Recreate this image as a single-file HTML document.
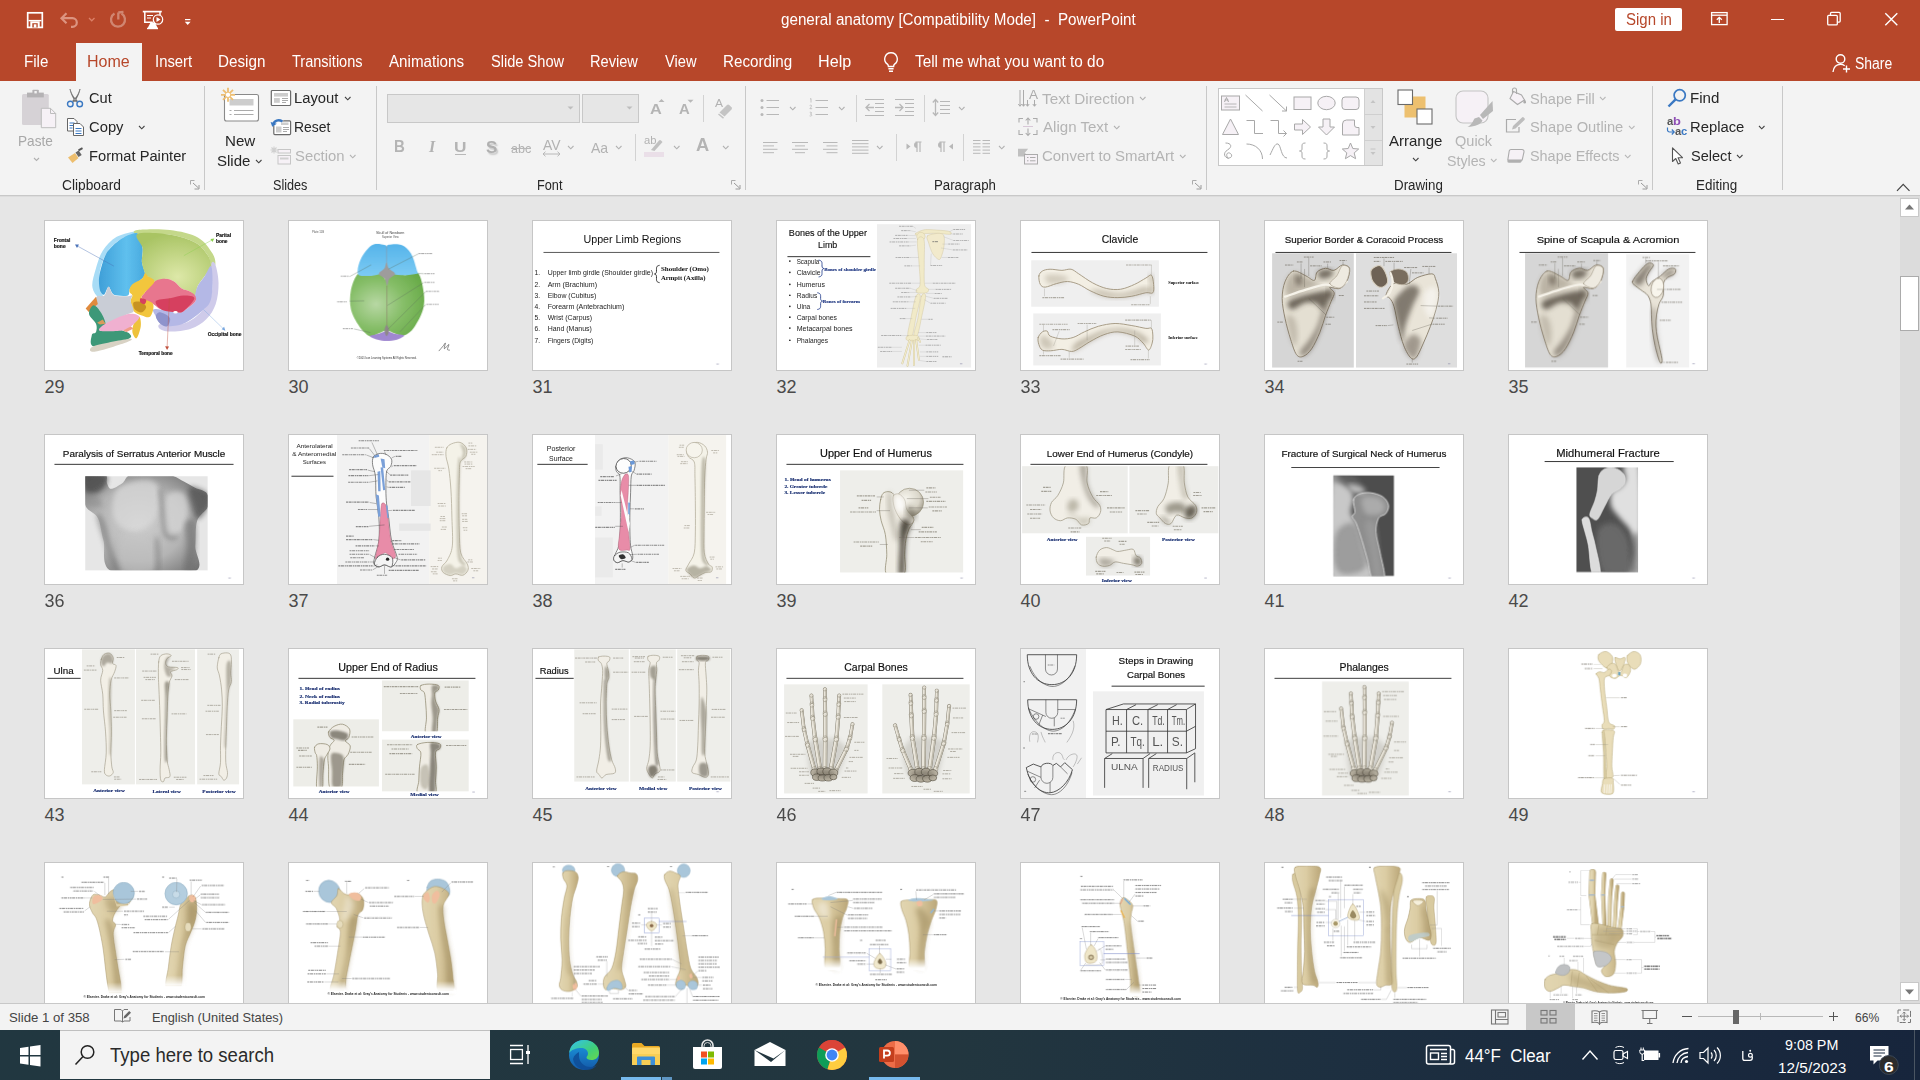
<!DOCTYPE html><html><head><meta charset="utf-8"><title>general anatomy - PowerPoint</title><style>html,body{margin:0;padding:0}
body{width:1920px;height:1080px;position:relative;overflow:hidden;background:#E6E6E6;font-family:"Liberation Sans",sans-serif}
.t{position:absolute;white-space:pre;line-height:1;transform-origin:0 0;display:block}
.a{position:absolute;display:block;overflow:visible}
.th{position:absolute;width:200px;height:151px;box-sizing:border-box;border:1px solid #C6C6C6;background:#fff;overflow:hidden}
.th svg{position:absolute;left:0;top:0;display:block}
.n{position:absolute;font-size:18px;line-height:1;color:#4a4a4a;white-space:nowrap}
</style></head><body>
<svg width="0" height="0" style="position:absolute"><defs><linearGradient id="gbg" x1="0" y1="0" x2="1" y2="0"><stop offset="0" stop-color="#E2D6B2"/><stop offset=".45" stop-color="#DCCDA4"/><stop offset="1" stop-color="#BCA87A"/></linearGradient><filter id="blur0" x="-5%" y="-5%" width="110%" height="110%"><feGaussianBlur stdDeviation="1.1"/></filter><filter id="blur1" x="-5%" y="-5%" width="110%" height="110%"><feGaussianBlur stdDeviation="3"/></filter><filter id="blur3" x="-25%" y="-10%" width="150%" height="120%"><feGaussianBlur stdDeviation="7"/></filter><filter id="blur2" x="-25%" y="-25%" width="150%" height="150%"><feGaussianBlur stdDeviation="18"/></filter></defs></svg>
<div class="th" style="left:44px;top:220px"><svg width="198" height="149" viewBox="0 0 198 149"><g transform="translate(-1 -1) scale(0.13986)" filter="url(#blur1)"><defs><linearGradient id="s29b" x1="0" y1="0" x2="1" y2="0"><stop offset="0" stop-color="#3F9FD8"/><stop offset=".6" stop-color="#5FC0EE"/><stop offset="1" stop-color="#48A9DE"/></linearGradient><radialGradient id="s29g" cx=".55" cy=".7" r=".7"><stop offset="0" stop-color="#DDE8A8"/><stop offset="1" stop-color="#A9C464"/></radialGradient></defs><path d="M665.0 78.0 C640.8 82.2 560.8 96.3 520.0 120.0 C479.2 143.7 445.0 181.7 420.0 220.0 C395.0 258.3 382.5 308.3 370.0 350.0 C357.5 391.7 343.3 437.5 345.0 470.0 C346.7 502.5 367.5 533.3 380.0 545.0 C392.5 556.7 417.5 564.2 420.0 540.0 C422.5 515.8 390.8 450.0 395.0 400.0 C399.2 350.0 420.0 283.3 445.0 240.0 C470.0 196.7 508.3 164.2 545.0 140.0 C581.7 115.8 645.0 105.3 665.0 95.0 C685.0 84.7 689.2 73.8 665.0 78.0Z" fill="#A8DCF6" /><path d="M670.0 72.0 C708.3 67.3 828.3 63.2 900.0 72.0 C971.7 80.8 1049.2 97.0 1100.0 125.0 C1150.8 153.0 1184.2 207.8 1205.0 240.0 C1225.8 272.2 1226.7 304.3 1225.0 318.0 C1223.3 331.7 1204.2 333.3 1195.0 322.0 C1185.8 310.7 1189.2 277.0 1170.0 250.0 C1150.8 223.0 1125.0 184.2 1080.0 160.0 C1035.0 135.8 968.3 115.0 900.0 105.0 C831.7 95.0 708.3 105.5 670.0 100.0 C631.7 94.5 631.7 76.7 670.0 72.0Z" fill="#C4D88A" /><path d="M1225.0 318.0 C1233.8 339.3 1247.5 403.0 1248.0 450.0 C1248.5 497.0 1242.7 556.7 1228.0 600.0 C1213.3 643.3 1189.7 680.3 1160.0 710.0 C1130.3 739.7 1093.3 763.3 1050.0 778.0 C1006.7 792.7 937.5 798.5 900.0 798.0 C862.5 797.5 835.0 784.7 825.0 775.0 C815.0 765.3 810.8 745.8 840.0 740.0 C869.2 734.2 951.7 755.0 1000.0 740.0 C1048.3 725.0 1096.7 686.7 1130.0 650.0 C1163.3 613.3 1189.2 574.7 1200.0 520.0 C1210.8 465.3 1190.8 355.7 1195.0 322.0 C1199.2 288.3 1216.2 296.7 1225.0 318.0Z" fill="#CFCBEA" /><path d="M665.0 95.0 C643.7 87.0 574.3 120.7 545.0 140.0 C515.7 159.3 465.0 205.3 445.0 240.0 C425.0 274.7 401.0 365.3 395.0 400.0 C389.0 434.7 395.3 482.0 400.0 500.0 C404.7 518.0 421.7 537.9 430.0 535.0 C438.3 532.1 452.7 478.0 462.0 478.0 C471.3 478.0 481.6 526.7 500.0 535.0 C518.4 543.3 584.3 546.7 600.0 540.0 C615.7 533.3 604.7 501.0 618.0 485.0 C631.3 469.0 686.1 434.0 700.0 420.0 C713.9 406.0 722.0 396.0 722.0 380.0 C722.0 364.0 702.3 324.0 700.0 300.0 C697.7 276.0 709.7 227.3 705.0 200.0 C700.3 172.7 686.3 103.0 665.0 95.0Z" fill="url(#s29b)" /><path d="M670.0 100.0 C702.5 84.2 831.7 95.0 900.0 105.0 C968.3 115.0 1035.0 135.8 1080.0 160.0 C1125.0 184.2 1150.8 223.0 1170.0 250.0 C1189.2 277.0 1191.7 306.2 1195.0 322.0 C1198.3 337.8 1197.5 332.0 1190.0 345.0 C1182.5 358.0 1165.0 379.2 1150.0 400.0 C1135.0 420.8 1111.7 446.7 1100.0 470.0 C1088.3 493.3 1090.0 533.3 1080.0 540.0 C1070.0 546.7 1055.8 518.3 1040.0 510.0 C1024.2 501.7 1003.3 501.7 985.0 490.0 C966.7 478.3 949.2 451.7 930.0 440.0 C910.8 428.3 893.3 420.0 870.0 420.0 C846.7 420.0 811.7 443.0 790.0 440.0 C768.3 437.0 751.3 412.0 740.0 402.0 C728.7 392.0 728.7 397.0 722.0 380.0 C715.3 363.0 702.8 330.0 700.0 300.0 C697.2 270.0 710.0 233.3 705.0 200.0 C700.0 166.7 637.5 115.8 670.0 100.0Z" fill="url(#s29g)" /><path d="M1195.0 330.0 C1204.2 338.3 1205.8 408.3 1205.0 450.0 C1204.2 491.7 1202.5 546.7 1190.0 580.0 C1177.5 613.3 1161.7 623.3 1130.0 650.0 C1098.3 676.7 1041.7 721.7 1000.0 740.0 C958.3 758.3 908.3 760.0 880.0 760.0 C851.7 760.0 843.3 751.7 830.0 740.0 C816.7 728.3 808.3 706.7 800.0 690.0 C791.7 673.3 773.3 648.3 780.0 640.0 C786.7 631.7 811.7 636.7 840.0 640.0 C868.3 643.3 923.3 658.3 950.0 660.0 C976.7 661.7 978.3 662.5 1000.0 650.0 C1021.7 637.5 1066.7 603.3 1080.0 585.0 C1093.3 566.7 1076.7 559.2 1080.0 540.0 C1083.3 520.8 1088.3 493.3 1100.0 470.0 C1111.7 446.7 1134.2 423.3 1150.0 400.0 C1165.8 376.7 1185.8 321.7 1195.0 330.0Z" fill="#B4B8E6" /><path d="M830.0 660.0 C846.7 661.7 891.7 683.3 900.0 700.0 C908.3 716.7 891.7 753.3 880.0 760.0 C868.3 766.7 843.3 751.7 830.0 740.0 C816.7 728.3 800.0 703.3 800.0 690.0 C800.0 676.7 813.3 658.3 830.0 660.0Z" fill="#8E93CC" /><path d="M870.0 420.0 C893.3 420.0 910.8 428.3 930.0 440.0 C949.2 451.7 966.7 478.3 985.0 490.0 C1003.3 501.7 1024.2 501.7 1040.0 510.0 C1055.8 518.3 1073.3 527.5 1080.0 540.0 C1086.7 552.5 1093.3 566.7 1080.0 585.0 C1066.7 603.3 1021.7 637.5 1000.0 650.0 C978.3 662.5 976.7 661.7 950.0 660.0 C923.3 658.3 868.3 650.0 840.0 640.0 C811.7 630.0 803.3 613.3 780.0 600.0 C756.7 586.7 710.0 573.3 700.0 560.0 C690.0 546.7 705.0 540.0 720.0 520.0 C735.0 500.0 765.0 456.7 790.0 440.0 C815.0 423.3 846.7 420.0 870.0 420.0Z" fill="#E8768E" /><path d="M800.0 580.0 C810.0 566.7 866.7 566.7 900.0 560.0 C933.3 553.3 970.8 540.0 1000.0 540.0 C1029.2 540.0 1075.0 541.7 1075.0 560.0 C1075.0 578.3 1020.8 633.3 1000.0 650.0 C979.2 666.7 976.7 661.7 950.0 660.0 C923.3 658.3 865.0 653.3 840.0 640.0 C815.0 626.7 790.0 593.3 800.0 580.0Z" fill="#D6405E" /><ellipse cx="940" cy="660" rx="16" ry="9" fill="#fff"/><path d="M722.0 380.0 C729.0 377.0 730.7 392.0 742.0 402.0 C753.3 412.0 793.7 420.3 790.0 440.0 C786.3 459.7 735.0 500.0 720.0 520.0 C705.0 540.0 690.0 546.7 700.0 560.0 C710.0 573.3 770.0 578.3 780.0 600.0 C790.0 621.7 773.3 676.3 760.0 690.0 C746.7 703.7 720.0 688.7 700.0 682.0 C680.0 675.3 653.3 667.0 640.0 650.0 C626.7 633.0 621.3 598.3 620.0 580.0 C618.7 561.7 633.7 551.7 632.0 540.0 C630.3 528.3 610.3 523.0 610.0 510.0 C609.7 497.0 615.0 477.0 630.0 462.0 C645.0 447.0 684.7 433.7 700.0 420.0 C715.3 406.3 715.0 383.0 722.0 380.0Z" fill="#F2C63C" /><path d="M640.0 590.0 C646.7 580.8 675.0 580.0 690.0 585.0 C705.0 590.0 728.3 607.5 730.0 620.0 C731.7 632.5 713.3 656.7 700.0 660.0 C686.7 663.3 660.0 651.7 650.0 640.0 C640.0 628.3 633.3 599.2 640.0 590.0Z" fill="#C79322" /><path d="M690.0 560.0 C696.7 556.7 725.0 563.3 730.0 570.0 C735.0 576.7 726.7 596.7 720.0 600.0 C713.3 603.3 695.0 596.7 690.0 590.0 C685.0 583.3 683.3 563.3 690.0 560.0Z" fill="#D6405E" /><path d="M645.0 735.0 C653.3 717.0 674.2 687.8 682.0 692.0 C689.8 696.2 695.3 734.5 692.0 760.0 C688.7 785.5 672.0 838.3 662.0 845.0 C652.0 851.7 634.8 818.3 632.0 800.0 C629.2 781.7 636.7 753.0 645.0 735.0Z" fill="#EEC23A" /><path d="M462.0 478.0 C473.3 477.7 477.0 526.8 500.0 538.0 C523.0 549.2 578.3 544.7 600.0 545.0 C621.7 545.3 626.7 534.2 630.0 540.0 C633.3 545.8 618.3 561.7 620.0 580.0 C621.7 598.3 643.3 634.7 640.0 650.0 C636.7 665.3 633.3 656.7 600.0 672.0 C566.7 687.3 473.3 745.7 440.0 742.0 C406.7 738.3 413.0 673.7 400.0 650.0 C387.0 626.3 365.3 617.5 362.0 600.0 C358.7 582.5 368.3 555.0 380.0 545.0 C391.7 535.0 418.3 551.2 432.0 540.0 C445.7 528.8 450.7 478.3 462.0 478.0Z" fill="#C9CDD6" /><path d="M372.0 548.0 L298.0 632.0 L320.0 658.0 L385.0 600.0Z" fill="#E08A3C" /><path d="M352.0 610.0 C339.0 613.7 318.7 650.0 322.0 672.0 C325.3 694.0 363.7 720.7 372.0 742.0 C380.3 763.3 377.0 786.7 372.0 800.0 C367.0 813.3 344.0 804.5 342.0 822.0 C340.0 839.5 317.0 900.0 360.0 905.0 C403.0 910.0 558.3 867.5 600.0 852.0 C641.7 836.5 616.7 822.3 610.0 812.0 C603.3 801.7 571.7 795.3 560.0 790.0 C548.3 784.7 566.7 779.7 540.0 780.0 C513.3 780.3 416.7 798.3 400.0 792.0 C383.3 785.7 440.0 765.7 440.0 742.0 C440.0 718.3 414.7 672.0 400.0 650.0 C385.3 628.0 365.0 606.3 352.0 610.0Z" fill="#3E9878" /><path d="M380.0 735.0 L420.0 712.0 L440.0 742.0 L400.0 748.0Z" fill="#D89A5C" /><path d="M400.0 792.0 C380.0 784.0 406.7 762.0 440.0 742.0 C473.3 722.0 559.7 680.3 600.0 672.0 C640.3 663.7 678.3 677.0 682.0 692.0 C685.7 707.0 642.3 745.7 622.0 762.0 C601.7 778.3 597.0 785.0 560.0 790.0 C523.0 795.0 420.0 800.0 400.0 792.0Z" fill="#F0B0D0" /><path d="M565.0 790.0 L620.0 762.0 L640.0 775.0 L590.0 800.0Z" fill="#F09C86" /><path d="M355.0 902.0 C394.7 886.7 559.8 855.0 600.0 850.0 C640.2 845.0 635.7 856.7 596.0 872.0 C556.3 887.3 402.2 937.0 362.0 942.0 C321.8 947.0 315.3 917.3 355.0 902.0Z" fill="#D8D2C4" /><path d="M500 330L228 180" stroke="#4A72B8" stroke-width="3" fill="none" /><path d="M222.0 176.0 L250.0 176.0 L236.0 200.0Z" fill="#4A72B8" /><path d="M1000 255L1210 138" stroke="#8CD050" stroke-width="3" fill="none" /><path d="M1218.0 133.0 L1190.0 136.0 L1204.0 158.0Z" fill="#8CD050" /><path d="M1140 640L1290 785" stroke="#7AA8E0" stroke-width="3" fill="none" /><path d="M1297.0 792.0 L1270.0 782.0 L1288.0 764.0Z" fill="#7AA8E0" /><path d="M897 560L880 915" stroke="#C0503C" stroke-width="3" fill="none" /><path d="M880.0 930.0 L866.0 902.0 L894.0 904.0Z" fill="#C0503C" /><text x="70" y="158" font-size="36" textLength="118" lengthAdjust="spacingAndGlyphs" fill="#111" font-family="Liberation Sans" font-weight="bold" stroke="#111" stroke-width="1.2">Frontal</text><text x="70" y="200" font-size="36" textLength="85" lengthAdjust="spacingAndGlyphs" fill="#111" font-family="Liberation Sans" font-weight="bold" stroke="#111" stroke-width="1.2">bone</text><text x="1230" y="120" font-size="36" textLength="108" lengthAdjust="spacingAndGlyphs" fill="#111" font-family="Liberation Sans" font-weight="bold" stroke="#111" stroke-width="1.2">Parital</text><text x="1230" y="163" font-size="36" textLength="82" lengthAdjust="spacingAndGlyphs" fill="#111" font-family="Liberation Sans" font-weight="bold" stroke="#111" stroke-width="1.2">bone</text><text x="1170" y="830" font-size="36" textLength="242" lengthAdjust="spacingAndGlyphs" fill="#111" font-family="Liberation Sans" font-weight="bold" stroke="#111" stroke-width="1.2">Occipital bone</text><text x="678" y="965" font-size="36" textLength="242" lengthAdjust="spacingAndGlyphs" fill="#111" font-family="Liberation Sans" font-weight="bold" stroke="#111" stroke-width="1.2">Temporal bone</text></g></svg></div>
<div class="n" style="left:44.5px;top:377.5px">29</div>
<div class="th" style="left:288px;top:220px"><svg width="198" height="149" viewBox="0 0 198 149"><g transform="translate(-1 -1) scale(0.13986)" filter="url(#blur1)"><defs><radialGradient id="s30g" cx=".35" cy=".5" r=".75"><stop offset="0" stop-color="#B8D8A4"/><stop offset=".5" stop-color="#86BE68"/><stop offset="1" stop-color="#64A844"/></radialGradient><linearGradient id="s30b" x1="0" y1="0" x2="0" y2="1"><stop offset="0" stop-color="#56B4EA"/><stop offset="1" stop-color="#7CCBF4"/></linearGradient></defs><path d="M500.0 385.0 C520.0 368.3 543.3 400.0 570.0 400.0 C596.7 400.0 637.5 380.0 660.0 385.0 C682.5 390.0 690.0 430.0 705.0 430.0 C720.0 430.0 727.5 390.8 750.0 385.0 C772.5 379.2 810.0 395.8 840.0 395.0 C870.0 394.2 908.3 359.2 930.0 380.0 C951.7 400.8 964.2 476.7 970.0 520.0 C975.8 563.3 976.7 598.3 965.0 640.0 C953.3 681.7 922.5 739.2 900.0 770.0 C877.5 800.8 853.3 818.3 830.0 825.0 C806.7 831.7 780.8 815.8 760.0 810.0 C739.2 804.2 723.3 790.0 705.0 790.0 C686.7 790.0 670.0 803.3 650.0 810.0 C630.0 816.7 608.3 838.3 585.0 830.0 C561.7 821.7 532.5 791.7 510.0 760.0 C487.5 728.3 460.0 683.3 450.0 640.0 C440.0 596.7 441.7 542.5 450.0 500.0 C458.3 457.5 480.0 401.7 500.0 385.0Z" fill="url(#s30g)" /><path d="M600.0 180.0 C628.3 163.0 672.5 176.3 690.0 178.0 C707.5 179.7 700.0 190.3 705.0 190.0 C710.0 189.7 702.5 178.0 720.0 176.0 C737.5 174.0 783.3 167.3 810.0 178.0 C836.7 188.7 860.8 208.0 880.0 240.0 C899.2 272.0 916.7 346.3 925.0 370.0 C933.3 393.7 944.2 377.8 930.0 382.0 C915.8 386.2 870.0 394.5 840.0 395.0 C810.0 395.5 772.5 393.3 750.0 385.0 C727.5 376.7 720.0 345.0 705.0 345.0 C690.0 345.0 682.5 375.8 660.0 385.0 C637.5 394.2 596.7 400.0 570.0 400.0 C543.3 400.0 508.3 405.0 500.0 385.0 C491.7 365.0 503.3 314.2 520.0 280.0 C536.7 245.8 571.7 197.0 600.0 180.0Z" fill="url(#s30b)" /><path d="M705.0 300.0 C710.0 300.0 710.0 330.8 720.0 345.0 C730.0 359.2 764.2 372.5 765.0 385.0 C765.8 397.5 734.5 405.8 725.0 420.0 C715.5 434.2 713.5 470.0 708.0 470.0 C702.5 470.0 701.7 434.2 692.0 420.0 C682.3 405.8 650.3 397.5 650.0 385.0 C649.7 372.5 680.8 359.2 690.0 345.0 C699.2 330.8 700.0 300.0 705.0 300.0Z" fill="#9E9C9C" /><path d="M705 185L705 300" stroke="#8a9aa8" stroke-width="4" fill="none" /><path d="M707 470L707 760" stroke="#8C8A6C" stroke-width="5" fill="none" /><path d="M585.0 830.0 C586.7 822.8 630.0 817.8 650.0 812.0 C670.0 806.2 686.7 795.0 705.0 795.0 C723.3 795.0 739.2 806.8 760.0 812.0 C780.8 817.2 826.7 818.8 830.0 826.0 C833.3 833.2 800.8 848.5 780.0 855.0 C759.2 861.5 728.3 865.0 705.0 865.0 C681.7 865.0 660.0 860.8 640.0 855.0 C620.0 849.2 583.3 837.2 585.0 830.0Z" fill="#A088D0" /><path d="M705.0 750.0 C710.3 750.0 722.0 776.7 722.0 790.0 C722.0 803.3 710.3 830.0 705.0 830.0 C699.7 830.0 690.0 803.3 690.0 790.0 C690.0 776.7 699.7 750.0 705.0 750.0Z" fill="#8E8888" /><path d="M440 405L595 320" stroke="#5a6a5a" stroke-width="2.5" fill="none" /><path d="M720 350L935 240" stroke="#5a6a5a" stroke-width="2.5" fill="none" /><path d="M930 382L970 384" stroke="#5a6a5a" stroke-width="2.5" fill="none" /><path d="M712 610L970 448" stroke="#5a6a5a" stroke-width="2.5" fill="none" /><path d="M715 780L985 512" stroke="#5a6a5a" stroke-width="2.5" fill="none" /><path d="M800 800L985 604" stroke="#5a6a5a" stroke-width="2.5" fill="none" /><path d="M440 580L545 578" stroke="#5a6a5a" stroke-width="2.5" fill="none" /><path d="M470 778L590 805" stroke="#5a6a5a" stroke-width="2.5" fill="none" /><path d="M378 402H438" stroke="#8a8a8a" stroke-width="7" stroke-dasharray="14 4 22 5 9 4" opacity=".75"/><path d="M935 240H1030" stroke="#8a8a8a" stroke-width="7" stroke-dasharray="14 4 22 5 9 4" opacity=".75"/><path d="M975 384H1048" stroke="#8a8a8a" stroke-width="7" stroke-dasharray="14 4 22 5 9 4" opacity=".75"/><path d="M975 446H1048" stroke="#8a8a8a" stroke-width="7" stroke-dasharray="14 4 22 5 9 4" opacity=".75"/><path d="M985 510H1080" stroke="#8a8a8a" stroke-width="7" stroke-dasharray="14 4 22 5 9 4" opacity=".75"/><path d="M990 603H1078" stroke="#8a8a8a" stroke-width="7" stroke-dasharray="14 4 22 5 9 4" opacity=".75"/><path d="M352 585H420" stroke="#8a8a8a" stroke-width="7" stroke-dasharray="14 4 22 5 9 4" opacity=".75"/><path d="M392 777H465" stroke="#8a8a8a" stroke-width="7" stroke-dasharray="14 4 22 5 9 4" opacity=".75"/><text x="630" y="102" font-size="30" textLength="202" lengthAdjust="spacingAndGlyphs" fill="#444" font-family="Liberation Sans" >Skull of Newborn</text><text x="672" y="130" font-size="20" textLength="120" lengthAdjust="spacingAndGlyphs" fill="#555" font-family="Liberation Sans" >Superior View</text><text x="172" y="96" font-size="20" textLength="86" lengthAdjust="spacingAndGlyphs" fill="#555" font-family="Liberation Sans" >Plate 11B</text><text x="492" y="996" font-size="21" textLength="428" lengthAdjust="spacingAndGlyphs" fill="#333" font-family="Liberation Sans" >©2001 Icon Learning Systems All Rights Reserved.</text><path d="M1080.0 935.0 C1085.0 929.2 1102.5 909.2 1110.0 900.0 C1117.5 890.8 1123.7 876.7 1125.0 880.0 C1126.3 883.3 1113.8 918.3 1118.0 920.0 C1122.2 921.7 1146.3 889.2 1150.0 890.0 C1153.7 890.8 1139.2 918.3 1140.0 925.0 C1140.8 931.7 1152.5 929.2 1155.0 930.0" fill="none" stroke="#333" stroke-width="4" stroke-linecap="round" stroke-linejoin="round" /></g></svg></div>
<div class="n" style="left:288.5px;top:377.5px">30</div>
<div class="th" style="left:532px;top:220px"><svg width="198" height="149" viewBox="0 0 198 149"><g transform="translate(-1 -1) scale(0.13986)" filter="url(#blur0)"><text x="368" y="165" font-size="74" textLength="698" lengthAdjust="spacingAndGlyphs" fill="#111" font-family="Liberation Sans" >Upper Limb Regions</text><path d="M82 232H1340" stroke="#111" stroke-width="5"/><text x="18" y="392" font-size="48" textLength="40" lengthAdjust="spacingAndGlyphs" fill="#222" font-family="Liberation Sans" >1.</text><text x="112" y="392" font-size="48" textLength="753" lengthAdjust="spacingAndGlyphs" fill="#222" font-family="Liberation Sans" >Upper limb girdle (Shoulder girdle)</text><text x="18" y="478" font-size="48" textLength="40" lengthAdjust="spacingAndGlyphs" fill="#222" font-family="Liberation Sans" >2.</text><text x="112" y="478" font-size="48" textLength="353" lengthAdjust="spacingAndGlyphs" fill="#222" font-family="Liberation Sans" >Arm (Brachium)</text><text x="18" y="556" font-size="48" textLength="40" lengthAdjust="spacingAndGlyphs" fill="#222" font-family="Liberation Sans" >3.</text><text x="112" y="556" font-size="48" textLength="348" lengthAdjust="spacingAndGlyphs" fill="#222" font-family="Liberation Sans" >Elbow (Cubitus)</text><text x="18" y="635" font-size="48" textLength="40" lengthAdjust="spacingAndGlyphs" fill="#222" font-family="Liberation Sans" >4.</text><text x="112" y="635" font-size="48" textLength="548" lengthAdjust="spacingAndGlyphs" fill="#222" font-family="Liberation Sans" >Forearm (Antebrachium)</text><text x="18" y="713" font-size="48" textLength="40" lengthAdjust="spacingAndGlyphs" fill="#222" font-family="Liberation Sans" >5.</text><text x="112" y="713" font-size="48" textLength="318" lengthAdjust="spacingAndGlyphs" fill="#222" font-family="Liberation Sans" >Wrist (Carpus)</text><text x="18" y="791" font-size="48" textLength="40" lengthAdjust="spacingAndGlyphs" fill="#222" font-family="Liberation Sans" >6.</text><text x="112" y="791" font-size="48" textLength="316" lengthAdjust="spacingAndGlyphs" fill="#222" font-family="Liberation Sans" >Hand (Manus)</text><text x="18" y="878" font-size="48" textLength="40" lengthAdjust="spacingAndGlyphs" fill="#222" font-family="Liberation Sans" >7.</text><text x="112" y="878" font-size="48" textLength="326" lengthAdjust="spacingAndGlyphs" fill="#222" font-family="Liberation Sans" >Fingers (Digits)</text><path d="M912 324c-22 4-22 14-22 30v14c0 12-6 16-14 18 8 2 14 6 14 18v14c0 16 0 26 22 30" fill="none" stroke="#111" stroke-width="6"/><text x="922" y="365" font-size="44" textLength="343" lengthAdjust="spacingAndGlyphs" fill="#111" font-family="Liberation Serif" font-weight="bold" >Shoulder (Omo)</text><text x="922" y="428" font-size="44" textLength="318" lengthAdjust="spacingAndGlyphs" fill="#111" font-family="Liberation Serif" font-weight="bold" >Armpit (Axilla)</text><path d="M1318 1030h18" stroke="#8a8aa8" stroke-width="6" opacity=".7"/></g></svg></div>
<div class="n" style="left:532.5px;top:377.5px">31</div>
<div class="th" style="left:776px;top:220px"><svg width="198" height="149" viewBox="0 0 198 149"><g transform="translate(-1 -1) scale(0.13986)" filter="url(#blur0)"><text x="92" y="112" font-size="66" textLength="558" lengthAdjust="spacingAndGlyphs" fill="#111" font-family="Liberation Sans" stroke="#111" stroke-width="1">Bones of the Upper</text><text x="300" y="198" font-size="66" textLength="138" lengthAdjust="spacingAndGlyphs" fill="#111" font-family="Liberation Sans" stroke="#111" stroke-width="1">Limb</text><path d="M82 262L675 262" stroke="#111" stroke-width="6" fill="none" /><circle cx="99" cy="294" r="6" fill="#222"/><text x="148" y="312" font-size="48" textLength="162" lengthAdjust="spacingAndGlyphs" fill="#222" font-family="Liberation Sans" >Scapula</text><circle cx="99" cy="374" r="6" fill="#222"/><text x="148" y="392" font-size="48" textLength="170" lengthAdjust="spacingAndGlyphs" fill="#222" font-family="Liberation Sans" >Clavicle</text><circle cx="99" cy="460" r="6" fill="#222"/><text x="148" y="478" font-size="48" textLength="202" lengthAdjust="spacingAndGlyphs" fill="#222" font-family="Liberation Sans" >Humerus</text><circle cx="99" cy="538" r="6" fill="#222"/><text x="148" y="556" font-size="48" textLength="147" lengthAdjust="spacingAndGlyphs" fill="#222" font-family="Liberation Sans" >Radius</text><circle cx="99" cy="617" r="6" fill="#222"/><text x="148" y="635" font-size="48" textLength="97" lengthAdjust="spacingAndGlyphs" fill="#222" font-family="Liberation Sans" >Ulna</text><circle cx="99" cy="695" r="6" fill="#222"/><text x="148" y="713" font-size="48" textLength="288" lengthAdjust="spacingAndGlyphs" fill="#222" font-family="Liberation Sans" >Carpal bones</text><circle cx="99" cy="773" r="6" fill="#222"/><text x="148" y="791" font-size="48" textLength="400" lengthAdjust="spacingAndGlyphs" fill="#222" font-family="Liberation Sans" >Metacarpal bones</text><circle cx="99" cy="860" r="6" fill="#222"/><text x="148" y="878" font-size="48" textLength="224" lengthAdjust="spacingAndGlyphs" fill="#222" font-family="Liberation Sans" >Phalanges</text><path d="M305 287c24 4 24 14 24 30v12c0 12 6 16 14 18-8 2-14 6-14 18v12c0 16 0 26-24 30" fill="none" stroke="#1F3A8A" stroke-width="6"/><path d="M295 520c24 4 24 14 24 30v12c0 12 6 16 14 18-8 2-14 6-14 18v12c0 16 0 26-24 30" fill="none" stroke="#1F3A8A" stroke-width="6"/><text x="345" y="365" font-size="33" textLength="370" lengthAdjust="spacingAndGlyphs" fill="#1F3A8A" font-family="Liberation Serif" font-weight="bold" stroke="#0B1F66" stroke-width="0.9">Bones of shoulder girdle</text><text x="335" y="592" font-size="33" textLength="265" lengthAdjust="spacingAndGlyphs" fill="#1F3A8A" font-family="Liberation Serif" font-weight="bold" stroke="#0B1F66" stroke-width="0.9">Bones of forearm</text></g><g transform="translate(-1 -1) scale(0.13986)" filter="url(#blur1)"><rect x="722" y="30" width="673" height="1025" fill="#EEEEEE" /><path d="M1000.0 95.0 C1009.2 88.7 1035.0 73.8 1060.0 70.0 C1085.0 66.2 1120.0 70.0 1150.0 72.0 C1180.0 74.0 1224.2 77.0 1240.0 82.0 C1255.8 87.0 1260.0 99.8 1245.0 102.0 C1230.0 104.2 1180.8 95.7 1150.0 95.0 C1119.2 94.3 1084.2 95.8 1060.0 98.0 C1035.8 100.2 1015.0 108.5 1005.0 108.0 C995.0 107.5 990.8 101.3 1000.0 95.0Z" fill="#F1EAC8" stroke="#CFC49A" stroke-width="3" stroke-linecap="round" stroke-linejoin="round" /><path d="M1085.0 112.0 C1101.3 101.2 1170.5 88.7 1190.0 100.0 C1209.5 111.3 1203.3 153.0 1202.0 180.0 C1200.7 207.0 1188.7 245.0 1182.0 262.0 C1175.3 279.0 1172.3 285.7 1162.0 282.0 C1151.7 278.3 1131.7 259.5 1120.0 240.0 C1108.3 220.5 1097.8 186.3 1092.0 165.0 C1086.2 143.7 1068.7 122.8 1085.0 112.0Z" fill="#F2EACC" stroke="#CFC49A" stroke-width="3" stroke-linecap="round" stroke-linejoin="round" /><circle cx="1036" cy="118" r="30" fill="#F1EAC8" stroke="#CFC49A" stroke-width="3"/><path d="M1012.0 140.0 C1018.0 113.3 1050.0 113.3 1058.0 140.0 C1066.0 166.7 1059.3 246.7 1060.0 300.0 C1060.7 353.3 1057.0 427.5 1062.0 460.0 C1067.0 492.5 1087.8 485.0 1090.0 495.0 C1092.2 505.0 1088.3 515.8 1075.0 520.0 C1061.7 524.2 1021.7 524.2 1010.0 520.0 C998.3 515.8 1001.7 505.0 1005.0 495.0 C1008.3 485.0 1027.2 492.5 1030.0 460.0 C1032.8 427.5 1025.0 353.3 1022.0 300.0 C1019.0 246.7 1006.0 166.7 1012.0 140.0Z" fill="#F1EAC8" stroke="#CFC49A" stroke-width="3" stroke-linecap="round" stroke-linejoin="round" /><path d="M1040.0 545.0 C1049.2 519.2 1070.0 519.2 1070.0 545.0 C1070.0 570.8 1049.7 653.8 1040.0 700.0 C1030.3 746.2 1021.2 801.7 1012.0 822.0 C1002.8 842.3 984.5 842.3 985.0 822.0 C985.5 801.7 1005.8 746.2 1015.0 700.0 C1024.2 653.8 1030.8 570.8 1040.0 545.0Z" fill="#F1EAC8" stroke="#CFC49A" stroke-width="3" stroke-linecap="round" stroke-linejoin="round" /><path d="M1000.0 545.0 C1011.2 519.7 1032.0 522.2 1032.0 548.0 C1032.0 573.8 1009.5 654.3 1000.0 700.0 C990.5 745.7 984.7 801.7 975.0 822.0 C965.3 842.3 943.7 842.3 942.0 822.0 C940.3 801.7 955.3 746.2 965.0 700.0 C974.7 653.8 988.8 570.3 1000.0 545.0Z" fill="#F1EAC8" stroke="#CFC49A" stroke-width="3" stroke-linecap="round" stroke-linejoin="round" /><path d="M940.0 828.0 C952.3 822.7 999.0 822.7 1012.0 828.0 C1025.0 833.3 1030.3 854.7 1018.0 860.0 C1005.7 865.3 951.0 865.3 938.0 860.0 C925.0 854.7 927.7 833.3 940.0 828.0Z" fill="#F1EAC8" stroke="#CFC49A" stroke-width="3" stroke-linecap="round" stroke-linejoin="round" /><path d="M955 860L903 1025" stroke="#CFC49A" stroke-width="13" fill="none" stroke-linecap="round"/><path d="M955 860L903 1025" stroke="#F1EAC8" stroke-width="9" fill="none" stroke-linecap="round"/><path d="M972 862L940 1042" stroke="#CFC49A" stroke-width="13" fill="none" stroke-linecap="round"/><path d="M972 862L940 1042" stroke="#F1EAC8" stroke-width="9" fill="none" stroke-linecap="round"/><path d="M988 862L986 1036" stroke="#CFC49A" stroke-width="13" fill="none" stroke-linecap="round"/><path d="M988 862L986 1036" stroke="#F1EAC8" stroke-width="9" fill="none" stroke-linecap="round"/><path d="M1002 858L1022 1000" stroke="#CFC49A" stroke-width="13" fill="none" stroke-linecap="round"/><path d="M1002 858L1022 1000" stroke="#F1EAC8" stroke-width="9" fill="none" stroke-linecap="round"/><path d="M1015 845L1030 870" stroke="#CFC49A" stroke-width="13" fill="none" stroke-linecap="round"/><path d="M1015 845L1030 870" stroke="#F1EAC8" stroke-width="9" fill="none" stroke-linecap="round"/><path d="M880 45H980" stroke="#8a8a8a" stroke-width="6" stroke-dasharray="14 4 22 5 9 4" opacity=".75"/><path d="M980 45L1000 60" stroke="#aaa" stroke-width="2" fill="none" /><path d="M895 76H960" stroke="#8a8a8a" stroke-width="6" stroke-dasharray="14 4 22 5 9 4" opacity=".75"/><path d="M960 76L1000 85" stroke="#aaa" stroke-width="2" fill="none" /><path d="M852 110H940" stroke="#8a8a8a" stroke-width="6" stroke-dasharray="14 4 22 5 9 4" opacity=".75"/><path d="M940 110L1000 112" stroke="#aaa" stroke-width="2" fill="none" /><path d="M840 132H935" stroke="#8a8a8a" stroke-width="6" stroke-dasharray="14 4 22 5 9 4" opacity=".75"/><path d="M935 132L1000 132" stroke="#aaa" stroke-width="2" fill="none" /><path d="M812 157H950" stroke="#8a8a8a" stroke-width="6" stroke-dasharray="14 4 22 5 9 4" opacity=".75"/><path d="M950 157L1005 157" stroke="#aaa" stroke-width="2" fill="none" /><path d="M880 185H960" stroke="#8a8a8a" stroke-width="6" stroke-dasharray="14 4 22 5 9 4" opacity=".75"/><path d="M960 185L1000 180" stroke="#aaa" stroke-width="2" fill="none" /><path d="M855 268H960" stroke="#8a8a8a" stroke-width="6" stroke-dasharray="14 4 22 5 9 4" opacity=".75"/><path d="M960 268L1020 268" stroke="#aaa" stroke-width="2" fill="none" /><path d="M918 328H970" stroke="#8a8a8a" stroke-width="6" stroke-dasharray="14 4 22 5 9 4" opacity=".75"/><path d="M970 328L1030 328" stroke="#aaa" stroke-width="2" fill="none" /><path d="M810 452H970" stroke="#8a8a8a" stroke-width="6" stroke-dasharray="14 4 22 5 9 4" opacity=".75"/><path d="M970 452L1030 452" stroke="#aaa" stroke-width="2" fill="none" /><path d="M852 488H960" stroke="#8a8a8a" stroke-width="6" stroke-dasharray="14 4 22 5 9 4" opacity=".75"/><path d="M960 488L1010 505" stroke="#aaa" stroke-width="2" fill="none" /><path d="M895 518H955" stroke="#8a8a8a" stroke-width="6" stroke-dasharray="14 4 22 5 9 4" opacity=".75"/><path d="M955 518L1010 518" stroke="#aaa" stroke-width="2" fill="none" /><path d="M868 550H960" stroke="#8a8a8a" stroke-width="6" stroke-dasharray="14 4 22 5 9 4" opacity=".75"/><path d="M960 550L1010 548" stroke="#aaa" stroke-width="2" fill="none" /><path d="M835 585H950" stroke="#8a8a8a" stroke-width="6" stroke-dasharray="14 4 22 5 9 4" opacity=".75"/><path d="M950 585L1000 585" stroke="#aaa" stroke-width="2" fill="none" /><path d="M820 632H935" stroke="#8a8a8a" stroke-width="6" stroke-dasharray="14 4 22 5 9 4" opacity=".75"/><path d="M935 632L995 632" stroke="#aaa" stroke-width="2" fill="none" /><path d="M885 705H925" stroke="#8a8a8a" stroke-width="6" stroke-dasharray="14 4 22 5 9 4" opacity=".75"/><path d="M925 705L975 705" stroke="#aaa" stroke-width="2" fill="none" /><path d="M752 826H895" stroke="#8a8a8a" stroke-width="6" stroke-dasharray="14 4 22 5 9 4" opacity=".75"/><path d="M895 826L950 826" stroke="#aaa" stroke-width="2" fill="none" /><path d="M728 910H828" stroke="#8a8a8a" stroke-width="6" stroke-dasharray="14 4 22 5 9 4" opacity=".75"/><path d="M828 910L900 910" stroke="#aaa" stroke-width="2" fill="none" /><path d="M745 940H828" stroke="#8a8a8a" stroke-width="6" stroke-dasharray="14 4 22 5 9 4" opacity=".75"/><path d="M828 940L900 940" stroke="#aaa" stroke-width="2" fill="none" /><path d="M1268 68H1352" stroke="#8a8a8a" stroke-width="6" stroke-dasharray="14 4 22 5 9 4" opacity=".75"/><path d="M1268 68L1240 85" stroke="#aaa" stroke-width="2" fill="none" /><path d="M1268 100H1335" stroke="#8a8a8a" stroke-width="6" stroke-dasharray="14 4 22 5 9 4" opacity=".75"/><path d="M1268 100L1245 100" stroke="#aaa" stroke-width="2" fill="none" /><path d="M1268 146H1378" stroke="#8a8a8a" stroke-width="6" stroke-dasharray="14 4 22 5 9 4" opacity=".75"/><path d="M1268 146L1200 120" stroke="#aaa" stroke-width="2" fill="none" /><path d="M1232 172H1312" stroke="#8a8a8a" stroke-width="6" stroke-dasharray="14 4 22 5 9 4" opacity=".75"/><path d="M1232 172L1190 172" stroke="#aaa" stroke-width="2" fill="none" /><path d="M1265 214H1370" stroke="#8a8a8a" stroke-width="6" stroke-dasharray="14 4 22 5 9 4" opacity=".75"/><path d="M1265 214L1180 200" stroke="#aaa" stroke-width="2" fill="none" /><path d="M1230 268H1308" stroke="#8a8a8a" stroke-width="6" stroke-dasharray="14 4 22 5 9 4" opacity=".75"/><path d="M1230 268L1185 268" stroke="#aaa" stroke-width="2" fill="none" /><path d="M1105 325H1188" stroke="#8a8a8a" stroke-width="6" stroke-dasharray="14 4 22 5 9 4" opacity=".75"/><path d="M1105 325L1110 240" stroke="#aaa" stroke-width="2" fill="none" /><path d="M1122 452H1285" stroke="#8a8a8a" stroke-width="6" stroke-dasharray="14 4 22 5 9 4" opacity=".75"/><path d="M1122 452L1065 452" stroke="#aaa" stroke-width="2" fill="none" /><path d="M1142 496H1252" stroke="#8a8a8a" stroke-width="6" stroke-dasharray="14 4 22 5 9 4" opacity=".75"/><path d="M1142 496L1090 496" stroke="#aaa" stroke-width="2" fill="none" /><path d="M1135 525H1185" stroke="#8a8a8a" stroke-width="6" stroke-dasharray="14 4 22 5 9 4" opacity=".75"/><path d="M1135 525L1075 525" stroke="#aaa" stroke-width="2" fill="none" /><path d="M1128 560H1228" stroke="#8a8a8a" stroke-width="6" stroke-dasharray="14 4 22 5 9 4" opacity=".75"/><path d="M1128 560L1070 545" stroke="#aaa" stroke-width="2" fill="none" /><path d="M1105 595H1212" stroke="#8a8a8a" stroke-width="6" stroke-dasharray="14 4 22 5 9 4" opacity=".75"/><path d="M1105 595L1060 570" stroke="#aaa" stroke-width="2" fill="none" /><path d="M1090 710H1120" stroke="#8a8a8a" stroke-width="6" stroke-dasharray="14 4 22 5 9 4" opacity=".75"/><path d="M1090 710L1040 710" stroke="#aaa" stroke-width="2" fill="none" /><path d="M1075 805H1150" stroke="#8a8a8a" stroke-width="6" stroke-dasharray="14 4 22 5 9 4" opacity=".75"/><path d="M1075 805L1015 805" stroke="#aaa" stroke-width="2" fill="none" /><path d="M1072 830H1210" stroke="#8a8a8a" stroke-width="6" stroke-dasharray="14 4 22 5 9 4" opacity=".75"/><path d="M1072 830L1015 830" stroke="#aaa" stroke-width="2" fill="none" /><path d="M1080 855H1158" stroke="#8a8a8a" stroke-width="6" stroke-dasharray="14 4 22 5 9 4" opacity=".75"/><path d="M1080 855L1020 850" stroke="#aaa" stroke-width="2" fill="none" /><path d="M1070 895H1178" stroke="#8a8a8a" stroke-width="6" stroke-dasharray="14 4 22 5 9 4" opacity=".75"/><path d="M1070 895L1020 895" stroke="#aaa" stroke-width="2" fill="none" /><path d="M1075 943H1160" stroke="#8a8a8a" stroke-width="6" stroke-dasharray="14 4 22 5 9 4" opacity=".75"/><path d="M1075 943L1030 943" stroke="#aaa" stroke-width="2" fill="none" /><path d="M1075 975H1160" stroke="#8a8a8a" stroke-width="6" stroke-dasharray="14 4 22 5 9 4" opacity=".75"/><path d="M1075 975L1030 975" stroke="#aaa" stroke-width="2" fill="none" /><path d="M1075 1012H1148" stroke="#8a8a8a" stroke-width="6" stroke-dasharray="14 4 22 5 9 4" opacity=".75"/><path d="M1075 1012L1030 1005" stroke="#aaa" stroke-width="2" fill="none" /><path d="M1118 155H1160" stroke="#666" stroke-width="7" stroke-dasharray="14 4 22 5 9 4" opacity=".75"/><path d="M1190 978H1255" stroke="#8a8a8a" stroke-width="7" stroke-dasharray="14 4 22 5 9 4" opacity=".75"/><path d="M1315 1028h18" stroke="#8a8aa8" stroke-width="6" opacity=".7"/></g></svg></div>
<div class="n" style="left:776.5px;top:377.5px">32</div>
<div class="th" style="left:1020px;top:220px"><svg width="198" height="149" viewBox="0 0 198 149"><g transform="translate(-1 -1) scale(0.13986)" filter="url(#blur0)"><text x="585" y="166" font-size="74" textLength="260" lengthAdjust="spacingAndGlyphs" fill="#111" font-family="Liberation Sans" stroke="#111" stroke-width="1.2">Clavicle</text><path d="M82 232L1340 232" stroke="#111" stroke-width="6" fill="none" /><text x="1060" y="458" font-size="30" textLength="222" lengthAdjust="spacingAndGlyphs" fill="#000" font-family="Liberation Serif" font-weight="bold" >Superior surface</text><text x="1060" y="850" font-size="30" textLength="212" lengthAdjust="spacingAndGlyphs" fill="#000" font-family="Liberation Serif" font-weight="bold" >Inferior surface</text><path d="M1318 1030h18" stroke="#8a8aa8" stroke-width="6" opacity=".7"/></g><g transform="translate(-1 -1) scale(0.13986)" filter="url(#blur1)"><rect x="80" y="288" width="913" height="332" fill="#EFEFEF" /><rect x="95" y="668" width="912" height="372" fill="#EFEFEF" /><path d="M135.0 400.0 C137.5 384.2 146.7 373.0 160.0 365.0 C173.3 357.0 191.7 352.8 215.0 352.0 C238.3 351.2 275.0 360.0 300.0 360.0 C325.0 360.0 345.0 347.8 365.0 352.0 C385.0 356.2 394.2 368.7 420.0 385.0 C445.8 401.3 486.7 432.5 520.0 450.0 C553.3 467.5 586.7 482.5 620.0 490.0 C653.3 497.5 686.7 500.0 720.0 495.0 C753.3 490.0 790.0 473.3 820.0 460.0 C850.0 446.7 880.0 425.8 900.0 415.0 C920.0 404.2 930.8 387.5 940.0 395.0 C949.2 402.5 953.3 439.2 955.0 460.0 C956.7 480.8 959.2 510.0 950.0 520.0 C940.8 530.0 925.0 515.8 900.0 520.0 C875.0 524.2 833.3 539.2 800.0 545.0 C766.7 550.8 733.3 555.0 700.0 555.0 C666.7 555.0 633.3 553.3 600.0 545.0 C566.7 536.7 530.0 519.2 500.0 505.0 C470.0 490.8 446.7 470.8 420.0 460.0 C393.3 449.2 366.7 440.8 340.0 440.0 C313.3 439.2 286.7 448.3 260.0 455.0 C233.3 461.7 199.2 479.2 180.0 480.0 C160.8 480.8 152.5 473.3 145.0 460.0 C137.5 446.7 132.5 415.8 135.0 400.0Z" fill="#F3EFE4" stroke="#A79C86" stroke-width="7" stroke-linecap="round" stroke-linejoin="round" /><path d="M950.0 520.0 C950.0 526.7 925.0 515.8 900.0 520.0 C875.0 524.2 833.3 539.2 800.0 545.0 C766.7 550.8 733.3 555.0 700.0 555.0 C666.7 555.0 633.3 553.3 600.0 545.0 C566.7 536.7 506.7 512.5 500.0 505.0 C493.3 497.5 526.7 496.7 560.0 500.0 C593.3 503.3 660.0 523.3 700.0 525.0 C740.0 526.7 766.7 517.5 800.0 510.0 C833.3 502.5 875.0 478.3 900.0 480.0 C925.0 481.7 950.0 513.3 950.0 520.0Z" fill="#8A7E68" opacity="0.45" filter="url(#blur2)"/><path d="M180.0 400.0 C190.0 390.0 233.3 388.3 260.0 390.0 C286.7 391.7 328.3 401.7 340.0 410.0 C351.7 418.3 343.3 432.5 330.0 440.0 C316.7 447.5 281.7 453.3 260.0 455.0 C238.3 456.7 213.3 459.2 200.0 450.0 C186.7 440.8 170.0 410.0 180.0 400.0Z" fill="#8A7E68" opacity="0.3" filter="url(#blur2)"/><path d="M920.0 400.0 C921.7 389.2 939.2 385.0 945.0 395.0 C950.8 405.0 954.2 439.2 955.0 460.0 C955.8 480.8 955.0 510.8 950.0 520.0 C945.0 529.2 927.5 525.0 925.0 515.0 C922.5 505.0 935.8 479.2 935.0 460.0 C934.2 440.8 918.3 410.8 920.0 400.0Z" fill="#8A7E68" opacity="0.5" filter="url(#blur2)"/><path d="M130.0 840.0 C134.2 825.0 149.2 807.5 160.0 800.0 C170.8 792.5 185.8 790.0 195.0 795.0 C204.2 800.0 197.5 820.8 215.0 830.0 C232.5 839.2 272.5 848.3 300.0 850.0 C327.5 851.7 353.3 848.3 380.0 840.0 C406.7 831.7 430.0 813.3 460.0 800.0 C490.0 786.7 523.3 770.0 560.0 760.0 C596.7 750.0 640.0 740.8 680.0 740.0 C720.0 739.2 763.3 749.2 800.0 755.0 C836.7 760.8 876.7 771.7 900.0 775.0 C923.3 778.3 931.7 765.8 940.0 775.0 C948.3 784.2 949.2 812.5 950.0 830.0 C950.8 847.5 950.0 863.3 945.0 880.0 C940.0 896.7 930.8 930.0 920.0 930.0 C909.2 930.0 896.7 896.7 880.0 880.0 C863.3 863.3 850.0 843.3 820.0 830.0 C790.0 816.7 736.7 801.7 700.0 800.0 C663.3 798.3 633.3 808.3 600.0 820.0 C566.7 831.7 530.0 853.3 500.0 870.0 C470.0 886.7 441.7 908.3 420.0 920.0 C398.3 931.7 390.0 939.2 370.0 940.0 C350.0 940.8 325.0 925.8 300.0 925.0 C275.0 924.2 243.3 934.2 220.0 935.0 C196.7 935.8 174.2 937.5 160.0 930.0 C145.8 922.5 140.0 905.0 135.0 890.0 C130.0 875.0 125.8 855.0 130.0 840.0Z" fill="#F3EFE4" stroke="#A79C86" stroke-width="7" stroke-linecap="round" stroke-linejoin="round" /><path d="M880.0 880.0 C863.3 875.0 850.0 843.3 820.0 830.0 C790.0 816.7 736.7 801.7 700.0 800.0 C663.3 798.3 633.3 808.3 600.0 820.0 C566.7 831.7 530.0 853.3 500.0 870.0 C470.0 886.7 441.7 908.3 420.0 920.0 C398.3 931.7 373.3 946.7 370.0 940.0 C366.7 933.3 378.3 898.3 400.0 880.0 C421.7 861.7 466.7 845.0 500.0 830.0 C533.3 815.0 563.3 799.2 600.0 790.0 C636.7 780.8 680.0 773.3 720.0 775.0 C760.0 776.7 806.7 785.8 840.0 800.0 C873.3 814.2 913.3 846.7 920.0 860.0 C926.7 873.3 896.7 885.0 880.0 880.0Z" fill="#8A7E68" opacity="0.5" filter="url(#blur2)"/><path d="M150.0 830.0 C158.3 820.0 185.0 828.3 200.0 840.0 C215.0 851.7 240.0 885.8 240.0 900.0 C240.0 914.2 215.0 925.0 200.0 925.0 C185.0 925.0 158.3 915.8 150.0 900.0 C141.7 884.2 141.7 840.0 150.0 830.0Z" fill="#8A7E68" opacity="0.35" filter="url(#blur2)"/><path d="M758 322H940" stroke="#9a968c" stroke-width="8" stroke-dasharray="14 4 22 5 9 4" opacity=".75"/><path d="M160 555H315" stroke="#9a968c" stroke-width="8" stroke-dasharray="14 4 22 5 9 4" opacity=".75"/><path d="M795 606H930" stroke="#9a968c" stroke-width="8" stroke-dasharray="14 4 22 5 9 4" opacity=".75"/><path d="M752 716H935" stroke="#9a968c" stroke-width="8" stroke-dasharray="14 4 22 5 9 4" opacity=".75"/><path d="M138 745H340" stroke="#9a968c" stroke-width="8" stroke-dasharray="14 4 22 5 9 4" opacity=".75"/><path d="M412 740H548" stroke="#9a968c" stroke-width="8" stroke-dasharray="14 4 22 5 9 4" opacity=".75"/><path d="M232 784H355" stroke="#9a968c" stroke-width="8" stroke-dasharray="14 4 22 5 9 4" opacity=".75"/><path d="M755 902H850" stroke="#9a968c" stroke-width="8" stroke-dasharray="14 4 22 5 9 4" opacity=".75"/><path d="M752 926H865" stroke="#9a968c" stroke-width="8" stroke-dasharray="14 4 22 5 9 4" opacity=".75"/><path d="M138 970H290" stroke="#9a968c" stroke-width="8" stroke-dasharray="14 4 22 5 9 4" opacity=".75"/><path d="M290 995H455" stroke="#9a968c" stroke-width="8" stroke-dasharray="14 4 22 5 9 4" opacity=".75"/><path d="M790 998H928" stroke="#9a968c" stroke-width="8" stroke-dasharray="14 4 22 5 9 4" opacity=".75"/><path d="M940 322L940 395" stroke="#8a867c" stroke-width="2" fill="none" /><path d="M175 490L175 545" stroke="#8a867c" stroke-width="2" fill="none" /><path d="M932 545L932 600" stroke="#8a867c" stroke-width="2" fill="none" /><path d="M940 716L940 775" stroke="#8a867c" stroke-width="2" fill="none" /><path d="M168 750L168 800" stroke="#8a867c" stroke-width="2" fill="none" /><path d="M480 748L480 860" stroke="#8a867c" stroke-width="2" fill="none" /><path d="M280 795L240 900" stroke="#8a867c" stroke-width="2" fill="none" /><path d="M820 790L820 895" stroke="#8a867c" stroke-width="2" fill="none" /><path d="M168 935L168 962" stroke="#8a867c" stroke-width="2" fill="none" /><path d="M352 940L352 985" stroke="#8a867c" stroke-width="2" fill="none" /><path d="M918 930L918 990" stroke="#8a867c" stroke-width="2" fill="none" /></g></svg></div>
<div class="n" style="left:1020.5px;top:377.5px">33</div>
<div class="th" style="left:1264px;top:220px"><svg width="198" height="149" viewBox="0 0 198 149"><g transform="translate(-1 -1) scale(0.13986)" filter="url(#blur0)"><text x="148" y="162" font-size="62" textLength="1134" lengthAdjust="spacingAndGlyphs" fill="#111" font-family="Liberation Sans" stroke="#111" stroke-width="1.2">Superior Border &amp; Coracoid Process</text><path d="M82 232L1340 232" stroke="#111" stroke-width="6" fill="none" /></g><g transform="translate(-1 -1) scale(0.13986)" filter="url(#blur1)"><rect x="58" y="238" width="584" height="817" fill="#D6D6D6" /><rect x="658" y="238" width="722" height="817" fill="#DEDEDE" /><path d="M210.0 365.0 C235.0 358.0 275.0 388.8 300.0 400.0 C325.0 411.2 346.7 436.7 360.0 432.0 C373.3 427.3 366.7 386.5 380.0 372.0 C393.3 357.5 420.0 347.0 440.0 345.0 C460.0 343.0 480.0 363.8 500.0 360.0 C520.0 356.2 541.3 324.3 560.0 322.0 C578.7 319.7 606.7 326.3 612.0 346.0 C617.3 365.7 604.0 416.0 592.0 440.0 C580.0 464.0 560.3 483.0 540.0 490.0 C519.7 497.0 476.3 476.7 470.0 482.0 C463.7 487.3 500.3 505.3 502.0 522.0 C503.7 538.7 490.3 555.3 480.0 582.0 C469.7 608.7 453.3 645.3 440.0 682.0 C426.7 718.7 416.7 762.0 400.0 802.0 C383.3 842.0 360.0 893.2 340.0 922.0 C320.0 950.8 298.0 968.3 280.0 975.0 C262.0 981.7 247.0 982.5 232.0 962.0 C217.0 941.5 203.7 895.3 190.0 852.0 C176.3 808.7 160.0 750.3 150.0 702.0 C140.0 653.7 130.0 605.3 130.0 562.0 C130.0 518.7 136.7 474.8 150.0 442.0 C163.3 409.2 185.0 372.0 210.0 365.0Z" fill="#E4DFD2" stroke="#8E8472" stroke-width="7" stroke-linecap="round" stroke-linejoin="round" /><path d="M160.0 440.0 C167.5 411.7 191.7 380.8 215.0 375.0 C238.3 369.2 275.8 394.2 300.0 405.0 C324.2 415.8 343.3 431.7 360.0 440.0 C376.7 448.3 410.0 445.0 400.0 455.0 C390.0 465.0 338.3 485.0 300.0 500.0 C261.7 515.0 193.3 555.0 170.0 545.0 C146.7 535.0 152.5 468.3 160.0 440.0Z" fill="#8A8070" opacity="0.45" filter="url(#blur2)"/><path d="M235.0 395.0 C241.2 390.0 256.5 390.0 262.0 400.0 C267.5 410.0 271.7 444.2 268.0 455.0 C264.3 465.8 247.2 469.2 240.0 465.0 C232.8 460.8 225.8 441.7 225.0 430.0 C224.2 418.3 228.8 400.0 235.0 395.0Z" fill="#4A4034" opacity="0.55" filter="url(#blur2)"/><path d="M175.0 585.0 C191.7 567.5 255.8 548.3 300.0 535.0 C344.2 521.7 410.8 507.5 440.0 505.0 C469.2 502.5 470.0 510.8 475.0 520.0 C480.0 529.2 479.2 540.0 470.0 560.0 C460.8 580.0 435.0 633.3 420.0 640.0 C405.0 646.7 400.0 608.3 380.0 600.0 C360.0 591.7 330.0 583.3 300.0 590.0 C270.0 596.7 220.8 640.8 200.0 640.0 C179.2 639.2 158.3 602.5 175.0 585.0Z" fill="#3E352A" opacity="0.7" filter="url(#blur2)"/><path d="M420.0 640.0 C435.0 606.7 466.7 553.0 470.0 560.0 C473.3 567.0 451.7 641.7 440.0 682.0 C428.3 722.3 416.7 762.0 400.0 802.0 C383.3 842.0 359.2 893.7 340.0 922.0 C320.8 950.3 299.2 968.2 285.0 972.0 C270.8 975.8 249.2 963.7 255.0 945.0 C260.8 926.3 299.2 890.8 320.0 860.0 C340.8 829.2 363.3 796.7 380.0 760.0 C396.7 723.3 405.0 673.3 420.0 640.0Z" fill="#5A5044" opacity="0.55" filter="url(#blur2)"/><path d="M160.0 690.0 C164.2 665.0 201.7 681.7 215.0 700.0 C228.3 718.3 238.3 766.7 240.0 800.0 C241.7 833.3 233.3 891.7 225.0 900.0 C216.7 908.3 200.8 885.0 190.0 850.0 C179.2 815.0 155.8 715.0 160.0 690.0Z" fill="#7A705E" opacity="0.3" filter="url(#blur2)"/><path d="M385.0 375.0 C390.8 364.0 421.7 353.7 440.0 352.0 C458.3 350.3 490.0 355.3 495.0 365.0 C500.0 374.7 485.0 401.2 470.0 410.0 C455.0 418.8 419.2 423.8 405.0 418.0 C390.8 412.2 379.2 386.0 385.0 375.0Z" fill="#3E352A" opacity="0.65" filter="url(#blur2)"/><path d="M455.0 485.0 C462.5 480.8 495.0 505.0 500.0 520.0 C505.0 535.0 492.5 570.8 485.0 575.0 C477.5 579.2 460.0 560.0 455.0 545.0 C450.0 530.0 447.5 489.2 455.0 485.0Z" fill="#4A4034" opacity="0.5" filter="url(#blur2)"/><path d="M150.0 548.0 C175.0 539.7 251.7 512.3 300.0 498.0 C348.3 483.7 400.0 465.3 440.0 462.0 C480.0 458.7 514.7 481.7 540.0 478.0 C565.3 474.3 583.3 446.3 592.0 440.0" fill="none" stroke="#F6F3EA" stroke-width="16" stroke-linecap="round" stroke-linejoin="round" /><path d="M470.0 455.0 C466.7 440.7 505.0 421.2 520.0 400.0 C535.0 378.8 545.0 336.7 560.0 328.0 C575.0 319.3 605.0 329.7 610.0 348.0 C615.0 366.3 601.7 415.0 590.0 438.0 C578.3 461.0 560.0 483.2 540.0 486.0 C520.0 488.8 473.3 469.3 470.0 455.0Z" fill="#EEEAE0" stroke="#9A907E" stroke-width="4" stroke-linecap="round" stroke-linejoin="round" /><path d="M1040.0 450.0 C1056.7 441.3 1073.3 420.8 1100.0 410.0 C1126.7 399.2 1179.0 383.3 1200.0 385.0 C1221.0 386.7 1217.7 397.5 1226.0 420.0 C1234.3 442.5 1249.3 483.3 1250.0 520.0 C1250.7 556.7 1240.0 600.0 1230.0 640.0 C1220.0 680.0 1205.0 720.0 1190.0 760.0 C1175.0 800.0 1156.7 843.3 1140.0 880.0 C1123.3 916.7 1105.0 962.3 1090.0 980.0 C1075.0 997.7 1065.0 999.3 1050.0 986.0 C1035.0 972.7 1015.0 937.7 1000.0 900.0 C985.0 862.3 971.7 806.7 960.0 760.0 C948.3 713.3 940.0 653.3 930.0 620.0 C920.0 586.7 909.7 573.3 900.0 560.0 C890.3 546.7 872.0 553.3 872.0 540.0 C872.0 526.7 888.7 495.0 900.0 480.0 C911.3 465.0 923.3 453.0 940.0 450.0 C956.7 447.0 983.3 462.0 1000.0 462.0 C1016.7 462.0 1023.3 458.7 1040.0 450.0Z" fill="#E9E4D8" stroke="#8E8472" stroke-width="7" stroke-linecap="round" stroke-linejoin="round" /><path d="M940.0 560.0 C958.3 535.0 1011.7 480.0 1040.0 470.0 C1068.3 460.0 1106.7 475.0 1110.0 500.0 C1113.3 525.0 1076.7 576.7 1060.0 620.0 C1043.3 663.3 1021.7 716.7 1010.0 760.0 C998.3 803.3 998.3 880.0 990.0 880.0 C981.7 880.0 970.0 803.3 960.0 760.0 C950.0 716.7 933.3 653.3 930.0 620.0 C926.7 586.7 921.7 585.0 940.0 560.0Z" fill="#3E352A" opacity="0.6" filter="url(#blur2)"/><path d="M1000.0 900.0 C1001.7 872.7 1040.0 826.7 1060.0 820.0 C1080.0 813.3 1115.0 833.7 1120.0 860.0 C1125.0 886.3 1101.7 957.3 1090.0 978.0 C1078.3 998.7 1065.0 997.0 1050.0 984.0 C1035.0 971.0 998.3 927.3 1000.0 900.0Z" fill="#5A5044" opacity="0.5" filter="url(#blur2)"/><path d="M1150.0 520.0 C1161.7 493.3 1205.0 473.3 1220.0 480.0 C1235.0 486.7 1243.3 523.3 1240.0 560.0 C1236.7 596.7 1215.0 686.7 1200.0 700.0 C1185.0 713.3 1158.3 670.0 1150.0 640.0 C1141.7 610.0 1138.3 546.7 1150.0 520.0Z" fill="#FFFFFF" opacity="0.5" filter="url(#blur2)"/><path d="M770.0 352.0 C781.0 341.0 813.3 321.3 830.0 326.0 C846.7 330.7 861.3 359.3 870.0 380.0 C878.7 400.7 888.3 433.0 882.0 450.0 C875.7 467.0 849.0 483.3 832.0 482.0 C815.0 480.7 791.3 457.0 780.0 442.0 C768.7 427.0 765.7 407.0 764.0 392.0 C762.3 377.0 759.0 363.0 770.0 352.0Z" fill="#6E6254" stroke="#D8D0C0" stroke-width="8" stroke-linecap="round" stroke-linejoin="round" /><path d="M900.0 372.0 C907.5 360.3 940.0 350.0 960.0 350.0 C980.0 350.0 1008.0 358.7 1020.0 372.0 C1032.0 385.3 1035.3 415.0 1032.0 430.0 C1028.7 445.0 1015.3 458.3 1000.0 462.0 C984.7 465.7 954.2 459.0 940.0 452.0 C925.8 445.0 921.7 433.3 915.0 420.0 C908.3 406.7 892.5 383.7 900.0 372.0Z" fill="#7A6E5E" stroke="#C8C0B0" stroke-width="6" stroke-linecap="round" stroke-linejoin="round" /><path d="M905.0 380.0 C907.5 390.0 920.8 416.7 920.0 440.0 C919.2 463.3 911.7 500.0 900.0 520.0 C888.3 540.0 858.3 553.3 850.0 560.0" fill="none" stroke="#F4F0E6" stroke-width="16" stroke-linecap="round" stroke-linejoin="round" /><path d="M285 265H355" stroke="#7a766c" stroke-width="7" stroke-dasharray="14 4 22 5 9 4" opacity=".75"/><path d="M150 322H210" stroke="#7a766c" stroke-width="7" stroke-dasharray="14 4 22 5 9 4" opacity=".75"/><path d="M235 300H275" stroke="#7a766c" stroke-width="7" stroke-dasharray="14 4 22 5 9 4" opacity=".75"/><path d="M330 328H412" stroke="#7a766c" stroke-width="7" stroke-dasharray="14 4 22 5 9 4" opacity=".75"/><path d="M425 300H480" stroke="#7a766c" stroke-width="7" stroke-dasharray="14 4 22 5 9 4" opacity=".75"/><path d="M540 290H590" stroke="#7a766c" stroke-width="7" stroke-dasharray="14 4 22 5 9 4" opacity=".75"/><path d="M535 540H570" stroke="#7a766c" stroke-width="7" stroke-dasharray="14 4 22 5 9 4" opacity=".75"/><path d="M445 695H505" stroke="#7a766c" stroke-width="7" stroke-dasharray="14 4 22 5 9 4" opacity=".75"/><path d="M440 745H478" stroke="#7a766c" stroke-width="7" stroke-dasharray="14 4 22 5 9 4" opacity=".75"/><path d="M95 730H135" stroke="#7a766c" stroke-width="7" stroke-dasharray="14 4 22 5 9 4" opacity=".75"/><path d="M240 1010H275" stroke="#7a766c" stroke-width="7" stroke-dasharray="14 4 22 5 9 4" opacity=".75"/><path d="M785 268H930" stroke="#7a766c" stroke-width="7" stroke-dasharray="14 4 22 5 9 4" opacity=".75"/><path d="M785 296H832" stroke="#7a766c" stroke-width="7" stroke-dasharray="14 4 22 5 9 4" opacity=".75"/><path d="M868 296H992" stroke="#7a766c" stroke-width="7" stroke-dasharray="14 4 22 5 9 4" opacity=".75"/><path d="M1002 340H1095" stroke="#7a766c" stroke-width="7" stroke-dasharray="14 4 22 5 9 4" opacity=".75"/><path d="M1132 332H1225" stroke="#7a766c" stroke-width="7" stroke-dasharray="14 4 22 5 9 4" opacity=".75"/><path d="M1058 378H1140" stroke="#7a766c" stroke-width="7" stroke-dasharray="14 4 22 5 9 4" opacity=".75"/><path d="M732 508H822" stroke="#7a766c" stroke-width="7" stroke-dasharray="14 4 22 5 9 4" opacity=".75"/><path d="M715 542H820" stroke="#7a766c" stroke-width="7" stroke-dasharray="14 4 22 5 9 4" opacity=".75"/><path d="M715 586H805" stroke="#7a766c" stroke-width="7" stroke-dasharray="14 4 22 5 9 4" opacity=".75"/><path d="M715 632H862" stroke="#7a766c" stroke-width="7" stroke-dasharray="14 4 22 5 9 4" opacity=".75"/><path d="M798 755H880" stroke="#7a766c" stroke-width="7" stroke-dasharray="14 4 22 5 9 4" opacity=".75"/><path d="M1245 616H1352" stroke="#7a766c" stroke-width="7" stroke-dasharray="14 4 22 5 9 4" opacity=".75"/><path d="M1232 702H1312" stroke="#7a766c" stroke-width="7" stroke-dasharray="14 4 22 5 9 4" opacity=".75"/><path d="M1205 745H1292" stroke="#7a766c" stroke-width="7" stroke-dasharray="14 4 22 5 9 4" opacity=".75"/><path d="M1018 1030H1102" stroke="#7a766c" stroke-width="7" stroke-dasharray="14 4 22 5 9 4" opacity=".75"/><path d="M320 270L320 400" stroke="#4a463c" stroke-width="2" fill="none" /><path d="M265 310L265 420" stroke="#4a463c" stroke-width="2" fill="none" /><path d="M290 350L290 480" stroke="#4a463c" stroke-width="2" fill="none" /><path d="M455 312L455 345" stroke="#4a463c" stroke-width="2" fill="none" /><path d="M565 298L565 322" stroke="#4a463c" stroke-width="2" fill="none" /><path d="M320 560L445 680" stroke="#4a463c" stroke-width="2" fill="none" /><path d="M858 275L858 330" stroke="#4a463c" stroke-width="2" fill="none" /><path d="M930 305L930 360" stroke="#4a463c" stroke-width="2" fill="none" /><path d="M1050 350L1040 440" stroke="#4a463c" stroke-width="2" fill="none" /><path d="M1180 340L1180 385" stroke="#4a463c" stroke-width="2" fill="none" /><path d="M1240 616L1120 612" stroke="#4a463c" stroke-width="2" fill="none" /><path d="M1225 702L1180 700" stroke="#4a463c" stroke-width="2" fill="none" /><path d="M1200 745L1060 790" stroke="#4a463c" stroke-width="2" fill="none" /><path d="M885 755L925 750" stroke="#4a463c" stroke-width="2" fill="none" /><path d="M1060 990L1060 1020" stroke="#4a463c" stroke-width="2" fill="none" /><path d="M1315 1028h18" stroke="#8a8aa8" stroke-width="6" opacity=".7"/></g></svg></div>
<div class="n" style="left:1264.5px;top:377.5px">34</div>
<div class="th" style="left:1508px;top:220px"><svg width="198" height="149" viewBox="0 0 198 149"><g transform="translate(-1 -1) scale(0.13986)" filter="url(#blur0)"><text x="205" y="162" font-size="66" textLength="1020" lengthAdjust="spacingAndGlyphs" fill="#111" font-family="Liberation Sans" stroke="#111" stroke-width="1.2">Spine of Scapula &amp; Acromion</text><path d="M82 232L1340 232" stroke="#111" stroke-width="6" fill="none" /></g><g transform="translate(-1 -1) scale(0.13986)" filter="url(#blur1)"><rect x="122" y="238" width="593" height="817" fill="#D6D6D6" /><rect x="845" y="245" width="450" height="810" fill="#F2F2F2" /><path d="M280.0 365.0 C305.0 358.0 345.0 388.8 370.0 400.0 C395.0 411.2 416.7 436.7 430.0 432.0 C443.3 427.3 436.7 386.5 450.0 372.0 C463.3 357.5 490.0 347.0 510.0 345.0 C530.0 343.0 550.0 363.8 570.0 360.0 C590.0 356.2 611.3 324.3 630.0 322.0 C648.7 319.7 676.7 326.3 682.0 346.0 C687.3 365.7 674.0 416.0 662.0 440.0 C650.0 464.0 630.3 483.0 610.0 490.0 C589.7 497.0 546.3 476.7 540.0 482.0 C533.7 487.3 570.3 505.3 572.0 522.0 C573.7 538.7 560.3 555.3 550.0 582.0 C539.7 608.7 523.3 645.3 510.0 682.0 C496.7 718.7 486.7 762.0 470.0 802.0 C453.3 842.0 430.0 893.2 410.0 922.0 C390.0 950.8 368.0 968.3 350.0 975.0 C332.0 981.7 317.0 982.5 302.0 962.0 C287.0 941.5 273.7 895.3 260.0 852.0 C246.3 808.7 230.0 750.3 220.0 702.0 C210.0 653.7 200.0 605.3 200.0 562.0 C200.0 518.7 206.7 474.8 220.0 442.0 C233.3 409.2 255.0 372.0 280.0 365.0Z" fill="#E4DFD2" stroke="#8E8472" stroke-width="7" stroke-linecap="round" stroke-linejoin="round" /><path d="M230.0 440.0 C237.5 411.7 261.7 380.8 285.0 375.0 C308.3 369.2 345.8 394.2 370.0 405.0 C394.2 415.8 413.3 431.7 430.0 440.0 C446.7 448.3 480.0 445.0 470.0 455.0 C460.0 465.0 408.3 485.0 370.0 500.0 C331.7 515.0 263.3 555.0 240.0 545.0 C216.7 535.0 222.5 468.3 230.0 440.0Z" fill="#8A8070" opacity="0.45" filter="url(#blur2)"/><path d="M305.0 395.0 C311.2 390.0 326.5 390.0 332.0 400.0 C337.5 410.0 341.7 444.2 338.0 455.0 C334.3 465.8 317.2 469.2 310.0 465.0 C302.8 460.8 295.8 441.7 295.0 430.0 C294.2 418.3 298.8 400.0 305.0 395.0Z" fill="#4A4034" opacity="0.55" filter="url(#blur2)"/><path d="M245.0 585.0 C261.7 567.5 325.8 548.3 370.0 535.0 C414.2 521.7 480.8 507.5 510.0 505.0 C539.2 502.5 540.0 510.8 545.0 520.0 C550.0 529.2 549.2 540.0 540.0 560.0 C530.8 580.0 505.0 633.3 490.0 640.0 C475.0 646.7 470.0 608.3 450.0 600.0 C430.0 591.7 400.0 583.3 370.0 590.0 C340.0 596.7 290.8 640.8 270.0 640.0 C249.2 639.2 228.3 602.5 245.0 585.0Z" fill="#3E352A" opacity="0.7" filter="url(#blur2)"/><path d="M490.0 640.0 C505.0 606.7 536.7 553.0 540.0 560.0 C543.3 567.0 521.7 641.7 510.0 682.0 C498.3 722.3 486.7 762.0 470.0 802.0 C453.3 842.0 429.2 893.7 410.0 922.0 C390.8 950.3 369.2 968.2 355.0 972.0 C340.8 975.8 319.2 963.7 325.0 945.0 C330.8 926.3 369.2 890.8 390.0 860.0 C410.8 829.2 433.3 796.7 450.0 760.0 C466.7 723.3 475.0 673.3 490.0 640.0Z" fill="#5A5044" opacity="0.55" filter="url(#blur2)"/><path d="M230.0 690.0 C234.2 665.0 271.7 681.7 285.0 700.0 C298.3 718.3 308.3 766.7 310.0 800.0 C311.7 833.3 303.3 891.7 295.0 900.0 C286.7 908.3 270.8 885.0 260.0 850.0 C249.2 815.0 225.8 715.0 230.0 690.0Z" fill="#7A705E" opacity="0.3" filter="url(#blur2)"/><path d="M455.0 375.0 C460.8 364.0 491.7 353.7 510.0 352.0 C528.3 350.3 560.0 355.3 565.0 365.0 C570.0 374.7 555.0 401.2 540.0 410.0 C525.0 418.8 489.2 423.8 475.0 418.0 C460.8 412.2 449.2 386.0 455.0 375.0Z" fill="#3E352A" opacity="0.65" filter="url(#blur2)"/><path d="M525.0 485.0 C532.5 480.8 565.0 505.0 570.0 520.0 C575.0 535.0 562.5 570.8 555.0 575.0 C547.5 579.2 530.0 560.0 525.0 545.0 C520.0 530.0 517.5 489.2 525.0 485.0Z" fill="#4A4034" opacity="0.5" filter="url(#blur2)"/><path d="M220.0 548.0 C245.0 539.7 321.7 512.3 370.0 498.0 C418.3 483.7 470.0 465.3 510.0 462.0 C550.0 458.7 584.7 481.7 610.0 478.0 C635.3 474.3 653.3 446.3 662.0 440.0" fill="none" stroke="#F6F3EA" stroke-width="16" stroke-linecap="round" stroke-linejoin="round" /><path d="M540.0 455.0 C536.7 440.7 575.0 421.2 590.0 400.0 C605.0 378.8 615.0 336.7 630.0 328.0 C645.0 319.3 675.0 329.7 680.0 348.0 C685.0 366.3 671.7 415.0 660.0 438.0 C648.3 461.0 630.0 483.2 610.0 486.0 C590.0 488.8 543.3 469.3 540.0 455.0Z" fill="#EEEAE0" stroke="#9A907E" stroke-width="4" stroke-linecap="round" stroke-linejoin="round" /><path d="M890.0 440.0 C895.0 423.3 921.7 391.7 940.0 370.0 C958.3 348.3 983.3 318.0 1000.0 310.0 C1016.7 302.0 1038.3 312.0 1040.0 322.0 C1041.7 332.0 1018.7 353.7 1010.0 370.0 C1001.3 386.3 988.8 403.3 988.0 420.0 C987.2 436.7 998.0 466.7 1005.0 470.0 C1012.0 473.3 1015.8 451.7 1030.0 440.0 C1044.2 428.3 1070.0 415.0 1090.0 400.0 C1110.0 385.0 1132.3 358.3 1150.0 350.0 C1167.7 341.7 1189.3 344.0 1196.0 350.0 C1202.7 356.0 1199.3 375.7 1190.0 386.0 C1180.7 396.3 1153.0 401.0 1140.0 412.0 C1127.0 423.0 1117.0 430.7 1112.0 452.0 C1107.0 473.3 1115.3 515.3 1110.0 540.0 C1104.7 564.7 1088.0 576.7 1080.0 600.0 C1072.0 623.3 1065.7 653.3 1062.0 680.0 C1058.3 706.7 1057.0 733.3 1058.0 760.0 C1059.0 786.7 1063.0 811.7 1068.0 840.0 C1073.0 868.3 1082.3 902.5 1088.0 930.0 C1093.7 957.5 1102.3 990.7 1102.0 1005.0 C1101.7 1019.3 1094.3 1033.5 1086.0 1016.0 C1077.7 998.5 1061.0 939.3 1052.0 900.0 C1043.0 860.7 1036.3 816.7 1032.0 780.0 C1027.7 743.3 1027.7 710.0 1026.0 680.0 C1024.3 650.0 1026.3 623.3 1022.0 600.0 C1017.7 576.7 1012.0 556.7 1000.0 540.0 C988.0 523.3 965.0 511.7 950.0 500.0 C935.0 488.3 920.0 480.0 910.0 470.0 C900.0 460.0 885.0 456.7 890.0 440.0Z" fill="#E9E4D8" stroke="#7E7462" stroke-width="6" stroke-linecap="round" stroke-linejoin="round" /><path d="M895.0 440.0 C895.8 423.7 927.5 392.8 945.0 372.0 C962.5 351.2 985.0 322.8 1000.0 315.0 C1015.0 307.2 1035.0 315.0 1035.0 325.0 C1035.0 335.0 1010.0 357.5 1000.0 375.0 C990.0 392.5 985.0 414.2 975.0 430.0 C965.0 445.8 953.3 468.3 940.0 470.0 C926.7 471.7 894.2 456.3 895.0 440.0Z" fill="#4A4034" opacity="0.6" filter="url(#blur2)"/><path d="M1095.0 405.0 C1098.3 395.5 1133.8 363.3 1150.0 355.0 C1166.2 346.7 1186.2 350.0 1192.0 355.0 C1197.8 360.0 1195.3 375.5 1185.0 385.0 C1174.7 394.5 1145.0 408.7 1130.0 412.0 C1115.0 415.3 1091.7 414.5 1095.0 405.0Z" fill="#5A5044" opacity="0.55" filter="url(#blur2)"/><path d="M1030.0 640.0 C1033.0 620.0 1045.0 613.3 1050.0 640.0 C1055.0 666.7 1053.3 740.0 1060.0 800.0 C1066.7 860.0 1087.5 965.0 1090.0 1000.0 C1092.5 1035.0 1082.5 1026.7 1075.0 1010.0 C1067.5 993.3 1052.2 941.7 1045.0 900.0 C1037.8 858.3 1034.5 803.3 1032.0 760.0 C1029.5 716.7 1027.0 660.0 1030.0 640.0Z" fill="#5A5044" opacity="0.5" filter="url(#blur2)"/><ellipse cx="1068" cy="485" rx="44" ry="70" fill="#F8F5EC" stroke="#9A907E" stroke-width="5" transform="rotate(12 1068 485)"/><path d="M355 265H425" stroke="#7a766c" stroke-width="7" stroke-dasharray="14 4 22 5 9 4" opacity=".75"/><path d="M220 322H280" stroke="#7a766c" stroke-width="7" stroke-dasharray="14 4 22 5 9 4" opacity=".75"/><path d="M305 300H345" stroke="#7a766c" stroke-width="7" stroke-dasharray="14 4 22 5 9 4" opacity=".75"/><path d="M400 328H482" stroke="#7a766c" stroke-width="7" stroke-dasharray="14 4 22 5 9 4" opacity=".75"/><path d="M495 300H550" stroke="#7a766c" stroke-width="7" stroke-dasharray="14 4 22 5 9 4" opacity=".75"/><path d="M610 290H660" stroke="#7a766c" stroke-width="7" stroke-dasharray="14 4 22 5 9 4" opacity=".75"/><path d="M605 540H640" stroke="#7a766c" stroke-width="7" stroke-dasharray="14 4 22 5 9 4" opacity=".75"/><path d="M515 695H575" stroke="#7a766c" stroke-width="7" stroke-dasharray="14 4 22 5 9 4" opacity=".75"/><path d="M510 745H548" stroke="#7a766c" stroke-width="7" stroke-dasharray="14 4 22 5 9 4" opacity=".75"/><path d="M165 730H205" stroke="#7a766c" stroke-width="7" stroke-dasharray="14 4 22 5 9 4" opacity=".75"/><path d="M310 1010H345" stroke="#7a766c" stroke-width="7" stroke-dasharray="14 4 22 5 9 4" opacity=".75"/><path d="M962 268H1015" stroke="#7a766c" stroke-width="7" stroke-dasharray="14 4 22 5 9 4" opacity=".75"/><path d="M985 292H1140" stroke="#7a766c" stroke-width="7" stroke-dasharray="14 4 22 5 9 4" opacity=".75"/><path d="M1108 328H1225" stroke="#7a766c" stroke-width="7" stroke-dasharray="14 4 22 5 9 4" opacity=".75"/><path d="M1135 496H1235" stroke="#7a766c" stroke-width="7" stroke-dasharray="14 4 22 5 9 4" opacity=".75"/><path d="M1098 588H1245" stroke="#7a766c" stroke-width="7" stroke-dasharray="14 4 22 5 9 4" opacity=".75"/><path d="M1085 717H1165" stroke="#7a766c" stroke-width="7" stroke-dasharray="14 4 22 5 9 4" opacity=".75"/><path d="M1130 1018H1215" stroke="#7a766c" stroke-width="7" stroke-dasharray="14 4 22 5 9 4" opacity=".75"/><path d="M390 270L390 400" stroke="#5a564c" stroke-width="2" fill="none" /><path d="M335 310L335 420" stroke="#5a564c" stroke-width="2" fill="none" /><path d="M360 350L360 480" stroke="#5a564c" stroke-width="2" fill="none" /><path d="M525 312L525 345" stroke="#5a564c" stroke-width="2" fill="none" /><path d="M635 298L635 322" stroke="#5a564c" stroke-width="2" fill="none" /><path d="M390 560L515 680" stroke="#5a564c" stroke-width="2" fill="none" /><path d="M1075 300L1075 420" stroke="#5a564c" stroke-width="2" fill="none" /><path d="M985 275L985 310" stroke="#5a564c" stroke-width="2" fill="none" /><path d="M1065 496L1130 496" stroke="#5a564c" stroke-width="2" fill="none" /><path d="M1090 1018L1125 1018" stroke="#5a564c" stroke-width="2" fill="none" /><path d="M1318 1028h18" stroke="#8a8aa8" stroke-width="6" opacity=".7"/></g></svg></div>
<div class="n" style="left:1508.5px;top:377.5px">35</div>
<div class="th" style="left:44px;top:434px"><svg width="198" height="149" viewBox="0 0 198 149"><g transform="translate(-1 -1) scale(0.13986)" filter="url(#blur0)"><text x="135" y="162" font-size="62" textLength="1161" lengthAdjust="spacingAndGlyphs" fill="#111" font-family="Liberation Sans" stroke="#111" stroke-width="1.2">Paralysis of Serratus Anterior Muscle</text><path d="M75 217L1355 217" stroke="#111" stroke-width="6" fill="none" /><path d="M1318 1030h18" stroke="#8a8aa8" stroke-width="6" opacity=".7"/></g><g transform="translate(-1 -1) scale(0.13986)" filter="url(#blur1)"><defs><radialGradient id="s36g" cx=".45" cy=".5" r=".65"><stop offset="0" stop-color="#CFCFCF"/><stop offset=".55" stop-color="#B4B4B4"/><stop offset="1" stop-color="#6E6E6E"/></radialGradient><clipPath id="s36c"><rect x="295" y="302" width="875" height="673"/></clipPath></defs><rect x="295" y="302" width="875" height="673" fill="#E6E6E6" /><g clip-path="url(#s36c)"><path d="M280.0 290.0 C305.0 271.7 406.7 280.0 435.0 290.0 C463.3 300.0 442.5 333.0 450.0 350.0 C457.5 367.0 461.7 391.7 480.0 392.0 C498.3 392.3 535.0 369.0 560.0 352.0 C585.0 335.0 576.7 300.3 630.0 290.0 C683.3 279.7 818.3 281.7 880.0 290.0 C941.7 298.3 966.7 324.2 1000.0 340.0 C1033.3 355.8 1052.5 370.8 1080.0 385.0 C1107.5 399.2 1149.7 402.5 1165.0 425.0 C1180.3 447.5 1183.7 487.5 1172.0 520.0 C1160.3 552.5 1110.0 573.3 1095.0 620.0 C1080.0 666.7 1087.0 738.3 1082.0 800.0 C1077.0 861.7 1162.0 958.3 1065.0 990.0 C968.0 1021.7 606.7 1028.3 500.0 990.0 C393.3 951.7 444.2 825.0 425.0 760.0 C405.8 695.0 405.8 640.0 385.0 600.0 C364.2 560.0 316.7 553.3 300.0 520.0 C283.3 486.7 288.3 438.3 285.0 400.0 C281.7 361.7 255.0 308.3 280.0 290.0Z" fill="url(#s36g)" /><path d="M285.0 290.0 C309.2 271.7 407.8 280.0 435.0 290.0 C462.2 300.0 453.8 330.0 448.0 350.0 C442.2 370.0 419.7 396.7 400.0 410.0 C380.3 423.3 348.3 431.7 330.0 430.0 C311.7 428.3 297.5 423.3 290.0 400.0 C282.5 376.7 260.8 308.3 285.0 290.0Z" fill="#444" opacity="0.75" filter="url(#blur2)"/><path d="M300.0 420.0 C313.3 413.3 360.0 423.3 380.0 440.0 C400.0 456.7 426.7 506.7 420.0 520.0 C413.3 533.3 360.0 526.7 340.0 520.0 C320.0 513.3 306.7 496.7 300.0 480.0 C293.3 463.3 286.7 426.7 300.0 420.0Z" fill="#8a8a8a" opacity="0.5" filter="url(#blur2)"/><path d="M520.0 400.0 C553.3 355.0 650.0 333.3 700.0 330.0 C750.0 326.7 803.3 335.0 820.0 380.0 C836.7 425.0 830.0 546.7 800.0 600.0 C770.0 653.3 690.0 700.0 640.0 700.0 C590.0 700.0 520.0 650.0 500.0 600.0 C480.0 550.0 486.7 445.0 520.0 400.0Z" fill="#DADADA" opacity="0.7" filter="url(#blur2)"/><path d="M828.0 400.0 C830.8 420.0 839.3 470.0 845.0 520.0 C850.7 570.0 852.0 662.5 862.0 700.0 C872.0 737.5 891.2 739.2 905.0 745.0 C918.8 750.8 938.3 736.7 945.0 735.0" fill="none" stroke="#5A5A5A" stroke-width="14" stroke-linecap="round" stroke-linejoin="round" opacity=".75" filter="url(#blur2)"/><path d="M880.0 440.0 C898.3 410.0 965.0 403.3 990.0 420.0 C1015.0 436.7 1030.8 495.0 1030.0 540.0 C1029.2 585.0 1005.8 663.3 985.0 690.0 C964.2 716.7 922.5 715.0 905.0 700.0 C887.5 685.0 884.2 643.3 880.0 600.0 C875.8 556.7 861.7 470.0 880.0 440.0Z" fill="#D6D6D6" opacity="0.75" filter="url(#blur2)"/><path d="M1040.0 380.0 C1057.5 364.2 1143.0 401.7 1165.0 425.0 C1187.0 448.3 1182.8 489.2 1172.0 520.0 C1161.2 550.8 1118.7 610.0 1100.0 610.0 C1081.3 610.0 1070.0 558.3 1060.0 520.0 C1050.0 481.7 1022.5 395.8 1040.0 380.0Z" fill="#4A4A4A" opacity="0.65" filter="url(#blur2)"/><path d="M1010.0 640.0 C1020.8 613.3 1074.7 584.2 1085.0 640.0 C1095.3 695.8 1085.3 919.2 1072.0 975.0 C1058.7 1030.8 1013.7 1004.2 1005.0 975.0 C996.3 945.8 1019.2 855.8 1020.0 800.0 C1020.8 744.2 999.2 666.7 1010.0 640.0Z" fill="#6A6A6A" opacity="0.55" filter="url(#blur2)"/><path d="M385.0 560.0 C395.0 563.3 424.2 600.0 440.0 640.0 C455.8 680.0 462.5 744.2 480.0 800.0 C497.5 855.8 542.5 945.8 545.0 975.0 C547.5 1004.2 515.0 1010.8 495.0 975.0 C475.0 939.2 444.2 819.2 425.0 760.0 C405.8 700.8 386.7 653.3 380.0 620.0 C373.3 586.7 375.0 556.7 385.0 560.0Z" fill="#707070" opacity="0.5" filter="url(#blur2)"/><path d="M795.0 760.0 C800.0 724.2 815.8 724.2 822.0 760.0 C828.2 795.8 837.0 939.2 832.0 975.0 C827.0 1010.8 798.2 1010.8 792.0 975.0 C785.8 939.2 790.0 795.8 795.0 760.0Z" fill="#7A7A7A" opacity="0.5" filter="url(#blur2)"/><path d="M560.0 720.0 C593.3 684.2 723.3 717.5 760.0 760.0 C796.7 802.5 813.3 939.2 780.0 975.0 C746.7 1010.8 596.7 1017.5 560.0 975.0 C523.3 932.5 526.7 755.8 560.0 720.0Z" fill="#C4C4C4" opacity="0.5" filter="url(#blur2)"/></g></g></svg></div>
<div class="n" style="left:44.5px;top:591.5px">36</div>
<div class="th" style="left:288px;top:434px"><svg width="198" height="149" viewBox="0 0 198 149"><g transform="translate(-1 -1) scale(0.13986)" filter="url(#blur0)"><text x="60" y="97" font-size="42" textLength="260" lengthAdjust="spacingAndGlyphs" fill="#222" font-family="Liberation Sans" >Anterolateral</text><text x="30" y="155" font-size="42" textLength="315" lengthAdjust="spacingAndGlyphs" fill="#222" font-family="Liberation Sans" >&amp; Anteromedial</text><text x="105" y="212" font-size="42" textLength="167" lengthAdjust="spacingAndGlyphs" fill="#222" font-family="Liberation Sans" >Surfaces</text><path d="M25 302L325 302" stroke="#111" stroke-width="6" fill="none" /></g><g transform="translate(-1 -1) scale(0.13986)" filter="url(#blur1)"><rect x="350" y="8" width="660" height="1064" fill="#F2F2F2" /><rect x="1010" y="8" width="420" height="1064" fill="#F5F3EE" /><rect x="880" y="260" width="140" height="255" fill="#E6E6E6" /><rect x="795" y="640" width="225" height="52" fill="#E6E6E6" /><path d="M610.0 165.0 C617.5 151.7 635.0 143.3 650.0 140.0 C665.0 136.7 685.0 138.3 700.0 145.0 C715.0 151.7 734.2 165.8 740.0 180.0 C745.8 194.2 740.8 215.0 735.0 230.0 C729.2 245.0 710.8 241.7 705.0 270.0 C699.2 298.3 700.0 361.7 700.0 400.0 C700.0 438.3 701.7 466.7 705.0 500.0 C708.3 533.3 714.2 556.7 720.0 600.0 C725.8 643.3 730.0 713.3 740.0 760.0 C750.0 806.7 775.0 853.3 780.0 880.0 C785.0 906.7 776.7 908.3 770.0 920.0 C763.3 931.7 753.3 947.5 740.0 950.0 C726.7 952.5 705.0 935.0 690.0 935.0 C675.0 935.0 662.5 950.8 650.0 950.0 C637.5 949.2 620.0 941.7 615.0 930.0 C610.0 918.3 614.2 908.3 620.0 880.0 C625.8 851.7 645.0 806.7 650.0 760.0 C655.0 713.3 653.3 651.7 650.0 600.0 C646.7 548.3 634.2 500.0 630.0 450.0 C625.8 400.0 629.2 338.3 625.0 300.0 C620.8 261.7 607.5 242.5 605.0 220.0 C602.5 197.5 602.5 178.3 610.0 165.0Z" fill="#FCFCFC" stroke="#555" stroke-width="5" stroke-linecap="round" stroke-linejoin="round" /><path d="M670.0 500.0 C676.7 485.0 692.5 493.3 700.0 510.0 C707.5 526.7 709.2 558.3 715.0 600.0 C720.8 641.7 725.8 715.0 735.0 760.0 C744.2 805.0 769.2 848.3 770.0 870.0 C770.8 891.7 751.7 893.3 740.0 890.0 C728.3 886.7 713.3 853.3 700.0 850.0 C686.7 846.7 672.5 863.3 660.0 870.0 C647.5 876.7 626.7 908.3 625.0 890.0 C623.3 871.7 644.2 808.3 650.0 760.0 C655.8 711.7 656.7 643.3 660.0 600.0 C663.3 556.7 663.3 515.0 670.0 500.0Z" fill="#E88CA8" stroke="#B06078" stroke-width="3" stroke-linecap="round" stroke-linejoin="round" /><path d="M640.0 270.0 L660.0 265.0 L662.0 410.0 L645.0 410.0Z" fill="#7AA0D8" /><path d="M662.0 240.0 L680.0 238.0 L695.0 400.0 L680.0 402.0Z" fill="#7AA0D8" /><path d="M628.0 430.0 L650.0 440.0 L662.0 590.0 L645.0 592.0Z" fill="#7AA0D8" /><path d="M662.0 175.0 L690.0 180.0 L695.0 245.0 L675.0 240.0Z" fill="#7AA0D8" /><path d="M612.0 155.0 L650.0 145.0 L652.0 162.0 L618.0 172.0Z" fill="#7AA0D8" /><path d="M700.0 510.0 L712.0 512.0 L720.0 600.0 L710.0 600.0Z" fill="#7AA0D8" /><path d="M640.0 880.0 C652.0 868.3 672.5 859.2 690.0 860.0 C707.5 860.8 736.7 870.0 745.0 885.0 C753.3 900.0 749.2 941.7 740.0 950.0 C730.8 958.3 705.0 935.0 690.0 935.0 C675.0 935.0 662.0 950.8 650.0 950.0 C638.0 949.2 619.7 941.7 618.0 930.0 C616.3 918.3 628.0 891.7 640.0 880.0Z" fill="#F4F4F4" stroke="#444" stroke-width="5" stroke-linecap="round" stroke-linejoin="round" /><circle cx="712" cy="895" r="12" fill="#222"/><path d="M505 48H650" stroke="#666" stroke-width="8" stroke-dasharray="14 4 22 5 9 4" opacity=".75"/><path d="M450 100H580" stroke="#666" stroke-width="8" stroke-dasharray="14 4 22 5 9 4" opacity=".75"/><path d="M388 148H555" stroke="#666" stroke-width="8" stroke-dasharray="14 4 22 5 9 4" opacity=".75"/><path d="M437 255H565" stroke="#666" stroke-width="8" stroke-dasharray="14 4 22 5 9 4" opacity=".75"/><path d="M432 298H575" stroke="#666" stroke-width="8" stroke-dasharray="14 4 22 5 9 4" opacity=".75"/><path d="M430 345H575" stroke="#666" stroke-width="8" stroke-dasharray="14 4 22 5 9 4" opacity=".75"/><path d="M415 487H580" stroke="#666" stroke-width="8" stroke-dasharray="14 4 22 5 9 4" opacity=".75"/><path d="M500 540H565" stroke="#666" stroke-width="8" stroke-dasharray="14 4 22 5 9 4" opacity=".75"/><path d="M485 662H575" stroke="#666" stroke-width="8" stroke-dasharray="14 4 22 5 9 4" opacity=".75"/><path d="M415 730H470" stroke="#666" stroke-width="8" stroke-dasharray="14 4 22 5 9 4" opacity=".75"/><path d="M415 755H605" stroke="#666" stroke-width="8" stroke-dasharray="14 4 22 5 9 4" opacity=".75"/><path d="M483 800H620" stroke="#666" stroke-width="8" stroke-dasharray="14 4 22 5 9 4" opacity=".75"/><path d="M440 835H580" stroke="#666" stroke-width="8" stroke-dasharray="14 4 22 5 9 4" opacity=".75"/><path d="M440 860H580" stroke="#666" stroke-width="8" stroke-dasharray="14 4 22 5 9 4" opacity=".75"/><path d="M445 885H545" stroke="#666" stroke-width="8" stroke-dasharray="14 4 22 5 9 4" opacity=".75"/><path d="M410 915H578" stroke="#666" stroke-width="8" stroke-dasharray="14 4 22 5 9 4" opacity=".75"/><path d="M360 943H605" stroke="#666" stroke-width="8" stroke-dasharray="14 4 22 5 9 4" opacity=".75"/><path d="M515 972H600" stroke="#666" stroke-width="8" stroke-dasharray="14 4 22 5 9 4" opacity=".75"/><path d="M635 1010H712" stroke="#666" stroke-width="8" stroke-dasharray="14 4 22 5 9 4" opacity=".75"/><path d="M685 118H925" stroke="#666" stroke-width="8" stroke-dasharray="14 4 22 5 9 4" opacity=".75"/><path d="M770 160H815" stroke="#666" stroke-width="8" stroke-dasharray="14 4 22 5 9 4" opacity=".75"/><path d="M757 226H920" stroke="#666" stroke-width="8" stroke-dasharray="14 4 22 5 9 4" opacity=".75"/><path d="M730 294H862" stroke="#666" stroke-width="8" stroke-dasharray="14 4 22 5 9 4" opacity=".75"/><path d="M722 342H875" stroke="#666" stroke-width="8" stroke-dasharray="14 4 22 5 9 4" opacity=".75"/><path d="M725 382H835" stroke="#666" stroke-width="8" stroke-dasharray="14 4 22 5 9 4" opacity=".75"/><path d="M750 546H910" stroke="#666" stroke-width="8" stroke-dasharray="14 4 22 5 9 4" opacity=".75"/><path d="M745 762H810" stroke="#666" stroke-width="8" stroke-dasharray="14 4 22 5 9 4" opacity=".75"/><path d="M745 786H940" stroke="#666" stroke-width="8" stroke-dasharray="14 4 22 5 9 4" opacity=".75"/><path d="M757 826H900" stroke="#666" stroke-width="8" stroke-dasharray="14 4 22 5 9 4" opacity=".75"/><path d="M790 860H925" stroke="#666" stroke-width="8" stroke-dasharray="14 4 22 5 9 4" opacity=".75"/><path d="M810 900H985" stroke="#666" stroke-width="8" stroke-dasharray="14 4 22 5 9 4" opacity=".75"/><path d="M770 943H990" stroke="#666" stroke-width="8" stroke-dasharray="14 4 22 5 9 4" opacity=".75"/><path d="M720 975H935" stroke="#666" stroke-width="8" stroke-dasharray="14 4 22 5 9 4" opacity=".75"/><path d="M600 60L640 150" stroke="#444" stroke-width="2.5" fill="none" /><path d="M582 105L625 160" stroke="#444" stroke-width="2.5" fill="none" /><path d="M560 150L612 170" stroke="#444" stroke-width="2.5" fill="none" /><path d="M570 258L620 270" stroke="#444" stroke-width="2.5" fill="none" /><path d="M580 298L645 290" stroke="#444" stroke-width="2.5" fill="none" /><path d="M580 345L640 335" stroke="#444" stroke-width="2.5" fill="none" /><path d="M585 490L632 498" stroke="#444" stroke-width="2.5" fill="none" /><path d="M570 540L640 540" stroke="#444" stroke-width="2.5" fill="none" /><path d="M580 660L690 650" stroke="#444" stroke-width="2.5" fill="none" /><path d="M610 755L650 760" stroke="#444" stroke-width="2.5" fill="none" /><path d="M625 800L650 800" stroke="#444" stroke-width="2.5" fill="none" /><path d="M585 862L625 885" stroke="#444" stroke-width="2.5" fill="none" /><path d="M582 915L620 915" stroke="#444" stroke-width="2.5" fill="none" /><path d="M610 945L640 935" stroke="#444" stroke-width="2.5" fill="none" /><path d="M605 972L650 945" stroke="#444" stroke-width="2.5" fill="none" /><path d="M690 1000L690 940" stroke="#444" stroke-width="2.5" fill="none" /><path d="M740 235L752 226" stroke="#444" stroke-width="2.5" fill="none" /><path d="M700 265L728 290" stroke="#444" stroke-width="2.5" fill="none" /><path d="M705 330L720 342" stroke="#444" stroke-width="2.5" fill="none" /><path d="M705 378L722 382" stroke="#444" stroke-width="2.5" fill="none" /><path d="M715 548L745 546" stroke="#444" stroke-width="2.5" fill="none" /><path d="M735 770L745 770" stroke="#444" stroke-width="2.5" fill="none" /><path d="M760 885L805 900" stroke="#444" stroke-width="2.5" fill="none" /><path d="M745 940L768 943" stroke="#444" stroke-width="2.5" fill="none" /><path d="M765 160L742 170" stroke="#444" stroke-width="2.5" fill="none" /><path d="M700 150L690 125" stroke="#444" stroke-width="2.5" fill="none" /><path d="M1135.0 100.0 C1141.7 85.0 1154.2 76.7 1170.0 70.0 C1185.8 63.3 1212.5 55.0 1230.0 60.0 C1247.5 65.0 1268.0 83.3 1275.0 100.0 C1282.0 116.7 1279.2 143.3 1272.0 160.0 C1264.8 176.7 1239.8 176.7 1232.0 200.0 C1224.2 223.3 1226.7 250.0 1225.0 300.0 C1223.3 350.0 1222.0 433.3 1222.0 500.0 C1222.0 566.7 1222.8 641.7 1225.0 700.0 C1227.2 758.3 1225.5 811.7 1235.0 850.0 C1244.5 888.3 1273.5 909.2 1282.0 930.0 C1290.5 950.8 1291.3 961.7 1286.0 975.0 C1280.7 988.3 1264.3 1005.8 1250.0 1010.0 C1235.7 1014.2 1215.0 999.7 1200.0 1000.0 C1185.0 1000.3 1175.0 1013.7 1160.0 1012.0 C1145.0 1010.3 1120.0 1000.3 1110.0 990.0 C1100.0 979.7 1095.0 965.0 1100.0 950.0 C1105.0 935.0 1127.5 925.0 1140.0 900.0 C1152.5 875.0 1169.7 850.0 1175.0 800.0 C1180.3 750.0 1173.7 666.7 1172.0 600.0 C1170.3 533.3 1168.7 458.3 1165.0 400.0 C1161.3 341.7 1155.8 290.0 1150.0 250.0 C1144.2 210.0 1132.5 185.0 1130.0 160.0 C1127.5 135.0 1128.3 115.0 1135.0 100.0Z" fill="#F4F2E8" stroke="#B8B2A0" stroke-width="6" stroke-linecap="round" stroke-linejoin="round" /><path d="M1215.0 200.0 C1219.5 150.0 1230.3 150.0 1232.0 200.0 C1233.7 250.0 1224.5 391.7 1225.0 500.0 C1225.5 608.3 1227.5 778.3 1235.0 850.0 C1242.5 921.7 1269.2 916.7 1270.0 930.0 C1270.8 943.3 1250.0 943.3 1240.0 930.0 C1230.0 916.7 1215.8 921.7 1210.0 850.0 C1204.2 778.3 1204.2 608.3 1205.0 500.0 C1205.8 391.7 1210.5 250.0 1215.0 200.0Z" fill="#9A947E" opacity="0.45" filter="url(#blur3)"/><path d="M1230.0 70.0 C1233.7 65.0 1265.3 85.0 1272.0 100.0 C1278.7 115.0 1276.2 144.2 1270.0 160.0 C1263.8 175.8 1238.3 200.0 1235.0 195.0 C1231.7 190.0 1250.8 150.8 1250.0 130.0 C1249.2 109.2 1226.3 75.0 1230.0 70.0Z" fill="#9A947E" opacity="0.45" filter="url(#blur3)"/><path d="M1110.0 950.0 C1118.0 940.3 1145.0 928.3 1160.0 930.0 C1175.0 931.7 1185.0 958.3 1200.0 960.0 C1215.0 961.7 1236.7 938.3 1250.0 940.0 C1263.3 941.7 1280.0 959.2 1280.0 970.0 C1280.0 980.8 1263.3 1000.8 1250.0 1005.0 C1236.7 1009.2 1215.0 994.5 1200.0 995.0 C1185.0 995.5 1174.7 1009.2 1160.0 1008.0 C1145.3 1006.8 1120.3 997.7 1112.0 988.0 C1103.7 978.3 1102.0 959.7 1110.0 950.0Z" fill="#9A947E" opacity="0.35" filter="url(#blur3)"/><path d="M1050 95H1112" stroke="#a09a8c" stroke-width="6" stroke-dasharray="14 4 22 5 9 4" opacity=".75"/><path d="M1060 130H1110" stroke="#a09a8c" stroke-width="6" stroke-dasharray="14 4 22 5 9 4" opacity=".75"/><path d="M1028 148H1112" stroke="#a09a8c" stroke-width="6" stroke-dasharray="14 4 22 5 9 4" opacity=".75"/><path d="M1290 65H1318" stroke="#a09a8c" stroke-width="6" stroke-dasharray="14 4 22 5 9 4" opacity=".75"/><path d="M1290 85H1350" stroke="#a09a8c" stroke-width="6" stroke-dasharray="14 4 22 5 9 4" opacity=".75"/><path d="M1285 110H1345" stroke="#a09a8c" stroke-width="6" stroke-dasharray="14 4 22 5 9 4" opacity=".75"/><path d="M1300 130H1355" stroke="#a09a8c" stroke-width="6" stroke-dasharray="14 4 22 5 9 4" opacity=".75"/><path d="M1310 145H1340" stroke="#a09a8c" stroke-width="6" stroke-dasharray="14 4 22 5 9 4" opacity=".75"/><path d="M1260 200H1320" stroke="#a09a8c" stroke-width="6" stroke-dasharray="14 4 22 5 9 4" opacity=".75"/><path d="M1262 215H1322" stroke="#a09a8c" stroke-width="6" stroke-dasharray="14 4 22 5 9 4" opacity=".75"/><path d="M1248 232H1335" stroke="#a09a8c" stroke-width="6" stroke-dasharray="14 4 22 5 9 4" opacity=".75"/><path d="M1270 248H1310" stroke="#a09a8c" stroke-width="6" stroke-dasharray="14 4 22 5 9 4" opacity=".75"/><path d="M1045 245H1125" stroke="#a09a8c" stroke-width="6" stroke-dasharray="14 4 22 5 9 4" opacity=".75"/><path d="M1075 262H1100" stroke="#a09a8c" stroke-width="6" stroke-dasharray="14 4 22 5 9 4" opacity=".75"/><path d="M1070 497H1130" stroke="#a09a8c" stroke-width="6" stroke-dasharray="14 4 22 5 9 4" opacity=".75"/><path d="M1075 515H1128" stroke="#a09a8c" stroke-width="6" stroke-dasharray="14 4 22 5 9 4" opacity=".75"/><path d="M1090 590H1122" stroke="#a09a8c" stroke-width="6" stroke-dasharray="14 4 22 5 9 4" opacity=".75"/><path d="M1085 605H1125" stroke="#a09a8c" stroke-width="6" stroke-dasharray="14 4 22 5 9 4" opacity=".75"/><path d="M1085 620H1128" stroke="#a09a8c" stroke-width="6" stroke-dasharray="14 4 22 5 9 4" opacity=".75"/><path d="M1242 570H1280" stroke="#a09a8c" stroke-width="6" stroke-dasharray="14 4 22 5 9 4" opacity=".75"/><path d="M1245 585H1280" stroke="#a09a8c" stroke-width="6" stroke-dasharray="14 4 22 5 9 4" opacity=".75"/><path d="M1245 610H1282" stroke="#a09a8c" stroke-width="6" stroke-dasharray="14 4 22 5 9 4" opacity=".75"/><path d="M1245 625H1285" stroke="#a09a8c" stroke-width="6" stroke-dasharray="14 4 22 5 9 4" opacity=".75"/><path d="M1100 665H1135" stroke="#a09a8c" stroke-width="6" stroke-dasharray="14 4 22 5 9 4" opacity=".75"/><path d="M1092 682H1130" stroke="#a09a8c" stroke-width="6" stroke-dasharray="14 4 22 5 9 4" opacity=".75"/><path d="M1250 670H1282" stroke="#a09a8c" stroke-width="6" stroke-dasharray="14 4 22 5 9 4" opacity=".75"/><path d="M1255 688H1282" stroke="#a09a8c" stroke-width="6" stroke-dasharray="14 4 22 5 9 4" opacity=".75"/><path d="M1072 888H1100" stroke="#a09a8c" stroke-width="6" stroke-dasharray="14 4 22 5 9 4" opacity=".75"/><path d="M1070 905H1100" stroke="#a09a8c" stroke-width="6" stroke-dasharray="14 4 22 5 9 4" opacity=".75"/><path d="M1288 900H1318" stroke="#a09a8c" stroke-width="6" stroke-dasharray="14 4 22 5 9 4" opacity=".75"/><path d="M1282 915H1325" stroke="#a09a8c" stroke-width="6" stroke-dasharray="14 4 22 5 9 4" opacity=".75"/><path d="M1020 948H1075" stroke="#a09a8c" stroke-width="6" stroke-dasharray="14 4 22 5 9 4" opacity=".75"/><path d="M1030 965H1072" stroke="#a09a8c" stroke-width="6" stroke-dasharray="14 4 22 5 9 4" opacity=".75"/><path d="M1022 985H1065" stroke="#a09a8c" stroke-width="6" stroke-dasharray="14 4 22 5 9 4" opacity=".75"/><path d="M1035 1000H1070" stroke="#a09a8c" stroke-width="6" stroke-dasharray="14 4 22 5 9 4" opacity=".75"/><path d="M1310 962H1375" stroke="#a09a8c" stroke-width="6" stroke-dasharray="14 4 22 5 9 4" opacity=".75"/><path d="M1325 978H1360" stroke="#a09a8c" stroke-width="6" stroke-dasharray="14 4 22 5 9 4" opacity=".75"/><path d="M1172 1035H1215" stroke="#a09a8c" stroke-width="6" stroke-dasharray="14 4 22 5 9 4" opacity=".75"/><path d="M1180 1050H1210" stroke="#a09a8c" stroke-width="6" stroke-dasharray="14 4 22 5 9 4" opacity=".75"/><path d="M1315 1028h18" stroke="#8a8aa8" stroke-width="6" opacity=".7"/></g></svg></div>
<div class="n" style="left:288.5px;top:591.5px">37</div>
<div class="th" style="left:532px;top:434px"><svg width="198" height="149" viewBox="0 0 198 149"><g transform="translate(-1 -1) scale(0.13986)" filter="url(#blur0)"><text x="105" y="120" font-size="46" textLength="205" lengthAdjust="spacingAndGlyphs" fill="#222" font-family="Liberation Sans" >Posterior</text><text x="122" y="190" font-size="46" textLength="170" lengthAdjust="spacingAndGlyphs" fill="#222" font-family="Liberation Sans" >Surface</text><path d="M38 217L398 217" stroke="#111" stroke-width="6" fill="none" /></g><g transform="translate(-1 -1) scale(0.13986)" filter="url(#blur1)"><rect x="450" y="8" width="525" height="1064" fill="#F2F2F2" /><rect x="975" y="8" width="413" height="1064" fill="#F5F3EE" /><rect x="452" y="72" width="54" height="183" fill="#EAEAEA" /><rect x="452" y="518" width="46" height="67" fill="#EAEAEA" /><rect x="452" y="740" width="126" height="285" fill="#EAEAEA" /><path d="M600.0 235.0 C603.3 220.8 611.7 195.8 625.0 185.0 C638.3 174.2 661.7 167.5 680.0 170.0 C698.3 172.5 726.7 185.0 735.0 200.0 C743.3 215.0 734.2 243.3 730.0 260.0 C725.8 276.7 714.2 273.3 710.0 300.0 C705.8 326.7 706.7 376.7 705.0 420.0 C703.3 463.3 700.8 513.3 700.0 560.0 C699.2 606.7 699.2 660.0 700.0 700.0 C700.8 740.0 701.7 771.7 705.0 800.0 C708.3 828.3 718.3 853.3 720.0 870.0 C721.7 886.7 720.0 892.5 715.0 900.0 C710.0 907.5 700.8 914.2 690.0 915.0 C679.2 915.8 663.3 904.2 650.0 905.0 C636.7 905.8 620.8 920.8 610.0 920.0 C599.2 919.2 587.5 910.0 585.0 900.0 C582.5 890.0 589.2 876.7 595.0 860.0 C600.8 843.3 614.2 826.7 620.0 800.0 C625.8 773.3 628.0 740.0 630.0 700.0 C632.0 660.0 632.0 606.7 632.0 560.0 C632.0 513.3 630.7 463.3 630.0 420.0 C629.3 376.7 632.2 325.0 628.0 300.0 C623.8 275.0 609.7 280.8 605.0 270.0 C600.3 259.2 596.7 249.2 600.0 235.0Z" fill="#FCFCFC" stroke="#555" stroke-width="5" stroke-linecap="round" stroke-linejoin="round" /><ellipse cx="655" cy="228" rx="55" ry="52" fill="#FDFDFD" stroke="#444" stroke-width="5" transform="rotate(-25 655 228)"/><path d="M665.0 290.0 C673.3 283.3 686.2 278.3 690.0 300.0 C693.8 321.7 689.7 376.7 688.0 420.0 C686.3 463.3 679.7 513.3 680.0 560.0 C680.3 606.7 686.7 656.7 690.0 700.0 C693.3 743.3 701.7 798.3 700.0 820.0 C698.3 841.7 693.3 830.0 680.0 830.0 C666.7 830.0 628.7 841.7 620.0 820.0 C611.3 798.3 624.7 743.3 628.0 700.0 C631.3 656.7 639.3 606.7 640.0 560.0 C640.7 513.3 632.0 456.7 632.0 420.0 C632.0 383.3 634.5 361.7 640.0 340.0 C645.5 318.3 656.7 296.7 665.0 290.0Z" fill="#E88CA8" stroke="#B06078" stroke-width="3" stroke-linecap="round" stroke-linejoin="round" /><path d="M640.0 400.0 L700.0 640.0 L690.0 700.0 L634.0 440.0Z" fill="#FCFCFC" /><path d="M700.0 195.0 L730.0 190.0 L735.0 215.0 L708.0 222.0Z" fill="#6A98D8" /><path d="M690.0 235.0 L715.0 230.0 L712.0 270.0 L695.0 275.0Z" fill="#6A98D8" /><path d="M688.0 490.0 L700.0 492.0 L698.0 580.0 L688.0 570.0Z" fill="#6A98D8" /><path d="M590.0 870.0 C597.5 860.8 613.3 848.3 630.0 845.0 C646.7 841.7 675.8 841.7 690.0 850.0 C704.2 858.3 715.0 884.2 715.0 895.0 C715.0 905.8 700.8 913.3 690.0 915.0 C679.2 916.7 663.3 904.2 650.0 905.0 C636.7 905.8 620.8 920.8 610.0 920.0 C599.2 919.2 588.3 908.3 585.0 900.0 C581.7 891.7 582.5 879.2 590.0 870.0Z" fill="#F4F4F4" stroke="#444" stroke-width="5" stroke-linecap="round" stroke-linejoin="round" /><path d="M620.0 870.0 C621.7 864.2 641.7 857.5 650.0 860.0 C658.3 862.5 671.7 879.2 670.0 885.0 C668.3 890.8 648.3 897.5 640.0 895.0 C631.7 892.5 618.3 875.8 620.0 870.0Z" fill="#333" /><path d="M768 195H890" stroke="#666" stroke-width="8" stroke-dasharray="14 4 22 5 9 4" opacity=".75"/><path d="M748 287H855" stroke="#666" stroke-width="8" stroke-dasharray="14 4 22 5 9 4" opacity=".75"/><path d="M488 305H585" stroke="#666" stroke-width="8" stroke-dasharray="14 4 22 5 9 4" opacity=".75"/><path d="M475 332H605" stroke="#666" stroke-width="8" stroke-dasharray="14 4 22 5 9 4" opacity=".75"/><path d="M748 367H950" stroke="#666" stroke-width="8" stroke-dasharray="14 4 22 5 9 4" opacity=".75"/><path d="M470 490H592" stroke="#666" stroke-width="8" stroke-dasharray="14 4 22 5 9 4" opacity=".75"/><path d="M735 535H800" stroke="#666" stroke-width="8" stroke-dasharray="14 4 22 5 9 4" opacity=".75"/><path d="M452 668H592" stroke="#666" stroke-width="8" stroke-dasharray="14 4 22 5 9 4" opacity=".75"/><path d="M738 795H945" stroke="#666" stroke-width="8" stroke-dasharray="14 4 22 5 9 4" opacity=".75"/><path d="M755 860H908" stroke="#666" stroke-width="8" stroke-dasharray="14 4 22 5 9 4" opacity=".75"/><path d="M745 918H835" stroke="#666" stroke-width="8" stroke-dasharray="14 4 22 5 9 4" opacity=".75"/><path d="M595 968H672" stroke="#666" stroke-width="8" stroke-dasharray="14 4 22 5 9 4" opacity=".75"/><path d="M735 200L762 195" stroke="#444" stroke-width="2.5" fill="none" /><path d="M712 265L745 285" stroke="#444" stroke-width="2.5" fill="none" /><path d="M600 300L640 285" stroke="#444" stroke-width="2.5" fill="none" /><path d="M690 367L745 367" stroke="#444" stroke-width="2.5" fill="none" /><path d="M595 490L640 490" stroke="#444" stroke-width="2.5" fill="none" /><path d="M700 535L730 535" stroke="#444" stroke-width="2.5" fill="none" /><path d="M595 660L650 660" stroke="#444" stroke-width="2.5" fill="none" /><path d="M705 810L735 795" stroke="#444" stroke-width="2.5" fill="none" /><path d="M700 862L750 860" stroke="#444" stroke-width="2.5" fill="none" /><path d="M705 905L742 918" stroke="#444" stroke-width="2.5" fill="none" /><path d="M645 925L645 955" stroke="#444" stroke-width="2.5" fill="none" /><path d="M1105.0 120.0 C1106.7 105.0 1116.7 85.0 1130.0 75.0 C1143.3 65.0 1167.5 58.3 1185.0 60.0 C1202.5 61.7 1223.3 73.3 1235.0 85.0 C1246.7 96.7 1253.3 114.2 1255.0 130.0 C1256.7 145.8 1248.3 151.7 1245.0 180.0 C1241.7 208.3 1237.2 246.7 1235.0 300.0 C1232.8 353.3 1232.8 433.3 1232.0 500.0 C1231.2 566.7 1230.0 641.7 1230.0 700.0 C1230.0 758.3 1226.7 811.7 1232.0 850.0 C1237.3 888.3 1252.7 913.3 1262.0 930.0 C1271.3 946.7 1284.7 940.8 1288.0 950.0 C1291.3 959.2 1290.0 978.3 1282.0 985.0 C1274.0 991.7 1253.7 985.8 1240.0 990.0 C1226.3 994.2 1213.3 1003.3 1200.0 1010.0 C1186.7 1016.7 1171.7 1031.7 1160.0 1030.0 C1148.3 1028.3 1140.0 1009.2 1130.0 1000.0 C1120.0 990.8 1101.7 986.7 1100.0 975.0 C1098.3 963.3 1110.0 950.8 1120.0 930.0 C1130.0 909.2 1152.0 888.3 1160.0 850.0 C1168.0 811.7 1166.7 758.3 1168.0 700.0 C1169.3 641.7 1168.5 566.7 1168.0 500.0 C1167.5 433.3 1166.3 350.0 1165.0 300.0 C1163.7 250.0 1167.5 222.5 1160.0 200.0 C1152.5 177.5 1129.2 178.3 1120.0 165.0 C1110.8 151.7 1103.3 135.0 1105.0 120.0Z" fill="#F4F2E8" stroke="#B8B2A0" stroke-width="6" stroke-linecap="round" stroke-linejoin="round" /><ellipse cx="1160" cy="115" rx="58" ry="55" fill="#F6F4EC" stroke="#A8A290" stroke-width="4"/><path d="M1215.0 200.0 C1220.3 150.0 1237.2 150.0 1240.0 200.0 C1242.8 250.0 1233.3 391.7 1232.0 500.0 C1230.7 608.3 1227.3 778.3 1232.0 850.0 C1236.7 921.7 1259.5 916.7 1260.0 930.0 C1260.5 943.3 1243.3 943.3 1235.0 930.0 C1226.7 916.7 1214.5 921.7 1210.0 850.0 C1205.5 778.3 1207.2 608.3 1208.0 500.0 C1208.8 391.7 1209.7 250.0 1215.0 200.0Z" fill="#8A8470" opacity="0.5" filter="url(#blur3)"/><path d="M1110.0 960.0 C1118.0 952.5 1145.0 940.0 1160.0 940.0 C1175.0 940.0 1185.0 959.2 1200.0 960.0 C1215.0 960.8 1236.3 942.5 1250.0 945.0 C1263.7 947.5 1283.7 967.5 1282.0 975.0 C1280.3 982.5 1260.3 981.2 1240.0 990.0 C1219.7 998.8 1181.3 1028.8 1160.0 1028.0 C1138.7 1027.2 1120.3 996.3 1112.0 985.0 C1103.7 973.7 1102.0 967.5 1110.0 960.0Z" fill="#7A7460" opacity="0.5" filter="url(#blur3)"/><path d="M1055 80H1088" stroke="#a09a8c" stroke-width="6" stroke-dasharray="14 4 22 5 9 4" opacity=".75"/><path d="M1050 95H1085" stroke="#a09a8c" stroke-width="6" stroke-dasharray="14 4 22 5 9 4" opacity=".75"/><path d="M1035 148H1085" stroke="#a09a8c" stroke-width="6" stroke-dasharray="14 4 22 5 9 4" opacity=".75"/><path d="M1040 160H1090" stroke="#a09a8c" stroke-width="6" stroke-dasharray="14 4 22 5 9 4" opacity=".75"/><path d="M1065 198H1115" stroke="#a09a8c" stroke-width="6" stroke-dasharray="14 4 22 5 9 4" opacity=".75"/><path d="M1060 212H1112" stroke="#a09a8c" stroke-width="6" stroke-dasharray="14 4 22 5 9 4" opacity=".75"/><path d="M1282 118H1338" stroke="#a09a8c" stroke-width="6" stroke-dasharray="14 4 22 5 9 4" opacity=".75"/><path d="M1295 135H1325" stroke="#a09a8c" stroke-width="6" stroke-dasharray="14 4 22 5 9 4" opacity=".75"/><path d="M1245 560H1310" stroke="#a09a8c" stroke-width="6" stroke-dasharray="14 4 22 5 9 4" opacity=".75"/><path d="M1255 575H1300" stroke="#a09a8c" stroke-width="6" stroke-dasharray="14 4 22 5 9 4" opacity=".75"/><path d="M1090 655H1128" stroke="#a09a8c" stroke-width="6" stroke-dasharray="14 4 22 5 9 4" opacity=".75"/><path d="M1085 672H1125" stroke="#a09a8c" stroke-width="6" stroke-dasharray="14 4 22 5 9 4" opacity=".75"/><path d="M1270 880H1305" stroke="#a09a8c" stroke-width="6" stroke-dasharray="14 4 22 5 9 4" opacity=".75"/><path d="M1275 895H1300" stroke="#a09a8c" stroke-width="6" stroke-dasharray="14 4 22 5 9 4" opacity=".75"/><path d="M1312 950H1370" stroke="#a09a8c" stroke-width="6" stroke-dasharray="14 4 22 5 9 4" opacity=".75"/><path d="M1318 965H1360" stroke="#a09a8c" stroke-width="6" stroke-dasharray="14 4 22 5 9 4" opacity=".75"/><path d="M1005 962H1068" stroke="#a09a8c" stroke-width="6" stroke-dasharray="14 4 22 5 9 4" opacity=".75"/><path d="M1015 978H1060" stroke="#a09a8c" stroke-width="6" stroke-dasharray="14 4 22 5 9 4" opacity=".75"/><path d="M1060 1018H1128" stroke="#a09a8c" stroke-width="6" stroke-dasharray="14 4 22 5 9 4" opacity=".75"/><path d="M1070 1035H1120" stroke="#a09a8c" stroke-width="6" stroke-dasharray="14 4 22 5 9 4" opacity=".75"/><path d="M1180 1030H1222" stroke="#a09a8c" stroke-width="6" stroke-dasharray="14 4 22 5 9 4" opacity=".75"/><path d="M1185 1048H1215" stroke="#a09a8c" stroke-width="6" stroke-dasharray="14 4 22 5 9 4" opacity=".75"/><path d="M1315 1028h18" stroke="#8a8aa8" stroke-width="6" opacity=".7"/></g></svg></div>
<div class="n" style="left:532.5px;top:591.5px">38</div>
<div class="th" style="left:776px;top:434px"><svg width="198" height="149" viewBox="0 0 198 149"><g transform="translate(-1 -1) scale(0.13986)" filter="url(#blur0)"><text x="315" y="162" font-size="72" textLength="800" lengthAdjust="spacingAndGlyphs" fill="#111" font-family="Liberation Sans" stroke="#111" stroke-width="1.2">Upper End of Humerus</text><path d="M75 217L1340 217" stroke="#111" stroke-width="6" fill="none" /><text x="60" y="335" font-size="33" textLength="332" lengthAdjust="spacingAndGlyphs" fill="#0B1F66" font-family="Liberation Serif" font-weight="bold" stroke="#0B1F66" stroke-width="0.9">1. Head of humerus</text><text x="60" y="385" font-size="33" textLength="308" lengthAdjust="spacingAndGlyphs" fill="#0B1F66" font-family="Liberation Serif" font-weight="bold" stroke="#0B1F66" stroke-width="0.9">2. Greater tubercle</text><text x="60" y="428" font-size="33" textLength="292" lengthAdjust="spacingAndGlyphs" fill="#0B1F66" font-family="Liberation Serif" font-weight="bold" stroke="#0B1F66" stroke-width="0.9">3. Lesser tubercle</text><path d="M1318 1030h18" stroke="#8a8aa8" stroke-width="6" opacity=".7"/></g><g transform="translate(-1 -1) scale(0.13986)" filter="url(#blur1)"><rect x="458" y="260" width="880" height="730" fill="#EEEEEA" /><defs><clipPath id="s39c"><rect x="458" y="260" width="880" height="730"/></clipPath></defs><g clip-path="url(#s39c)"><defs><radialGradient id="s39h" cx=".4" cy=".35" r=".75"><stop offset="0" stop-color="#F4F2EA"/><stop offset=".6" stop-color="#DAD6CA"/><stop offset="1" stop-color="#8E8878"/></radialGradient></defs><path d="M748.0 470.0 C752.2 450.8 756.3 434.7 765.0 425.0 C773.7 415.3 789.2 412.8 800.0 412.0 C810.8 411.2 821.7 415.3 830.0 420.0 C838.3 424.7 841.7 436.7 850.0 440.0 C858.3 443.3 861.7 420.0 880.0 440.0 C898.3 460.0 942.5 530.0 960.0 560.0 C977.5 590.0 986.7 600.0 985.0 620.0 C983.3 640.0 959.5 656.7 950.0 680.0 C940.5 703.3 933.0 730.0 928.0 760.0 C923.0 790.0 922.2 820.0 920.0 860.0 C917.8 900.0 936.7 976.7 915.0 1000.0 C893.3 1023.3 810.5 1023.3 790.0 1000.0 C769.5 976.7 793.3 906.7 792.0 860.0 C790.7 813.3 788.7 760.0 782.0 720.0 C775.3 680.0 759.0 650.0 752.0 620.0 C745.0 590.0 740.7 565.0 740.0 540.0 C739.3 515.0 743.8 489.2 748.0 470.0Z" fill="#EEEBE2" stroke="#9A947E" stroke-width="6" stroke-linecap="round" stroke-linejoin="round" /><circle cx="955" cy="488" r="100" fill="url(#s39h)" stroke="#9A947E" stroke-width="5"/><path d="M840.0 440.0 C846.7 428.3 866.7 425.0 880.0 430.0 C893.3 435.0 910.8 451.7 920.0 470.0 C929.2 488.3 924.2 516.7 935.0 540.0 C945.8 563.3 982.5 591.7 985.0 610.0 C987.5 628.3 964.2 648.3 950.0 650.0 C935.8 651.7 915.0 635.0 900.0 620.0 C885.0 605.0 870.0 580.0 860.0 560.0 C850.0 540.0 843.3 520.0 840.0 500.0 C836.7 480.0 833.3 451.7 840.0 440.0Z" fill="#EAE6DC" stroke="#A8A290" stroke-width="4" stroke-linecap="round" stroke-linejoin="round" /><path d="M905.0 610.0 C918.5 601.7 960.5 618.3 965.0 640.0 C969.5 661.7 939.2 705.0 932.0 740.0 C924.8 775.0 924.7 806.7 922.0 850.0 C919.3 893.3 923.0 975.0 916.0 1000.0 C909.0 1025.0 885.0 1033.3 880.0 1000.0 C875.0 966.7 885.3 851.7 886.0 800.0 C886.7 748.3 880.8 721.7 884.0 690.0 C887.2 658.3 891.5 618.3 905.0 610.0Z" fill="#3A342A" opacity="0.85" filter="url(#blur2)"/><path d="M800.0 430.0 C803.3 410.3 816.7 407.0 822.0 422.0 C827.3 437.0 827.7 487.0 832.0 520.0 C836.3 553.0 841.3 583.3 848.0 620.0 C854.7 656.7 871.3 716.7 872.0 740.0 C872.7 763.3 860.3 776.7 852.0 760.0 C843.7 743.3 830.3 676.7 822.0 640.0 C813.7 603.3 805.7 575.0 802.0 540.0 C798.3 505.0 796.7 449.7 800.0 430.0Z" fill="#7A7464" opacity="0.4" filter="url(#blur2)"/><path d="M850.0 450.0 C856.2 434.2 882.5 435.0 895.0 445.0 C907.5 455.0 924.2 490.8 925.0 510.0 C925.8 529.2 911.2 555.0 900.0 560.0 C888.8 565.0 866.3 558.3 858.0 540.0 C849.7 521.7 843.8 465.8 850.0 450.0Z" fill="#FFFFFF" opacity="0.8" filter="url(#blur2)"/><path d="M940.0 520.0 C950.0 513.3 980.0 526.7 990.0 540.0 C1000.0 553.3 1005.0 586.7 1000.0 600.0 C995.0 613.3 971.7 623.3 960.0 620.0 C948.3 616.7 933.3 596.7 930.0 580.0 C926.7 563.3 930.0 526.7 940.0 520.0Z" fill="#5A5444" opacity="0.5" filter="url(#blur2)"/></g><path d="M578 442H712" stroke="#8a867a" stroke-width="8" stroke-dasharray="14 4 22 5 9 4" opacity=".75"/><path d="M612 475H680" stroke="#8a867a" stroke-width="8" stroke-dasharray="14 4 22 5 9 4" opacity=".75"/><path d="M590 528H660" stroke="#8a867a" stroke-width="8" stroke-dasharray="14 4 22 5 9 4" opacity=".75"/><path d="M530 558H715" stroke="#8a867a" stroke-width="8" stroke-dasharray="14 4 22 5 9 4" opacity=".75"/><path d="M555 772H735" stroke="#8a867a" stroke-width="8" stroke-dasharray="14 4 22 5 9 4" opacity=".75"/><path d="M602 802H688" stroke="#8a867a" stroke-width="8" stroke-dasharray="14 4 22 5 9 4" opacity=".75"/><path d="M1075 385H1140" stroke="#8a867a" stroke-width="8" stroke-dasharray="14 4 22 5 9 4" opacity=".75"/><path d="M1068 415H1150" stroke="#8a867a" stroke-width="8" stroke-dasharray="14 4 22 5 9 4" opacity=".75"/><path d="M1100 452H1180" stroke="#8a867a" stroke-width="8" stroke-dasharray="14 4 22 5 9 4" opacity=".75"/><path d="M1075 482H1212" stroke="#8a867a" stroke-width="8" stroke-dasharray="14 4 22 5 9 4" opacity=".75"/><path d="M1092 522H1225" stroke="#8a867a" stroke-width="8" stroke-dasharray="14 4 22 5 9 4" opacity=".75"/><path d="M1118 550H1185" stroke="#8a867a" stroke-width="8" stroke-dasharray="14 4 22 5 9 4" opacity=".75"/><path d="M1042 668H1125" stroke="#8a867a" stroke-width="8" stroke-dasharray="14 4 22 5 9 4" opacity=".75"/><path d="M1020 700H1150" stroke="#8a867a" stroke-width="8" stroke-dasharray="14 4 22 5 9 4" opacity=".75"/><path d="M995 740H1178" stroke="#8a867a" stroke-width="8" stroke-dasharray="14 4 22 5 9 4" opacity=".75"/><path d="M1035 770H1120" stroke="#8a867a" stroke-width="8" stroke-dasharray="14 4 22 5 9 4" opacity=".75"/><path d="M720 450L770 450" stroke="#6a665c" stroke-width="2.5" fill="none" /><path d="M720 548L815 548" stroke="#6a665c" stroke-width="2.5" fill="none" /><path d="M742 790L800 790" stroke="#6a665c" stroke-width="2.5" fill="none" /><path d="M950 402L1060 402" stroke="#6a665c" stroke-width="2.5" fill="none" /><path d="M935 462L1090 462" stroke="#6a665c" stroke-width="2.5" fill="none" /><path d="M950 528L1085 528" stroke="#6a665c" stroke-width="2.5" fill="none" /><path d="M965 684L1035 684" stroke="#6a665c" stroke-width="2.5" fill="none" /><path d="M880 740L990 740" stroke="#6a665c" stroke-width="2.5" fill="none" /></g></svg></div>
<div class="n" style="left:776.5px;top:591.5px">39</div>
<div class="th" style="left:1020px;top:434px"><svg width="198" height="149" viewBox="0 0 198 149"><g transform="translate(-1 -1) scale(0.13986)" filter="url(#blur0)"><text x="192" y="162" font-size="66" textLength="1046" lengthAdjust="spacingAndGlyphs" fill="#111" font-family="Liberation Sans" stroke="#111" stroke-width="1.2">Lower End of Humerus (Condyle)</text><path d="M75 217L1340 217" stroke="#111" stroke-width="6" fill="none" /><text x="192" y="762" font-size="33" textLength="220" lengthAdjust="spacingAndGlyphs" fill="#0B1F66" font-family="Liberation Serif" font-weight="bold" stroke="#0B1F66" stroke-width="0.9">Anterior view</text><text x="1015" y="762" font-size="33" textLength="235" lengthAdjust="spacingAndGlyphs" fill="#0B1F66" font-family="Liberation Serif" font-weight="bold" stroke="#0B1F66" stroke-width="0.9">Posterior view</text><text x="585" y="1058" font-size="33" textLength="215" lengthAdjust="spacingAndGlyphs" fill="#0B1F66" font-family="Liberation Serif" font-weight="bold" stroke="#0B1F66" stroke-width="0.9">Inferior view</text><path d="M1318 1030h18" stroke="#8a8aa8" stroke-width="6" opacity=".7"/></g><g transform="translate(-1 -1) scale(0.13986)" filter="url(#blur1)"><rect x="15" y="230" width="755" height="480" fill="#EDEDEA" /><rect x="782" y="230" width="636" height="480" fill="#EDEDEA" /><rect x="472" y="735" width="458" height="277" fill="#EDEDEA" /><defs><clipPath id="s40a"><rect x="15" y="230" width="755" height="480"/></clipPath><clipPath id="s40b"><rect x="782" y="230" width="636" height="480"/></clipPath></defs><g clip-path="url(#s40a)"><path d="M330.0 220.0 C356.7 198.3 445.0 198.3 470.0 220.0 C495.0 241.7 471.7 311.7 480.0 350.0 C488.3 388.3 505.0 423.3 520.0 450.0 C535.0 476.7 560.8 491.7 570.0 510.0 C579.2 528.3 579.2 545.0 575.0 560.0 C570.8 575.0 557.5 593.3 545.0 600.0 C532.5 606.7 509.2 593.3 500.0 600.0 C490.8 606.7 500.0 631.7 490.0 640.0 C480.0 648.3 455.0 655.0 440.0 650.0 C425.0 645.0 416.7 618.3 400.0 610.0 C383.3 601.7 358.3 598.3 340.0 600.0 C321.7 601.7 306.7 620.0 290.0 620.0 C273.3 620.0 252.5 611.7 240.0 600.0 C227.5 588.3 217.5 568.3 215.0 550.0 C212.5 531.7 215.8 508.3 225.0 490.0 C234.2 471.7 255.8 463.3 270.0 440.0 C284.2 416.7 300.0 386.7 310.0 350.0 C320.0 313.3 303.3 241.7 330.0 220.0Z" fill="#F1EEE6" stroke="#A8A290" stroke-width="6" stroke-linecap="round" stroke-linejoin="round" /><path d="M430.0 220.0 C433.3 198.3 461.7 198.3 470.0 220.0 C478.3 241.7 471.7 311.7 480.0 350.0 C488.3 388.3 505.0 423.3 520.0 450.0 C535.0 476.7 566.7 498.3 570.0 510.0 C573.3 521.7 553.3 528.3 540.0 520.0 C526.7 511.7 505.0 488.3 490.0 460.0 C475.0 431.7 460.0 390.0 450.0 350.0 C440.0 310.0 426.7 241.7 430.0 220.0Z" fill="#6A6454" opacity="0.55" filter="url(#blur2)"/><path d="M350.0 480.0 C360.0 468.3 388.3 463.3 400.0 470.0 C411.7 476.7 423.3 505.0 420.0 520.0 C416.7 535.0 393.3 556.7 380.0 560.0 C366.7 563.3 345.0 553.3 340.0 540.0 C335.0 526.7 340.0 491.7 350.0 480.0Z" fill="#8A8470" opacity="0.5" filter="url(#blur2)"/><path d="M330.0 580.0 C333.3 585.0 381.7 598.3 400.0 610.0 C418.3 621.7 425.0 645.0 440.0 650.0 C455.0 655.0 480.0 648.3 490.0 640.0 C500.0 631.7 510.0 606.7 500.0 600.0 C490.0 593.3 450.0 603.3 430.0 600.0 C410.0 596.7 396.7 583.3 380.0 580.0 C363.3 576.7 326.7 575.0 330.0 580.0Z" fill="#9A947E" opacity="0.4" filter="url(#blur2)"/></g><g clip-path="url(#s40b)"><path d="M1070.0 220.0 C1087.5 198.3 1147.5 198.3 1165.0 220.0 C1182.5 241.7 1169.2 311.7 1175.0 350.0 C1180.8 388.3 1186.7 423.3 1200.0 450.0 C1213.3 476.7 1244.7 491.7 1255.0 510.0 C1265.3 528.3 1266.2 545.0 1262.0 560.0 C1257.8 575.0 1243.7 593.3 1230.0 600.0 C1216.3 606.7 1198.3 603.3 1180.0 600.0 C1161.7 596.7 1136.7 573.3 1120.0 580.0 C1103.3 586.7 1093.3 630.0 1080.0 640.0 C1066.7 650.0 1053.3 646.7 1040.0 640.0 C1026.7 633.3 1010.8 611.7 1000.0 600.0 C989.2 588.3 977.5 583.3 975.0 570.0 C972.5 556.7 975.8 538.3 985.0 520.0 C994.2 501.7 1017.5 488.3 1030.0 460.0 C1042.5 431.7 1053.3 390.0 1060.0 350.0 C1066.7 310.0 1052.5 241.7 1070.0 220.0Z" fill="#F1EEE6" stroke="#A8A290" stroke-width="6" stroke-linecap="round" stroke-linejoin="round" /><path d="M1185.0 530.0 C1195.8 515.0 1237.2 505.0 1250.0 510.0 C1262.8 515.0 1265.3 544.7 1262.0 560.0 C1258.7 575.3 1242.8 595.3 1230.0 602.0 C1217.2 608.7 1192.5 612.0 1185.0 600.0 C1177.5 588.0 1174.2 545.0 1185.0 530.0Z" fill="#3A3428" opacity="0.75" filter="url(#blur2)"/><path d="M1040.0 520.0 C1046.7 506.7 1078.3 493.3 1100.0 490.0 C1121.7 486.7 1156.7 488.3 1170.0 500.0 C1183.3 511.7 1191.7 550.0 1180.0 560.0 C1168.3 570.0 1120.0 558.3 1100.0 560.0 C1080.0 561.7 1070.0 576.7 1060.0 570.0 C1050.0 563.3 1033.3 533.3 1040.0 520.0Z" fill="#5A5444" opacity="0.55" filter="url(#blur2)"/><path d="M1000.0 590.0 C1000.0 583.3 1026.7 591.7 1040.0 600.0 C1053.3 608.3 1080.0 633.3 1080.0 640.0 C1080.0 646.7 1053.3 648.3 1040.0 640.0 C1026.7 631.7 1000.0 596.7 1000.0 590.0Z" fill="#5A5444" opacity="0.5" filter="url(#blur2)"/><path d="M1130.0 220.0 C1133.3 198.3 1157.5 198.3 1165.0 220.0 C1172.5 241.7 1169.2 311.7 1175.0 350.0 C1180.8 388.3 1200.8 431.7 1200.0 450.0 C1199.2 468.3 1179.2 476.7 1170.0 460.0 C1160.8 443.3 1151.7 390.0 1145.0 350.0 C1138.3 310.0 1126.7 241.7 1130.0 220.0Z" fill="#8A8470" opacity="0.45" filter="url(#blur2)"/></g><path d="M545.0 880.0 C547.5 864.2 557.5 841.3 570.0 830.0 C582.5 818.7 603.3 812.0 620.0 812.0 C636.7 812.0 656.7 825.3 670.0 830.0 C683.3 834.7 685.0 840.0 700.0 840.0 C715.0 840.0 741.7 832.5 760.0 830.0 C778.3 827.5 798.3 818.3 810.0 825.0 C821.7 831.7 821.7 860.0 830.0 870.0 C838.3 880.0 853.3 875.8 860.0 885.0 C866.7 894.2 873.3 915.0 870.0 925.0 C866.7 935.0 851.7 943.3 840.0 945.0 C828.3 946.7 816.7 938.3 800.0 935.0 C783.3 931.7 760.0 928.3 740.0 925.0 C720.0 921.7 696.7 912.5 680.0 915.0 C663.3 917.5 655.0 935.0 640.0 940.0 C625.0 945.0 604.2 947.5 590.0 945.0 C575.8 942.5 562.5 935.8 555.0 925.0 C547.5 914.2 542.5 895.8 545.0 880.0Z" fill="#F1EEE6" stroke="#A8A290" stroke-width="6" stroke-linecap="round" stroke-linejoin="round" /><path d="M820.0 880.0 C827.5 874.7 852.0 880.5 860.0 888.0 C868.0 895.5 871.3 916.0 868.0 925.0 C864.7 934.0 848.8 942.8 840.0 942.0 C831.2 941.2 818.3 930.3 815.0 920.0 C811.7 909.7 812.5 885.3 820.0 880.0Z" fill="#3A3428" opacity="0.7" filter="url(#blur2)"/><path d="M560.0 900.0 C565.0 890.8 600.0 887.5 620.0 890.0 C640.0 892.5 676.7 906.7 680.0 915.0 C683.3 923.3 655.0 935.0 640.0 940.0 C625.0 945.0 603.3 951.7 590.0 945.0 C576.7 938.3 555.0 909.2 560.0 900.0Z" fill="#6A6454" opacity="0.5" filter="url(#blur2)"/><path d="M165 382H220" stroke="#8a867a" stroke-width="8" stroke-dasharray="14 4 22 5 9 4" opacity=".75"/><path d="M152 410H228" stroke="#8a867a" stroke-width="8" stroke-dasharray="14 4 22 5 9 4" opacity=".75"/><path d="M572 412H632" stroke="#8a867a" stroke-width="8" stroke-dasharray="14 4 22 5 9 4" opacity=".75"/><path d="M545 440H658" stroke="#8a867a" stroke-width="8" stroke-dasharray="14 4 22 5 9 4" opacity=".75"/><path d="M45 508H180" stroke="#8a867a" stroke-width="8" stroke-dasharray="14 4 22 5 9 4" opacity=".75"/><path d="M72 540H152" stroke="#8a867a" stroke-width="8" stroke-dasharray="14 4 22 5 9 4" opacity=".75"/><path d="M52 572H158" stroke="#8a867a" stroke-width="8" stroke-dasharray="14 4 22 5 9 4" opacity=".75"/><path d="M72 602H148" stroke="#8a867a" stroke-width="8" stroke-dasharray="14 4 22 5 9 4" opacity=".75"/><path d="M622 528H748" stroke="#8a867a" stroke-width="8" stroke-dasharray="14 4 22 5 9 4" opacity=".75"/><path d="M642 558H730" stroke="#8a867a" stroke-width="8" stroke-dasharray="14 4 22 5 9 4" opacity=".75"/><path d="M345 672H438" stroke="#8a867a" stroke-width="8" stroke-dasharray="14 4 22 5 9 4" opacity=".75"/><path d="M362 700H425" stroke="#8a867a" stroke-width="8" stroke-dasharray="14 4 22 5 9 4" opacity=".75"/><path d="M1240 418H1292" stroke="#8a867a" stroke-width="8" stroke-dasharray="14 4 22 5 9 4" opacity=".75"/><path d="M1238 440H1300" stroke="#8a867a" stroke-width="8" stroke-dasharray="14 4 22 5 9 4" opacity=".75"/><path d="M825 548H925" stroke="#8a867a" stroke-width="8" stroke-dasharray="14 4 22 5 9 4" opacity=".75"/><path d="M838 572H905" stroke="#8a867a" stroke-width="8" stroke-dasharray="14 4 22 5 9 4" opacity=".75"/><path d="M1298 528H1398" stroke="#8a867a" stroke-width="8" stroke-dasharray="14 4 22 5 9 4" opacity=".75"/><path d="M1312 555H1378" stroke="#8a867a" stroke-width="8" stroke-dasharray="14 4 22 5 9 4" opacity=".75"/><path d="M910 632H995" stroke="#8a867a" stroke-width="8" stroke-dasharray="14 4 22 5 9 4" opacity=".75"/><path d="M942 658H990" stroke="#8a867a" stroke-width="8" stroke-dasharray="14 4 22 5 9 4" opacity=".75"/><path d="M1092 660H1165" stroke="#8a867a" stroke-width="8" stroke-dasharray="14 4 22 5 9 4" opacity=".75"/><path d="M1100 685H1158" stroke="#8a867a" stroke-width="8" stroke-dasharray="14 4 22 5 9 4" opacity=".75"/><path d="M588 745H655" stroke="#8a867a" stroke-width="8" stroke-dasharray="14 4 22 5 9 4" opacity=".75"/><path d="M602 765H648" stroke="#8a867a" stroke-width="8" stroke-dasharray="14 4 22 5 9 4" opacity=".75"/><path d="M705 768H765" stroke="#8a867a" stroke-width="8" stroke-dasharray="14 4 22 5 9 4" opacity=".75"/><path d="M712 788H748" stroke="#8a867a" stroke-width="8" stroke-dasharray="14 4 22 5 9 4" opacity=".75"/><path d="M538 982H615" stroke="#8a867a" stroke-width="8" stroke-dasharray="14 4 22 5 9 4" opacity=".75"/><path d="M545 1000H600" stroke="#8a867a" stroke-width="8" stroke-dasharray="14 4 22 5 9 4" opacity=".75"/><path d="M690 990H740" stroke="#8a867a" stroke-width="8" stroke-dasharray="14 4 22 5 9 4" opacity=".75"/><path d="M818 988H892" stroke="#8a867a" stroke-width="8" stroke-dasharray="14 4 22 5 9 4" opacity=".75"/><path d="M825 1005H880" stroke="#8a867a" stroke-width="8" stroke-dasharray="14 4 22 5 9 4" opacity=".75"/></g></svg></div>
<div class="n" style="left:1020.5px;top:591.5px">40</div>
<div class="th" style="left:1264px;top:434px"><svg width="198" height="149" viewBox="0 0 198 149"><g transform="translate(-1 -1) scale(0.13986)" filter="url(#blur0)"><text x="125" y="162" font-size="62" textLength="1180" lengthAdjust="spacingAndGlyphs" fill="#111" font-family="Liberation Sans" stroke="#111" stroke-width="1.2">Fracture of Surgical Neck of Humerus</text><path d="M195 240L1255 240" stroke="#111" stroke-width="6" fill="none" /><path d="M1318 1030h18" stroke="#8a8aa8" stroke-width="6" opacity=".7"/></g><g transform="translate(-1 -1) scale(0.13986)" filter="url(#blur1)"><defs><clipPath id="s41c"><rect x="495" y="295" width="435" height="722"/></clipPath></defs><g clip-path="url(#s41c)"><rect x="495" y="295" width="435" height="722" fill="#4E4E4E" /><path d="M480.0 330.0 C493.3 215.0 536.7 328.3 560.0 340.0 C583.3 351.7 606.7 378.3 620.0 400.0 C633.3 421.7 640.0 443.3 640.0 470.0 C640.0 496.7 616.7 531.7 620.0 560.0 C623.3 588.3 646.7 606.7 660.0 640.0 C673.3 673.3 686.7 716.7 700.0 760.0 C713.3 803.3 728.3 855.0 740.0 900.0 C751.7 945.0 813.3 1008.3 770.0 1030.0 C726.7 1051.7 528.3 1146.7 480.0 1030.0 C431.7 913.3 466.7 445.0 480.0 330.0Z" fill="#C8C8C8" filter="url(#blur2)"/><path d="M520.0 700.0 C543.3 656.7 610.0 623.3 640.0 640.0 C670.0 656.7 686.7 746.7 700.0 800.0 C713.3 853.3 743.3 926.7 720.0 960.0 C696.7 993.3 596.7 1010.0 560.0 1000.0 C523.3 990.0 506.7 950.0 500.0 900.0 C493.3 850.0 496.7 743.3 520.0 700.0Z" fill="#8A8A8A" opacity="0.7" filter="url(#blur2)"/><path d="M500.0 300.0 C523.3 293.3 606.7 286.7 640.0 300.0 C673.3 313.3 700.0 363.3 700.0 380.0 C700.0 396.7 663.3 403.3 640.0 400.0 C616.7 396.7 583.3 370.0 560.0 360.0 C536.7 350.0 510.0 350.0 500.0 340.0 C490.0 330.0 476.7 306.7 500.0 300.0Z" fill="#6A6A6A" opacity="0.7" filter="url(#blur2)"/><path d="M640.0 470.0 C645.0 448.3 660.0 438.3 680.0 430.0 C700.0 421.7 731.7 416.7 760.0 420.0 C788.3 423.3 828.3 435.0 850.0 450.0 C871.7 465.0 886.7 490.0 890.0 510.0 C893.3 530.0 881.7 555.0 870.0 570.0 C858.3 585.0 831.7 578.3 820.0 600.0 C808.3 621.7 798.3 658.3 800.0 700.0 C801.7 741.7 820.0 795.0 830.0 850.0 C840.0 905.0 869.2 1000.0 860.0 1030.0 C850.8 1060.0 795.0 1051.7 775.0 1030.0 C755.0 1008.3 752.5 945.0 740.0 900.0 C727.5 855.0 713.3 803.3 700.0 760.0 C686.7 716.7 671.7 668.3 660.0 640.0 C648.3 611.7 631.7 603.3 630.0 590.0 C628.3 576.7 648.3 580.0 650.0 560.0 C651.7 540.0 635.0 491.7 640.0 470.0Z" fill="#8E8E8E" stroke="#D8D8D8" stroke-width="7" stroke-linecap="round" stroke-linejoin="round" /><path d="M700.0 460.0 C713.3 441.7 773.3 443.3 800.0 450.0 C826.7 456.7 851.7 481.7 860.0 500.0 C868.3 518.3 863.3 546.7 850.0 560.0 C836.7 573.3 801.7 580.0 780.0 580.0 C758.3 580.0 733.3 580.0 720.0 560.0 C706.7 540.0 686.7 478.3 700.0 460.0Z" fill="#B8B8B8" opacity="0.7" filter="url(#blur2)"/><path d="M720.0 640.0 C725.0 605.0 773.3 605.0 790.0 640.0 C806.7 675.0 811.7 786.7 820.0 850.0 C828.3 913.3 845.0 991.7 840.0 1020.0 C835.0 1048.3 803.3 1048.3 790.0 1020.0 C776.7 991.7 771.7 913.3 760.0 850.0 C748.3 786.7 715.0 675.0 720.0 640.0Z" fill="#A0A0A0" opacity="0.6" filter="url(#blur2)"/><path d="M600.0 360.0 C610.0 353.3 680.0 370.0 700.0 380.0 C720.0 390.0 730.0 413.3 720.0 420.0 C710.0 426.7 660.0 430.0 640.0 420.0 C620.0 410.0 590.0 366.7 600.0 360.0Z" fill="#DADADA" opacity="0.8" filter="url(#blur2)"/></g></g></svg></div>
<div class="n" style="left:1264.5px;top:591.5px">41</div>
<div class="th" style="left:1508px;top:434px"><svg width="198" height="149" viewBox="0 0 198 149"><g transform="translate(-1 -1) scale(0.13986)" filter="url(#blur0)"><text x="345" y="162" font-size="72" textLength="740" lengthAdjust="spacingAndGlyphs" fill="#111" font-family="Liberation Sans" stroke="#111" stroke-width="1.2">Midhumeral Fracture</text><path d="M262 197L1185 197" stroke="#111" stroke-width="6" fill="none" /><path d="M1318 1030h18" stroke="#8a8aa8" stroke-width="6" opacity=".7"/></g><g transform="translate(-1 -1) scale(0.13986)" filter="url(#blur1)"><defs><clipPath id="s42c"><rect x="488" y="238" width="442" height="750"/></clipPath></defs><g clip-path="url(#s42c)"><rect x="488" y="238" width="442" height="750" fill="#505050" /><path d="M830.0 230.0 C846.7 215.0 921.7 101.7 940.0 230.0 C958.3 358.3 953.3 871.7 940.0 1000.0 C926.7 1128.3 866.7 1025.0 860.0 1000.0 C853.3 975.0 896.7 900.0 900.0 850.0 C903.3 800.0 896.7 741.7 880.0 700.0 C863.3 658.3 823.3 630.0 800.0 600.0 C776.7 570.0 750.0 550.0 740.0 520.0 C730.0 490.0 730.0 443.3 740.0 420.0 C750.0 396.7 783.3 396.7 800.0 380.0 C816.7 363.3 835.0 345.0 840.0 320.0 C845.0 295.0 813.3 245.0 830.0 230.0Z" fill="#E0E0E0" filter="url(#blur2)"/><path d="M640.0 700.0 C653.3 641.7 723.3 630.0 760.0 640.0 C796.7 650.0 840.0 701.7 860.0 760.0 C880.0 818.3 910.0 951.7 880.0 990.0 C850.0 1028.3 720.0 1038.3 680.0 990.0 C640.0 941.7 626.7 758.3 640.0 700.0Z" fill="#707070" opacity="0.8" filter="url(#blur2)"/><path d="M880.0 760.0 C890.0 716.7 921.7 683.3 930.0 720.0 C938.3 756.7 940.0 936.7 930.0 980.0 C920.0 1023.3 878.3 1016.7 870.0 980.0 C861.7 943.3 870.0 803.3 880.0 760.0Z" fill="#5A5A5A" opacity="0.6" filter="url(#blur2)"/><path d="M650.0 300.0 C658.3 275.0 670.0 259.2 690.0 250.0 C710.0 240.8 746.7 238.3 770.0 245.0 C793.3 251.7 819.2 272.5 830.0 290.0 C840.8 307.5 840.0 333.3 835.0 350.0 C830.0 366.7 815.8 376.7 800.0 390.0 C784.2 403.3 758.3 408.3 740.0 430.0 C721.7 451.7 706.7 490.0 690.0 520.0 C673.3 550.0 655.0 596.7 640.0 610.0 C625.0 623.3 609.2 606.7 600.0 600.0 C590.8 593.3 581.7 590.0 585.0 570.0 C588.3 550.0 610.8 508.3 620.0 480.0 C629.2 451.7 635.0 430.0 640.0 400.0 C645.0 370.0 641.7 325.0 650.0 300.0Z" fill="#D6D6D6" stroke="#E8E8E8" stroke-width="4" stroke-linecap="round" stroke-linejoin="round" /><path d="M530.0 612.0 C534.2 595.3 563.3 585.3 575.0 600.0 C586.7 614.7 591.7 666.7 600.0 700.0 C608.3 733.3 615.0 751.7 625.0 800.0 C635.0 848.3 664.2 958.3 660.0 990.0 C655.8 1021.7 614.2 1021.7 600.0 990.0 C585.8 958.3 583.3 848.3 575.0 800.0 C566.7 751.7 557.5 731.3 550.0 700.0 C542.5 668.7 525.8 628.7 530.0 612.0Z" fill="#DCDCDC" stroke="#EEEEEE" stroke-width="4" stroke-linecap="round" stroke-linejoin="round" /></g></g></svg></div>
<div class="n" style="left:1508.5px;top:591.5px">42</div>
<div class="th" style="left:44px;top:648px"><svg width="198" height="149" viewBox="0 0 198 149"><g transform="translate(-1 -1) scale(0.13986)" filter="url(#blur0)"><text x="68" y="185" font-size="66" textLength="144" lengthAdjust="spacingAndGlyphs" fill="#111" font-family="Liberation Sans" stroke="#111" stroke-width="1.2">Ulna</text><path d="M25 217L262 217" stroke="#111" stroke-width="6" fill="none" /><text x="352" y="1028" font-size="33" textLength="226" lengthAdjust="spacingAndGlyphs" fill="#0B1F66" font-family="Liberation Serif" font-weight="bold" stroke="#0B1F66" stroke-width="0.9">Anterior view</text><text x="775" y="1034" font-size="33" textLength="203" lengthAdjust="spacingAndGlyphs" fill="#0B1F66" font-family="Liberation Serif" font-weight="bold" stroke="#0B1F66" stroke-width="0.9">Lateral view</text><text x="1132" y="1034" font-size="33" textLength="238" lengthAdjust="spacingAndGlyphs" fill="#0B1F66" font-family="Liberation Serif" font-weight="bold" stroke="#0B1F66" stroke-width="0.9">Posterior view</text></g><g transform="translate(-1 -1) scale(0.13986)" filter="url(#blur1)"><rect x="272" y="10" width="378" height="965" fill="#EEEEEA" /><rect x="658" y="10" width="422" height="965" fill="#EEEEEA" /><rect x="1095" y="10" width="300" height="965" fill="#EEEEEA" /><path d="M410.0 80.0 C414.2 67.5 420.0 52.0 430.0 45.0 C440.0 38.0 459.2 33.8 470.0 38.0 C480.8 42.2 491.7 58.0 495.0 70.0 C498.3 82.0 486.7 100.8 490.0 110.0 C493.3 119.2 512.5 115.0 515.0 125.0 C517.5 135.0 510.8 152.5 505.0 170.0 C499.2 187.5 485.8 203.3 480.0 230.0 C474.2 256.7 470.3 293.3 470.0 330.0 C469.7 366.7 476.0 405.0 478.0 450.0 C480.0 495.0 482.0 550.0 482.0 600.0 C482.0 650.0 477.5 708.3 478.0 750.0 C478.5 791.7 482.2 826.7 485.0 850.0 C487.8 873.3 497.5 879.2 495.0 890.0 C492.5 900.8 479.2 912.5 470.0 915.0 C460.8 917.5 446.3 912.5 440.0 905.0 C433.7 897.5 431.2 895.8 432.0 870.0 C432.8 844.2 443.7 795.0 445.0 750.0 C446.3 705.0 443.3 650.0 440.0 600.0 C436.7 550.0 428.3 495.0 425.0 450.0 C421.7 405.0 423.3 366.7 420.0 330.0 C416.7 293.3 405.0 258.3 405.0 230.0 C405.0 201.7 420.0 178.3 420.0 160.0 C420.0 141.7 406.7 133.3 405.0 120.0 C403.3 106.7 405.8 92.5 410.0 80.0Z" fill="#F2EFE6" stroke="#A8A290" stroke-width="5" stroke-linecap="round" stroke-linejoin="round" /><path d="M410.0 80.0 C413.3 68.0 422.0 54.7 432.0 48.0 C442.0 41.3 460.0 36.3 470.0 40.0 C480.0 43.7 489.0 58.3 492.0 70.0 C495.0 81.7 495.0 104.2 488.0 110.0 C481.0 115.8 459.7 101.7 450.0 105.0 C440.3 108.3 436.3 127.5 430.0 130.0 C423.7 132.5 415.3 128.3 412.0 120.0 C408.7 111.7 406.7 92.0 410.0 80.0Z" fill="#6A6454" opacity="0.5" filter="url(#blur3)"/><path d="M465.0 240.0 C468.0 203.3 477.8 195.0 480.0 230.0 C482.2 265.0 477.7 388.3 478.0 450.0 C478.3 511.7 482.0 550.0 482.0 600.0 C482.0 650.0 480.3 725.0 478.0 750.0 C475.7 775.0 469.3 775.0 468.0 750.0 C466.7 725.0 471.0 650.0 470.0 600.0 C469.0 550.0 462.8 510.0 462.0 450.0 C461.2 390.0 462.0 276.7 465.0 240.0Z" fill="#8A8470" opacity="0.5" filter="url(#blur3)"/><path d="M820.0 100.0 C822.8 75.8 825.0 64.7 835.0 55.0 C845.0 45.3 867.5 42.0 880.0 42.0 C892.5 42.0 910.0 49.5 910.0 55.0 C910.0 60.5 886.7 65.8 880.0 75.0 C873.3 84.2 868.3 100.0 870.0 110.0 C871.7 120.0 875.8 130.0 890.0 135.0 C904.2 140.0 945.0 136.7 955.0 140.0 C965.0 143.3 958.3 150.0 950.0 155.0 C941.7 160.0 910.8 162.5 905.0 170.0 C899.2 177.5 916.7 186.7 915.0 200.0 C913.3 213.3 900.0 225.0 895.0 250.0 C890.0 275.0 887.5 308.3 885.0 350.0 C882.5 391.7 881.7 450.0 880.0 500.0 C878.3 550.0 875.0 600.0 875.0 650.0 C875.0 700.0 876.7 763.3 880.0 800.0 C883.3 836.7 891.7 850.0 895.0 870.0 C898.3 890.0 905.0 910.0 900.0 920.0 C895.0 930.0 872.5 924.2 865.0 930.0 C857.5 935.8 860.0 952.5 855.0 955.0 C850.0 957.5 839.2 959.2 835.0 945.0 C830.8 930.8 830.0 902.5 830.0 870.0 C830.0 837.5 834.7 795.0 835.0 750.0 C835.3 705.0 833.2 650.0 832.0 600.0 C830.8 550.0 829.7 500.0 828.0 450.0 C826.3 400.0 823.7 341.7 822.0 300.0 C820.3 258.3 818.3 233.3 818.0 200.0 C817.7 166.7 817.2 124.2 820.0 100.0Z" fill="#F2EFE6" stroke="#A8A290" stroke-width="5" stroke-linecap="round" stroke-linejoin="round" /><path d="M865.0 250.0 C869.5 233.3 891.7 233.3 895.0 250.0 C898.3 266.7 887.5 308.3 885.0 350.0 C882.5 391.7 881.7 450.0 880.0 500.0 C878.3 550.0 875.0 600.0 875.0 650.0 C875.0 700.0 881.7 775.0 880.0 800.0 C878.3 825.0 868.0 825.0 865.0 800.0 C862.0 775.0 861.8 700.0 862.0 650.0 C862.2 600.0 865.0 550.0 866.0 500.0 C867.0 450.0 868.2 391.7 868.0 350.0 C867.8 308.3 860.5 266.7 865.0 250.0Z" fill="#5A5444" opacity="0.55" filter="url(#blur3)"/><path d="M870.0 80.0 C876.7 66.7 898.3 55.0 900.0 60.0 C901.7 65.0 881.7 97.5 880.0 110.0 C878.3 122.5 880.0 129.2 890.0 135.0 C900.0 140.8 937.5 139.5 940.0 145.0 C942.5 150.5 909.7 158.8 905.0 168.0 C900.3 177.2 916.2 194.7 912.0 200.0 C907.8 205.3 888.7 210.0 880.0 200.0 C871.3 190.0 861.7 160.0 860.0 140.0 C858.3 120.0 863.3 93.3 870.0 80.0Z" fill="#6A6454" opacity="0.45" filter="url(#blur3)"/><path d="M1250.0 70.0 C1254.2 57.0 1255.0 47.8 1265.0 42.0 C1275.0 36.2 1298.3 33.7 1310.0 35.0 C1321.7 36.3 1330.0 39.2 1335.0 50.0 C1340.0 60.8 1340.0 78.3 1340.0 100.0 C1340.0 121.7 1335.0 156.7 1335.0 180.0 C1335.0 203.3 1342.5 220.0 1340.0 240.0 C1337.5 260.0 1325.0 270.0 1320.0 300.0 C1315.0 330.0 1312.5 376.7 1310.0 420.0 C1307.5 463.3 1306.7 513.3 1305.0 560.0 C1303.3 606.7 1300.8 656.7 1300.0 700.0 C1299.2 743.3 1298.0 788.3 1300.0 820.0 C1302.0 851.7 1311.2 871.7 1312.0 890.0 C1312.8 908.3 1309.5 920.8 1305.0 930.0 C1300.5 939.2 1291.2 946.7 1285.0 945.0 C1278.8 943.3 1273.8 927.5 1268.0 920.0 C1262.2 912.5 1251.0 916.7 1250.0 900.0 C1249.0 883.3 1260.0 853.3 1262.0 820.0 C1264.0 786.7 1261.0 743.3 1262.0 700.0 C1263.0 656.7 1265.8 606.7 1268.0 560.0 C1270.2 513.3 1274.7 463.3 1275.0 420.0 C1275.3 376.7 1273.3 336.7 1270.0 300.0 C1266.7 263.3 1260.0 225.0 1255.0 200.0 C1250.0 175.0 1242.5 163.3 1240.0 150.0 C1237.5 136.7 1238.3 133.3 1240.0 120.0 C1241.7 106.7 1245.8 83.0 1250.0 70.0Z" fill="#F2EFE6" stroke="#A8A290" stroke-width="5" stroke-linecap="round" stroke-linejoin="round" /><path d="M1305.0 120.0 C1310.0 86.7 1329.5 80.0 1335.0 100.0 C1340.5 120.0 1340.5 206.7 1338.0 240.0 C1335.5 273.3 1324.7 270.0 1320.0 300.0 C1315.3 330.0 1312.5 376.7 1310.0 420.0 C1307.5 463.3 1306.7 513.3 1305.0 560.0 C1303.3 606.7 1302.5 676.7 1300.0 700.0 C1297.5 723.3 1291.0 723.3 1290.0 700.0 C1289.0 676.7 1292.3 606.7 1294.0 560.0 C1295.7 513.3 1298.2 463.3 1300.0 420.0 C1301.8 376.7 1304.2 350.0 1305.0 300.0 C1305.8 250.0 1300.0 153.3 1305.0 120.0Z" fill="#7A7464" opacity="0.5" filter="url(#blur3)"/><path d="M520 68H578" stroke="#9a968a" stroke-width="7" stroke-dasharray="14 4 22 5 9 4" opacity=".75"/><path d="M305 128H365" stroke="#9a968a" stroke-width="7" stroke-dasharray="14 4 22 5 9 4" opacity=".75"/><path d="M285 158H375" stroke="#9a968a" stroke-width="7" stroke-dasharray="14 4 22 5 9 4" opacity=".75"/><path d="M502 214H608" stroke="#9a968a" stroke-width="7" stroke-dasharray="14 4 22 5 9 4" opacity=".75"/><path d="M288 438H392" stroke="#9a968a" stroke-width="7" stroke-dasharray="14 4 22 5 9 4" opacity=".75"/><path d="M502 448H592" stroke="#9a968a" stroke-width="7" stroke-dasharray="14 4 22 5 9 4" opacity=".75"/><path d="M495 495H590" stroke="#9a968a" stroke-width="7" stroke-dasharray="14 4 22 5 9 4" opacity=".75"/><path d="M338 885H410" stroke="#9a968a" stroke-width="7" stroke-dasharray="14 4 22 5 9 4" opacity=".75"/><path d="M500 922H545" stroke="#9a968a" stroke-width="7" stroke-dasharray="14 4 22 5 9 4" opacity=".75"/><path d="M502 938H552" stroke="#9a968a" stroke-width="7" stroke-dasharray="14 4 22 5 9 4" opacity=".75"/><path d="M762 44H822" stroke="#9a968a" stroke-width="7" stroke-dasharray="14 4 22 5 9 4" opacity=".75"/><path d="M915 95H1035" stroke="#9a968a" stroke-width="7" stroke-dasharray="14 4 22 5 9 4" opacity=".75"/><path d="M980 140H1042" stroke="#9a968a" stroke-width="7" stroke-dasharray="14 4 22 5 9 4" opacity=".75"/><path d="M982 154H1048" stroke="#9a968a" stroke-width="7" stroke-dasharray="14 4 22 5 9 4" opacity=".75"/><path d="M702 165H808" stroke="#9a968a" stroke-width="7" stroke-dasharray="14 4 22 5 9 4" opacity=".75"/><path d="M712 210H800" stroke="#9a968a" stroke-width="7" stroke-dasharray="14 4 22 5 9 4" opacity=".75"/><path d="M725 226H792" stroke="#9a968a" stroke-width="7" stroke-dasharray="14 4 22 5 9 4" opacity=".75"/><path d="M935 226H1038" stroke="#9a968a" stroke-width="7" stroke-dasharray="14 4 22 5 9 4" opacity=".75"/><path d="M695 374H792" stroke="#9a968a" stroke-width="7" stroke-dasharray="14 4 22 5 9 4" opacity=".75"/><path d="M912 471H1018" stroke="#9a968a" stroke-width="7" stroke-dasharray="14 4 22 5 9 4" opacity=".75"/><path d="M700 506H800" stroke="#9a968a" stroke-width="7" stroke-dasharray="14 4 22 5 9 4" opacity=".75"/><path d="M928 924H1018" stroke="#9a968a" stroke-width="7" stroke-dasharray="14 4 22 5 9 4" opacity=".75"/><path d="M945 940H998" stroke="#9a968a" stroke-width="7" stroke-dasharray="14 4 22 5 9 4" opacity=".75"/><path d="M680 940H808" stroke="#9a968a" stroke-width="7" stroke-dasharray="14 4 22 5 9 4" opacity=".75"/><path d="M1170 44H1228" stroke="#9a968a" stroke-width="7" stroke-dasharray="14 4 22 5 9 4" opacity=".75"/><path d="M1168 410H1262" stroke="#9a968a" stroke-width="7" stroke-dasharray="14 4 22 5 9 4" opacity=".75"/><path d="M1155 452H1250" stroke="#9a968a" stroke-width="7" stroke-dasharray="14 4 22 5 9 4" opacity=".75"/><path d="M1158 619H1250" stroke="#9a968a" stroke-width="7" stroke-dasharray="14 4 22 5 9 4" opacity=".75"/><path d="M1140 912H1215" stroke="#9a968a" stroke-width="7" stroke-dasharray="14 4 22 5 9 4" opacity=".75"/><path d="M1112 938H1238" stroke="#9a968a" stroke-width="7" stroke-dasharray="14 4 22 5 9 4" opacity=".75"/></g></svg></div>
<div class="n" style="left:44.5px;top:805.5px">43</div>
<div class="th" style="left:288px;top:648px"><svg width="198" height="149" viewBox="0 0 198 149"><g transform="translate(-1 -1) scale(0.13986)" filter="url(#blur0)"><text x="360" y="162" font-size="72" textLength="712" lengthAdjust="spacingAndGlyphs" fill="#111" font-family="Liberation Sans" stroke="#111" stroke-width="1.2">Upper End of Radius</text><path d="M75 217L1340 217" stroke="#111" stroke-width="6" fill="none" /><text x="82" y="300" font-size="33" textLength="290" lengthAdjust="spacingAndGlyphs" fill="#0B1F66" font-family="Liberation Serif" font-weight="bold" stroke="#0B1F66" stroke-width="0.9">1. Head of radius</text><text x="82" y="356" font-size="33" textLength="290" lengthAdjust="spacingAndGlyphs" fill="#0B1F66" font-family="Liberation Serif" font-weight="bold" stroke="#0B1F66" stroke-width="0.9">2. Neck of radius</text><text x="82" y="398" font-size="33" textLength="323" lengthAdjust="spacingAndGlyphs" fill="#0B1F66" font-family="Liberation Serif" font-weight="bold" stroke="#0B1F66" stroke-width="0.9">3. Radial tuberosity</text><text x="220" y="1040" font-size="33" textLength="220" lengthAdjust="spacingAndGlyphs" fill="#0B1F66" font-family="Liberation Serif" font-weight="bold" stroke="#0B1F66" stroke-width="0.9">Anterior view</text><text x="878" y="640" font-size="33" textLength="220" lengthAdjust="spacingAndGlyphs" fill="#0B1F66" font-family="Liberation Serif" font-weight="bold" stroke="#0B1F66" stroke-width="0.9">Anterior view</text><text x="875" y="1056" font-size="33" textLength="203" lengthAdjust="spacingAndGlyphs" fill="#0B1F66" font-family="Liberation Serif" font-weight="bold" stroke="#0B1F66" stroke-width="0.9">Medial view</text><path d="M1318 1030h18" stroke="#8a8aa8" stroke-width="6" opacity=".7"/></g><g transform="translate(-1 -1) scale(0.13986)" filter="url(#blur1)"><rect x="38" y="510" width="612" height="480" fill="#EDEDE8" /><rect x="672" y="232" width="620" height="363" fill="#EDEDE8" /><rect x="672" y="655" width="620" height="370" fill="#EDEDE8" /><defs><clipPath id="s44a"><rect x="38" y="510" width="612" height="480"/></clipPath><clipPath id="s44b"><rect x="672" y="232" width="620" height="363"/></clipPath><clipPath id="s44c"><rect x="672" y="655" width="620" height="370"/></clipPath></defs><g clip-path="url(#s44a)"><path d="M290.0 600.0 C295.0 586.7 313.3 569.2 330.0 560.0 C346.7 550.8 371.7 541.7 390.0 545.0 C408.3 548.3 432.5 564.2 440.0 580.0 C447.5 595.8 440.0 625.8 435.0 640.0 C430.0 654.2 408.3 655.0 410.0 665.0 C411.7 675.0 441.7 684.2 445.0 700.0 C448.3 715.8 437.5 743.3 430.0 760.0 C422.5 776.7 406.7 776.7 400.0 800.0 C393.3 823.3 393.3 866.7 390.0 900.0 C386.7 933.3 395.0 983.3 380.0 1000.0 C365.0 1016.7 315.0 1025.0 300.0 1000.0 C285.0 975.0 292.5 888.3 290.0 850.0 C287.5 811.7 283.3 795.0 285.0 770.0 C286.7 745.0 292.5 718.3 300.0 700.0 C307.5 681.7 330.0 670.0 330.0 660.0 C330.0 650.0 306.7 650.0 300.0 640.0 C293.3 630.0 285.0 613.3 290.0 600.0Z" fill="#EFECE4" stroke="#9A947E" stroke-width="6" stroke-linecap="round" stroke-linejoin="round" /><path d="M190.0 710.0 C194.2 699.2 205.0 688.3 220.0 685.0 C235.0 681.7 266.7 684.2 280.0 690.0 C293.3 695.8 300.0 708.3 300.0 720.0 C300.0 731.7 286.7 746.7 280.0 760.0 C273.3 773.3 265.0 776.7 260.0 800.0 C255.0 823.3 252.5 866.7 250.0 900.0 C247.5 933.3 252.5 983.3 245.0 1000.0 C237.5 1016.7 210.8 1025.0 205.0 1000.0 C199.2 975.0 210.0 888.3 210.0 850.0 C210.0 811.7 207.5 786.7 205.0 770.0 C202.5 753.3 197.5 760.0 195.0 750.0 C192.5 740.0 185.8 720.8 190.0 710.0Z" fill="#EFECE4" stroke="#9A947E" stroke-width="6" stroke-linecap="round" stroke-linejoin="round" /><path d="M300.0 600.0 C305.0 591.7 323.3 590.0 340.0 590.0 C356.7 590.0 385.0 595.0 400.0 600.0 C415.0 605.0 428.3 610.0 430.0 620.0 C431.7 630.0 423.3 655.0 410.0 660.0 C396.7 665.0 366.7 653.3 350.0 650.0 C333.3 646.7 318.3 648.3 310.0 640.0 C301.7 631.7 295.0 608.3 300.0 600.0Z" fill="#4A4438" opacity="0.6" filter="url(#blur3)"/><path d="M310.0 760.0 C320.8 740.0 365.0 753.3 380.0 760.0 C395.0 766.7 398.3 776.7 400.0 800.0 C401.7 823.3 393.3 868.3 390.0 900.0 C386.7 931.7 391.7 975.0 380.0 990.0 C368.3 1005.0 330.8 1008.3 320.0 990.0 C309.2 971.7 316.7 918.3 315.0 880.0 C313.3 841.7 299.2 780.0 310.0 760.0Z" fill="#5A5444" opacity="0.55" filter="url(#blur3)"/><path d="M225.0 790.0 C230.5 758.3 253.8 781.7 258.0 800.0 C262.2 818.3 252.2 868.3 250.0 900.0 C247.8 931.7 249.2 975.0 245.0 990.0 C240.8 1005.0 228.3 1023.3 225.0 990.0 C221.7 956.7 219.5 821.7 225.0 790.0Z" fill="#6A6454" opacity="0.5" filter="url(#blur3)"/></g><g clip-path="url(#s44b)"><path d="M950.0 268.0 C960.0 261.0 989.2 258.0 1010.0 258.0 C1030.8 258.0 1064.2 261.0 1075.0 268.0 C1085.8 275.0 1079.2 291.3 1075.0 300.0 C1070.8 308.7 1053.3 306.7 1050.0 320.0 C1046.7 333.3 1050.0 360.0 1055.0 380.0 C1060.0 400.0 1077.5 420.0 1080.0 440.0 C1082.5 460.0 1073.3 471.7 1070.0 500.0 C1066.7 528.3 1074.2 591.7 1060.0 610.0 C1045.8 628.3 996.7 628.3 985.0 610.0 C973.3 591.7 990.0 535.0 990.0 500.0 C990.0 465.0 987.5 430.0 985.0 400.0 C982.5 370.0 980.8 336.7 975.0 320.0 C969.2 303.3 954.2 308.7 950.0 300.0 C945.8 291.3 940.0 275.0 950.0 268.0Z" fill="#EFECE4" stroke="#9A947E" stroke-width="6" stroke-linecap="round" stroke-linejoin="round" /><path d="M1030.0 270.0 C1037.5 260.0 1067.5 265.0 1075.0 270.0 C1082.5 275.0 1079.2 291.7 1075.0 300.0 C1070.8 308.3 1053.3 306.7 1050.0 320.0 C1046.7 333.3 1050.0 360.0 1055.0 380.0 C1060.0 400.0 1077.5 420.0 1080.0 440.0 C1082.5 460.0 1073.3 473.3 1070.0 500.0 C1066.7 526.7 1066.7 583.3 1060.0 600.0 C1053.3 616.7 1034.2 616.7 1030.0 600.0 C1025.8 583.3 1035.8 533.3 1035.0 500.0 C1034.2 466.7 1025.8 428.3 1025.0 400.0 C1024.2 371.7 1029.2 351.7 1030.0 330.0 C1030.8 308.3 1022.5 280.0 1030.0 270.0Z" fill="#5A5444" opacity="0.55" filter="url(#blur3)"/></g><g clip-path="url(#s44c)"><path d="M925.0 690.0 C937.5 682.5 973.3 675.8 1000.0 675.0 C1026.7 674.2 1070.8 677.5 1085.0 685.0 C1099.2 692.5 1090.0 710.0 1085.0 720.0 C1080.0 730.0 1059.2 723.3 1055.0 745.0 C1050.8 766.7 1060.0 815.8 1060.0 850.0 C1060.0 884.2 1056.7 918.3 1055.0 950.0 C1053.3 981.7 1070.8 1025.0 1050.0 1040.0 C1029.2 1055.0 949.2 1055.0 930.0 1040.0 C910.8 1025.0 933.3 981.7 935.0 950.0 C936.7 918.3 937.5 883.3 940.0 850.0 C942.5 816.7 952.5 771.7 950.0 750.0 C947.5 728.3 929.2 730.0 925.0 720.0 C920.8 710.0 912.5 697.5 925.0 690.0Z" fill="#EFECE4" stroke="#9A947E" stroke-width="6" stroke-linecap="round" stroke-linejoin="round" /><path d="M1020.0 680.0 C1030.8 669.7 1074.2 681.3 1085.0 688.0 C1095.8 694.7 1090.0 710.5 1085.0 720.0 C1080.0 729.5 1059.2 723.3 1055.0 745.0 C1050.8 766.7 1060.0 815.8 1060.0 850.0 C1060.0 884.2 1056.7 920.0 1055.0 950.0 C1053.3 980.0 1057.5 1016.7 1050.0 1030.0 C1042.5 1043.3 1015.8 1060.0 1010.0 1030.0 C1004.2 1000.0 1013.3 896.7 1015.0 850.0 C1016.7 803.3 1019.2 778.3 1020.0 750.0 C1020.8 721.7 1009.2 690.3 1020.0 680.0Z" fill="#4A4438" opacity="0.6" filter="url(#blur3)"/><path d="M950.0 860.0 C958.3 836.7 990.0 825.0 1000.0 840.0 C1010.0 855.0 1011.7 921.7 1010.0 950.0 C1008.3 978.3 1000.0 1005.0 990.0 1010.0 C980.0 1015.0 956.7 1005.0 950.0 980.0 C943.3 955.0 941.7 883.3 950.0 860.0Z" fill="#8A8470" opacity="0.4" filter="url(#blur3)"/></g><path d="M210 566H285" stroke="#8a867a" stroke-width="8" stroke-dasharray="14 4 22 5 9 4" opacity=".75"/><path d="M455 636H610" stroke="#8a867a" stroke-width="8" stroke-dasharray="14 4 22 5 9 4" opacity=".75"/><path d="M60 715H150" stroke="#8a867a" stroke-width="8" stroke-dasharray="14 4 22 5 9 4" opacity=".75"/><path d="M72 732H135" stroke="#8a867a" stroke-width="8" stroke-dasharray="14 4 22 5 9 4" opacity=".75"/><path d="M445 745H598" stroke="#8a867a" stroke-width="8" stroke-dasharray="14 4 22 5 9 4" opacity=".75"/><path d="M80 772H170" stroke="#8a867a" stroke-width="8" stroke-dasharray="14 4 22 5 9 4" opacity=".75"/><path d="M435 832H552" stroke="#8a867a" stroke-width="8" stroke-dasharray="14 4 22 5 9 4" opacity=".75"/><path d="M60 853H170" stroke="#8a867a" stroke-width="8" stroke-dasharray="14 4 22 5 9 4" opacity=".75"/><path d="M685 276H935" stroke="#8a867a" stroke-width="8" stroke-dasharray="14 4 22 5 9 4" opacity=".75"/><path d="M800 325H925" stroke="#8a867a" stroke-width="8" stroke-dasharray="14 4 22 5 9 4" opacity=".75"/><path d="M1120 280H1235" stroke="#8a867a" stroke-width="8" stroke-dasharray="14 4 22 5 9 4" opacity=".75"/><path d="M1115 440H1282" stroke="#8a867a" stroke-width="8" stroke-dasharray="14 4 22 5 9 4" opacity=".75"/><path d="M708 692H888" stroke="#8a867a" stroke-width="8" stroke-dasharray="14 4 22 5 9 4" opacity=".75"/><path d="M740 722H862" stroke="#8a867a" stroke-width="8" stroke-dasharray="14 4 22 5 9 4" opacity=".75"/><path d="M725 755H888" stroke="#8a867a" stroke-width="8" stroke-dasharray="14 4 22 5 9 4" opacity=".75"/><path d="M1130 697H1275" stroke="#8a867a" stroke-width="8" stroke-dasharray="14 4 22 5 9 4" opacity=".75"/><path d="M695 903H905" stroke="#8a867a" stroke-width="8" stroke-dasharray="14 4 22 5 9 4" opacity=".75"/></g></svg></div>
<div class="n" style="left:288.5px;top:805.5px">44</div>
<div class="th" style="left:532px;top:648px"><svg width="198" height="149" viewBox="0 0 198 149"><g transform="translate(-1 -1) scale(0.13986)" filter="url(#blur0)"><text x="55" y="185" font-size="64" textLength="207" lengthAdjust="spacingAndGlyphs" fill="#111" font-family="Liberation Sans" stroke="#111" stroke-width="1.2">Radius</text><path d="M25 217L298 217" stroke="#111" stroke-width="6" fill="none" /><text x="380" y="1012" font-size="33" textLength="225" lengthAdjust="spacingAndGlyphs" fill="#0B1F66" font-family="Liberation Serif" font-weight="bold" stroke="#0B1F66" stroke-width="0.9">Anterior view</text><text x="765" y="1012" font-size="33" textLength="203" lengthAdjust="spacingAndGlyphs" fill="#0B1F66" font-family="Liberation Serif" font-weight="bold" stroke="#0B1F66" stroke-width="0.9">Medial view</text><text x="1122" y="1012" font-size="33" textLength="236" lengthAdjust="spacingAndGlyphs" fill="#0B1F66" font-family="Liberation Serif" font-weight="bold" stroke="#0B1F66" stroke-width="0.9">Posterior view</text><path d="M1318 1028h18" stroke="#8a8aa8" stroke-width="6" opacity=".7"/></g><g transform="translate(-1 -1) scale(0.13986)" filter="url(#blur1)"><rect x="302" y="10" width="390" height="945" fill="#EEEEEA" /><rect x="702" y="10" width="326" height="945" fill="#EEEEEA" /><rect x="1038" y="10" width="380" height="945" fill="#EEEEEA" /><path d="M475.0 65.0 C481.5 59.3 501.7 58.0 515.0 58.0 C528.3 58.0 548.8 59.3 555.0 65.0 C561.2 70.7 555.3 84.5 552.0 92.0 C548.7 99.5 536.2 98.7 535.0 110.0 C533.8 121.3 542.5 143.3 545.0 160.0 C547.5 176.7 551.7 193.3 550.0 210.0 C548.3 226.7 538.3 228.3 535.0 260.0 C531.7 291.7 530.0 351.7 530.0 400.0 C530.0 448.3 531.7 500.0 535.0 550.0 C538.3 600.0 544.2 658.3 550.0 700.0 C555.8 741.7 562.5 773.3 570.0 800.0 C577.5 826.7 591.7 844.2 595.0 860.0 C598.3 875.8 600.8 887.5 590.0 895.0 C579.2 902.5 545.0 899.2 530.0 905.0 C515.0 910.8 508.3 930.0 500.0 930.0 C491.7 930.0 486.3 913.3 480.0 905.0 C473.7 896.7 462.3 897.5 462.0 880.0 C461.7 862.5 473.3 830.0 478.0 800.0 C482.7 770.0 487.7 741.7 490.0 700.0 C492.3 658.3 492.0 600.0 492.0 550.0 C492.0 500.0 488.7 448.3 490.0 400.0 C491.3 351.7 497.5 300.0 500.0 260.0 C502.5 220.0 505.8 185.0 505.0 160.0 C504.2 135.0 499.8 121.3 495.0 110.0 C490.2 98.7 479.3 99.5 476.0 92.0 C472.7 84.5 468.5 70.7 475.0 65.0Z" fill="#F1EEE6" stroke="#A8A290" stroke-width="5" stroke-linecap="round" stroke-linejoin="round" /><path d="M515.0 230.0 C518.8 206.7 532.5 231.7 535.0 260.0 C537.5 288.3 530.0 351.7 530.0 400.0 C530.0 448.3 531.7 500.0 535.0 550.0 C538.3 600.0 545.0 658.3 550.0 700.0 C555.0 741.7 565.8 783.3 565.0 800.0 C564.2 816.7 551.2 816.7 545.0 800.0 C538.8 783.3 533.0 741.7 528.0 700.0 C523.0 658.3 517.7 600.0 515.0 550.0 C512.3 500.0 512.0 453.3 512.0 400.0 C512.0 346.7 511.2 253.3 515.0 230.0Z" fill="#5A5444" opacity="0.5" filter="url(#blur3)"/><path d="M525.0 130.0 C529.7 123.3 543.8 146.7 548.0 160.0 C552.2 173.3 552.2 195.0 550.0 210.0 C547.8 225.0 540.0 251.7 535.0 250.0 C530.0 248.3 521.7 220.0 520.0 200.0 C518.3 180.0 520.3 136.7 525.0 130.0Z" fill="#5A5444" opacity="0.5" filter="url(#blur3)"/><path d="M830.0 60.0 C836.7 54.0 856.7 52.0 870.0 52.0 C883.3 52.0 903.7 54.0 910.0 60.0 C916.3 66.0 911.3 80.5 908.0 88.0 C904.7 95.5 892.7 93.0 890.0 105.0 C887.3 117.0 892.8 140.8 892.0 160.0 C891.2 179.2 887.0 196.7 885.0 220.0 C883.0 243.3 880.0 261.7 880.0 300.0 C880.0 338.3 883.3 400.0 885.0 450.0 C886.7 500.0 888.3 550.0 890.0 600.0 C891.7 650.0 891.7 711.7 895.0 750.0 C898.3 788.3 906.7 808.3 910.0 830.0 C913.3 851.7 920.0 868.3 915.0 880.0 C910.0 891.7 889.2 891.7 880.0 900.0 C870.8 908.3 867.5 930.0 860.0 930.0 C852.5 930.0 841.7 911.7 835.0 900.0 C828.3 888.3 820.0 876.7 820.0 860.0 C820.0 843.3 830.8 826.7 835.0 800.0 C839.2 773.3 843.3 741.7 845.0 700.0 C846.7 658.3 845.5 600.0 845.0 550.0 C844.5 500.0 843.2 448.3 842.0 400.0 C840.8 351.7 839.2 300.0 838.0 260.0 C836.8 220.0 833.8 185.8 835.0 160.0 C836.2 134.2 845.8 117.0 845.0 105.0 C844.2 93.0 832.5 95.5 830.0 88.0 C827.5 80.5 823.3 66.0 830.0 60.0Z" fill="#F1EEE6" stroke="#A8A290" stroke-width="5" stroke-linecap="round" stroke-linejoin="round" /><path d="M870.0 230.0 C872.8 200.0 883.3 208.3 885.0 220.0 C886.7 231.7 880.0 261.7 880.0 300.0 C880.0 338.3 883.3 400.0 885.0 450.0 C886.7 500.0 888.3 550.0 890.0 600.0 C891.7 650.0 892.5 711.7 895.0 750.0 C897.5 788.3 906.7 816.7 905.0 830.0 C903.3 843.3 890.0 851.7 885.0 830.0 C880.0 808.3 877.5 746.7 875.0 700.0 C872.5 653.3 871.2 600.0 870.0 550.0 C868.8 500.0 868.0 453.3 868.0 400.0 C868.0 346.7 867.2 260.0 870.0 230.0Z" fill="#4A4438" opacity="0.55" filter="url(#blur3)"/><path d="M845.0 140.0 C850.8 126.7 877.5 123.3 885.0 130.0 C892.5 136.7 890.8 165.0 890.0 180.0 C889.2 195.0 886.7 215.0 880.0 220.0 C873.3 225.0 855.8 223.3 850.0 210.0 C844.2 196.7 839.2 153.3 845.0 140.0Z" fill="#5A5444" opacity="0.5" filter="url(#blur3)"/><path d="M835.0 850.0 C842.5 840.0 869.2 835.0 880.0 840.0 C890.8 845.0 903.3 865.8 900.0 880.0 C896.7 894.2 870.8 921.7 860.0 925.0 C849.2 928.3 839.2 912.5 835.0 900.0 C830.8 887.5 827.5 860.0 835.0 850.0Z" fill="#3A3428" opacity="0.6" filter="url(#blur3)"/><path d="M1180.0 60.0 C1186.7 54.0 1206.3 52.0 1220.0 52.0 C1233.7 52.0 1255.3 54.0 1262.0 60.0 C1268.7 66.0 1263.7 80.5 1260.0 88.0 C1256.3 95.5 1242.5 86.3 1240.0 105.0 C1237.5 123.7 1243.3 167.5 1245.0 200.0 C1246.7 232.5 1250.0 258.3 1250.0 300.0 C1250.0 341.7 1246.7 400.0 1245.0 450.0 C1243.3 500.0 1241.7 550.0 1240.0 600.0 C1238.3 650.0 1233.3 711.7 1235.0 750.0 C1236.7 788.3 1245.5 805.0 1250.0 830.0 C1254.5 855.0 1263.7 884.2 1262.0 900.0 C1260.3 915.8 1252.0 924.2 1240.0 925.0 C1228.0 925.8 1205.8 910.8 1190.0 905.0 C1174.2 899.2 1151.7 899.2 1145.0 890.0 C1138.3 880.8 1145.0 865.0 1150.0 850.0 C1155.0 835.0 1169.2 825.0 1175.0 800.0 C1180.8 775.0 1182.5 741.7 1185.0 700.0 C1187.5 658.3 1188.3 600.0 1190.0 550.0 C1191.7 500.0 1194.2 448.3 1195.0 400.0 C1195.8 351.7 1195.8 300.0 1195.0 260.0 C1194.2 220.0 1190.0 185.8 1190.0 160.0 C1190.0 134.2 1196.7 117.0 1195.0 105.0 C1193.3 93.0 1182.5 95.5 1180.0 88.0 C1177.5 80.5 1173.3 66.0 1180.0 60.0Z" fill="#F1EEE6" stroke="#A8A290" stroke-width="5" stroke-linecap="round" stroke-linejoin="round" /><path d="M1180.0 62.0 C1193.3 57.7 1248.7 57.7 1262.0 62.0 C1275.3 66.3 1273.3 83.7 1260.0 88.0 C1246.7 92.3 1195.3 92.3 1182.0 88.0 C1168.7 83.7 1166.7 66.3 1180.0 62.0Z" fill="#3A3428" opacity="0.6" filter="url(#blur3)"/><path d="M1215.0 350.0 C1221.7 350.0 1240.8 408.3 1245.0 450.0 C1249.2 491.7 1241.7 550.0 1240.0 600.0 C1238.3 650.0 1239.2 725.0 1235.0 750.0 C1230.8 775.0 1218.8 775.0 1215.0 750.0 C1211.2 725.0 1213.7 650.0 1212.0 600.0 C1210.3 550.0 1204.5 491.7 1205.0 450.0 C1205.5 408.3 1208.3 350.0 1215.0 350.0Z" fill="#5A5444" opacity="0.45" filter="url(#blur3)"/><path d="M1200.0 830.0 C1208.3 817.5 1240.0 818.3 1250.0 830.0 C1260.0 841.7 1261.7 884.7 1260.0 900.0 C1258.3 915.3 1250.0 921.2 1240.0 922.0 C1230.0 922.8 1206.7 920.3 1200.0 905.0 C1193.3 889.7 1191.7 842.5 1200.0 830.0Z" fill="#4A4438" opacity="0.5" filter="url(#blur3)"/><path d="M308 72H465" stroke="#9a968a" stroke-width="7" stroke-dasharray="14 4 22 5 9 4" opacity=".75"/><path d="M380 100H455" stroke="#9a968a" stroke-width="7" stroke-dasharray="14 4 22 5 9 4" opacity=".75"/><path d="M580 72H655" stroke="#9a968a" stroke-width="7" stroke-dasharray="14 4 22 5 9 4" opacity=".75"/><path d="M580 173H688" stroke="#9a968a" stroke-width="7" stroke-dasharray="14 4 22 5 9 4" opacity=".75"/><path d="M340 392H462" stroke="#9a968a" stroke-width="7" stroke-dasharray="14 4 22 5 9 4" opacity=".75"/><path d="M570 437H685" stroke="#9a968a" stroke-width="7" stroke-dasharray="14 4 22 5 9 4" opacity=".75"/><path d="M362 470H455" stroke="#9a968a" stroke-width="7" stroke-dasharray="14 4 22 5 9 4" opacity=".75"/><path d="M570 512H665" stroke="#9a968a" stroke-width="7" stroke-dasharray="14 4 22 5 9 4" opacity=".75"/><path d="M318 922H450" stroke="#9a968a" stroke-width="7" stroke-dasharray="14 4 22 5 9 4" opacity=".75"/><path d="M718 62H808" stroke="#9a968a" stroke-width="7" stroke-dasharray="14 4 22 5 9 4" opacity=".75"/><path d="M735 72H800" stroke="#9a968a" stroke-width="7" stroke-dasharray="14 4 22 5 9 4" opacity=".75"/><path d="M728 98H808" stroke="#9a968a" stroke-width="7" stroke-dasharray="14 4 22 5 9 4" opacity=".75"/><path d="M935 66H1005" stroke="#9a968a" stroke-width="7" stroke-dasharray="14 4 22 5 9 4" opacity=".75"/><path d="M712 173H815" stroke="#9a968a" stroke-width="7" stroke-dasharray="14 4 22 5 9 4" opacity=".75"/><path d="M918 452H1025" stroke="#9a968a" stroke-width="7" stroke-dasharray="14 4 22 5 9 4" opacity=".75"/><path d="M730 489H828" stroke="#9a968a" stroke-width="7" stroke-dasharray="14 4 22 5 9 4" opacity=".75"/><path d="M920 508H1020" stroke="#9a968a" stroke-width="7" stroke-dasharray="14 4 22 5 9 4" opacity=".75"/><path d="M920 872H1018" stroke="#9a968a" stroke-width="7" stroke-dasharray="14 4 22 5 9 4" opacity=".75"/><path d="M900 922H948" stroke="#9a968a" stroke-width="7" stroke-dasharray="14 4 22 5 9 4" opacity=".75"/><path d="M898 940H960" stroke="#9a968a" stroke-width="7" stroke-dasharray="14 4 22 5 9 4" opacity=".75"/><path d="M1065 55H1160" stroke="#9a968a" stroke-width="7" stroke-dasharray="14 4 22 5 9 4" opacity=".75"/><path d="M1085 70H1140" stroke="#9a968a" stroke-width="7" stroke-dasharray="14 4 22 5 9 4" opacity=".75"/><path d="M1072 98H1155" stroke="#9a968a" stroke-width="7" stroke-dasharray="14 4 22 5 9 4" opacity=".75"/><path d="M1290 66H1365" stroke="#9a968a" stroke-width="7" stroke-dasharray="14 4 22 5 9 4" opacity=".75"/><path d="M1050 155H1158" stroke="#9a968a" stroke-width="7" stroke-dasharray="14 4 22 5 9 4" opacity=".75"/><path d="M1285 439H1385" stroke="#9a968a" stroke-width="7" stroke-dasharray="14 4 22 5 9 4" opacity=".75"/><path d="M1280 495H1382" stroke="#9a968a" stroke-width="7" stroke-dasharray="14 4 22 5 9 4" opacity=".75"/><path d="M1055 518H1158" stroke="#9a968a" stroke-width="7" stroke-dasharray="14 4 22 5 9 4" opacity=".75"/><path d="M1278 922H1408" stroke="#9a968a" stroke-width="7" stroke-dasharray="14 4 22 5 9 4" opacity=".75"/></g></svg></div>
<div class="n" style="left:532.5px;top:805.5px">45</div>
<div class="th" style="left:776px;top:648px"><svg width="198" height="149" viewBox="0 0 198 149"><g transform="translate(-1 -1) scale(0.13986)" filter="url(#blur0)"><text x="488" y="162" font-size="72" textLength="454" lengthAdjust="spacingAndGlyphs" fill="#111" font-family="Liberation Sans" stroke="#111" stroke-width="1.2">Carpal Bones</text><path d="M75 217L1340 217" stroke="#111" stroke-width="6" fill="none" /><path d="M1318 1028h18" stroke="#8a8aa8" stroke-width="6" opacity=".7"/></g><g transform="translate(-1 -1) scale(0.13986)" filter="url(#blur1)"><rect x="58" y="260" width="597" height="780" fill="#EEEEEA" /><rect x="760" y="260" width="625" height="780" fill="#EEEEEA" /><path d="M225.0 690.0 C227.5 668.8 269.4 653.3 280.0 650.0 C290.6 646.7 339.3 650.0 352.0 650.0 C364.7 650.0 419.2 644.2 432.0 650.0 C444.8 655.8 504.4 698.8 505.0 720.0 C505.6 741.2 460.7 889.6 439.5 905.0 C418.3 920.4 268.4 922.9 250.5 905.0 C232.6 887.1 222.5 711.2 225.0 690.0Z" fill="#5A5446" opacity=".18" filter="url(#blur2)"/><path d="M183.60271562697915 444.9635404574754 L199.39728437302085 575.0364595425247" fill="none" stroke="#6E6858" stroke-width="24.76" stroke-linecap="round" stroke-linejoin="round"/><path d="M183.60271562697915 444.9635404574754 L199.39728437302085 575.0364595425247" fill="none" stroke="#E9E5DA" stroke-width="19.76" stroke-linecap="round" stroke-linejoin="round"/><circle cx="183.6" cy="445.0" r="12.3" fill="#E9E5DA" stroke="#6E6858" stroke-width="2.5"/><circle cx="199.4" cy="575.0" r="13.8" fill="#E9E5DA" stroke="#6E6858" stroke-width="2.5"/><path d="M189.0 444.3L204.8 574.4" stroke="#8A8472" stroke-width="6.9" opacity=".45"/><path d="M201.10810551794484 584.8756642789573 L223.89189448205516 685.1243357210427" fill="none" stroke="#6E6858" stroke-width="26.840000000000003" stroke-linecap="round" stroke-linejoin="round"/><path d="M201.10810551794484 584.8756642789573 L223.89189448205516 685.1243357210427" fill="none" stroke="#E9E5DA" stroke-width="21.840000000000003" stroke-linecap="round" stroke-linejoin="round"/><circle cx="201.1" cy="584.9" r="13.7" fill="#E9E5DA" stroke="#6E6858" stroke-width="2.5"/><circle cx="223.9" cy="685.1" r="15.3" fill="#E9E5DA" stroke="#6E6858" stroke-width="2.5"/><path d="M207.0 583.5L229.7 683.8" stroke="#8A8472" stroke-width="7.6" opacity=".45"/><path d="M226.33821931893047 694.8175895481497 L273.6617806810695 865.1824104518503" fill="none" stroke="#6E6858" stroke-width="28.92" stroke-linecap="round" stroke-linejoin="round"/><path d="M226.33821931893047 694.8175895481497 L273.6617806810695 865.1824104518503" fill="none" stroke="#E9E5DA" stroke-width="23.92" stroke-linecap="round" stroke-linejoin="round"/><circle cx="226.3" cy="694.8" r="14.9" fill="#E9E5DA" stroke="#6E6858" stroke-width="2.5"/><circle cx="273.7" cy="865.2" r="16.7" fill="#E9E5DA" stroke="#6E6858" stroke-width="2.5"/><path d="M232.7 693.1L280.0 863.4" stroke="#8A8472" stroke-width="8.4" opacity=".45"/><path d="M253.27232246579933 339.99257853965474 L256.50767753420064 399.30742146034527" fill="none" stroke="#6E6858" stroke-width="24.76" stroke-linecap="round" stroke-linejoin="round"/><path d="M253.27232246579933 339.99257853965474 L256.50767753420064 399.30742146034527" fill="none" stroke="#E9E5DA" stroke-width="19.76" stroke-linecap="round" stroke-linejoin="round"/><circle cx="253.3" cy="340.0" r="12.3" fill="#E9E5DA" stroke="#6E6858" stroke-width="2.5"/><circle cx="256.5" cy="399.3" r="13.8" fill="#E9E5DA" stroke="#6E6858" stroke-width="2.5"/><path d="M258.7 339.7L261.9 399.0" stroke="#8A8472" stroke-width="6.9" opacity=".45"/><path d="M257.0523224657993 409.29257853965476 L261.72767753420067 495.00742146034526" fill="none" stroke="#6E6858" stroke-width="26.840000000000003" stroke-linecap="round" stroke-linejoin="round"/><path d="M257.0523224657993 409.29257853965476 L261.72767753420067 495.00742146034526" fill="none" stroke="#E9E5DA" stroke-width="21.840000000000003" stroke-linecap="round" stroke-linejoin="round"/><circle cx="257.1" cy="409.3" r="13.7" fill="#E9E5DA" stroke="#6E6858" stroke-width="2.5"/><circle cx="261.7" cy="495.0" r="15.3" fill="#E9E5DA" stroke="#6E6858" stroke-width="2.5"/><path d="M263.0 409.0L267.7 494.7" stroke="#8A8472" stroke-width="7.6" opacity=".45"/><path d="M262.59572610309215 504.96438419243464 L279.40427389690785 645.0356158075654" fill="none" stroke="#6E6858" stroke-width="28.92" stroke-linecap="round" stroke-linejoin="round"/><path d="M262.59572610309215 504.96438419243464 L279.40427389690785 645.0356158075654" fill="none" stroke="#E9E5DA" stroke-width="23.92" stroke-linecap="round" stroke-linejoin="round"/><circle cx="262.6" cy="505.0" r="14.9" fill="#E9E5DA" stroke="#6E6858" stroke-width="2.5"/><circle cx="279.4" cy="645.0" r="16.7" fill="#E9E5DA" stroke="#6E6858" stroke-width="2.5"/><path d="M269.1 504.2L285.9 644.3" stroke="#8A8472" stroke-width="8.4" opacity=".45"/><path d="M280.7855752436757 654.9379015316756 L314.2144247563243 865.0620984683244" fill="none" stroke="#6E6858" stroke-width="31.0" stroke-linecap="round" stroke-linejoin="round"/><path d="M280.7855752436757 654.9379015316756 L314.2144247563243 865.0620984683244" fill="none" stroke="#E9E5DA" stroke-width="26.0" stroke-linecap="round" stroke-linejoin="round"/><circle cx="280.8" cy="654.9" r="16.2" fill="#E9E5DA" stroke="#6E6858" stroke-width="2.5"/><circle cx="314.2" cy="865.1" r="18.2" fill="#E9E5DA" stroke="#6E6858" stroke-width="2.5"/><path d="M287.8 653.8L321.3 863.9" stroke="#8A8472" stroke-width="9.1" opacity=".45"/><path d="M350.0555521265178 294.9996913865997 L350.7844478734822 360.60030861340033" fill="none" stroke="#6E6858" stroke-width="24.76" stroke-linecap="round" stroke-linejoin="round"/><path d="M350.0555521265178 294.9996913865997 L350.7844478734822 360.60030861340033" fill="none" stroke="#E9E5DA" stroke-width="19.76" stroke-linecap="round" stroke-linejoin="round"/><circle cx="350.1" cy="295.0" r="12.3" fill="#E9E5DA" stroke="#6E6858" stroke-width="2.5"/><circle cx="350.8" cy="360.6" r="13.8" fill="#E9E5DA" stroke="#6E6858" stroke-width="2.5"/><path d="M355.5 294.9L356.2 360.5" stroke="#8A8472" stroke-width="6.9" opacity=".45"/><path d="M350.89555212651777 370.5996913865997 L351.9444478734822 465.0003086134003" fill="none" stroke="#6E6858" stroke-width="26.840000000000003" stroke-linecap="round" stroke-linejoin="round"/><path d="M350.89555212651777 370.5996913865997 L351.9444478734822 465.0003086134003" fill="none" stroke="#E9E5DA" stroke-width="21.840000000000003" stroke-linecap="round" stroke-linejoin="round"/><circle cx="350.9" cy="370.6" r="13.7" fill="#E9E5DA" stroke="#6E6858" stroke-width="2.5"/><circle cx="351.9" cy="465.0" r="15.3" fill="#E9E5DA" stroke="#6E6858" stroke-width="2.5"/><path d="M356.9 370.5L358.0 464.9" stroke="#8A8472" stroke-width="7.6" opacity=".45"/><path d="M352.0 475.0 L352.0 645.0" fill="none" stroke="#6E6858" stroke-width="28.92" stroke-linecap="round" stroke-linejoin="round"/><path d="M352.0 475.0 L352.0 645.0" fill="none" stroke="#E9E5DA" stroke-width="23.92" stroke-linecap="round" stroke-linejoin="round"/><circle cx="352.0" cy="475.0" r="14.9" fill="#E9E5DA" stroke="#6E6858" stroke-width="2.5"/><circle cx="352.0" cy="645.0" r="16.7" fill="#E9E5DA" stroke="#6E6858" stroke-width="2.5"/><path d="M358.6 475.0L358.6 645.0" stroke="#8A8472" stroke-width="8.4" opacity=".45"/><path d="M351.95454733271606 654.9997934012354 L350.04545266728394 865.0002065987646" fill="none" stroke="#6E6858" stroke-width="31.0" stroke-linecap="round" stroke-linejoin="round"/><path d="M351.95454733271606 654.9997934012354 L350.04545266728394 865.0002065987646" fill="none" stroke="#E9E5DA" stroke-width="26.0" stroke-linecap="round" stroke-linejoin="round"/><circle cx="352.0" cy="655.0" r="16.2" fill="#E9E5DA" stroke="#6E6858" stroke-width="2.5"/><circle cx="350.0" cy="865.0" r="18.2" fill="#E9E5DA" stroke="#6E6858" stroke-width="2.5"/><path d="M359.1 655.1L357.2 865.1" stroke="#8A8472" stroke-width="9.1" opacity=".45"/><path d="M451.7744234676365 339.9949089309062 L449.2855765323635 395.1050910690938" fill="none" stroke="#6E6858" stroke-width="24.76" stroke-linecap="round" stroke-linejoin="round"/><path d="M451.7744234676365 339.9949089309062 L449.2855765323635 395.1050910690938" fill="none" stroke="#E9E5DA" stroke-width="19.76" stroke-linecap="round" stroke-linejoin="round"/><circle cx="451.8" cy="340.0" r="12.3" fill="#E9E5DA" stroke="#6E6858" stroke-width="2.5"/><circle cx="449.3" cy="395.1" r="13.8" fill="#E9E5DA" stroke="#6E6858" stroke-width="2.5"/><path d="M457.2 340.2L454.7 395.4" stroke="#8A8472" stroke-width="6.9" opacity=".45"/><path d="M448.8344234676365 405.09490893090623 L445.2255765323635 485.0050910690938" fill="none" stroke="#6E6858" stroke-width="26.840000000000003" stroke-linecap="round" stroke-linejoin="round"/><path d="M448.8344234676365 405.09490893090623 L445.2255765323635 485.0050910690938" fill="none" stroke="#E9E5DA" stroke-width="21.840000000000003" stroke-linecap="round" stroke-linejoin="round"/><circle cx="448.8" cy="405.1" r="13.7" fill="#E9E5DA" stroke="#6E6858" stroke-width="2.5"/><circle cx="445.2" cy="485.0" r="15.3" fill="#E9E5DA" stroke="#6E6858" stroke-width="2.5"/><path d="M454.8 405.4L451.2 485.3" stroke="#8A8472" stroke-width="7.6" opacity=".45"/><path d="M444.5950843394613 494.98357736047615 L432.4049156605387 645.0164226395239" fill="none" stroke="#6E6858" stroke-width="28.92" stroke-linecap="round" stroke-linejoin="round"/><path d="M444.5950843394613 494.98357736047615 L432.4049156605387 645.0164226395239" fill="none" stroke="#E9E5DA" stroke-width="23.92" stroke-linecap="round" stroke-linejoin="round"/><circle cx="444.6" cy="495.0" r="14.9" fill="#E9E5DA" stroke="#6E6858" stroke-width="2.5"/><circle cx="432.4" cy="645.0" r="16.7" fill="#E9E5DA" stroke="#6E6858" stroke-width="2.5"/><path d="M451.2 495.5L439.0 645.5" stroke="#8A8472" stroke-width="8.4" opacity=".45"/><path d="M431.1055728090001 654.9193495504995 L392.8944271909999 865.0806504495005" fill="none" stroke="#6E6858" stroke-width="31.0" stroke-linecap="round" stroke-linejoin="round"/><path d="M431.1055728090001 654.9193495504995 L392.8944271909999 865.0806504495005" fill="none" stroke="#E9E5DA" stroke-width="26.0" stroke-linecap="round" stroke-linejoin="round"/><circle cx="431.1" cy="654.9" r="16.2" fill="#E9E5DA" stroke="#6E6858" stroke-width="2.5"/><circle cx="392.9" cy="865.1" r="18.2" fill="#E9E5DA" stroke="#6E6858" stroke-width="2.5"/><path d="M438.1 656.2L399.9 866.4" stroke="#8A8472" stroke-width="9.1" opacity=".45"/><path d="M547.1142350084236 544.9209166198684 L530.8857649915764 635.0790833801316" fill="none" stroke="#6E6858" stroke-width="24.76" stroke-linecap="round" stroke-linejoin="round"/><path d="M547.1142350084236 544.9209166198684 L530.8857649915764 635.0790833801316" fill="none" stroke="#E9E5DA" stroke-width="19.76" stroke-linecap="round" stroke-linejoin="round"/><circle cx="547.1" cy="544.9" r="12.3" fill="#E9E5DA" stroke="#6E6858" stroke-width="2.5"/><circle cx="530.9" cy="635.1" r="13.8" fill="#E9E5DA" stroke="#6E6858" stroke-width="2.5"/><path d="M552.5 545.9L536.2 636.0" stroke="#8A8472" stroke-width="6.9" opacity=".45"/><path d="M528.5086250343203 644.7723998901752 L506.4913749656797 715.2276001098248" fill="none" stroke="#6E6858" stroke-width="26.840000000000003" stroke-linecap="round" stroke-linejoin="round"/><path d="M528.5086250343203 644.7723998901752 L506.4913749656797 715.2276001098248" fill="none" stroke="#E9E5DA" stroke-width="21.840000000000003" stroke-linecap="round" stroke-linejoin="round"/><circle cx="528.5" cy="644.8" r="13.7" fill="#E9E5DA" stroke="#6E6858" stroke-width="2.5"/><circle cx="506.5" cy="715.2" r="15.3" fill="#E9E5DA" stroke="#6E6858" stroke-width="2.5"/><path d="M534.2 646.6L512.2 717.0" stroke="#8A8472" stroke-width="7.6" opacity=".45"/><path d="M502.7639320225002 724.4721359549995 L427.2360679774998 875.5278640450005" fill="none" stroke="#6E6858" stroke-width="28.92" stroke-linecap="round" stroke-linejoin="round"/><path d="M502.7639320225002 724.4721359549995 L427.2360679774998 875.5278640450005" fill="none" stroke="#E9E5DA" stroke-width="23.92" stroke-linecap="round" stroke-linejoin="round"/><circle cx="502.8" cy="724.5" r="14.9" fill="#E9E5DA" stroke="#6E6858" stroke-width="2.5"/><circle cx="427.2" cy="875.5" r="16.7" fill="#E9E5DA" stroke="#6E6858" stroke-width="2.5"/><path d="M508.6 727.4L433.1 878.5" stroke="#8A8472" stroke-width="8.4" opacity=".45"/><ellipse cx="279.9" cy="890.5" rx="31.5" ry="25.6" fill="#BDB6A6" stroke="#4A4438" stroke-width="4"/><ellipse cx="321.9" cy="883.0" rx="29.4" ry="24.4" fill="#BDB6A6" stroke="#4A4438" stroke-width="4"/><ellipse cx="366.0" cy="883.0" rx="31.5" ry="25.6" fill="#BDB6A6" stroke="#4A4438" stroke-width="4"/><ellipse cx="410.1" cy="892.2" rx="31.5" ry="25.6" fill="#BDB6A6" stroke="#4A4438" stroke-width="4"/><ellipse cx="292.5" cy="923.6" rx="31.5" ry="23.1" fill="#BDB6A6" stroke="#4A4438" stroke-width="4"/><ellipse cx="332.4" cy="929.4" rx="31.5" ry="21.9" fill="#BDB6A6" stroke="#4A4438" stroke-width="4"/><ellipse cx="374.4" cy="928.2" rx="31.5" ry="23.1" fill="#BDB6A6" stroke="#4A4438" stroke-width="4"/><ellipse cx="410.1" cy="922.4" rx="25.2" ry="19.5" fill="#BDB6A6" stroke="#4A4438" stroke-width="4"/><ellipse cx="345" cy="899.2" rx="78.75" ry="31.900000000000002" fill="#3A342A" opacity="0.385" filter="url(#blur2)"/><path d="M905.0 730.0 C907.4 707.5 962.2 647.5 975.0 640.0 C987.8 632.5 1045.1 640.0 1058.0 640.0 C1070.9 640.0 1118.2 636.7 1130.0 640.0 C1141.8 643.3 1198.0 657.5 1200.0 680.0 C1202.0 702.5 1174.6 890.8 1153.5 910.0 C1132.4 929.2 967.2 925.0 946.5 910.0 C925.8 895.0 902.6 752.5 905.0 730.0Z" fill="#5A5446" opacity=".18" filter="url(#blur2)"/><path d="M851.4108316199578 552.7968275078564 L878.5891683800422 645.2031724921436" fill="none" stroke="#6E6858" stroke-width="24.76" stroke-linecap="round" stroke-linejoin="round"/><path d="M851.4108316199578 552.7968275078564 L878.5891683800422 645.2031724921436" fill="none" stroke="#E9E5DA" stroke-width="19.76" stroke-linecap="round" stroke-linejoin="round"/><circle cx="851.4" cy="552.8" r="12.3" fill="#E9E5DA" stroke="#6E6858" stroke-width="2.5"/><circle cx="878.6" cy="645.2" r="13.8" fill="#E9E5DA" stroke="#6E6858" stroke-width="2.5"/><path d="M856.6 551.3L883.8 643.7" stroke="#8A8472" stroke-width="6.9" opacity=".45"/><path d="M881.4913749656797 654.7723998901752 L903.5086250343203 725.2276001098248" fill="none" stroke="#6E6858" stroke-width="26.840000000000003" stroke-linecap="round" stroke-linejoin="round"/><path d="M881.4913749656797 654.7723998901752 L903.5086250343203 725.2276001098248" fill="none" stroke="#E9E5DA" stroke-width="21.840000000000003" stroke-linecap="round" stroke-linejoin="round"/><circle cx="881.5" cy="654.8" r="13.7" fill="#E9E5DA" stroke="#6E6858" stroke-width="2.5"/><circle cx="903.5" cy="725.2" r="15.3" fill="#E9E5DA" stroke="#6E6858" stroke-width="2.5"/><path d="M887.2 653.0L909.2 723.4" stroke="#8A8472" stroke-width="7.6" opacity=".45"/><path d="M906.9695964928958 734.5957251500903 L963.0304035071042 865.4042748499097" fill="none" stroke="#6E6858" stroke-width="28.92" stroke-linecap="round" stroke-linejoin="round"/><path d="M906.9695964928958 734.5957251500903 L963.0304035071042 865.4042748499097" fill="none" stroke="#E9E5DA" stroke-width="23.92" stroke-linecap="round" stroke-linejoin="round"/><circle cx="907.0" cy="734.6" r="14.9" fill="#E9E5DA" stroke="#6E6858" stroke-width="2.5"/><circle cx="963.0" cy="865.4" r="16.7" fill="#E9E5DA" stroke="#6E6858" stroke-width="2.5"/><path d="M913.0 732.0L969.1 862.8" stroke="#8A8472" stroke-width="8.4" opacity=".45"/><path d="M962.1998401917443 334.99600479360896 L964.3201598082557 388.00399520639104" fill="none" stroke="#6E6858" stroke-width="24.76" stroke-linecap="round" stroke-linejoin="round"/><path d="M962.1998401917443 334.99600479360896 L964.3201598082557 388.00399520639104" fill="none" stroke="#E9E5DA" stroke-width="19.76" stroke-linecap="round" stroke-linejoin="round"/><circle cx="962.2" cy="335.0" r="12.3" fill="#E9E5DA" stroke="#6E6858" stroke-width="2.5"/><circle cx="964.3" cy="388.0" r="13.8" fill="#E9E5DA" stroke="#6E6858" stroke-width="2.5"/><path d="M967.6 334.8L969.7 387.8" stroke="#8A8472" stroke-width="6.9" opacity=".45"/><path d="M964.7198401917443 397.99600479360896 L967.8001598082557 475.00399520639104" fill="none" stroke="#6E6858" stroke-width="26.840000000000003" stroke-linecap="round" stroke-linejoin="round"/><path d="M964.7198401917443 397.99600479360896 L967.8001598082557 475.00399520639104" fill="none" stroke="#E9E5DA" stroke-width="21.840000000000003" stroke-linecap="round" stroke-linejoin="round"/><circle cx="964.7" cy="398.0" r="13.7" fill="#E9E5DA" stroke="#6E6858" stroke-width="2.5"/><circle cx="967.8" cy="475.0" r="15.3" fill="#E9E5DA" stroke="#6E6858" stroke-width="2.5"/><path d="M970.7 397.8L973.8 474.8" stroke="#8A8472" stroke-width="7.6" opacity=".45"/><path d="M968.2185409494681 484.9952217021275 L974.7814590505319 635.0047782978725" fill="none" stroke="#6E6858" stroke-width="28.92" stroke-linecap="round" stroke-linejoin="round"/><path d="M968.2185409494681 484.9952217021275 L974.7814590505319 635.0047782978725" fill="none" stroke="#E9E5DA" stroke-width="23.92" stroke-linecap="round" stroke-linejoin="round"/><circle cx="968.2" cy="485.0" r="14.9" fill="#E9E5DA" stroke="#6E6858" stroke-width="2.5"/><circle cx="974.8" cy="635.0" r="16.7" fill="#E9E5DA" stroke="#6E6858" stroke-width="2.5"/><path d="M974.8 484.7L981.4 634.7" stroke="#8A8472" stroke-width="8.4" opacity=".45"/><path d="M975.7941377094554 644.9365317074258 L1011.2058622905446 865.0634682925742" fill="none" stroke="#6E6858" stroke-width="31.0" stroke-linecap="round" stroke-linejoin="round"/><path d="M975.7941377094554 644.9365317074258 L1011.2058622905446 865.0634682925742" fill="none" stroke="#E9E5DA" stroke-width="26.0" stroke-linecap="round" stroke-linejoin="round"/><circle cx="975.8" cy="644.9" r="16.2" fill="#E9E5DA" stroke="#6E6858" stroke-width="2.5"/><circle cx="1011.2" cy="865.1" r="18.2" fill="#E9E5DA" stroke="#6E6858" stroke-width="2.5"/><path d="M982.9 643.8L1018.3 863.9" stroke="#8A8472" stroke-width="9.1" opacity=".45"/><path d="M1060.0 283.0 L1060.0 345.24" fill="none" stroke="#6E6858" stroke-width="24.76" stroke-linecap="round" stroke-linejoin="round"/><path d="M1060.0 283.0 L1060.0 345.24" fill="none" stroke="#E9E5DA" stroke-width="19.76" stroke-linecap="round" stroke-linejoin="round"/><circle cx="1060.0" cy="283.0" r="12.3" fill="#E9E5DA" stroke="#6E6858" stroke-width="2.5"/><circle cx="1060.0" cy="345.2" r="13.8" fill="#E9E5DA" stroke="#6E6858" stroke-width="2.5"/><path d="M1065.4 283.0L1065.4 345.2" stroke="#8A8472" stroke-width="6.9" opacity=".45"/><path d="M1060.0 355.24 L1060.0 445.0" fill="none" stroke="#6E6858" stroke-width="26.840000000000003" stroke-linecap="round" stroke-linejoin="round"/><path d="M1060.0 355.24 L1060.0 445.0" fill="none" stroke="#E9E5DA" stroke-width="21.840000000000003" stroke-linecap="round" stroke-linejoin="round"/><circle cx="1060.0" cy="355.2" r="13.7" fill="#E9E5DA" stroke="#6E6858" stroke-width="2.5"/><circle cx="1060.0" cy="445.0" r="15.3" fill="#E9E5DA" stroke="#6E6858" stroke-width="2.5"/><path d="M1066.0 355.2L1066.0 445.0" stroke="#8A8472" stroke-width="7.6" opacity=".45"/><path d="M1059.9473713366872 454.9997230147077 L1058.0526286633128 635.0002769852923" fill="none" stroke="#6E6858" stroke-width="28.92" stroke-linecap="round" stroke-linejoin="round"/><path d="M1059.9473713366872 454.9997230147077 L1058.0526286633128 635.0002769852923" fill="none" stroke="#E9E5DA" stroke-width="23.92" stroke-linecap="round" stroke-linejoin="round"/><circle cx="1059.9" cy="455.0" r="14.9" fill="#E9E5DA" stroke="#6E6858" stroke-width="2.5"/><circle cx="1058.1" cy="635.0" r="16.7" fill="#E9E5DA" stroke="#6E6858" stroke-width="2.5"/><path d="M1066.5 455.1L1064.6 635.1" stroke="#8A8472" stroke-width="8.4" opacity=".45"/><path d="M1057.934788155781 644.9995747234514 L1055.065211844219 865.0004252765486" fill="none" stroke="#6E6858" stroke-width="31.0" stroke-linecap="round" stroke-linejoin="round"/><path d="M1057.934788155781 644.9995747234514 L1055.065211844219 865.0004252765486" fill="none" stroke="#E9E5DA" stroke-width="26.0" stroke-linecap="round" stroke-linejoin="round"/><circle cx="1057.9" cy="645.0" r="16.2" fill="#E9E5DA" stroke="#6E6858" stroke-width="2.5"/><circle cx="1055.1" cy="865.0" r="18.2" fill="#E9E5DA" stroke="#6E6858" stroke-width="2.5"/><path d="M1065.1 645.1L1062.2 865.1" stroke="#8A8472" stroke-width="9.1" opacity=".45"/><path d="M1149.8530047419906 304.99783877232176 L1148.0469952580095 366.4021612276782" fill="none" stroke="#6E6858" stroke-width="24.76" stroke-linecap="round" stroke-linejoin="round"/><path d="M1149.8530047419906 304.99783877232176 L1148.0469952580095 366.4021612276782" fill="none" stroke="#E9E5DA" stroke-width="19.76" stroke-linecap="round" stroke-linejoin="round"/><circle cx="1149.9" cy="305.0" r="12.3" fill="#E9E5DA" stroke="#6E6858" stroke-width="2.5"/><circle cx="1148.0" cy="366.4" r="13.8" fill="#E9E5DA" stroke="#6E6858" stroke-width="2.5"/><path d="M1155.3 305.2L1153.5 366.6" stroke="#8A8472" stroke-width="6.9" opacity=".45"/><path d="M1147.7530047419907 376.39783877232173 L1145.1469952580094 465.00216122767824" fill="none" stroke="#6E6858" stroke-width="26.840000000000003" stroke-linecap="round" stroke-linejoin="round"/><path d="M1147.7530047419907 376.39783877232173 L1145.1469952580094 465.00216122767824" fill="none" stroke="#E9E5DA" stroke-width="21.840000000000003" stroke-linecap="round" stroke-linejoin="round"/><circle cx="1147.8" cy="376.4" r="13.7" fill="#E9E5DA" stroke="#6E6858" stroke-width="2.5"/><circle cx="1145.1" cy="465.0" r="15.3" fill="#E9E5DA" stroke="#6E6858" stroke-width="2.5"/><path d="M1153.8 376.6L1151.2 465.2" stroke="#8A8472" stroke-width="7.6" opacity=".45"/><path d="M1144.5605309485181 474.98064925012693 L1130.4394690514819 635.0193507498731" fill="none" stroke="#6E6858" stroke-width="28.92" stroke-linecap="round" stroke-linejoin="round"/><path d="M1144.5605309485181 474.98064925012693 L1130.4394690514819 635.0193507498731" fill="none" stroke="#E9E5DA" stroke-width="23.92" stroke-linecap="round" stroke-linejoin="round"/><circle cx="1144.6" cy="475.0" r="14.9" fill="#E9E5DA" stroke="#6E6858" stroke-width="2.5"/><circle cx="1130.4" cy="635.0" r="16.7" fill="#E9E5DA" stroke="#6E6858" stroke-width="2.5"/><path d="M1151.1 475.6L1137.0 635.6" stroke="#8A8472" stroke-width="8.4" opacity=".45"/><path d="M1129.3109845939277 644.9522982311444 L1098.6890154060723 865.0477017688556" fill="none" stroke="#6E6858" stroke-width="31.0" stroke-linecap="round" stroke-linejoin="round"/><path d="M1129.3109845939277 644.9522982311444 L1098.6890154060723 865.0477017688556" fill="none" stroke="#E9E5DA" stroke-width="26.0" stroke-linecap="round" stroke-linejoin="round"/><circle cx="1129.3" cy="645.0" r="16.2" fill="#E9E5DA" stroke="#6E6858" stroke-width="2.5"/><circle cx="1098.7" cy="865.0" r="18.2" fill="#E9E5DA" stroke="#6E6858" stroke-width="2.5"/><path d="M1136.4 645.9L1105.8 866.0" stroke="#8A8472" stroke-width="9.1" opacity=".45"/><path d="M1237.502481404895 414.9751859510499 L1225.497518595105 535.02481404895" fill="none" stroke="#6E6858" stroke-width="24.76" stroke-linecap="round" stroke-linejoin="round"/><path d="M1237.502481404895 414.9751859510499 L1225.497518595105 535.02481404895" fill="none" stroke="#E9E5DA" stroke-width="19.76" stroke-linecap="round" stroke-linejoin="round"/><circle cx="1237.5" cy="415.0" r="12.3" fill="#E9E5DA" stroke="#6E6858" stroke-width="2.5"/><circle cx="1225.5" cy="535.0" r="13.8" fill="#E9E5DA" stroke="#6E6858" stroke-width="2.5"/><path d="M1242.9 415.5L1230.9 535.6" stroke="#8A8472" stroke-width="6.9" opacity=".45"/><path d="M1224.1210468075817 544.9221378775424 L1200.8789531924183 675.0778621224576" fill="none" stroke="#6E6858" stroke-width="26.840000000000003" stroke-linecap="round" stroke-linejoin="round"/><path d="M1224.1210468075817 544.9221378775424 L1200.8789531924183 675.0778621224576" fill="none" stroke="#E9E5DA" stroke-width="21.840000000000003" stroke-linecap="round" stroke-linejoin="round"/><circle cx="1224.1" cy="544.9" r="13.7" fill="#E9E5DA" stroke="#6E6858" stroke-width="2.5"/><circle cx="1200.9" cy="675.1" r="15.3" fill="#E9E5DA" stroke="#6E6858" stroke-width="2.5"/><path d="M1230.0 546.0L1206.8 676.1" stroke="#8A8472" stroke-width="7.6" opacity=".45"/><path d="M1198.4943431603144 684.7679133256707 L1141.5056568396856 865.2320866743293" fill="none" stroke="#6E6858" stroke-width="28.92" stroke-linecap="round" stroke-linejoin="round"/><path d="M1198.4943431603144 684.7679133256707 L1141.5056568396856 865.2320866743293" fill="none" stroke="#E9E5DA" stroke-width="23.92" stroke-linecap="round" stroke-linejoin="round"/><circle cx="1198.5" cy="684.8" r="14.9" fill="#E9E5DA" stroke="#6E6858" stroke-width="2.5"/><circle cx="1141.5" cy="865.2" r="16.7" fill="#E9E5DA" stroke="#6E6858" stroke-width="2.5"/><path d="M1204.8 686.7L1147.8 867.2" stroke="#8A8472" stroke-width="8.4" opacity=".45"/><ellipse cx="978.7" cy="894.5" rx="34.5" ry="27.3" fill="#BDB6A6" stroke="#4A4438" stroke-width="4"/><ellipse cx="1024.7" cy="886.4" rx="32.2" ry="26.0" fill="#BDB6A6" stroke="#4A4438" stroke-width="4"/><ellipse cx="1073.0" cy="886.4" rx="34.5" ry="27.3" fill="#BDB6A6" stroke="#4A4438" stroke-width="4"/><ellipse cx="1121.3" cy="896.4" rx="34.5" ry="27.3" fill="#BDB6A6" stroke="#4A4438" stroke-width="4"/><ellipse cx="992.5" cy="929.8" rx="34.5" ry="24.7" fill="#BDB6A6" stroke="#4A4438" stroke-width="4"/><ellipse cx="1036.2" cy="936.0" rx="34.5" ry="23.4" fill="#BDB6A6" stroke="#4A4438" stroke-width="4"/><ellipse cx="1082.2" cy="934.8" rx="34.5" ry="24.7" fill="#BDB6A6" stroke="#4A4438" stroke-width="4"/><ellipse cx="1121.3" cy="928.6" rx="27.6" ry="20.8" fill="#BDB6A6" stroke="#4A4438" stroke-width="4"/><ellipse cx="1050" cy="903.8" rx="86.25" ry="34.1" fill="#3A342A" opacity="0.385" filter="url(#blur2)"/><path d="M475 330H625" stroke="#9a968a" stroke-width="7" stroke-dasharray="14 4 22 5 9 4" opacity=".75"/><path d="M485 358H570" stroke="#9a968a" stroke-width="7" stroke-dasharray="14 4 22 5 9 4" opacity=".75"/><path d="M488 383H570" stroke="#9a968a" stroke-width="7" stroke-dasharray="14 4 22 5 9 4" opacity=".75"/><path d="M70 465H150" stroke="#9a968a" stroke-width="7" stroke-dasharray="14 4 22 5 9 4" opacity=".75"/><path d="M485 497H585" stroke="#9a968a" stroke-width="7" stroke-dasharray="14 4 22 5 9 4" opacity=".75"/><path d="M80 533H165" stroke="#9a968a" stroke-width="7" stroke-dasharray="14 4 22 5 9 4" opacity=".75"/><path d="M65 632H165" stroke="#9a968a" stroke-width="7" stroke-dasharray="14 4 22 5 9 4" opacity=".75"/><path d="M560 674H635" stroke="#9a968a" stroke-width="7" stroke-dasharray="14 4 22 5 9 4" opacity=".75"/><path d="M560 732H590" stroke="#9a968a" stroke-width="7" stroke-dasharray="14 4 22 5 9 4" opacity=".75"/><path d="M100 760H210" stroke="#9a968a" stroke-width="7" stroke-dasharray="14 4 22 5 9 4" opacity=".75"/><path d="M120 775H165" stroke="#9a968a" stroke-width="7" stroke-dasharray="14 4 22 5 9 4" opacity=".75"/><path d="M525 782H620" stroke="#9a968a" stroke-width="7" stroke-dasharray="14 4 22 5 9 4" opacity=".75"/><path d="M520 812H550" stroke="#9a968a" stroke-width="7" stroke-dasharray="14 4 22 5 9 4" opacity=".75"/><path d="M105 860H225" stroke="#9a968a" stroke-width="7" stroke-dasharray="14 4 22 5 9 4" opacity=".75"/><path d="M500 858H520" stroke="#9a968a" stroke-width="7" stroke-dasharray="14 4 22 5 9 4" opacity=".75"/><path d="M165 885H235" stroke="#9a968a" stroke-width="7" stroke-dasharray="14 4 22 5 9 4" opacity=".75"/><path d="M490 880H575" stroke="#9a968a" stroke-width="7" stroke-dasharray="14 4 22 5 9 4" opacity=".75"/><path d="M165 910H235" stroke="#9a968a" stroke-width="7" stroke-dasharray="14 4 22 5 9 4" opacity=".75"/><path d="M470 925H535" stroke="#9a968a" stroke-width="7" stroke-dasharray="14 4 22 5 9 4" opacity=".75"/><path d="M205 968H272" stroke="#9a968a" stroke-width="7" stroke-dasharray="14 4 22 5 9 4" opacity=".75"/><path d="M262 1002H315" stroke="#9a968a" stroke-width="7" stroke-dasharray="14 4 22 5 9 4" opacity=".75"/><path d="M302 1025H352" stroke="#9a968a" stroke-width="7" stroke-dasharray="14 4 22 5 9 4" opacity=".75"/><path d="M382 1020H462" stroke="#9a968a" stroke-width="7" stroke-dasharray="14 4 22 5 9 4" opacity=".75"/><path d="M1262 430H1358" stroke="#9a968a" stroke-width="7" stroke-dasharray="14 4 22 5 9 4" opacity=".75"/><path d="M1265 500H1342" stroke="#9a968a" stroke-width="7" stroke-dasharray="14 4 22 5 9 4" opacity=".75"/><path d="M1255 605H1352" stroke="#9a968a" stroke-width="7" stroke-dasharray="14 4 22 5 9 4" opacity=".75"/><path d="M1230 722H1335" stroke="#9a968a" stroke-width="7" stroke-dasharray="14 4 22 5 9 4" opacity=".75"/><path d="M1245 740H1290" stroke="#9a968a" stroke-width="7" stroke-dasharray="14 4 22 5 9 4" opacity=".75"/><path d="M1225 782H1312" stroke="#9a968a" stroke-width="7" stroke-dasharray="14 4 22 5 9 4" opacity=".75"/><path d="M790 790H870" stroke="#9a968a" stroke-width="7" stroke-dasharray="14 4 22 5 9 4" opacity=".75"/><path d="M805 858H905" stroke="#9a968a" stroke-width="7" stroke-dasharray="14 4 22 5 9 4" opacity=".75"/><path d="M1195 876H1255" stroke="#9a968a" stroke-width="7" stroke-dasharray="14 4 22 5 9 4" opacity=".75"/><path d="M845 898H910" stroke="#9a968a" stroke-width="7" stroke-dasharray="14 4 22 5 9 4" opacity=".75"/><path d="M1190 900H1250" stroke="#9a968a" stroke-width="7" stroke-dasharray="14 4 22 5 9 4" opacity=".75"/><path d="M838 932H920" stroke="#9a968a" stroke-width="7" stroke-dasharray="14 4 22 5 9 4" opacity=".75"/><path d="M1190 935H1255" stroke="#9a968a" stroke-width="7" stroke-dasharray="14 4 22 5 9 4" opacity=".75"/><path d="M968 990H1048" stroke="#9a968a" stroke-width="7" stroke-dasharray="14 4 22 5 9 4" opacity=".75"/><path d="M1055 1010H1108" stroke="#9a968a" stroke-width="7" stroke-dasharray="14 4 22 5 9 4" opacity=".75"/><path d="M1128 1025H1192" stroke="#9a968a" stroke-width="7" stroke-dasharray="14 4 22 5 9 4" opacity=".75"/></g></svg></div>
<div class="n" style="left:776.5px;top:805.5px">46</div>
<div class="th" style="left:1020px;top:648px"><svg width="198" height="149" viewBox="0 0 198 149"><g transform="translate(-1 -1) scale(0.13986)" filter="url(#blur0)"><text x="705" y="112" font-size="60" textLength="533" lengthAdjust="spacingAndGlyphs" fill="#111" font-family="Liberation Sans" stroke="#111" stroke-width="1.2">Steps in Drawing</text><text x="765" y="212" font-size="60" textLength="415" lengthAdjust="spacingAndGlyphs" fill="#111" font-family="Liberation Sans" stroke="#111" stroke-width="1.2">Carpal Bones</text><path d="M655 273L1320 273" stroke="#111" stroke-width="6" fill="none" /></g><g transform="translate(-1 -1) scale(0.13986)" filter="url(#blur1)"><rect x="8" y="8" width="464" height="1064" fill="#F1F1F1" /><rect x="522" y="310" width="793" height="745" fill="#F0F0F0" /><path d="M52 48H405C405 180 330 262 228 262S52 180 52 48Z" fill="none" stroke="#3a3a3a" stroke-width="6"/><path d="M70 130C110 230 180 272 228 275S350 240 392 130" fill="none" stroke="#3a3a3a" stroke-width="4"/><path d="M182 48V150A40 40 0 0 0 268 150V48" fill="none" stroke="#3a3a3a" stroke-width="4"/><path d="M198 122H245" stroke="#777" stroke-width="8" stroke-dasharray="14 4 22 5 9 4" opacity=".75"/><path d="M55 370H405C405 500 330 582 230 582S55 500 55 370Z" fill="none" stroke="#3a3a3a" stroke-width="6"/><path d="M60 430C110 540 180 590 230 594S350 560 395 440" fill="none" stroke="#3a3a3a" stroke-width="4"/><path d="M185 370V460A40 40 0 0 0 270 460V370 M62 435L185 490 M270 440H400 M162 480L135 548 M245 500V560" fill="none" stroke="#3a3a3a" stroke-width="4"/><circle cx="115" cy="490" r="20" fill="none" stroke="#3a3a3a" stroke-width="4"/><path d="M70 670C60 620 80 590 110 600S130 650 125 675 M150 600C160 640 175 660 180 675 M380 520C400 580 360 640 335 675" fill="none" stroke="#777" stroke-width="3"/><path d="M85 615H125" stroke="#777" stroke-width="7" stroke-dasharray="14 4 22 5 9 4" opacity=".75"/><path d="M200 612H300" stroke="#666" stroke-width="8" stroke-dasharray="14 4 22 5 9 4" opacity=".75"/><path d="M290 502H320" stroke="#777" stroke-width="7" stroke-dasharray="14 4 22 5 9 4" opacity=".75"/><path d="M45 855L95 830 150 850C160 820 220 815 235 840L260 825 290 850 320 820 375 870C350 960 280 1030 215 1035S70 980 45 855Z" fill="none" stroke="#3a3a3a" stroke-width="6"/><path d="M55 900C90 990 160 1040 215 1048S340 1000 372 890" fill="none" stroke="#3a3a3a" stroke-width="4"/><path d="M150 850V925A40 40 0 0 0 235 925V840 M50 880L150 925 M215 960V1035 M140 945L105 1000 M290 850L340 900" fill="none" stroke="#3a3a3a" stroke-width="4"/><circle cx="92" cy="940" r="20" fill="none" stroke="#3a3a3a" stroke-width="4"/><path d="M235 800C230 760 260 740 285 750S300 790 318 800 M330 800C340 770 380 750 400 760S400 820 380 850 M410 830L440 785" fill="none" stroke="#777" stroke-width="3"/><path d="M25 240H35" stroke="#777" stroke-width="8" stroke-dasharray="14 4 22 5 9 4" opacity=".75"/><path d="M22 715H38" stroke="#777" stroke-width="8" stroke-dasharray="14 4 22 5 9 4" opacity=".75"/><path d="M30 1025H48" stroke="#777" stroke-width="8" stroke-dasharray="14 4 22 5 9 4" opacity=".75"/><path d="M615 440H1190V750H615Z M615 595H1190 M762 440V750 M915 440V750 M1055 440V750 M615 440L740 400H1255L1190 440 M1255 400V720L1190 750 M1190 595L1255 560 M762 440L830 405 M915 440L985 405 M1055 440L1120 405" fill="none" stroke="#3a3a3a" stroke-width="6"/><path d="M605 1000V790L660 755 M605 790H880V1000 M880 790L930 755 M920 1000V790L975 755 M920 790H1192V1010 M1192 790L1250 750V960" fill="none" stroke="#3a3a3a" stroke-width="6"/><text x="658" y="552" font-size="88" textLength="77" lengthAdjust="spacingAndGlyphs" fill="#555" font-family="Liberation Sans" >H.</text><text x="800" y="552" font-size="88" textLength="80" lengthAdjust="spacingAndGlyphs" fill="#555" font-family="Liberation Sans" >C.</text><text x="945" y="552" font-size="88" textLength="90" lengthAdjust="spacingAndGlyphs" fill="#555" font-family="Liberation Sans" >Td.</text><text x="1085" y="552" font-size="88" textLength="95" lengthAdjust="spacingAndGlyphs" fill="#555" font-family="Liberation Sans" >Tm.</text><text x="650" y="700" font-size="88" textLength="68" lengthAdjust="spacingAndGlyphs" fill="#555" font-family="Liberation Sans" >P.</text><text x="790" y="700" font-size="88" textLength="102" lengthAdjust="spacingAndGlyphs" fill="#555" font-family="Liberation Sans" >Tq.</text><text x="945" y="700" font-size="88" textLength="80" lengthAdjust="spacingAndGlyphs" fill="#555" font-family="Liberation Sans" >L.</text><text x="1085" y="700" font-size="88" textLength="80" lengthAdjust="spacingAndGlyphs" fill="#555" font-family="Liberation Sans" >S.</text><text x="650" y="875" font-size="64" textLength="192" lengthAdjust="spacingAndGlyphs" fill="#555" font-family="Liberation Sans" >ULNA</text><text x="950" y="882" font-size="64" textLength="218" lengthAdjust="spacingAndGlyphs" fill="#555" font-family="Liberation Sans" >RADIUS</text></g></svg></div>
<div class="n" style="left:1020.5px;top:805.5px">47</div>
<div class="th" style="left:1264px;top:648px"><svg width="198" height="149" viewBox="0 0 198 149"><g transform="translate(-1 -1) scale(0.13986)" filter="url(#blur0)"><text x="540" y="162" font-size="72" textLength="352" lengthAdjust="spacingAndGlyphs" fill="#111" font-family="Liberation Sans" stroke="#111" stroke-width="1.2">Phalanges</text><path d="M75 217L1340 217" stroke="#111" stroke-width="6" fill="none" /><path d="M1318 1028h18" stroke="#8a8aa8" stroke-width="6" opacity=".7"/></g><g transform="translate(-1 -1) scale(0.13986)" filter="url(#blur1)"><rect x="415" y="240" width="620" height="815" fill="#EEEEEA" /><path d="M593.0 683.0 C595.5 660.5 637.4 645.6 648.0 642.2 C658.6 638.8 707.3 642.2 720.0 642.2 C732.7 642.2 787.2 636.2 800.0 642.2 C812.8 648.2 872.0 691.1 873.0 713.6 C874.0 736.1 833.5 895.5 812.2 912.0 C790.9 928.5 636.1 931.1 617.8 912.0 C599.5 892.9 590.5 705.5 593.0 683.0Z" fill="#5A5446" opacity=".18" filter="url(#blur2)"/><path d="M551.5910644489255 432.9649413709747 L567.4089355510745 565.8350586290252" fill="none" stroke="#6E6858" stroke-width="24.76" stroke-linecap="round" stroke-linejoin="round"/><path d="M551.5910644489255 432.9649413709747 L567.4089355510745 565.8350586290252" fill="none" stroke="#E9E5DA" stroke-width="19.76" stroke-linecap="round" stroke-linejoin="round"/><circle cx="551.6" cy="433.0" r="12.3" fill="#E9E5DA" stroke="#6E6858" stroke-width="2.5"/><circle cx="567.4" cy="565.8" r="13.8" fill="#E9E5DA" stroke="#6E6858" stroke-width="2.5"/><path d="M557.0 432.3L572.8 565.2" stroke="#8A8472" stroke-width="6.9" opacity=".45"/><path d="M569.087415429771 575.6803204488123 L591.912584570229 678.1196795511877" fill="none" stroke="#6E6858" stroke-width="26.840000000000003" stroke-linecap="round" stroke-linejoin="round"/><path d="M569.087415429771 575.6803204488123 L591.912584570229 678.1196795511877" fill="none" stroke="#E9E5DA" stroke-width="21.840000000000003" stroke-linecap="round" stroke-linejoin="round"/><circle cx="569.1" cy="575.7" r="13.7" fill="#E9E5DA" stroke="#6E6858" stroke-width="2.5"/><circle cx="591.9" cy="678.1" r="15.3" fill="#E9E5DA" stroke="#6E6858" stroke-width="2.5"/><path d="M574.9 574.4L597.8 676.8" stroke="#8A8472" stroke-width="7.6" opacity=".45"/><path d="M594.3138082452853 687.8243038766874 L641.6861917547147 861.7756961233126" fill="none" stroke="#6E6858" stroke-width="28.92" stroke-linecap="round" stroke-linejoin="round"/><path d="M594.3138082452853 687.8243038766874 L641.6861917547147 861.7756961233126" fill="none" stroke="#E9E5DA" stroke-width="23.92" stroke-linecap="round" stroke-linejoin="round"/><circle cx="594.3" cy="687.8" r="14.9" fill="#E9E5DA" stroke="#6E6858" stroke-width="2.5"/><circle cx="641.7" cy="861.8" r="16.7" fill="#E9E5DA" stroke="#6E6858" stroke-width="2.5"/><path d="M600.7 686.1L648.0 860.0" stroke="#8A8472" stroke-width="8.4" opacity=".45"/><path d="M621.266998187569 325.8928661075413 L624.513001812431 386.5931338924587" fill="none" stroke="#6E6858" stroke-width="24.76" stroke-linecap="round" stroke-linejoin="round"/><path d="M621.266998187569 325.8928661075413 L624.513001812431 386.5931338924587" fill="none" stroke="#E9E5DA" stroke-width="19.76" stroke-linecap="round" stroke-linejoin="round"/><circle cx="621.3" cy="325.9" r="12.3" fill="#E9E5DA" stroke="#6E6858" stroke-width="2.5"/><circle cx="624.5" cy="386.6" r="13.8" fill="#E9E5DA" stroke="#6E6858" stroke-width="2.5"/><path d="M626.7 325.6L629.9 386.3" stroke="#8A8472" stroke-width="6.9" opacity=".45"/><path d="M625.046998187569 396.57886610754133 L629.733001812431 484.20713389245867" fill="none" stroke="#6E6858" stroke-width="26.840000000000003" stroke-linecap="round" stroke-linejoin="round"/><path d="M625.046998187569 396.57886610754133 L629.733001812431 484.20713389245867" fill="none" stroke="#E9E5DA" stroke-width="21.840000000000003" stroke-linecap="round" stroke-linejoin="round"/><circle cx="625.0" cy="396.6" r="13.7" fill="#E9E5DA" stroke="#6E6858" stroke-width="2.5"/><circle cx="629.7" cy="484.2" r="15.3" fill="#E9E5DA" stroke="#6E6858" stroke-width="2.5"/><path d="M631.0 396.3L635.7 483.9" stroke="#8A8472" stroke-width="7.6" opacity=".45"/><path d="M630.584206237837 494.16575302161436 L647.415793762163 637.2342469783856" fill="none" stroke="#6E6858" stroke-width="28.92" stroke-linecap="round" stroke-linejoin="round"/><path d="M630.584206237837 494.16575302161436 L647.415793762163 637.2342469783856" fill="none" stroke="#E9E5DA" stroke-width="23.92" stroke-linecap="round" stroke-linejoin="round"/><circle cx="630.6" cy="494.2" r="14.9" fill="#E9E5DA" stroke="#6E6858" stroke-width="2.5"/><circle cx="647.4" cy="637.2" r="16.7" fill="#E9E5DA" stroke="#6E6858" stroke-width="2.5"/><path d="M637.1 493.4L653.9 636.5" stroke="#8A8472" stroke-width="8.4" opacity=".45"/><path d="M648.7705411987465 647.1402698571064 L682.2294588012535 861.6597301428936" fill="none" stroke="#6E6858" stroke-width="31.0" stroke-linecap="round" stroke-linejoin="round"/><path d="M648.7705411987465 647.1402698571064 L682.2294588012535 861.6597301428936" fill="none" stroke="#E9E5DA" stroke-width="26.0" stroke-linecap="round" stroke-linejoin="round"/><circle cx="648.8" cy="647.1" r="16.2" fill="#E9E5DA" stroke="#6E6858" stroke-width="2.5"/><circle cx="682.2" cy="861.7" r="18.2" fill="#E9E5DA" stroke="#6E6858" stroke-width="2.5"/><path d="M655.8 646.0L689.3 860.6" stroke="#8A8472" stroke-width="9.1" opacity=".45"/><path d="M718.0544629996663 279.99970336936775 L718.7855370003338 347.1122966306323" fill="none" stroke="#6E6858" stroke-width="24.76" stroke-linecap="round" stroke-linejoin="round"/><path d="M718.0544629996663 279.99970336936775 L718.7855370003338 347.1122966306323" fill="none" stroke="#E9E5DA" stroke-width="19.76" stroke-linecap="round" stroke-linejoin="round"/><circle cx="718.1" cy="280.0" r="12.3" fill="#E9E5DA" stroke="#6E6858" stroke-width="2.5"/><circle cx="718.8" cy="347.1" r="13.8" fill="#E9E5DA" stroke="#6E6858" stroke-width="2.5"/><path d="M723.5 279.9L724.2 347.1" stroke="#8A8472" stroke-width="6.9" opacity=".45"/><path d="M718.8944629996663 357.1117033693678 L719.9455370003337 453.6002966306323" fill="none" stroke="#6E6858" stroke-width="26.840000000000003" stroke-linecap="round" stroke-linejoin="round"/><path d="M718.8944629996663 357.1117033693678 L719.9455370003337 453.6002966306323" fill="none" stroke="#E9E5DA" stroke-width="21.840000000000003" stroke-linecap="round" stroke-linejoin="round"/><circle cx="718.9" cy="357.1" r="13.7" fill="#E9E5DA" stroke="#6E6858" stroke-width="2.5"/><circle cx="719.9" cy="453.6" r="15.3" fill="#E9E5DA" stroke="#6E6858" stroke-width="2.5"/><path d="M724.9 357.0L726.0 453.5" stroke="#8A8472" stroke-width="7.6" opacity=".45"/><path d="M720.0 463.6 L720.0 637.2" fill="none" stroke="#6E6858" stroke-width="28.92" stroke-linecap="round" stroke-linejoin="round"/><path d="M720.0 463.6 L720.0 637.2" fill="none" stroke="#E9E5DA" stroke-width="23.92" stroke-linecap="round" stroke-linejoin="round"/><circle cx="720.0" cy="463.6" r="14.9" fill="#E9E5DA" stroke="#6E6858" stroke-width="2.5"/><circle cx="720.0" cy="637.2" r="16.7" fill="#E9E5DA" stroke="#6E6858" stroke-width="2.5"/><path d="M726.6 463.6L726.6 637.2" stroke="#8A8472" stroke-width="8.4" opacity=".45"/><path d="M719.955438489989 647.1998014232394 L718.044561510011 861.6001985767607" fill="none" stroke="#6E6858" stroke-width="31.0" stroke-linecap="round" stroke-linejoin="round"/><path d="M719.955438489989 647.1998014232394 L718.044561510011 861.6001985767607" fill="none" stroke="#E9E5DA" stroke-width="26.0" stroke-linecap="round" stroke-linejoin="round"/><circle cx="720.0" cy="647.2" r="16.2" fill="#E9E5DA" stroke="#6E6858" stroke-width="2.5"/><circle cx="718.0" cy="861.6" r="18.2" fill="#E9E5DA" stroke="#6E6858" stroke-width="2.5"/><path d="M727.1 647.3L725.2 861.7" stroke="#8A8472" stroke-width="9.1" opacity=".45"/><path d="M819.7788377967595 325.89510633318827 L817.2811622032405 382.3068936668117" fill="none" stroke="#6E6858" stroke-width="24.76" stroke-linecap="round" stroke-linejoin="round"/><path d="M819.7788377967595 325.89510633318827 L817.2811622032405 382.3068936668117" fill="none" stroke="#E9E5DA" stroke-width="19.76" stroke-linecap="round" stroke-linejoin="round"/><circle cx="819.8" cy="325.9" r="12.3" fill="#E9E5DA" stroke="#6E6858" stroke-width="2.5"/><circle cx="817.3" cy="382.3" r="13.8" fill="#E9E5DA" stroke="#6E6858" stroke-width="2.5"/><path d="M825.2 326.1L822.7 382.5" stroke="#8A8472" stroke-width="6.9" opacity=".45"/><path d="M816.8388377967594 392.29710633318825 L813.2211622032405 474.0048936668117" fill="none" stroke="#6E6858" stroke-width="26.840000000000003" stroke-linecap="round" stroke-linejoin="round"/><path d="M816.8388377967594 392.29710633318825 L813.2211622032405 474.0048936668117" fill="none" stroke="#E9E5DA" stroke-width="21.840000000000003" stroke-linecap="round" stroke-linejoin="round"/><circle cx="816.8" cy="392.3" r="13.7" fill="#E9E5DA" stroke="#6E6858" stroke-width="2.5"/><circle cx="813.2" cy="474.0" r="15.3" fill="#E9E5DA" stroke="#6E6858" stroke-width="2.5"/><path d="M822.8 392.6L819.2 474.3" stroke="#8A8472" stroke-width="7.6" opacity=".45"/><path d="M812.6029733044916 483.9842120543827 L800.3970266955084 637.2157879456173" fill="none" stroke="#6E6858" stroke-width="28.92" stroke-linecap="round" stroke-linejoin="round"/><path d="M812.6029733044916 483.9842120543827 L800.3970266955084 637.2157879456173" fill="none" stroke="#E9E5DA" stroke-width="23.92" stroke-linecap="round" stroke-linejoin="round"/><circle cx="812.6" cy="484.0" r="14.9" fill="#E9E5DA" stroke="#6E6858" stroke-width="2.5"/><circle cx="800.4" cy="637.2" r="16.7" fill="#E9E5DA" stroke="#6E6858" stroke-width="2.5"/><path d="M819.2 484.5L807.0 637.7" stroke="#8A8472" stroke-width="8.4" opacity=".45"/><path d="M799.1225652778486 647.1224087912691 L760.8774347221514 861.677591208731" fill="none" stroke="#6E6858" stroke-width="31.0" stroke-linecap="round" stroke-linejoin="round"/><path d="M799.1225652778486 647.1224087912691 L760.8774347221514 861.677591208731" fill="none" stroke="#E9E5DA" stroke-width="26.0" stroke-linecap="round" stroke-linejoin="round"/><circle cx="799.1" cy="647.1" r="16.2" fill="#E9E5DA" stroke="#6E6858" stroke-width="2.5"/><circle cx="760.9" cy="861.7" r="18.2" fill="#E9E5DA" stroke="#6E6858" stroke-width="2.5"/><path d="M806.2 648.4L767.9 862.9" stroke="#8A8472" stroke-width="9.1" opacity=".45"/><path d="M915.1310733304548 534.9239177940897 L898.8689266695452 627.0760822059103" fill="none" stroke="#6E6858" stroke-width="24.76" stroke-linecap="round" stroke-linejoin="round"/><path d="M915.1310733304548 534.9239177940897 L898.8689266695452 627.0760822059103" fill="none" stroke="#E9E5DA" stroke-width="19.76" stroke-linecap="round" stroke-linejoin="round"/><circle cx="915.1" cy="534.9" r="12.3" fill="#E9E5DA" stroke="#6E6858" stroke-width="2.5"/><circle cx="898.9" cy="627.1" r="13.8" fill="#E9E5DA" stroke="#6E6858" stroke-width="2.5"/><path d="M920.5 535.9L904.2 628.0" stroke="#8A8472" stroke-width="6.9" opacity=".45"/><path d="M896.5353354780701 636.780664999579 L874.4646645219299 708.819335000421" fill="none" stroke="#6E6858" stroke-width="26.840000000000003" stroke-linecap="round" stroke-linejoin="round"/><path d="M896.5353354780701 636.780664999579 L874.4646645219299 708.819335000421" fill="none" stroke="#E9E5DA" stroke-width="21.840000000000003" stroke-linecap="round" stroke-linejoin="round"/><circle cx="896.5" cy="636.8" r="13.7" fill="#E9E5DA" stroke="#6E6858" stroke-width="2.5"/><circle cx="874.5" cy="708.8" r="15.3" fill="#E9E5DA" stroke="#6E6858" stroke-width="2.5"/><path d="M902.3 638.5L880.2 710.6" stroke="#8A8472" stroke-width="7.6" opacity=".45"/><path d="M870.7992139148848 718.089603613635 L795.2007860851152 872.310396386365" fill="none" stroke="#6E6858" stroke-width="28.92" stroke-linecap="round" stroke-linejoin="round"/><path d="M870.7992139148848 718.089603613635 L795.2007860851152 872.310396386365" fill="none" stroke="#E9E5DA" stroke-width="23.92" stroke-linecap="round" stroke-linejoin="round"/><circle cx="870.8" cy="718.1" r="14.9" fill="#E9E5DA" stroke="#6E6858" stroke-width="2.5"/><circle cx="795.2" cy="872.3" r="16.7" fill="#E9E5DA" stroke="#6E6858" stroke-width="2.5"/><path d="M876.7 721.0L801.1 875.2" stroke="#8A8472" stroke-width="8.4" opacity=".45"/><ellipse cx="648.0" cy="897.0" rx="32.4" ry="26.5" fill="#BDB6A6" stroke="#4A4438" stroke-width="4"/><ellipse cx="691.2" cy="889.2" rx="30.2" ry="25.2" fill="#BDB6A6" stroke="#4A4438" stroke-width="4"/><ellipse cx="736.6" cy="889.2" rx="32.4" ry="26.5" fill="#BDB6A6" stroke="#4A4438" stroke-width="4"/><ellipse cx="782.0" cy="898.8" rx="32.4" ry="26.5" fill="#BDB6A6" stroke="#4A4438" stroke-width="4"/><ellipse cx="661.0" cy="931.2" rx="32.4" ry="23.9" fill="#BDB6A6" stroke="#4A4438" stroke-width="4"/><ellipse cx="702.0" cy="937.2" rx="32.4" ry="22.7" fill="#BDB6A6" stroke="#4A4438" stroke-width="4"/><ellipse cx="745.2" cy="936.0" rx="32.4" ry="23.9" fill="#BDB6A6" stroke="#4A4438" stroke-width="4"/><ellipse cx="782.0" cy="930.0" rx="25.9" ry="20.2" fill="#BDB6A6" stroke="#4A4438" stroke-width="4"/><ellipse cx="715" cy="906.0" rx="81.0" ry="33.0" fill="#3A342A" opacity="0.385" filter="url(#blur2)"/><path d="M845 312H1000" stroke="#9a968a" stroke-width="7" stroke-dasharray="14 4 22 5 9 4" opacity=".75"/><path d="M852 340H950" stroke="#9a968a" stroke-width="7" stroke-dasharray="14 4 22 5 9 4" opacity=".75"/><path d="M858 368H945" stroke="#9a968a" stroke-width="7" stroke-dasharray="14 4 22 5 9 4" opacity=".75"/><path d="M428 455H515" stroke="#9a968a" stroke-width="7" stroke-dasharray="14 4 22 5 9 4" opacity=".75"/><path d="M852 489H965" stroke="#9a968a" stroke-width="7" stroke-dasharray="14 4 22 5 9 4" opacity=".75"/><path d="M440 523H525" stroke="#9a968a" stroke-width="7" stroke-dasharray="14 4 22 5 9 4" opacity=".75"/><path d="M425 630H530" stroke="#9a968a" stroke-width="7" stroke-dasharray="14 4 22 5 9 4" opacity=".75"/><path d="M930 672H1015" stroke="#9a968a" stroke-width="7" stroke-dasharray="14 4 22 5 9 4" opacity=".75"/><path d="M930 733H965" stroke="#9a968a" stroke-width="7" stroke-dasharray="14 4 22 5 9 4" opacity=".75"/><path d="M460 760H575" stroke="#9a968a" stroke-width="7" stroke-dasharray="14 4 22 5 9 4" opacity=".75"/><path d="M478 775H525" stroke="#9a968a" stroke-width="7" stroke-dasharray="14 4 22 5 9 4" opacity=".75"/><path d="M895 785H995" stroke="#9a968a" stroke-width="7" stroke-dasharray="14 4 22 5 9 4" opacity=".75"/><path d="M890 815H925" stroke="#9a968a" stroke-width="7" stroke-dasharray="14 4 22 5 9 4" opacity=".75"/><path d="M468 868H580" stroke="#9a968a" stroke-width="7" stroke-dasharray="14 4 22 5 9 4" opacity=".75"/><path d="M870 865H895" stroke="#9a968a" stroke-width="7" stroke-dasharray="14 4 22 5 9 4" opacity=".75"/><path d="M530 895H600" stroke="#9a968a" stroke-width="7" stroke-dasharray="14 4 22 5 9 4" opacity=".75"/><path d="M860 888H955" stroke="#9a968a" stroke-width="7" stroke-dasharray="14 4 22 5 9 4" opacity=".75"/><path d="M520 920H600" stroke="#9a968a" stroke-width="7" stroke-dasharray="14 4 22 5 9 4" opacity=".75"/><path d="M838 932H910" stroke="#9a968a" stroke-width="7" stroke-dasharray="14 4 22 5 9 4" opacity=".75"/><path d="M572 982H640" stroke="#9a968a" stroke-width="7" stroke-dasharray="14 4 22 5 9 4" opacity=".75"/><path d="M625 1018H685" stroke="#9a968a" stroke-width="7" stroke-dasharray="14 4 22 5 9 4" opacity=".75"/><path d="M668 1040H735" stroke="#9a968a" stroke-width="7" stroke-dasharray="14 4 22 5 9 4" opacity=".75"/><path d="M750 1032H830" stroke="#9a968a" stroke-width="7" stroke-dasharray="14 4 22 5 9 4" opacity=".75"/></g></svg></div>
<div class="n" style="left:1264.5px;top:805.5px">48</div>
<div class="th" style="left:1508px;top:648px"><svg width="198" height="149" viewBox="0 0 198 149"><g transform="translate(-1 -1) scale(0.13986)" filter="url(#blur1)"><path d="M650.0 45.0 C659.2 35.8 684.2 22.5 700.0 25.0 C715.8 27.5 738.0 45.5 745.0 60.0 C752.0 74.5 748.7 98.3 742.0 112.0 C735.3 125.7 717.8 142.0 705.0 142.0 C692.2 142.0 675.0 122.3 665.0 112.0 C655.0 101.7 647.5 91.2 645.0 80.0 C642.5 68.8 640.8 54.2 650.0 45.0Z" fill="#E9DDB9" stroke="#B8A878" stroke-width="4" stroke-linecap="round" stroke-linejoin="round" /><path d="M855.0 52.0 C863.3 42.0 885.0 25.3 900.0 25.0 C915.0 24.7 937.2 35.5 945.0 50.0 C952.8 64.5 953.7 95.0 947.0 112.0 C940.3 129.0 918.7 150.3 905.0 152.0 C891.3 153.7 874.2 133.2 865.0 122.0 C855.8 110.8 851.7 96.7 850.0 85.0 C848.3 73.3 846.7 62.0 855.0 52.0Z" fill="#E9DDB9" stroke="#B8A878" stroke-width="4" stroke-linecap="round" stroke-linejoin="round" /><path d="M765.0 68.0 C770.0 62.7 788.3 78.0 800.0 78.0 C811.7 78.0 830.0 62.7 835.0 68.0 C840.0 73.3 835.0 94.7 830.0 110.0 C825.0 125.3 811.7 151.7 805.0 160.0 C798.3 168.3 795.8 168.3 790.0 160.0 C784.2 151.7 774.2 125.3 770.0 110.0 C765.8 94.7 760.0 73.3 765.0 68.0Z" fill="#E9DDB9" stroke="#B8A878" stroke-width="4" stroke-linecap="round" stroke-linejoin="round" /><path d="M705.0 140.0 C708.0 130.8 729.2 113.3 740.0 110.0 C750.8 106.7 761.7 110.0 770.0 120.0 C778.3 130.0 783.3 161.7 790.0 170.0 C796.7 178.3 803.3 178.3 810.0 170.0 C816.7 161.7 820.8 128.0 830.0 120.0 C839.2 112.0 857.5 114.5 865.0 122.0 C872.5 129.5 878.3 150.0 875.0 165.0 C871.7 180.0 856.7 207.0 845.0 212.0 C833.3 217.0 818.3 194.0 805.0 195.0 C791.7 196.0 778.3 217.2 765.0 218.0 C751.7 218.8 732.2 208.8 725.0 200.0 C717.8 191.2 725.3 175.0 722.0 165.0 C718.7 155.0 702.0 149.2 705.0 140.0Z" fill="#E9DDB9" stroke="#B8A878" stroke-width="4" stroke-linecap="round" stroke-linejoin="round" /><path d="M745.0 190.0 C748.3 185.8 765.0 182.5 770.0 185.0 C775.0 187.5 778.3 200.8 775.0 205.0 C771.7 209.2 755.0 212.5 750.0 210.0 C745.0 207.5 741.7 194.2 745.0 190.0Z" fill="#fff" /><path d="M825.0 185.0 C829.7 182.2 846.7 184.2 850.0 188.0 C853.3 191.8 849.7 205.2 845.0 208.0 C840.3 210.8 825.3 208.8 822.0 205.0 C818.7 201.2 820.3 187.8 825.0 185.0Z" fill="#fff" /><rect x="788" y="172" width="14" height="23" fill="#5A9AC0" /><path d="M630.0 185.0 C630.8 176.7 645.0 171.7 655.0 170.0 C665.0 168.3 679.2 178.3 690.0 175.0 C700.8 171.7 711.7 151.7 720.0 150.0 C728.3 148.3 739.2 157.5 740.0 165.0 C740.8 172.5 733.3 186.7 725.0 195.0 C716.7 203.3 695.8 197.5 690.0 215.0 C684.2 232.5 687.5 265.8 690.0 300.0 C692.5 334.2 700.0 381.7 705.0 420.0 C710.0 458.3 710.8 507.5 720.0 530.0 C729.2 552.5 754.2 546.7 760.0 555.0 C765.8 563.3 761.7 576.7 755.0 580.0 C748.3 583.3 732.5 575.0 720.0 575.0 C707.5 575.0 688.0 584.2 680.0 580.0 C672.0 575.8 670.7 560.0 672.0 550.0 C673.3 540.0 687.5 541.7 688.0 520.0 C688.5 498.3 679.7 456.7 675.0 420.0 C670.3 383.3 664.2 333.3 660.0 300.0 C655.8 266.7 655.0 239.2 650.0 220.0 C645.0 200.8 629.2 193.3 630.0 185.0Z" fill="#E9DDB9" stroke="#B8A878" stroke-width="4" stroke-linecap="round" stroke-linejoin="round" /><path d="M680.0 592.0 C685.0 582.8 706.7 584.5 720.0 585.0 C733.3 585.5 754.7 585.8 760.0 595.0 C765.3 604.2 754.5 614.2 752.0 640.0 C749.5 665.8 746.7 715.0 745.0 750.0 C743.3 785.0 741.2 824.2 742.0 850.0 C742.8 875.8 749.5 892.5 750.0 905.0 C750.5 917.5 753.3 921.7 745.0 925.0 C736.7 928.3 706.7 937.5 700.0 925.0 C693.3 912.5 705.0 879.2 705.0 850.0 C705.0 820.8 702.5 785.0 700.0 750.0 C697.5 715.0 693.3 666.3 690.0 640.0 C686.7 613.7 675.0 601.2 680.0 592.0Z" fill="#E9DDB9" stroke="#B8A878" stroke-width="4" stroke-linecap="round" stroke-linejoin="round" /><path d="M672.0 605.0 C673.0 580.8 684.2 580.8 688.0 605.0 C691.8 629.2 693.0 696.7 695.0 750.0 C697.0 803.3 701.7 895.0 700.0 925.0 C698.3 955.0 688.0 959.2 685.0 930.0 C682.0 900.8 684.2 804.2 682.0 750.0 C679.8 695.8 671.0 629.2 672.0 605.0Z" fill="#DCCFA6" stroke="#B8A878" stroke-width="3" stroke-linecap="round" stroke-linejoin="round" /><path d="M685.0 935.0 C696.7 928.3 733.8 925.8 745.0 930.0 C756.2 934.2 751.5 941.7 752.0 960.0 C752.5 978.3 761.7 1027.5 748.0 1040.0 C734.3 1052.5 682.2 1046.7 670.0 1035.0 C657.8 1023.3 672.5 986.7 675.0 970.0 C677.5 953.3 673.3 941.7 685.0 935.0Z" fill="#E9DDB9" stroke="#B8A878" stroke-width="4" stroke-linecap="round" stroke-linejoin="round" /><path d="M690 975L686 1040" stroke="#fff" stroke-width="5" fill="none" /><path d="M708 975L704 1040" stroke="#fff" stroke-width="5" fill="none" /><path d="M724 975L720 1040" stroke="#fff" stroke-width="5" fill="none" /><path d="M738 975L734 1040" stroke="#fff" stroke-width="5" fill="none" /><path d="M525 115H605" stroke="#7a766a" stroke-width="7" stroke-dasharray="14 4 22 5 9 4" opacity=".75"/><path d="M548 147H605" stroke="#7a766a" stroke-width="7" stroke-dasharray="14 4 22 5 9 4" opacity=".75"/><path d="M808 355H852" stroke="#7a766a" stroke-width="7" stroke-dasharray="14 4 22 5 9 4" opacity=".75"/><path d="M808 562H855" stroke="#7a766a" stroke-width="7" stroke-dasharray="14 4 22 5 9 4" opacity=".75"/><path d="M552 575H618" stroke="#7a766a" stroke-width="7" stroke-dasharray="14 4 22 5 9 4" opacity=".75"/><path d="M588 690H620" stroke="#7a766a" stroke-width="7" stroke-dasharray="14 4 22 5 9 4" opacity=".75"/><path d="M575 770H620" stroke="#7a766a" stroke-width="7" stroke-dasharray="14 4 22 5 9 4" opacity=".75"/><path d="M808 910H925" stroke="#7a766a" stroke-width="7" stroke-dasharray="14 4 22 5 9 4" opacity=".75"/><path d="M502 927H615" stroke="#7a766a" stroke-width="7" stroke-dasharray="14 4 22 5 9 4" opacity=".75"/><path d="M808 980H882" stroke="#7a766a" stroke-width="7" stroke-dasharray="14 4 22 5 9 4" opacity=".75"/><path d="M612 115L665 115" stroke="#8a867a" stroke-width="2" fill="none" /><path d="M612 147L675 147" stroke="#8a867a" stroke-width="2" fill="none" /><path d="M700 355L800 355" stroke="#8a867a" stroke-width="2" fill="none" /><path d="M750 562L800 562" stroke="#8a867a" stroke-width="2" fill="none" /><path d="M625 575L685 575" stroke="#8a867a" stroke-width="2" fill="none" /><path d="M625 690L715 690" stroke="#8a867a" stroke-width="2" fill="none" /><path d="M625 770L695 770" stroke="#8a867a" stroke-width="2" fill="none" /><path d="M755 912L800 910" stroke="#8a867a" stroke-width="2" fill="none" /><path d="M620 927L690 927" stroke="#8a867a" stroke-width="2" fill="none" /><path d="M755 935L800 975" stroke="#8a867a" stroke-width="2" fill="none" /><path d="M1318 1028h18" stroke="#8a8aa8" stroke-width="6" opacity=".7"/></g></svg></div>
<div class="n" style="left:1508.5px;top:805.5px">49</div>
<div class="th" style="left:44px;top:862px"><svg width="198" height="149" viewBox="0 0 198 149"><g transform="translate(-1 -1) scale(0.13986)" filter="url(#blur1)"><defs><linearGradient id="fade50" x1="0" y1="0" x2="0" y2="1"><stop offset="0" stop-color="#fff" stop-opacity="0"/><stop offset="1" stop-color="#fff"/></linearGradient></defs><path d="M495.0 200.0 C465.0 203.3 455.8 243.7 440.0 250.0 C424.2 256.3 415.0 240.5 400.0 238.0 C385.0 235.5 362.5 224.7 350.0 235.0 C337.5 245.3 325.8 279.2 325.0 300.0 C324.2 320.8 335.8 340.0 345.0 360.0 C354.2 380.0 367.5 380.0 380.0 420.0 C392.5 460.0 405.0 513.3 420.0 600.0 C435.0 686.7 448.0 883.3 470.0 940.0 C492.0 996.7 543.7 980.0 552.0 940.0 C560.3 900.0 529.5 770.0 520.0 700.0 C510.5 630.0 496.3 561.7 495.0 520.0 C493.7 478.3 512.8 466.7 512.0 450.0 C511.2 433.3 490.3 435.0 490.0 420.0 C489.7 405.0 498.3 380.0 510.0 360.0 C521.7 340.0 543.3 311.7 560.0 300.0 C576.7 288.3 600.0 301.7 610.0 290.0 C620.0 278.3 639.2 245.0 620.0 230.0 C600.8 215.0 525.0 196.7 495.0 200.0Z" fill="url(#gbg)" stroke="#A8966A" stroke-width="4" stroke-linecap="round" stroke-linejoin="round" /><path d="M440.0 420.0 C441.7 403.3 460.0 403.3 470.0 420.0 C480.0 436.7 490.8 473.3 500.0 520.0 C509.2 566.7 516.3 630.8 525.0 700.0 C533.7 769.2 552.8 895.8 552.0 935.0 C551.2 974.2 530.3 974.2 520.0 935.0 C509.7 895.8 500.0 769.2 490.0 700.0 C480.0 630.8 468.3 566.7 460.0 520.0 C451.7 473.3 438.3 436.7 440.0 420.0Z" fill="#9A875A" opacity="0.55" filter="url(#blur2)"/><path d="M440.0 260.0 C450.0 248.3 500.0 263.3 520.0 270.0 C540.0 276.7 561.7 285.0 560.0 300.0 C558.3 315.0 526.7 353.3 510.0 360.0 C493.3 366.7 471.7 356.7 460.0 340.0 C448.3 323.3 430.0 271.7 440.0 260.0Z" fill="#9A875A" opacity="0.4" filter="url(#blur2)"/><circle cx="570" cy="222" r="76" fill="#A9C6DA" stroke="#8AAAC0" stroke-width="4"/><path d="M480.0 190.0 L520.0 300.0 L610.0 300.0 L640.0 240.0 L600.0 310.0 L520.0 320.0Z" fill="url(#gbg)" /><path d="M352.0 250.0 C359.5 239.3 383.7 234.0 395.0 236.0 C406.3 238.0 420.0 253.8 420.0 262.0 C420.0 270.2 406.7 278.7 395.0 285.0 C383.3 291.3 357.2 305.8 350.0 300.0 C342.8 294.2 344.5 260.7 352.0 250.0Z" fill="#F0BE9E" /><rect x="430" y="860" width="160" height="75" fill="url(#fade50)" /><rect x="420" y="934" width="180" height="66" fill="#fff" /><path d="M1000.0 280.0 C1010.8 268.3 1026.7 245.0 1040.0 240.0 C1053.3 235.0 1071.3 235.0 1080.0 250.0 C1088.7 265.0 1092.0 301.7 1092.0 330.0 C1092.0 358.3 1087.0 391.7 1080.0 420.0 C1073.0 448.3 1061.7 470.0 1050.0 500.0 C1038.3 530.0 1020.0 558.3 1010.0 600.0 C1000.0 641.7 995.8 700.8 990.0 750.0 C984.2 799.2 994.2 870.8 975.0 895.0 C955.8 919.2 889.2 919.2 875.0 895.0 C860.8 870.8 884.2 799.2 890.0 750.0 C895.8 700.8 902.5 645.0 910.0 600.0 C917.5 555.0 926.7 516.7 935.0 480.0 C943.3 443.3 953.3 408.3 960.0 380.0 C966.7 351.7 968.3 326.7 975.0 310.0 C981.7 293.3 989.2 291.7 1000.0 280.0Z" fill="url(#gbg)" stroke="#A8966A" stroke-width="4" stroke-linecap="round" stroke-linejoin="round" /><path d="M1030.0 300.0 C1040.8 275.0 1077.0 310.0 1085.0 330.0 C1093.0 350.0 1084.2 391.7 1078.0 420.0 C1071.8 448.3 1059.7 470.0 1048.0 500.0 C1036.3 530.0 1017.7 558.3 1008.0 600.0 C998.3 641.7 995.5 701.7 990.0 750.0 C984.5 798.3 981.7 866.7 975.0 890.0 C968.3 913.3 951.7 913.3 950.0 890.0 C948.3 866.7 959.2 798.3 965.0 750.0 C970.8 701.7 975.8 645.0 985.0 600.0 C994.2 555.0 1012.5 530.0 1020.0 480.0 C1027.5 430.0 1019.2 325.0 1030.0 300.0Z" fill="#9A875A" opacity="0.5" filter="url(#blur2)"/><circle cx="945" cy="226" r="80" fill="#B4CEDF" stroke="#8AAAC0" stroke-width="4"/><circle cx="945" cy="232" r="26" fill="#C8DCE8" stroke="#8AAAC0" stroke-width="3"/><path d="M1042.0 240.0 C1047.3 234.3 1064.7 233.3 1072.0 238.0 C1079.3 242.7 1088.0 259.7 1086.0 268.0 C1084.0 276.3 1067.7 287.3 1060.0 288.0 C1052.3 288.7 1043.0 280.0 1040.0 272.0 C1037.0 264.0 1036.7 245.7 1042.0 240.0Z" fill="#F0BE9E" /><ellipse cx="1030" cy="465" rx="22" ry="32" fill="#E6DCBC" stroke="#B09E72" stroke-width="3"/><rect x="855" y="810" width="155" height="75" fill="url(#fade50)" /><rect x="845" y="884" width="175" height="66" fill="#fff" /><path d="M125 108H140" stroke="#5a5a5a" stroke-width="7" stroke-dasharray="14 4 22 5 9 4" opacity=".75"/><path d="M425 108H468" stroke="#5a5a5a" stroke-width="7" stroke-dasharray="14 4 22 5 9 4" opacity=".75"/><path d="M268 145H430" stroke="#5a5a5a" stroke-width="7" stroke-dasharray="14 4 22 5 9 4" opacity=".75"/><path d="M188 182H355" stroke="#5a5a5a" stroke-width="7" stroke-dasharray="14 4 22 5 9 4" opacity=".75"/><path d="M210 207H350" stroke="#5a5a5a" stroke-width="7" stroke-dasharray="14 4 22 5 9 4" opacity=".75"/><path d="M125 257H288" stroke="#5a5a5a" stroke-width="7" stroke-dasharray="14 4 22 5 9 4" opacity=".75"/><path d="M110 332H282" stroke="#5a5a5a" stroke-width="7" stroke-dasharray="14 4 22 5 9 4" opacity=".75"/><path d="M140 357H285" stroke="#5a5a5a" stroke-width="7" stroke-dasharray="14 4 22 5 9 4" opacity=".75"/><path d="M680 210H725" stroke="#5a5a5a" stroke-width="7" stroke-dasharray="14 4 22 5 9 4" opacity=".75"/><path d="M665 265H738" stroke="#5a5a5a" stroke-width="7" stroke-dasharray="14 4 22 5 9 4" opacity=".75"/><path d="M572 352H715" stroke="#5a5a5a" stroke-width="7" stroke-dasharray="14 4 22 5 9 4" opacity=".75"/><path d="M572 378H600" stroke="#5a5a5a" stroke-width="7" stroke-dasharray="14 4 22 5 9 4" opacity=".75"/><path d="M555 447H612" stroke="#5a5a5a" stroke-width="7" stroke-dasharray="14 4 22 5 9 4" opacity=".75"/><path d="M555 470H648" stroke="#5a5a5a" stroke-width="7" stroke-dasharray="14 4 22 5 9 4" opacity=".75"/><path d="M582 696H625" stroke="#5a5a5a" stroke-width="7" stroke-dasharray="14 4 22 5 9 4" opacity=".75"/><path d="M845 108H860" stroke="#5a5a5a" stroke-width="7" stroke-dasharray="14 4 22 5 9 4" opacity=".75"/><path d="M895 115H948" stroke="#5a5a5a" stroke-width="7" stroke-dasharray="14 4 22 5 9 4" opacity=".75"/><path d="M1042 130H1128" stroke="#5a5a5a" stroke-width="7" stroke-dasharray="14 4 22 5 9 4" opacity=".75"/><path d="M1128 168H1288" stroke="#5a5a5a" stroke-width="7" stroke-dasharray="14 4 22 5 9 4" opacity=".75"/><path d="M1122 230H1250" stroke="#5a5a5a" stroke-width="7" stroke-dasharray="14 4 22 5 9 4" opacity=".75"/><path d="M1122 255H1255" stroke="#5a5a5a" stroke-width="7" stroke-dasharray="14 4 22 5 9 4" opacity=".75"/><path d="M1130 305H1295" stroke="#5a5a5a" stroke-width="7" stroke-dasharray="14 4 22 5 9 4" opacity=".75"/><path d="M845 323H890" stroke="#5a5a5a" stroke-width="7" stroke-dasharray="14 4 22 5 9 4" opacity=".75"/><path d="M1158 360H1322" stroke="#5a5a5a" stroke-width="7" stroke-dasharray="14 4 22 5 9 4" opacity=".75"/><path d="M710 388H882" stroke="#5a5a5a" stroke-width="7" stroke-dasharray="14 4 22 5 9 4" opacity=".75"/><path d="M720 412H885" stroke="#5a5a5a" stroke-width="7" stroke-dasharray="14 4 22 5 9 4" opacity=".75"/><path d="M1160 432H1322" stroke="#5a5a5a" stroke-width="7" stroke-dasharray="14 4 22 5 9 4" opacity=".75"/><path d="M1132 478H1288" stroke="#5a5a5a" stroke-width="7" stroke-dasharray="14 4 22 5 9 4" opacity=".75"/><path d="M640 505H890" stroke="#5a5a5a" stroke-width="7" stroke-dasharray="14 4 22 5 9 4" opacity=".75"/><path d="M635 640H858" stroke="#5a5a5a" stroke-width="7" stroke-dasharray="14 4 22 5 9 4" opacity=".75"/><path d="M462 115L462 230" stroke="#777" stroke-width="2" fill="none" /><path d="M435 150L435 235" stroke="#777" stroke-width="2" fill="none" /><path d="M360 210L400 240" stroke="#777" stroke-width="2" fill="none" /><path d="M290 257L345 257" stroke="#777" stroke-width="2" fill="none" /><path d="M290 350L330 320" stroke="#777" stroke-width="2" fill="none" /><path d="M620 210L675 210" stroke="#777" stroke-width="2" fill="none" /><path d="M420 268L660 265" stroke="#777" stroke-width="2" fill="none" /><path d="M450 352L565 352" stroke="#777" stroke-width="2" fill="none" /><path d="M510 445L550 447" stroke="#777" stroke-width="2" fill="none" /><path d="M505 698L575 696" stroke="#777" stroke-width="2" fill="none" /><path d="M950 120L948 215" stroke="#777" stroke-width="2" fill="none" /><path d="M1052 140L1052 240" stroke="#777" stroke-width="2" fill="none" /><path d="M1120 172L1065 250" stroke="#777" stroke-width="2" fill="none" /><path d="M1118 235L1080 265" stroke="#777" stroke-width="2" fill="none" /><path d="M1125 305L1070 275" stroke="#777" stroke-width="2" fill="none" /><path d="M895 323L935 323" stroke="#777" stroke-width="2" fill="none" /><path d="M1155 360L1075 290" stroke="#777" stroke-width="2" fill="none" /><path d="M890 410L1040 275" stroke="#777" stroke-width="2" fill="none" /><path d="M1155 432L1085 350" stroke="#777" stroke-width="2" fill="none" /><path d="M1060 478L1125 478" stroke="#777" stroke-width="2" fill="none" /><path d="M890 505L940 460" stroke="#777" stroke-width="2" fill="none" /><path d="M865 642L965 642" stroke="#777" stroke-width="2" fill="none" /><text x="282" y="970" font-size="24" textLength="868" lengthAdjust="spacingAndGlyphs" fill="#222" font-family="Liberation Sans" font-weight="bold" >© Elsevier. Drake et al: Gray's Anatomy for Students - www.studentconsult.com</text></g></svg></div>
<div class="th" style="left:288px;top:862px"><svg width="198" height="149" viewBox="0 0 198 149"><g transform="translate(-1 -1) scale(0.13986)" filter="url(#blur1)"><defs><linearGradient id="fade51" x1="0" y1="0" x2="0" y2="1"><stop offset="0" stop-color="#fff" stop-opacity="0"/><stop offset="1" stop-color="#fff"/></linearGradient></defs><ellipse cx="295" cy="210" rx="75" ry="80" fill="#A9C6DA" stroke="#8AAAC0" stroke-width="4" transform="rotate(-25 295 210)"/><path d="M360.0 190.0 C368.3 187.5 386.7 217.5 400.0 225.0 C413.3 232.5 423.3 235.0 440.0 235.0 C456.7 235.0 483.3 219.2 500.0 225.0 C516.7 230.8 534.2 250.8 540.0 270.0 C545.8 289.2 541.7 321.7 535.0 340.0 C528.3 358.3 509.2 353.3 500.0 380.0 C490.8 406.7 488.3 455.0 480.0 500.0 C471.7 545.0 460.0 600.0 450.0 650.0 C440.0 700.0 429.2 755.0 420.0 800.0 C410.8 845.0 414.2 900.0 395.0 920.0 C375.8 940.0 315.8 940.0 305.0 920.0 C294.2 900.0 321.7 845.0 330.0 800.0 C338.3 755.0 347.5 700.0 355.0 650.0 C362.5 600.0 375.8 531.7 375.0 500.0 C374.2 468.3 350.8 475.0 350.0 460.0 C349.2 445.0 370.8 431.7 370.0 410.0 C369.2 388.3 355.0 350.0 345.0 330.0 C335.0 310.0 309.2 305.0 310.0 290.0 C310.8 275.0 341.7 256.7 350.0 240.0 C358.3 223.3 351.7 192.5 360.0 190.0Z" fill="url(#gbg)" stroke="#A8966A" stroke-width="4" stroke-linecap="round" stroke-linejoin="round" /><path d="M440.0 420.0 C452.5 376.7 488.7 376.7 495.0 390.0 C501.3 403.3 485.8 456.7 478.0 500.0 C470.2 543.3 458.0 600.0 448.0 650.0 C438.0 700.0 426.8 755.8 418.0 800.0 C409.2 844.2 404.7 895.8 395.0 915.0 C385.3 934.2 360.8 934.2 360.0 915.0 C359.2 895.8 380.0 844.2 390.0 800.0 C400.0 755.8 411.7 713.3 420.0 650.0 C428.3 586.7 427.5 463.3 440.0 420.0Z" fill="#9A875A" opacity="0.55" filter="url(#blur2)"/><path d="M420.0 240.0 C431.7 235.0 465.0 280.0 470.0 300.0 C475.0 320.0 460.0 340.0 450.0 360.0 C440.0 380.0 421.7 413.3 410.0 420.0 C398.3 426.7 381.7 415.0 380.0 400.0 C378.3 385.0 393.3 356.7 400.0 330.0 C406.7 303.3 408.3 245.0 420.0 240.0Z" fill="#FFFFFF" opacity="0.35" filter="url(#blur2)"/><path d="M435.0 232.0 C436.7 223.3 465.8 216.7 480.0 218.0 C494.2 219.3 514.2 230.5 520.0 240.0 C525.8 249.5 523.3 270.0 515.0 275.0 C506.7 280.0 483.3 277.2 470.0 270.0 C456.7 262.8 433.3 240.7 435.0 232.0Z" fill="#F0BE9E" /><ellipse cx="372" cy="445" rx="22" ry="28" fill="#E6DCBC" stroke="#B09E72" stroke-width="3"/><rect x="290" y="850" width="120" height="65" fill="url(#fade51)" /><rect x="280" y="914" width="140" height="26" fill="#fff" /><path d="M995.0 180.0 C998.3 165.8 1006.7 144.7 1020.0 135.0 C1033.3 125.3 1056.7 121.2 1075.0 122.0 C1093.3 122.8 1116.7 128.7 1130.0 140.0 C1143.3 151.3 1151.7 173.3 1155.0 190.0 C1158.3 206.7 1159.2 228.3 1150.0 240.0 C1140.8 251.7 1116.7 260.0 1100.0 260.0 C1083.3 260.0 1066.7 246.7 1050.0 240.0 C1033.3 233.3 1009.2 230.0 1000.0 220.0 C990.8 210.0 991.7 194.2 995.0 180.0Z" fill="#A9C6DA" stroke="#8AAAC0" stroke-width="4" stroke-linecap="round" stroke-linejoin="round" /><path d="M965.0 240.0 C971.7 221.7 985.8 210.8 1000.0 200.0 C1014.2 189.2 1031.7 176.7 1050.0 175.0 C1068.3 173.3 1093.3 180.8 1110.0 190.0 C1126.7 199.2 1150.0 210.0 1150.0 230.0 C1150.0 250.0 1115.8 278.3 1110.0 310.0 C1104.2 341.7 1110.0 378.3 1115.0 420.0 C1120.0 461.7 1131.7 513.3 1140.0 560.0 C1148.3 606.7 1158.3 655.0 1165.0 700.0 C1171.7 745.0 1177.2 794.2 1180.0 830.0 C1182.8 865.8 1199.5 900.8 1182.0 915.0 C1164.5 929.2 1093.7 934.2 1075.0 915.0 C1056.3 895.8 1074.2 844.2 1070.0 800.0 C1065.8 755.8 1060.0 696.7 1050.0 650.0 C1040.0 603.3 1022.5 561.7 1010.0 520.0 C997.5 478.3 983.3 435.0 975.0 400.0 C966.7 365.0 961.7 336.7 960.0 310.0 C958.3 283.3 958.3 258.3 965.0 240.0Z" fill="url(#gbg)" stroke="#A8966A" stroke-width="4" stroke-linecap="round" stroke-linejoin="round" /><path d="M1080.0 330.0 C1082.0 296.7 1105.7 305.0 1112.0 320.0 C1118.3 335.0 1113.0 380.0 1118.0 420.0 C1123.0 460.0 1133.7 513.3 1142.0 560.0 C1150.3 606.7 1161.7 642.5 1168.0 700.0 C1174.3 757.5 1184.7 870.8 1180.0 905.0 C1175.3 939.2 1148.3 939.2 1140.0 905.0 C1131.7 870.8 1136.7 764.2 1130.0 700.0 C1123.3 635.8 1108.3 581.7 1100.0 520.0 C1091.7 458.3 1078.0 363.3 1080.0 330.0Z" fill="#9A875A" opacity="0.5" filter="url(#blur2)"/><path d="M968.0 240.0 C972.2 230.8 992.2 211.7 1000.0 215.0 C1007.8 218.3 1015.0 247.5 1015.0 260.0 C1015.0 272.5 1006.7 288.3 1000.0 290.0 C993.3 291.7 980.3 278.3 975.0 270.0 C969.7 261.7 963.8 249.2 968.0 240.0Z" fill="#F0BE9E" /><path d="M1030.0 240.0 C1035.0 225.8 1055.8 205.8 1065.0 205.0 C1074.2 204.2 1085.8 220.8 1085.0 235.0 C1084.2 249.2 1068.3 280.8 1060.0 290.0 C1051.7 299.2 1040.0 298.3 1035.0 290.0 C1030.0 281.7 1025.0 254.2 1030.0 240.0Z" fill="#F0BE9E" /><rect x="1060" y="850" width="135" height="65" fill="url(#fade51)" /><rect x="1050" y="914" width="155" height="26" fill="#fff" /><path d="M130 132H150" stroke="#5a5a5a" stroke-width="7" stroke-dasharray="14 4 22 5 9 4" opacity=".75"/><path d="M408 138H455" stroke="#5a5a5a" stroke-width="7" stroke-dasharray="14 4 22 5 9 4" opacity=".75"/><path d="M552 184H720" stroke="#5a5a5a" stroke-width="7" stroke-dasharray="14 4 22 5 9 4" opacity=".75"/><path d="M125 210H182" stroke="#5a5a5a" stroke-width="7" stroke-dasharray="14 4 22 5 9 4" opacity=".75"/><path d="M580 290H752" stroke="#5a5a5a" stroke-width="7" stroke-dasharray="14 4 22 5 9 4" opacity=".75"/><path d="M585 315H722" stroke="#5a5a5a" stroke-width="7" stroke-dasharray="14 4 22 5 9 4" opacity=".75"/><path d="M108 354H270" stroke="#5a5a5a" stroke-width="7" stroke-dasharray="14 4 22 5 9 4" opacity=".75"/><path d="M545 400H742" stroke="#5a5a5a" stroke-width="7" stroke-dasharray="14 4 22 5 9 4" opacity=".75"/><path d="M130 443H290" stroke="#5a5a5a" stroke-width="7" stroke-dasharray="14 4 22 5 9 4" opacity=".75"/><path d="M535 537H692" stroke="#5a5a5a" stroke-width="7" stroke-dasharray="14 4 22 5 9 4" opacity=".75"/><path d="M162 577H285" stroke="#5a5a5a" stroke-width="7" stroke-dasharray="14 4 22 5 9 4" opacity=".75"/><path d="M190 602H285" stroke="#5a5a5a" stroke-width="7" stroke-dasharray="14 4 22 5 9 4" opacity=".75"/><path d="M145 774H270" stroke="#5a5a5a" stroke-width="7" stroke-dasharray="14 4 22 5 9 4" opacity=".75"/><path d="M140 800H270" stroke="#5a5a5a" stroke-width="7" stroke-dasharray="14 4 22 5 9 4" opacity=".75"/><path d="M460 833H728" stroke="#5a5a5a" stroke-width="7" stroke-dasharray="14 4 22 5 9 4" opacity=".75"/><path d="M138 858H258" stroke="#5a5a5a" stroke-width="7" stroke-dasharray="14 4 22 5 9 4" opacity=".75"/><path d="M852 132H870" stroke="#5a5a5a" stroke-width="7" stroke-dasharray="14 4 22 5 9 4" opacity=".75"/><path d="M1170 143H1322" stroke="#5a5a5a" stroke-width="7" stroke-dasharray="14 4 22 5 9 4" opacity=".75"/><path d="M760 246H900" stroke="#5a5a5a" stroke-width="7" stroke-dasharray="14 4 22 5 9 4" opacity=".75"/><path d="M780 468H938" stroke="#5a5a5a" stroke-width="7" stroke-dasharray="14 4 22 5 9 4" opacity=".75"/><path d="M420 145L420 225" stroke="#777" stroke-width="2" fill="none" /><path d="M545 190L505 225" stroke="#777" stroke-width="2" fill="none" /><path d="M185 210L225 210" stroke="#777" stroke-width="2" fill="none" /><path d="M575 290L520 265" stroke="#777" stroke-width="2" fill="none" /><path d="M275 354L420 354" stroke="#777" stroke-width="2" fill="none" /><path d="M540 400L470 375" stroke="#777" stroke-width="2" fill="none" /><path d="M292 443L350 443" stroke="#777" stroke-width="2" fill="none" /><path d="M530 537L435 537" stroke="#777" stroke-width="2" fill="none" /><path d="M290 602L375 602" stroke="#777" stroke-width="2" fill="none" /><path d="M275 800L365 800" stroke="#777" stroke-width="2" fill="none" /><path d="M455 833L385 833" stroke="#777" stroke-width="2" fill="none" /><path d="M262 858L360 858" stroke="#777" stroke-width="2" fill="none" /><path d="M1165 148L1100 215" stroke="#777" stroke-width="2" fill="none" /><path d="M905 246L970 246" stroke="#777" stroke-width="2" fill="none" /><path d="M942 468L1000 468" stroke="#777" stroke-width="2" fill="none" /><text x="282" y="950" font-size="24" textLength="868" lengthAdjust="spacingAndGlyphs" fill="#222" font-family="Liberation Sans" font-weight="bold" >© Elsevier. Drake et al: Gray's Anatomy for Students - www.studentconsult.com</text></g></svg></div>
<div class="th" style="left:532px;top:862px"><svg width="198" height="149" viewBox="0 0 198 149"><g transform="translate(-1 -1) scale(0.13986)" filter="url(#blur1)"><ellipse cx="262" cy="58" rx="45" ry="36" fill="#A9C6DA" stroke="#8AAAC0" stroke-width="3"/><path d="M220.0 80.0 C224.2 70.3 235.0 63.7 250.0 62.0 C265.0 60.3 296.7 62.0 310.0 70.0 C323.3 78.0 328.7 93.3 330.0 110.0 C331.3 126.7 324.7 145.0 318.0 170.0 C311.3 195.0 298.0 221.7 290.0 260.0 C282.0 298.3 274.7 351.7 270.0 400.0 C265.3 448.3 262.3 500.0 262.0 550.0 C261.7 600.0 263.3 658.3 268.0 700.0 C272.7 741.7 281.3 773.3 290.0 800.0 C298.7 826.7 315.3 843.3 320.0 860.0 C324.7 876.7 326.3 889.2 318.0 900.0 C309.7 910.8 287.2 922.5 270.0 925.0 C252.8 927.5 227.5 922.5 215.0 915.0 C202.5 907.5 196.7 894.2 195.0 880.0 C193.3 865.8 201.7 860.0 205.0 830.0 C208.3 800.0 215.0 746.7 215.0 700.0 C215.0 653.3 205.8 600.0 205.0 550.0 C204.2 500.0 205.8 448.3 210.0 400.0 C214.2 351.7 223.3 298.3 230.0 260.0 C236.7 221.7 250.8 193.3 250.0 170.0 C249.2 146.7 230.0 135.0 225.0 120.0 C220.0 105.0 215.8 89.7 220.0 80.0Z" fill="url(#gbg)" stroke="#A8966A" stroke-width="4" stroke-linecap="round" stroke-linejoin="round" /><path d="M290.0 260.0 C293.3 260.0 274.7 351.7 270.0 400.0 C265.3 448.3 262.3 500.0 262.0 550.0 C261.7 600.0 263.3 658.3 268.0 700.0 C272.7 741.7 291.3 783.3 290.0 800.0 C288.7 816.7 268.3 816.7 260.0 800.0 C251.7 783.3 243.7 741.7 240.0 700.0 C236.3 658.3 236.3 600.0 238.0 550.0 C239.7 500.0 241.3 448.3 250.0 400.0 C258.7 351.7 286.7 260.0 290.0 260.0Z" fill="#9A875A" opacity="0.4" filter="url(#blur2)"/><path d="M290.0 880.0 C292.5 871.7 309.7 861.7 315.0 865.0 C320.3 868.3 324.5 891.7 322.0 900.0 C319.5 908.3 305.3 918.3 300.0 915.0 C294.7 911.7 287.5 888.3 290.0 880.0Z" fill="#F0BE9E" /><ellipse cx="615" cy="58" rx="48" ry="46" fill="#A9C6DA" stroke="#8AAAC0" stroke-width="3"/><path d="M610.0 100.0 C611.7 88.3 635.0 73.7 650.0 70.0 C665.0 66.3 684.2 75.5 700.0 78.0 C715.8 80.5 735.8 76.3 745.0 85.0 C754.2 93.7 757.5 110.8 755.0 130.0 C752.5 149.2 738.3 168.3 730.0 200.0 C721.7 231.7 713.3 273.3 705.0 320.0 C696.7 366.7 688.3 426.7 680.0 480.0 C671.7 533.3 661.7 593.3 655.0 640.0 C648.3 686.7 639.2 726.7 640.0 760.0 C640.8 793.3 655.0 818.3 660.0 840.0 C665.0 861.7 673.3 878.0 670.0 890.0 C666.7 902.0 655.0 909.5 640.0 912.0 C625.0 914.5 599.2 905.0 580.0 905.0 C560.8 905.0 536.7 917.8 525.0 912.0 C513.3 906.2 510.8 885.3 510.0 870.0 C509.2 854.7 510.0 838.3 520.0 820.0 C530.0 801.7 556.7 790.0 570.0 760.0 C583.3 730.0 591.7 686.7 600.0 640.0 C608.3 593.3 613.3 533.3 620.0 480.0 C626.7 426.7 634.2 366.7 640.0 320.0 C645.8 273.3 655.0 230.0 655.0 200.0 C655.0 170.0 647.5 156.7 640.0 140.0 C632.5 123.3 608.3 111.7 610.0 100.0Z" fill="url(#gbg)" stroke="#A8966A" stroke-width="4" stroke-linecap="round" stroke-linejoin="round" /><path d="M700.0 200.0 C707.5 180.0 729.2 180.0 730.0 200.0 C730.8 220.0 713.3 273.3 705.0 320.0 C696.7 366.7 688.3 426.7 680.0 480.0 C671.7 533.3 661.7 593.3 655.0 640.0 C648.3 686.7 646.7 740.0 640.0 760.0 C633.3 780.0 615.8 780.0 615.0 760.0 C614.2 740.0 627.5 686.7 635.0 640.0 C642.5 593.3 651.7 533.3 660.0 480.0 C668.3 426.7 678.3 366.7 685.0 320.0 C691.7 273.3 692.5 220.0 700.0 200.0Z" fill="#9A875A" opacity="0.45" filter="url(#blur2)"/><path d="M535.0 900.0 C537.5 890.0 547.5 869.2 560.0 860.0 C572.5 850.8 596.7 843.3 610.0 845.0 C623.3 846.7 635.0 859.2 640.0 870.0 C645.0 880.8 648.3 905.0 640.0 910.0 C631.7 915.0 605.8 898.3 590.0 900.0 C574.2 901.7 554.2 920.0 545.0 920.0 C535.8 920.0 532.5 910.0 535.0 900.0Z" fill="#A9C6DA" stroke="#8AAAC0" stroke-width="3" stroke-linecap="round" stroke-linejoin="round" /><ellipse cx="1085" cy="62" rx="46" ry="48" fill="#A9C6DA" stroke="#8AAAC0" stroke-width="3"/><path d="M948.0 90.0 C953.8 79.2 971.3 66.7 985.0 65.0 C998.7 63.3 1017.5 74.2 1030.0 80.0 C1042.5 85.8 1057.5 88.3 1060.0 100.0 C1062.5 111.7 1047.5 133.3 1045.0 150.0 C1042.5 166.7 1042.5 171.7 1045.0 200.0 C1047.5 228.3 1053.3 273.3 1060.0 320.0 C1066.7 366.7 1076.7 426.7 1085.0 480.0 C1093.3 533.3 1101.7 593.3 1110.0 640.0 C1118.3 686.7 1123.3 728.3 1135.0 760.0 C1146.7 791.7 1171.7 810.0 1180.0 830.0 C1188.3 850.0 1190.0 867.5 1185.0 880.0 C1180.0 892.5 1164.2 905.0 1150.0 905.0 C1135.8 905.0 1115.0 879.5 1100.0 880.0 C1085.0 880.5 1072.0 908.0 1060.0 908.0 C1048.0 908.0 1032.2 893.0 1028.0 880.0 C1023.8 867.0 1029.7 850.0 1035.0 830.0 C1040.3 810.0 1057.5 791.7 1060.0 760.0 C1062.5 728.3 1055.0 686.7 1050.0 640.0 C1045.0 593.3 1037.5 533.3 1030.0 480.0 C1022.5 426.7 1013.3 366.7 1005.0 320.0 C996.7 273.3 989.2 231.7 980.0 200.0 C970.8 168.3 955.3 148.3 950.0 130.0 C944.7 111.7 942.2 100.8 948.0 90.0Z" fill="url(#gbg)" stroke="#A8966A" stroke-width="4" stroke-linecap="round" stroke-linejoin="round" /><path d="M985.0 200.0 C985.8 180.0 997.5 180.0 1005.0 200.0 C1012.5 220.0 1021.7 273.3 1030.0 320.0 C1038.3 366.7 1047.5 426.7 1055.0 480.0 C1062.5 533.3 1070.8 593.3 1075.0 640.0 C1079.2 686.7 1083.3 740.0 1080.0 760.0 C1076.7 780.0 1061.7 780.0 1055.0 760.0 C1048.3 740.0 1045.8 686.7 1040.0 640.0 C1034.2 593.3 1026.7 533.3 1020.0 480.0 C1013.3 426.7 1005.8 366.7 1000.0 320.0 C994.2 273.3 984.2 220.0 985.0 200.0Z" fill="#9A875A" opacity="0.4" filter="url(#blur2)"/><path d="M1035.0 860.0 C1040.5 852.5 1055.0 844.2 1065.0 845.0 C1075.0 845.8 1090.8 855.0 1095.0 865.0 C1099.2 875.0 1096.7 897.2 1090.0 905.0 C1083.3 912.8 1064.7 914.5 1055.0 912.0 C1045.3 909.5 1035.3 898.7 1032.0 890.0 C1028.7 881.3 1029.5 867.5 1035.0 860.0Z" fill="#A9C6DA" stroke="#8AAAC0" stroke-width="3" stroke-linecap="round" stroke-linejoin="round" /><path d="M1120.0 862.0 C1125.3 855.0 1140.0 847.5 1150.0 848.0 C1160.0 848.5 1175.3 855.5 1180.0 865.0 C1184.7 874.5 1184.7 897.2 1178.0 905.0 C1171.3 912.8 1150.0 914.5 1140.0 912.0 C1130.0 909.5 1121.3 898.3 1118.0 890.0 C1114.7 881.7 1114.7 869.0 1120.0 862.0Z" fill="#A9C6DA" stroke="#8AAAC0" stroke-width="3" stroke-linecap="round" stroke-linejoin="round" /><path d="M1040.0 825.0 C1042.2 820.0 1052.5 812.5 1055.0 815.0 C1057.5 817.5 1057.2 835.0 1055.0 840.0 C1052.8 845.0 1044.5 847.5 1042.0 845.0 C1039.5 842.5 1037.8 830.0 1040.0 825.0Z" fill="#F0BE9E" /><path d="M1125.0 805.0 C1127.0 800.0 1138.2 796.7 1142.0 800.0 C1145.8 803.3 1150.0 820.0 1148.0 825.0 C1146.0 830.0 1133.8 833.3 1130.0 830.0 C1126.2 826.7 1123.0 810.0 1125.0 805.0Z" fill="#F0BE9E" /><rect x="803" y="402" width="105" height="105" fill="none" stroke="#7A8AC8" stroke-width="3"/><path d="M908 425L1105 425" stroke="#6A7AC0" stroke-width="3" fill="none" /><path d="M855.0 425.0 C866.3 425.0 883.0 432.5 888.0 440.0 C893.0 447.5 890.5 461.3 885.0 470.0 C879.5 478.7 865.0 492.0 855.0 492.0 C845.0 492.0 830.8 478.7 825.0 470.0 C819.2 461.3 815.0 447.5 820.0 440.0 C825.0 432.5 843.7 425.0 855.0 425.0Z" fill="#EFE6C8" stroke="#A8966A" stroke-width="3" stroke-linecap="round" stroke-linejoin="round" /><circle cx="855" cy="455" r="13" fill="#8A6A4A"/><path d="M150 35H162" stroke="#5a5a5a" stroke-width="7" stroke-dasharray="14 4 22 5 9 4" opacity=".75"/><path d="M538 33H550" stroke="#5a5a5a" stroke-width="7" stroke-dasharray="14 4 22 5 9 4" opacity=".75"/><path d="M988 33H1000" stroke="#5a5a5a" stroke-width="7" stroke-dasharray="14 4 22 5 9 4" opacity=".75"/><path d="M1100 217H1255" stroke="#5a5a5a" stroke-width="7" stroke-dasharray="14 4 22 5 9 4" opacity=".75"/><path d="M828 333H898" stroke="#5a5a5a" stroke-width="7" stroke-dasharray="14 4 22 5 9 4" opacity=".75"/><path d="M828 358H892" stroke="#5a5a5a" stroke-width="7" stroke-dasharray="14 4 22 5 9 4" opacity=".75"/><path d="M760 378H775" stroke="#5a5a5a" stroke-width="7" stroke-dasharray="14 4 22 5 9 4" opacity=".75"/><path d="M715 437H775" stroke="#5a5a5a" stroke-width="7" stroke-dasharray="14 4 22 5 9 4" opacity=".75"/><path d="M715 462H772" stroke="#5a5a5a" stroke-width="7" stroke-dasharray="14 4 22 5 9 4" opacity=".75"/><path d="M938 440H995" stroke="#5a5a5a" stroke-width="7" stroke-dasharray="14 4 22 5 9 4" opacity=".75"/><path d="M938 465H995" stroke="#5a5a5a" stroke-width="7" stroke-dasharray="14 4 22 5 9 4" opacity=".75"/><path d="M760 535H820" stroke="#5a5a5a" stroke-width="7" stroke-dasharray="14 4 22 5 9 4" opacity=".75"/><path d="M688 560H822" stroke="#5a5a5a" stroke-width="7" stroke-dasharray="14 4 22 5 9 4" opacity=".75"/><path d="M755 583H822" stroke="#5a5a5a" stroke-width="7" stroke-dasharray="14 4 22 5 9 4" opacity=".75"/><path d="M878 537H935" stroke="#5a5a5a" stroke-width="7" stroke-dasharray="14 4 22 5 9 4" opacity=".75"/><path d="M878 562H1015" stroke="#5a5a5a" stroke-width="7" stroke-dasharray="14 4 22 5 9 4" opacity=".75"/><path d="M880 586H940" stroke="#5a5a5a" stroke-width="7" stroke-dasharray="14 4 22 5 9 4" opacity=".75"/><path d="M805 622H918" stroke="#5a5a5a" stroke-width="7" stroke-dasharray="14 4 22 5 9 4" opacity=".75"/><path d="M1145 527H1258" stroke="#5a5a5a" stroke-width="7" stroke-dasharray="14 4 22 5 9 4" opacity=".75"/><path d="M460 678H542" stroke="#5a5a5a" stroke-width="7" stroke-dasharray="14 4 22 5 9 4" opacity=".75"/><path d="M470 702H535" stroke="#5a5a5a" stroke-width="7" stroke-dasharray="14 4 22 5 9 4" opacity=".75"/><path d="M770 695H1000" stroke="#5a5a5a" stroke-width="7" stroke-dasharray="14 4 22 5 9 4" opacity=".75"/><path d="M760 748H992" stroke="#5a5a5a" stroke-width="7" stroke-dasharray="14 4 22 5 9 4" opacity=".75"/><path d="M1190 680H1335" stroke="#5a5a5a" stroke-width="7" stroke-dasharray="14 4 22 5 9 4" opacity=".75"/><path d="M1190 704H1325" stroke="#5a5a5a" stroke-width="7" stroke-dasharray="14 4 22 5 9 4" opacity=".75"/><path d="M1190 728H1320" stroke="#5a5a5a" stroke-width="7" stroke-dasharray="14 4 22 5 9 4" opacity=".75"/><path d="M1190 752H1342" stroke="#5a5a5a" stroke-width="7" stroke-dasharray="14 4 22 5 9 4" opacity=".75"/><path d="M1190 777H1250" stroke="#5a5a5a" stroke-width="7" stroke-dasharray="14 4 22 5 9 4" opacity=".75"/><path d="M298 748H485" stroke="#5a5a5a" stroke-width="7" stroke-dasharray="14 4 22 5 9 4" opacity=".75"/><path d="M298 772H448" stroke="#5a5a5a" stroke-width="7" stroke-dasharray="14 4 22 5 9 4" opacity=".75"/><path d="M298 797H428" stroke="#5a5a5a" stroke-width="7" stroke-dasharray="14 4 22 5 9 4" opacity=".75"/><path d="M798 790H980" stroke="#5a5a5a" stroke-width="7" stroke-dasharray="14 4 22 5 9 4" opacity=".75"/><path d="M835 815H980" stroke="#5a5a5a" stroke-width="7" stroke-dasharray="14 4 22 5 9 4" opacity=".75"/><path d="M782 840H980" stroke="#5a5a5a" stroke-width="7" stroke-dasharray="14 4 22 5 9 4" opacity=".75"/><path d="M1218 825H1298" stroke="#5a5a5a" stroke-width="7" stroke-dasharray="14 4 22 5 9 4" opacity=".75"/><path d="M1218 850H1292" stroke="#5a5a5a" stroke-width="7" stroke-dasharray="14 4 22 5 9 4" opacity=".75"/><path d="M405 848H462" stroke="#5a5a5a" stroke-width="7" stroke-dasharray="14 4 22 5 9 4" opacity=".75"/><path d="M368 873H462" stroke="#5a5a5a" stroke-width="7" stroke-dasharray="14 4 22 5 9 4" opacity=".75"/><path d="M830 880H965" stroke="#5a5a5a" stroke-width="7" stroke-dasharray="14 4 22 5 9 4" opacity=".75"/><path d="M1222 880H1278" stroke="#5a5a5a" stroke-width="7" stroke-dasharray="14 4 22 5 9 4" opacity=".75"/><path d="M1222 906H1290" stroke="#5a5a5a" stroke-width="7" stroke-dasharray="14 4 22 5 9 4" opacity=".75"/><path d="M692 918H752" stroke="#5a5a5a" stroke-width="7" stroke-dasharray="14 4 22 5 9 4" opacity=".75"/><path d="M692 943H790" stroke="#5a5a5a" stroke-width="7" stroke-dasharray="14 4 22 5 9 4" opacity=".75"/><path d="M138 975H298" stroke="#5a5a5a" stroke-width="7" stroke-dasharray="14 4 22 5 9 4" opacity=".75"/><path d="M355 958H542" stroke="#5a5a5a" stroke-width="7" stroke-dasharray="14 4 22 5 9 4" opacity=".75"/><path d="M355 983H498" stroke="#5a5a5a" stroke-width="7" stroke-dasharray="14 4 22 5 9 4" opacity=".75"/><path d="M355 1005H505" stroke="#5a5a5a" stroke-width="7" stroke-dasharray="14 4 22 5 9 4" opacity=".75"/><path d="M580 978H718" stroke="#5a5a5a" stroke-width="7" stroke-dasharray="14 4 22 5 9 4" opacity=".75"/><path d="M810 962H1020" stroke="#5a5a5a" stroke-width="7" stroke-dasharray="14 4 22 5 9 4" opacity=".75"/><path d="M795 988H1020" stroke="#5a5a5a" stroke-width="7" stroke-dasharray="14 4 22 5 9 4" opacity=".75"/><path d="M1152 962H1340" stroke="#5a5a5a" stroke-width="7" stroke-dasharray="14 4 22 5 9 4" opacity=".75"/><path d="M1152 988H1332" stroke="#5a5a5a" stroke-width="7" stroke-dasharray="14 4 22 5 9 4" opacity=".75"/><path d="M1045 217L1095 217" stroke="#888" stroke-width="2" fill="none" /><path d="M855 365L855 425" stroke="#888" stroke-width="2" fill="none" /><path d="M855 492L855 600" stroke="#888" stroke-width="2" fill="none" /><path d="M780 450L820 450" stroke="#888" stroke-width="2" fill="none" /><path d="M890 450L930 450" stroke="#888" stroke-width="2" fill="none" /><path d="M1075 527L1140 527" stroke="#888" stroke-width="2" fill="none" /><path d="M535 710L535 820" stroke="#888" stroke-width="2" fill="none" /><path d="M1000 695L1070 730" stroke="#888" stroke-width="2" fill="none" /><path d="M995 748L1100 770" stroke="#888" stroke-width="2" fill="none" /><path d="M1185 780L1145 815" stroke="#888" stroke-width="2" fill="none" /><path d="M300 800L300 880" stroke="#888" stroke-width="2" fill="none" /><path d="M985 840L1040 840" stroke="#888" stroke-width="2" fill="none" /><path d="M1212 825L1150 825" stroke="#888" stroke-width="2" fill="none" /><path d="M468 873L515 873" stroke="#888" stroke-width="2" fill="none" /><path d="M968 880L1035 880" stroke="#888" stroke-width="2" fill="none" /><path d="M1215 880L1180 880" stroke="#888" stroke-width="2" fill="none" /><path d="M688 920L660 890" stroke="#888" stroke-width="2" fill="none" /><path d="M285 930L285 960" stroke="#888" stroke-width="2" fill="none" /><path d="M350 960L305 905" stroke="#888" stroke-width="2" fill="none" /><path d="M555 920L555 940" stroke="#888" stroke-width="2" fill="none" /><path d="M555 940L618 940" stroke="#888" stroke-width="2" fill="none" /><path d="M618 940L618 915" stroke="#888" stroke-width="2" fill="none" /><path d="M1025 962L1075 905" stroke="#888" stroke-width="2" fill="none" /><path d="M1148 962L1125 905" stroke="#888" stroke-width="2" fill="none" /><path d="M1108 900L1108 1010" stroke="#888" stroke-width="2" fill="none" /></g></svg></div>
<div class="th" style="left:776px;top:862px"><svg width="198" height="149" viewBox="0 0 198 149"><g transform="translate(-1 -1) scale(0.13986)" filter="url(#blur1)"><defs><linearGradient id="fade53" x1="0" y1="0" x2="0" y2="1"><stop offset="0" stop-color="#fff" stop-opacity="0"/><stop offset="1" stop-color="#fff"/></linearGradient></defs><path d="M262.0 268.0 C272.0 256.0 307.0 259.0 330.0 258.0 C353.0 257.0 378.3 261.3 400.0 262.0 C421.7 262.7 441.3 260.7 460.0 262.0 C478.7 263.3 504.5 258.7 512.0 270.0 C519.5 281.3 511.2 308.3 505.0 330.0 C498.8 351.7 483.3 371.7 475.0 400.0 C466.7 428.3 459.2 463.3 455.0 500.0 C450.8 536.7 450.8 576.7 450.0 620.0 C449.2 663.3 465.8 736.7 450.0 760.0 C434.2 783.3 371.3 783.3 355.0 760.0 C338.7 736.7 354.5 663.3 352.0 620.0 C349.5 576.7 347.0 536.7 340.0 500.0 C333.0 463.3 321.7 428.3 310.0 400.0 C298.3 371.7 278.0 352.0 270.0 330.0 C262.0 308.0 252.0 280.0 262.0 268.0Z" fill="url(#gbg)" stroke="#A8966A" stroke-width="4" stroke-linecap="round" stroke-linejoin="round" /><path d="M420.0 400.0 C431.2 383.3 466.2 383.3 472.0 400.0 C477.8 416.7 458.7 463.3 455.0 500.0 C451.3 536.7 450.8 577.5 450.0 620.0 C449.2 662.5 455.8 732.5 450.0 755.0 C444.2 777.5 421.3 777.5 415.0 755.0 C408.7 732.5 413.7 662.5 412.0 620.0 C410.3 577.5 403.7 536.7 405.0 500.0 C406.3 463.3 408.8 416.7 420.0 400.0Z" fill="#9A875A" opacity="0.5" filter="url(#blur2)"/><path d="M300.0 300.0 C308.3 286.7 346.7 276.7 360.0 290.0 C373.3 303.3 381.7 361.7 380.0 380.0 C378.3 398.3 361.7 401.7 350.0 400.0 C338.3 398.3 318.3 386.7 310.0 370.0 C301.7 353.3 291.7 313.3 300.0 300.0Z" fill="#FFFFFF" opacity="0.4" filter="url(#blur2)"/><path d="M325.0 262.0 C330.0 257.5 360.8 245.0 380.0 245.0 C399.2 245.0 436.7 257.5 440.0 262.0 C443.3 266.5 415.0 270.3 400.0 272.0 C385.0 273.7 362.5 273.7 350.0 272.0 C337.5 270.3 320.0 266.5 325.0 262.0Z" fill="#A9C6DA" /><path d="M432 410L420 530" stroke="#F0BE9E" stroke-width="10" fill="none" /><rect x="340" y="690" width="125" height="70" fill="url(#fade53)" /><rect x="340" y="758" width="125" height="22" fill="#fff" /><path d="M895.0 282.0 C905.0 270.3 937.5 273.3 960.0 270.0 C982.5 266.7 1008.3 262.3 1030.0 262.0 C1051.7 261.7 1070.3 265.8 1090.0 268.0 C1109.7 270.2 1139.3 263.0 1148.0 275.0 C1156.7 287.0 1148.3 315.8 1142.0 340.0 C1135.7 364.2 1120.3 390.0 1110.0 420.0 C1099.7 450.0 1088.3 483.3 1080.0 520.0 C1071.7 556.7 1064.7 600.0 1060.0 640.0 C1055.3 680.0 1069.0 740.0 1052.0 760.0 C1035.0 780.0 973.7 780.0 958.0 760.0 C942.3 740.0 959.3 680.0 958.0 640.0 C956.7 600.0 954.7 556.7 950.0 520.0 C945.3 483.3 938.3 450.0 930.0 420.0 C921.7 390.0 905.8 363.0 900.0 340.0 C894.2 317.0 885.0 293.7 895.0 282.0Z" fill="url(#gbg)" stroke="#A8966A" stroke-width="4" stroke-linecap="round" stroke-linejoin="round" /><path d="M1000.0 340.0 C1003.3 325.0 1023.3 316.7 1040.0 330.0 C1056.7 343.3 1094.2 388.3 1100.0 420.0 C1105.8 451.7 1082.0 483.3 1075.0 520.0 C1068.0 556.7 1062.2 600.8 1058.0 640.0 C1053.8 679.2 1056.3 735.8 1050.0 755.0 C1043.7 774.2 1025.0 774.2 1020.0 755.0 C1015.0 735.8 1018.3 682.5 1020.0 640.0 C1021.7 597.5 1030.0 536.7 1030.0 500.0 C1030.0 463.3 1025.0 446.7 1020.0 420.0 C1015.0 393.3 996.7 355.0 1000.0 340.0Z" fill="#9A875A" opacity="0.5" filter="url(#blur2)"/><path d="M945.0 272.0 C948.3 268.0 980.8 259.7 1000.0 258.0 C1019.2 256.3 1038.3 259.7 1060.0 262.0 C1081.7 264.3 1130.0 269.0 1130.0 272.0 C1130.0 275.0 1085.0 278.3 1060.0 280.0 C1035.0 281.7 999.2 283.3 980.0 282.0 C960.8 280.7 941.7 276.0 945.0 272.0Z" fill="#A9C6DA" /><path d="M1005.0 285.0 C1009.2 278.8 1033.3 273.8 1040.0 278.0 C1046.7 282.2 1049.2 303.8 1045.0 310.0 C1040.8 316.2 1021.7 319.2 1015.0 315.0 C1008.3 310.8 1000.8 291.2 1005.0 285.0Z" fill="#F0BE9E" /><path d="M1105 365L1130 335" stroke="#8AB8E0" stroke-width="10" fill="none" /><rect x="945" y="690" width="120" height="70" fill="url(#fade53)" /><rect x="945" y="758" width="120" height="22" fill="#fff" /><rect x="668" y="622" width="152" height="155" fill="none" stroke="#8A98D0" stroke-width="3"/><path d="M335 680L668 680" stroke="#A0AAD8" stroke-width="4" fill="none" /><path d="M742.0 655.0 C756.2 655.0 780.3 702.5 785.0 720.0 C789.7 737.5 781.7 753.7 770.0 760.0 C758.3 766.3 726.7 764.7 715.0 758.0 C703.3 751.3 695.5 737.2 700.0 720.0 C704.5 702.8 727.8 655.0 742.0 655.0Z" fill="#F0E8CC" stroke="#A8966A" stroke-width="3" stroke-linecap="round" stroke-linejoin="round" /><path d="M742.0 690.0 C747.3 690.0 759.5 708.3 760.0 715.0 C760.5 721.7 750.3 730.0 745.0 730.0 C739.7 730.0 728.5 721.7 728.0 715.0 C727.5 708.3 736.7 690.0 742.0 690.0Z" fill="#7A6A4A" /><path d="M112 196H128" stroke="#5a5a5a" stroke-width="7" stroke-dasharray="14 4 22 5 9 4" opacity=".75"/><path d="M888 196H902" stroke="#5a5a5a" stroke-width="7" stroke-dasharray="14 4 22 5 9 4" opacity=".75"/><path d="M435 217H758" stroke="#5a5a5a" stroke-width="7" stroke-dasharray="14 4 22 5 9 4" opacity=".75"/><path d="M552 265H755" stroke="#5a5a5a" stroke-width="7" stroke-dasharray="14 4 22 5 9 4" opacity=".75"/><path d="M552 290H702" stroke="#5a5a5a" stroke-width="7" stroke-dasharray="14 4 22 5 9 4" opacity=".75"/><path d="M88 300H222" stroke="#5a5a5a" stroke-width="7" stroke-dasharray="14 4 22 5 9 4" opacity=".75"/><path d="M558 331H692" stroke="#5a5a5a" stroke-width="7" stroke-dasharray="14 4 22 5 9 4" opacity=".75"/><path d="M515 378H658" stroke="#5a5a5a" stroke-width="7" stroke-dasharray="14 4 22 5 9 4" opacity=".75"/><path d="M515 403H652" stroke="#5a5a5a" stroke-width="7" stroke-dasharray="14 4 22 5 9 4" opacity=".75"/><path d="M135 388H275" stroke="#5a5a5a" stroke-width="7" stroke-dasharray="14 4 22 5 9 4" opacity=".75"/><path d="M488 466H765" stroke="#5a5a5a" stroke-width="7" stroke-dasharray="14 4 22 5 9 4" opacity=".75"/><path d="M488 492H828" stroke="#5a5a5a" stroke-width="7" stroke-dasharray="14 4 22 5 9 4" opacity=".75"/><path d="M158 542H272" stroke="#5a5a5a" stroke-width="7" stroke-dasharray="14 4 22 5 9 4" opacity=".75"/><path d="M1002 200H1288" stroke="#5a5a5a" stroke-width="7" stroke-dasharray="14 4 22 5 9 4" opacity=".75"/><path d="M1130 228H1342" stroke="#5a5a5a" stroke-width="7" stroke-dasharray="14 4 22 5 9 4" opacity=".75"/><path d="M1130 253H1282" stroke="#5a5a5a" stroke-width="7" stroke-dasharray="14 4 22 5 9 4" opacity=".75"/><path d="M1168 350H1322" stroke="#5a5a5a" stroke-width="7" stroke-dasharray="14 4 22 5 9 4" opacity=".75"/><path d="M1168 375H1318" stroke="#5a5a5a" stroke-width="7" stroke-dasharray="14 4 22 5 9 4" opacity=".75"/><path d="M1168 400H1215" stroke="#5a5a5a" stroke-width="7" stroke-dasharray="14 4 22 5 9 4" opacity=".75"/><path d="M1128 520H1218" stroke="#5a5a5a" stroke-width="7" stroke-dasharray="14 4 22 5 9 4" opacity=".75"/><path d="M602 560H620" stroke="#5a5a5a" stroke-width="7" stroke-dasharray="14 4 22 5 9 4" opacity=".75"/><path d="M712 560H785" stroke="#5a5a5a" stroke-width="7" stroke-dasharray="14 4 22 5 9 4" opacity=".75"/><path d="M672 590H805" stroke="#5a5a5a" stroke-width="7" stroke-dasharray="14 4 22 5 9 4" opacity=".75"/><path d="M510 650H642" stroke="#5a5a5a" stroke-width="7" stroke-dasharray="14 4 22 5 9 4" opacity=".75"/><path d="M525 706H642" stroke="#5a5a5a" stroke-width="7" stroke-dasharray="14 4 22 5 9 4" opacity=".75"/><path d="M582 730H642" stroke="#5a5a5a" stroke-width="7" stroke-dasharray="14 4 22 5 9 4" opacity=".75"/><path d="M865 695H925" stroke="#5a5a5a" stroke-width="7" stroke-dasharray="14 4 22 5 9 4" opacity=".75"/><path d="M865 720H930" stroke="#5a5a5a" stroke-width="7" stroke-dasharray="14 4 22 5 9 4" opacity=".75"/><path d="M862 764H920" stroke="#5a5a5a" stroke-width="7" stroke-dasharray="14 4 22 5 9 4" opacity=".75"/><path d="M862 788H918" stroke="#5a5a5a" stroke-width="7" stroke-dasharray="14 4 22 5 9 4" opacity=".75"/><path d="M672 803H828" stroke="#5a5a5a" stroke-width="7" stroke-dasharray="14 4 22 5 9 4" opacity=".75"/><path d="M710 842H792" stroke="#5a5a5a" stroke-width="7" stroke-dasharray="14 4 22 5 9 4" opacity=".75"/><path d="M430 217L375 240" stroke="#777" stroke-width="2" fill="none" /><path d="M548 275L390 290" stroke="#777" stroke-width="2" fill="none" /><path d="M225 300L262 300" stroke="#777" stroke-width="2" fill="none" /><path d="M552 331L515 320" stroke="#777" stroke-width="2" fill="none" /><path d="M510 380L390 320" stroke="#777" stroke-width="2" fill="none" /><path d="M280 388L370 388" stroke="#777" stroke-width="2" fill="none" /><path d="M482 466L440 466" stroke="#777" stroke-width="2" fill="none" /><path d="M275 542L345 542" stroke="#777" stroke-width="2" fill="none" /><path d="M1000 210L1005 270" stroke="#777" stroke-width="2" fill="none" /><path d="M1125 232L1060 270" stroke="#777" stroke-width="2" fill="none" /><path d="M1162 350L1130 350" stroke="#777" stroke-width="2" fill="none" /><path d="M1122 520L1050 520" stroke="#777" stroke-width="2" fill="none" /><path d="M740 600L740 655" stroke="#777" stroke-width="2" fill="none" /><path d="M648 652L712 690" stroke="#777" stroke-width="2" fill="none" /><path d="M648 730L700 730" stroke="#777" stroke-width="2" fill="none" /><path d="M825 695L785 695" stroke="#777" stroke-width="2" fill="none" /><path d="M858 765L780 735" stroke="#777" stroke-width="2" fill="none" /><path d="M745 760L745 795" stroke="#777" stroke-width="2" fill="none" /><text x="282" y="885" font-size="24" textLength="868" lengthAdjust="spacingAndGlyphs" fill="#222" font-family="Liberation Sans" font-weight="bold" >© Elsevier. Drake et al: Gray's Anatomy for Students - www.studentconsult.com</text></g></svg></div>
<div class="th" style="left:1020px;top:862px"><svg width="198" height="149" viewBox="0 0 198 149"><g transform="translate(-1 -1) scale(0.13986)" filter="url(#blur1)"><defs><linearGradient id="fade54" x1="0" y1="0" x2="0" y2="1"><stop offset="0" stop-color="#fff" stop-opacity="0"/><stop offset="1" stop-color="#fff"/></linearGradient></defs><path d="M715.0 300.0 C715.8 280.8 725.8 260.0 735.0 255.0 C744.2 250.0 758.3 260.8 770.0 270.0 C781.7 279.2 800.8 293.3 805.0 310.0 C809.2 326.7 797.5 348.3 795.0 370.0 C792.5 391.7 788.3 408.3 790.0 440.0 C791.7 471.7 799.2 516.7 805.0 560.0 C810.8 603.3 818.3 653.3 825.0 700.0 C831.7 746.7 840.0 799.2 845.0 840.0 C850.0 880.8 863.3 927.5 855.0 945.0 C846.7 962.5 805.8 962.5 795.0 945.0 C784.2 927.5 793.3 880.8 790.0 840.0 C786.7 799.2 780.0 746.7 775.0 700.0 C770.0 653.3 765.0 603.3 760.0 560.0 C755.0 516.7 750.0 471.7 745.0 440.0 C740.0 408.3 735.0 393.3 730.0 370.0 C725.0 346.7 714.2 319.2 715.0 300.0Z" fill="url(#gbg)" stroke="#A8966A" stroke-width="4" stroke-linecap="round" stroke-linejoin="round" /><path d="M780.0 440.0 C781.2 420.0 787.7 420.0 792.0 440.0 C796.3 460.0 800.3 516.7 806.0 560.0 C811.7 603.3 819.3 653.3 826.0 700.0 C832.7 746.7 841.7 800.0 846.0 840.0 C850.3 880.0 855.5 923.3 852.0 940.0 C848.5 956.7 831.2 956.7 825.0 940.0 C818.8 923.3 819.2 880.0 815.0 840.0 C810.8 800.0 805.0 746.7 800.0 700.0 C795.0 653.3 788.3 603.3 785.0 560.0 C781.7 516.7 778.8 460.0 780.0 440.0Z" fill="#9A875A" opacity="0.5" filter="url(#blur2)"/><path d="M745 260L790 305" stroke="#6AA8E0" stroke-width="9" fill="none" /><path d="M735 262L718 300" stroke="#F0A080" stroke-width="7" fill="none" /><path d="M720 345L748 400" stroke="#F0B040" stroke-width="8" fill="none" /><rect x="785" y="880" width="80" height="65" fill="url(#fade54)" /><rect x="785" y="943" width="80" height="17" fill="#fff" /><rect x="430" y="570" width="168" height="172" fill="none" stroke="#8A98D0" stroke-width="3"/><path d="M598 655L855 655" stroke="#7A88C8" stroke-width="4" fill="none" /><path d="M510.0 592.0 C520.8 594.5 538.7 622.0 545.0 640.0 C551.3 658.0 552.2 686.3 548.0 700.0 C543.8 713.7 532.2 719.0 520.0 722.0 C507.8 725.0 484.7 726.7 475.0 718.0 C465.3 709.3 461.2 685.5 462.0 670.0 C462.8 654.5 472.0 638.0 480.0 625.0 C488.0 612.0 499.2 589.5 510.0 592.0Z" fill="#EFE6C8" stroke="#A8966A" stroke-width="3" stroke-linecap="round" stroke-linejoin="round" /><circle cx="508" cy="682" r="20" fill="#9A8A6A"/><circle cx="508" cy="682" r="11" fill="#D8CCA8"/><path d="M548.0 640.0 C552.5 637.5 568.0 612.5 575.0 625.0 C582.0 637.5 593.3 696.7 590.0 715.0 C586.7 733.3 575.0 731.7 555.0 735.0 C535.0 738.3 484.2 735.0 470.0 735.0" fill="none" stroke="#888" stroke-width="2" stroke-linecap="round" stroke-linejoin="round" /><path d="M432 103H448" stroke="#5a5a5a" stroke-width="7" stroke-dasharray="14 4 22 5 9 4" opacity=".75"/><path d="M740 128H878" stroke="#5a5a5a" stroke-width="7" stroke-dasharray="14 4 22 5 9 4" opacity=".75"/><path d="M435 174H668" stroke="#5a5a5a" stroke-width="7" stroke-dasharray="14 4 22 5 9 4" opacity=".75"/><path d="M432 199H668" stroke="#5a5a5a" stroke-width="7" stroke-dasharray="14 4 22 5 9 4" opacity=".75"/><path d="M825 168H1008" stroke="#5a5a5a" stroke-width="7" stroke-dasharray="14 4 22 5 9 4" opacity=".75"/><path d="M825 193H1000" stroke="#5a5a5a" stroke-width="7" stroke-dasharray="14 4 22 5 9 4" opacity=".75"/><path d="M825 218H975" stroke="#5a5a5a" stroke-width="7" stroke-dasharray="14 4 22 5 9 4" opacity=".75"/><path d="M825 243H885" stroke="#5a5a5a" stroke-width="7" stroke-dasharray="14 4 22 5 9 4" opacity=".75"/><path d="M432 270H672" stroke="#5a5a5a" stroke-width="7" stroke-dasharray="14 4 22 5 9 4" opacity=".75"/><path d="M445 295H672" stroke="#5a5a5a" stroke-width="7" stroke-dasharray="14 4 22 5 9 4" opacity=".75"/><path d="M882 314H930" stroke="#5a5a5a" stroke-width="7" stroke-dasharray="14 4 22 5 9 4" opacity=".75"/><path d="M462 375H662" stroke="#5a5a5a" stroke-width="7" stroke-dasharray="14 4 22 5 9 4" opacity=".75"/><path d="M845 423H888" stroke="#5a5a5a" stroke-width="7" stroke-dasharray="14 4 22 5 9 4" opacity=".75"/><path d="M440 462H572" stroke="#5a5a5a" stroke-width="7" stroke-dasharray="14 4 22 5 9 4" opacity=".75"/><path d="M500 498H635" stroke="#5a5a5a" stroke-width="7" stroke-dasharray="14 4 22 5 9 4" opacity=".75"/><path d="M560 541H702" stroke="#5a5a5a" stroke-width="7" stroke-dasharray="14 4 22 5 9 4" opacity=".75"/><path d="M430 548H442" stroke="#5a5a5a" stroke-width="7" stroke-dasharray="14 4 22 5 9 4" opacity=".75"/><path d="M612 600H728" stroke="#5a5a5a" stroke-width="7" stroke-dasharray="14 4 22 5 9 4" opacity=".75"/><path d="M612 624H670" stroke="#5a5a5a" stroke-width="7" stroke-dasharray="14 4 22 5 9 4" opacity=".75"/><path d="M905 687H948" stroke="#5a5a5a" stroke-width="7" stroke-dasharray="14 4 22 5 9 4" opacity=".75"/><path d="M615 694H755" stroke="#5a5a5a" stroke-width="7" stroke-dasharray="14 4 22 5 9 4" opacity=".75"/><path d="M615 718H768" stroke="#5a5a5a" stroke-width="7" stroke-dasharray="14 4 22 5 9 4" opacity=".75"/><path d="M615 772H768" stroke="#5a5a5a" stroke-width="7" stroke-dasharray="14 4 22 5 9 4" opacity=".75"/><path d="M432 778H578" stroke="#5a5a5a" stroke-width="7" stroke-dasharray="14 4 22 5 9 4" opacity=".75"/><path d="M615 840H748" stroke="#5a5a5a" stroke-width="7" stroke-dasharray="14 4 22 5 9 4" opacity=".75"/><path d="M875 880H978" stroke="#5a5a5a" stroke-width="7" stroke-dasharray="14 4 22 5 9 4" opacity=".75"/><path d="M875 905H975" stroke="#5a5a5a" stroke-width="7" stroke-dasharray="14 4 22 5 9 4" opacity=".75"/><path d="M875 930H940" stroke="#5a5a5a" stroke-width="7" stroke-dasharray="14 4 22 5 9 4" opacity=".75"/><path d="M615 912H758" stroke="#5a5a5a" stroke-width="7" stroke-dasharray="14 4 22 5 9 4" opacity=".75"/><path d="M742 135L742 255" stroke="#777" stroke-width="2" fill="none" /><path d="M670 199L735 262" stroke="#777" stroke-width="2" fill="none" /><path d="M822 230L778 290" stroke="#777" stroke-width="2" fill="none" /><path d="M675 295L718 295" stroke="#777" stroke-width="2" fill="none" /><path d="M878 314L805 314" stroke="#777" stroke-width="2" fill="none" /><path d="M665 375L725 375" stroke="#777" stroke-width="2" fill="none" /><path d="M840 423L798 385" stroke="#777" stroke-width="2" fill="none" /><path d="M445 470L475 625" stroke="#777" stroke-width="2" fill="none" /><path d="M505 505L505 595" stroke="#777" stroke-width="2" fill="none" /><path d="M558 548L530 600" stroke="#777" stroke-width="2" fill="none" /><path d="M608 600L560 630" stroke="#777" stroke-width="2" fill="none" /><path d="M900 687L832 687" stroke="#777" stroke-width="2" fill="none" /><path d="M610 700L575 700" stroke="#777" stroke-width="2" fill="none" /><path d="M610 772L570 720" stroke="#777" stroke-width="2" fill="none" /><path d="M435 772L470 722" stroke="#777" stroke-width="2" fill="none" /><path d="M752 840L798 840" stroke="#777" stroke-width="2" fill="none" /><path d="M870 880L850 880" stroke="#777" stroke-width="2" fill="none" /><path d="M760 912L815 860" stroke="#777" stroke-width="2" fill="none" /><text x="288" y="985" font-size="24" textLength="862" lengthAdjust="spacingAndGlyphs" fill="#222" font-family="Liberation Sans" font-weight="bold" >© Elsevier. Drake et al: Gray's Anatomy for Students - www.studentconsult.com</text></g></svg></div>
<div class="th" style="left:1264px;top:862px"><svg width="198" height="149" viewBox="0 0 198 149"><g transform="translate(-1 -1) scale(0.13986)" filter="url(#blur1)"><path d="M205.0 90.0 C209.5 80.0 225.3 73.3 232.0 80.0 C238.7 86.7 240.0 101.7 245.0 130.0 C250.0 158.3 258.2 205.0 262.0 250.0 C265.8 295.0 267.5 341.7 268.0 400.0 C268.5 458.3 265.0 536.7 265.0 600.0 C265.0 663.3 266.3 730.0 268.0 780.0 C269.7 830.0 276.3 875.0 275.0 900.0 C273.7 925.0 265.8 925.8 260.0 930.0 C254.2 934.2 243.7 950.0 240.0 925.0 C236.3 900.0 238.0 834.2 238.0 780.0 C238.0 725.8 238.8 663.3 240.0 600.0 C241.2 536.7 245.8 458.3 245.0 400.0 C244.2 341.7 241.7 293.3 235.0 250.0 C228.3 206.7 210.0 166.7 205.0 140.0 C200.0 113.3 200.5 100.0 205.0 90.0Z" fill="#D8CAA0" stroke="#A8966A" stroke-width="3" stroke-linecap="round" stroke-linejoin="round" /><path d="M222.0 38.0 C234.5 26.3 270.7 30.0 300.0 30.0 C329.3 30.0 382.2 26.3 398.0 38.0 C413.8 49.7 399.7 73.0 395.0 100.0 C390.3 127.0 379.2 163.3 370.0 200.0 C360.8 236.7 346.7 273.3 340.0 320.0 C333.3 366.7 330.0 426.7 330.0 480.0 C330.0 533.3 335.0 590.0 340.0 640.0 C345.0 690.0 352.5 743.3 360.0 780.0 C367.5 816.7 381.7 840.8 385.0 860.0 C388.3 879.2 385.8 891.7 380.0 895.0 C374.2 898.3 367.5 884.2 350.0 880.0 C332.5 875.8 286.7 886.7 275.0 870.0 C263.3 853.3 277.5 818.3 280.0 780.0 C282.5 741.7 289.2 690.0 290.0 640.0 C290.8 590.0 286.7 533.3 285.0 480.0 C283.3 426.7 285.0 366.7 280.0 320.0 C275.0 273.3 264.2 236.7 255.0 200.0 C245.8 163.3 230.5 127.0 225.0 100.0 C219.5 73.0 209.5 49.7 222.0 38.0Z" fill="url(#gbg)" stroke="#A8966A" stroke-width="4" stroke-linecap="round" stroke-linejoin="round" /><path d="M330.0 200.0 C339.3 180.0 366.3 180.0 368.0 200.0 C369.7 220.0 346.3 273.3 340.0 320.0 C333.7 366.7 330.0 426.7 330.0 480.0 C330.0 533.3 335.0 590.0 340.0 640.0 C345.0 690.0 353.3 743.3 360.0 780.0 C366.7 816.7 382.5 846.7 380.0 860.0 C377.5 873.3 354.2 873.3 345.0 860.0 C335.8 846.7 330.8 816.7 325.0 780.0 C319.2 743.3 313.3 690.0 310.0 640.0 C306.7 590.0 304.7 533.3 305.0 480.0 C305.3 426.7 307.8 366.7 312.0 320.0 C316.2 273.3 320.7 220.0 330.0 200.0Z" fill="#9A875A" opacity="0.5" filter="url(#blur2)"/><path d="M935.0 90.0 C943.3 79.7 965.8 71.3 975.0 78.0 C984.2 84.7 991.7 101.3 990.0 130.0 C988.3 158.7 971.7 205.0 965.0 250.0 C958.3 295.0 953.3 341.7 950.0 400.0 C946.7 458.3 945.8 536.7 945.0 600.0 C944.2 663.3 944.2 730.0 945.0 780.0 C945.8 830.0 951.7 875.0 950.0 900.0 C948.3 925.0 940.8 930.0 935.0 930.0 C929.2 930.0 918.8 925.0 915.0 900.0 C911.2 875.0 912.0 830.0 912.0 780.0 C912.0 730.0 914.0 663.3 915.0 600.0 C916.0 536.7 916.3 458.3 918.0 400.0 C919.7 341.7 923.8 293.3 925.0 250.0 C926.2 206.7 923.3 166.7 925.0 140.0 C926.7 113.3 926.7 100.3 935.0 90.0Z" fill="#D8CAA0" stroke="#A8966A" stroke-width="3" stroke-linecap="round" stroke-linejoin="round" /><path d="M790.0 40.0 C802.5 28.3 840.3 30.0 870.0 30.0 C899.7 30.0 953.0 28.3 968.0 40.0 C983.0 51.7 966.3 73.3 960.0 100.0 C953.7 126.7 939.2 163.3 930.0 200.0 C920.8 236.7 910.0 273.3 905.0 320.0 C900.0 366.7 900.0 426.7 900.0 480.0 C900.0 533.3 903.3 590.0 905.0 640.0 C906.7 690.0 908.3 741.7 910.0 780.0 C911.7 818.3 921.7 853.3 915.0 870.0 C908.3 886.7 884.2 875.8 870.0 880.0 C855.8 884.2 840.8 896.7 830.0 895.0 C819.2 893.3 807.5 889.2 805.0 870.0 C802.5 850.8 810.0 818.3 815.0 780.0 C820.0 741.7 830.8 690.0 835.0 640.0 C839.2 590.0 840.0 533.3 840.0 480.0 C840.0 426.7 839.2 366.7 835.0 320.0 C830.8 273.3 821.7 236.7 815.0 200.0 C808.3 163.3 799.2 126.7 795.0 100.0 C790.8 73.3 777.5 51.7 790.0 40.0Z" fill="url(#gbg)" stroke="#A8966A" stroke-width="4" stroke-linecap="round" stroke-linejoin="round" /><path d="M835.0 200.0 C836.7 185.0 859.2 218.3 870.0 240.0 C880.8 261.7 895.3 290.0 900.0 330.0 C904.7 370.0 901.3 455.0 898.0 480.0 C894.7 505.0 886.3 505.0 880.0 480.0 C873.7 455.0 867.5 376.7 860.0 330.0 C852.5 283.3 833.3 215.0 835.0 200.0Z" fill="#9A875A" opacity="0.45" filter="url(#blur2)"/><path d="M870.0 480.0 C875.0 453.3 894.2 453.3 900.0 480.0 C905.8 506.7 903.3 590.0 905.0 640.0 C906.7 690.0 908.8 742.5 910.0 780.0 C911.2 817.5 917.0 850.0 912.0 865.0 C907.0 880.0 886.2 884.2 880.0 870.0 C873.8 855.8 876.7 818.3 875.0 780.0 C873.3 741.7 870.8 690.0 870.0 640.0 C869.2 590.0 865.0 506.7 870.0 480.0Z" fill="#9A875A" opacity="0.4" filter="url(#blur2)"/><rect x="462" y="268" width="248" height="258" fill="none" stroke="#8A98D0" stroke-width="3"/><path d="M195 383L462 383" stroke="#6A7AC0" stroke-width="3" fill="none" /><path d="M635.0 300.0 C648.7 300.0 673.8 360.8 680.0 380.0 C686.2 399.2 682.0 410.0 672.0 415.0 C662.0 420.0 632.3 415.8 620.0 410.0 C607.7 404.2 595.5 398.3 598.0 380.0 C600.5 361.7 621.3 300.0 635.0 300.0Z" fill="#EFE6C8" stroke="#A8966A" stroke-width="3" stroke-linecap="round" stroke-linejoin="round" /><path d="M635.0 345.0 C642.5 345.0 659.2 375.0 660.0 385.0 C660.8 395.0 647.5 405.0 640.0 405.0 C632.5 405.0 615.8 395.0 615.0 385.0 C614.2 375.0 627.5 345.0 635.0 345.0Z" fill="#9A8A62" /><circle cx="512" cy="440" r="32" fill="#F6F2E4" stroke="#aaa" stroke-width="2"/><circle cx="512" cy="440" r="16" fill="#A89868"/><path d="M535 425L600 395" stroke="#6A8AC0" stroke-width="4" fill="none" /><path d="M1160.0 250.0 C1168.3 236.7 1205.8 236.7 1215.0 250.0 C1224.2 263.3 1213.3 296.7 1215.0 330.0 C1216.7 363.3 1222.5 408.3 1225.0 450.0 C1227.5 491.7 1234.2 556.7 1230.0 580.0 C1225.8 603.3 1207.5 596.7 1200.0 590.0 C1192.5 583.3 1189.2 563.3 1185.0 540.0 C1180.8 516.7 1178.3 485.0 1175.0 450.0 C1171.7 415.0 1167.5 363.3 1165.0 330.0 C1162.5 296.7 1151.7 263.3 1160.0 250.0Z" fill="#D8CAA0" stroke="#A8966A" stroke-width="3" stroke-linecap="round" stroke-linejoin="round" /><path d="M1050.0 275.0 C1059.2 263.7 1083.3 262.0 1100.0 262.0 C1116.7 262.0 1140.0 260.3 1150.0 275.0 C1160.0 289.7 1155.0 320.8 1160.0 350.0 C1165.0 379.2 1174.2 421.7 1180.0 450.0 C1185.8 478.3 1195.0 501.7 1195.0 520.0 C1195.0 538.3 1194.2 556.7 1180.0 560.0 C1165.8 563.3 1132.5 537.5 1110.0 540.0 C1087.5 542.5 1061.3 574.2 1045.0 575.0 C1028.7 575.8 1018.7 560.8 1012.0 545.0 C1005.3 529.2 1002.0 504.2 1005.0 480.0 C1008.0 455.8 1023.3 425.0 1030.0 400.0 C1036.7 375.0 1041.7 350.8 1045.0 330.0 C1048.3 309.2 1040.8 286.3 1050.0 275.0Z" fill="url(#gbg)" stroke="#A8966A" stroke-width="4" stroke-linecap="round" stroke-linejoin="round" /><path d="M1062.0 280.0 C1062.0 273.3 1087.0 271.7 1100.0 272.0 C1113.0 272.3 1140.0 275.3 1140.0 282.0 C1140.0 288.7 1113.0 312.3 1100.0 312.0 C1087.0 311.7 1062.0 286.7 1062.0 280.0Z" fill="#F6F0DC" stroke="#A8966A" stroke-width="3" stroke-linecap="round" stroke-linejoin="round" /><path d="M1035.0 530.0 C1044.2 520.0 1077.5 514.2 1100.0 510.0 C1122.5 505.8 1156.7 501.7 1170.0 505.0 C1183.3 508.3 1190.0 523.3 1180.0 530.0 C1170.0 536.7 1132.5 538.3 1110.0 545.0 C1087.5 551.7 1057.5 572.5 1045.0 570.0 C1032.5 567.5 1025.8 540.0 1035.0 530.0Z" fill="#C0CCC8" /><path d="M1130.0 330.0 C1131.7 318.3 1151.7 330.0 1160.0 350.0 C1168.3 370.0 1174.2 421.7 1180.0 450.0 C1185.8 478.3 1198.3 510.0 1195.0 520.0 C1191.7 530.0 1167.5 526.7 1160.0 510.0 C1152.5 493.3 1155.0 450.0 1150.0 420.0 C1145.0 390.0 1128.3 341.7 1130.0 330.0Z" fill="#9A875A" opacity="0.4" filter="url(#blur2)"/><path d="M125 38H140" stroke="#5a5a5a" stroke-width="7" stroke-dasharray="14 4 22 5 9 4" opacity=".75"/><path d="M750 38H765" stroke="#5a5a5a" stroke-width="7" stroke-dasharray="14 4 22 5 9 4" opacity=".75"/><path d="M445 108H560" stroke="#5a5a5a" stroke-width="7" stroke-dasharray="14 4 22 5 9 4" opacity=".75"/><path d="M462 133H560" stroke="#5a5a5a" stroke-width="7" stroke-dasharray="14 4 22 5 9 4" opacity=".75"/><path d="M575 166H708" stroke="#5a5a5a" stroke-width="7" stroke-dasharray="14 4 22 5 9 4" opacity=".75"/><path d="M422 195H535" stroke="#5a5a5a" stroke-width="7" stroke-dasharray="14 4 22 5 9 4" opacity=".75"/><path d="M482 220H535" stroke="#5a5a5a" stroke-width="7" stroke-dasharray="14 4 22 5 9 4" opacity=".75"/><path d="M638 195H705" stroke="#5a5a5a" stroke-width="7" stroke-dasharray="14 4 22 5 9 4" opacity=".75"/><path d="M642 220H692" stroke="#5a5a5a" stroke-width="7" stroke-dasharray="14 4 22 5 9 4" opacity=".75"/><path d="M465 248H478" stroke="#5a5a5a" stroke-width="7" stroke-dasharray="14 4 22 5 9 4" opacity=".75"/><path d="M1022 248H1038" stroke="#5a5a5a" stroke-width="7" stroke-dasharray="14 4 22 5 9 4" opacity=".75"/><path d="M135 266H205" stroke="#5a5a5a" stroke-width="7" stroke-dasharray="14 4 22 5 9 4" opacity=".75"/><path d="M148 291H205" stroke="#5a5a5a" stroke-width="7" stroke-dasharray="14 4 22 5 9 4" opacity=".75"/><path d="M368 275H435" stroke="#5a5a5a" stroke-width="7" stroke-dasharray="14 4 22 5 9 4" opacity=".75"/><path d="M375 300H435" stroke="#5a5a5a" stroke-width="7" stroke-dasharray="14 4 22 5 9 4" opacity=".75"/><path d="M95 329H205" stroke="#5a5a5a" stroke-width="7" stroke-dasharray="14 4 22 5 9 4" opacity=".75"/><path d="M150 354H205" stroke="#5a5a5a" stroke-width="7" stroke-dasharray="14 4 22 5 9 4" opacity=".75"/><path d="M368 334H435" stroke="#5a5a5a" stroke-width="7" stroke-dasharray="14 4 22 5 9 4" opacity=".75"/><path d="M380 359H435" stroke="#5a5a5a" stroke-width="7" stroke-dasharray="14 4 22 5 9 4" opacity=".75"/><path d="M660 317H692" stroke="#5a5a5a" stroke-width="7" stroke-dasharray="14 4 22 5 9 4" opacity=".75"/><path d="M732 358H792" stroke="#5a5a5a" stroke-width="7" stroke-dasharray="14 4 22 5 9 4" opacity=".75"/><path d="M732 383H795" stroke="#5a5a5a" stroke-width="7" stroke-dasharray="14 4 22 5 9 4" opacity=".75"/><path d="M375 432H435" stroke="#5a5a5a" stroke-width="7" stroke-dasharray="14 4 22 5 9 4" opacity=".75"/><path d="M372 457H435" stroke="#5a5a5a" stroke-width="7" stroke-dasharray="14 4 22 5 9 4" opacity=".75"/><path d="M732 425H790" stroke="#5a5a5a" stroke-width="7" stroke-dasharray="14 4 22 5 9 4" opacity=".75"/><path d="M732 450H790" stroke="#5a5a5a" stroke-width="7" stroke-dasharray="14 4 22 5 9 4" opacity=".75"/><path d="M498 495H540" stroke="#5a5a5a" stroke-width="7" stroke-dasharray="14 4 22 5 9 4" opacity=".75"/><path d="M428 574H505" stroke="#5a5a5a" stroke-width="7" stroke-dasharray="14 4 22 5 9 4" opacity=".75"/><path d="M450 599H505" stroke="#5a5a5a" stroke-width="7" stroke-dasharray="14 4 22 5 9 4" opacity=".75"/><path d="M640 574H795" stroke="#5a5a5a" stroke-width="7" stroke-dasharray="14 4 22 5 9 4" opacity=".75"/><path d="M592 607H768" stroke="#5a5a5a" stroke-width="7" stroke-dasharray="14 4 22 5 9 4" opacity=".75"/><path d="M568 647H675" stroke="#5a5a5a" stroke-width="7" stroke-dasharray="14 4 22 5 9 4" opacity=".75"/><path d="M545 685H700" stroke="#5a5a5a" stroke-width="7" stroke-dasharray="14 4 22 5 9 4" opacity=".75"/><path d="M1132 148H1328" stroke="#5a5a5a" stroke-width="7" stroke-dasharray="14 4 22 5 9 4" opacity=".75"/><path d="M1152 172H1305" stroke="#5a5a5a" stroke-width="7" stroke-dasharray="14 4 22 5 9 4" opacity=".75"/><path d="M1132 197H1325" stroke="#5a5a5a" stroke-width="7" stroke-dasharray="14 4 22 5 9 4" opacity=".75"/><path d="M1210 617H1335" stroke="#5a5a5a" stroke-width="7" stroke-dasharray="14 4 22 5 9 4" opacity=".75"/><path d="M1240 642H1305" stroke="#5a5a5a" stroke-width="7" stroke-dasharray="14 4 22 5 9 4" opacity=".75"/><path d="M992 688H1228" stroke="#5a5a5a" stroke-width="7" stroke-dasharray="14 4 22 5 9 4" opacity=".75"/><path d="M518 862H668" stroke="#5a5a5a" stroke-width="7" stroke-dasharray="14 4 22 5 9 4" opacity=".75"/><path d="M148 896H205" stroke="#5a5a5a" stroke-width="7" stroke-dasharray="14 4 22 5 9 4" opacity=".75"/><path d="M122 921H208" stroke="#5a5a5a" stroke-width="7" stroke-dasharray="14 4 22 5 9 4" opacity=".75"/><path d="M1025 898H1175" stroke="#5a5a5a" stroke-width="7" stroke-dasharray="14 4 22 5 9 4" opacity=".75"/><path d="M595 914H780" stroke="#5a5a5a" stroke-width="7" stroke-dasharray="14 4 22 5 9 4" opacity=".75"/><path d="M568 940H780" stroke="#5a5a5a" stroke-width="7" stroke-dasharray="14 4 22 5 9 4" opacity=".75"/><path d="M695 982H835" stroke="#5a5a5a" stroke-width="7" stroke-dasharray="14 4 22 5 9 4" opacity=".75"/><path d="M925 982H1160" stroke="#5a5a5a" stroke-width="7" stroke-dasharray="14 4 22 5 9 4" opacity=".75"/><path d="M925 1005H1100" stroke="#5a5a5a" stroke-width="7" stroke-dasharray="14 4 22 5 9 4" opacity=".75"/><path d="M208 266L305 266" stroke="#888" stroke-width="2" fill="none" /><path d="M212 329L285 329" stroke="#888" stroke-width="2" fill="none" /><path d="M548 140L548 400" stroke="#888" stroke-width="2" fill="none" /><path d="M575 175L575 330" stroke="#888" stroke-width="2" fill="none" /><path d="M530 225L530 410" stroke="#888" stroke-width="2" fill="none" /><path d="M635 230L635 300" stroke="#888" stroke-width="2" fill="none" /><path d="M440 280L520 280" stroke="#888" stroke-width="2" fill="none" /><path d="M520 280L520 410" stroke="#888" stroke-width="2" fill="none" /><path d="M440 340L512 340" stroke="#888" stroke-width="2" fill="none" /><path d="M512 340L512 408" stroke="#888" stroke-width="2" fill="none" /><path d="M440 432L482 432" stroke="#888" stroke-width="2" fill="none" /><path d="M725 358L682 358" stroke="#888" stroke-width="2" fill="none" /><path d="M725 425L675 412" stroke="#888" stroke-width="2" fill="none" /><path d="M492 475L492 560" stroke="#888" stroke-width="2" fill="none" /><path d="M648 415L648 560" stroke="#888" stroke-width="2" fill="none" /><path d="M598 412L598 595" stroke="#888" stroke-width="2" fill="none" /><path d="M575 460L575 635" stroke="#888" stroke-width="2" fill="none" /><path d="M552 455L552 672" stroke="#888" stroke-width="2" fill="none" /><path d="M1238 205L1238 450" stroke="#888" stroke-width="2" fill="none" /><path d="M1238 450L1185 450" stroke="#888" stroke-width="2" fill="none" /><path d="M1270 475L1270 600" stroke="#888" stroke-width="2" fill="none" /><path d="M1270 475L1200 475" stroke="#888" stroke-width="2" fill="none" /><path d="M1055 590L1055 620" stroke="#888" stroke-width="2" fill="none" /><path d="M1165 590L1165 620" stroke="#888" stroke-width="2" fill="none" /><path d="M1055 620L1165 620" stroke="#888" stroke-width="2" fill="none" /><path d="M1112 550L1112 675" stroke="#888" stroke-width="2" fill="none" /><path d="M395 862L510 862" stroke="#888" stroke-width="2" fill="none" /><path d="M675 862L800 862" stroke="#888" stroke-width="2" fill="none" /><path d="M212 896L240 896" stroke="#888" stroke-width="2" fill="none" /><path d="M1020 898L955 898" stroke="#888" stroke-width="2" fill="none" /><path d="M785 914L835 914" stroke="#888" stroke-width="2" fill="none" /><path d="M835 914L835 890" stroke="#888" stroke-width="2" fill="none" /><path d="M840 982L875 982" stroke="#888" stroke-width="2" fill="none" /><path d="M875 982L910 915" stroke="#888" stroke-width="2" fill="none" /><path d="M935 935L935 970" stroke="#888" stroke-width="2" fill="none" /></g></svg></div>
<div class="th" style="left:1508px;top:862px"><svg width="198" height="149" viewBox="0 0 198 149"><g transform="translate(-1 -1) scale(0.13986)" filter="url(#blur1)"><path d="M605 75 L600 235 L625 440" fill="none" stroke="#A8986C" stroke-width="47" stroke-linecap="round" stroke-linejoin="round"/><path d="M605 75 L600 235 L625 440" fill="none" stroke="url(#gbg)" stroke-width="42" stroke-linecap="round" stroke-linejoin="round"/><path d="M688 85 L680 235 L690 450" fill="none" stroke="#A8986C" stroke-width="29" stroke-linecap="round" stroke-linejoin="round"/><path d="M688 85 L680 235 L690 450" fill="none" stroke="url(#gbg)" stroke-width="24" stroke-linecap="round" stroke-linejoin="round"/><path d="M742 130 L730 250 L725 455" fill="none" stroke="#A8986C" stroke-width="27" stroke-linecap="round" stroke-linejoin="round"/><path d="M742 130 L730 250 L725 455" fill="none" stroke="url(#gbg)" stroke-width="22" stroke-linecap="round" stroke-linejoin="round"/><path d="M782 175 L772 280 L762 470" fill="none" stroke="#A8986C" stroke-width="27" stroke-linecap="round" stroke-linejoin="round"/><path d="M782 175 L772 280 L762 470" fill="none" stroke="url(#gbg)" stroke-width="22" stroke-linecap="round" stroke-linejoin="round"/><path d="M822 225 L818 320 L798 480" fill="none" stroke="#A8986C" stroke-width="27" stroke-linecap="round" stroke-linejoin="round"/><path d="M822 225 L818 320 L798 480" fill="none" stroke="url(#gbg)" stroke-width="22" stroke-linecap="round" stroke-linejoin="round"/><ellipse cx="600" cy="235" rx="25.0" ry="6" fill="#A8B8C8"/><ellipse cx="680" cy="235" rx="15.0" ry="6" fill="#A8B8C8"/><ellipse cx="818" cy="320" rx="13.0" ry="6" fill="#A8B8C8"/><ellipse cx="600" cy="130" rx="20.0" ry="6" fill="#A8B8C8"/><path d="M600.0 440.0 C614.2 431.7 653.3 445.0 680.0 450.0 C706.7 455.0 737.5 465.0 760.0 470.0 C782.5 475.0 805.0 470.0 815.0 480.0 C825.0 490.0 825.8 513.3 820.0 530.0 C814.2 546.7 790.0 561.7 780.0 580.0 C770.0 598.3 761.7 616.7 760.0 640.0 C758.3 663.3 770.8 693.3 770.0 720.0 C769.2 746.7 766.7 783.3 755.0 800.0 C743.3 816.7 714.5 823.3 700.0 820.0 C685.5 816.7 669.7 793.3 668.0 780.0 C666.3 766.7 694.7 746.7 690.0 740.0 C685.3 733.3 652.5 753.3 640.0 740.0 C627.5 726.7 621.7 686.7 615.0 660.0 C608.3 633.3 603.3 606.7 600.0 580.0 C596.7 553.3 595.0 523.3 595.0 500.0 C595.0 476.7 585.8 448.3 600.0 440.0Z" fill="url(#gbg)" stroke="#A8986C" stroke-width="4" stroke-linecap="round" stroke-linejoin="round" /><path d="M640.0 470.0 C656.7 451.7 696.7 461.7 720.0 470.0 C743.3 478.3 776.7 498.3 780.0 520.0 C783.3 541.7 756.7 583.3 740.0 600.0 C723.3 616.7 700.0 623.3 680.0 620.0 C660.0 616.7 626.7 605.0 620.0 580.0 C613.3 555.0 623.3 488.3 640.0 470.0Z" fill="#9A875A" opacity="0.35" filter="url(#blur2)"/><path d="M615.0 640.0 C628.3 630.8 679.2 636.7 700.0 645.0 C720.8 653.3 740.0 674.2 740.0 690.0 C740.0 705.8 716.7 730.3 700.0 740.0 C683.3 749.7 653.3 754.7 640.0 748.0 C626.7 741.3 624.2 718.0 620.0 700.0 C615.8 682.0 601.7 649.2 615.0 640.0Z" fill="#C4C6C8" stroke="#909498" stroke-width="3" stroke-linecap="round" stroke-linejoin="round" /><path d="M600 520L800 520" stroke="#A8986C" stroke-width="3" fill="none" /><path d="M620 560L760 590" stroke="#A8986C" stroke-width="3" fill="none" /><path d="M650 450L640 520" stroke="#A8986C" stroke-width="3" fill="none" /><path d="M710 455L700 520" stroke="#A8986C" stroke-width="3" fill="none" /><path d="M265.0 840.0 C270.8 825.0 286.7 816.7 300.0 810.0 C313.3 803.3 331.7 803.3 345.0 800.0 C358.3 796.7 364.2 795.0 380.0 790.0 C395.8 785.0 420.0 772.5 440.0 770.0 C460.0 767.5 480.0 768.3 500.0 775.0 C520.0 781.7 536.7 797.5 560.0 810.0 C583.3 822.5 613.3 838.3 640.0 850.0 C666.7 861.7 693.3 872.5 720.0 880.0 C746.7 887.5 778.3 890.8 800.0 895.0 C821.7 899.2 842.5 900.0 850.0 905.0 C857.5 910.0 856.7 920.0 845.0 925.0 C833.3 930.0 804.2 933.3 780.0 935.0 C755.8 936.7 726.7 936.7 700.0 935.0 C673.3 933.3 646.7 930.8 620.0 925.0 C593.3 919.2 565.0 905.8 540.0 900.0 C515.0 894.2 493.3 893.3 470.0 890.0 C446.7 886.7 418.3 878.3 400.0 880.0 C381.7 881.7 376.7 892.5 360.0 900.0 C343.3 907.5 315.8 925.0 300.0 925.0 C284.2 925.0 270.8 914.2 265.0 900.0 C259.2 885.8 259.2 855.0 265.0 840.0Z" fill="url(#gbg)" stroke="#A8986C" stroke-width="4" stroke-linecap="round" stroke-linejoin="round" /><path d="M340.0 790.0 C340.0 780.5 350.0 757.7 360.0 748.0 C370.0 738.3 386.7 732.0 400.0 732.0 C413.3 732.0 434.2 738.3 440.0 748.0 C445.8 757.7 441.7 779.7 435.0 790.0 C428.3 800.3 412.5 807.5 400.0 810.0 C387.5 812.5 370.0 808.3 360.0 805.0 C350.0 801.7 340.0 799.5 340.0 790.0Z" fill="#BEC0C2" stroke="#909498" stroke-width="3" stroke-linecap="round" stroke-linejoin="round" /><path d="M440.0 800.0 C448.3 790.0 493.3 810.0 520.0 820.0 C546.7 830.0 570.0 846.7 600.0 860.0 C630.0 873.3 693.3 890.8 700.0 900.0 C706.7 909.2 666.7 916.7 640.0 915.0 C613.3 913.3 568.3 895.8 540.0 890.0 C511.7 884.2 486.7 895.0 470.0 880.0 C453.3 865.0 431.7 810.0 440.0 800.0Z" fill="#9A875A" opacity="0.35" filter="url(#blur2)"/><path d="M460 780L450 885" stroke="#A8986C" stroke-width="3" fill="none" /><path d="M510 790L495 895" stroke="#A8986C" stroke-width="3" fill="none" /><path d="M560 815L640 930" stroke="#A8986C" stroke-width="3" fill="none" /><path d="M590 840L720 935" stroke="#A8986C" stroke-width="3" fill="none" /><path d="M438 70H448" stroke="#6a6a6a" stroke-width="6" stroke-dasharray="14 4 22 5 9 4" opacity=".75"/><path d="M888 90H930" stroke="#6a6a6a" stroke-width="6" stroke-dasharray="14 4 22 5 9 4" opacity=".75"/><path d="M888 122H935" stroke="#6a6a6a" stroke-width="6" stroke-dasharray="14 4 22 5 9 4" opacity=".75"/><path d="M888 155H948" stroke="#6a6a6a" stroke-width="6" stroke-dasharray="14 4 22 5 9 4" opacity=".75"/><path d="M432 145H500" stroke="#6a6a6a" stroke-width="6" stroke-dasharray="14 4 22 5 9 4" opacity=".75"/><path d="M422 342H500" stroke="#6a6a6a" stroke-width="6" stroke-dasharray="14 4 22 5 9 4" opacity=".75"/><path d="M848 477H890" stroke="#6a6a6a" stroke-width="6" stroke-dasharray="14 4 22 5 9 4" opacity=".75"/><path d="M848 495H920" stroke="#6a6a6a" stroke-width="6" stroke-dasharray="14 4 22 5 9 4" opacity=".75"/><path d="M848 513H890" stroke="#6a6a6a" stroke-width="6" stroke-dasharray="14 4 22 5 9 4" opacity=".75"/><path d="M945 497H1020" stroke="#6a6a6a" stroke-width="6" stroke-dasharray="14 4 22 5 9 4" opacity=".75"/><path d="M1062 527H1150" stroke="#6a6a6a" stroke-width="6" stroke-dasharray="14 4 22 5 9 4" opacity=".75"/><path d="M1068 547H1172" stroke="#6a6a6a" stroke-width="6" stroke-dasharray="14 4 22 5 9 4" opacity=".75"/><path d="M322 535H412" stroke="#6a6a6a" stroke-width="6" stroke-dasharray="14 4 22 5 9 4" opacity=".75"/><path d="M332 553H412" stroke="#6a6a6a" stroke-width="6" stroke-dasharray="14 4 22 5 9 4" opacity=".75"/><path d="M480 546H542" stroke="#6a6a6a" stroke-width="6" stroke-dasharray="14 4 22 5 9 4" opacity=".75"/><path d="M850 575H898" stroke="#6a6a6a" stroke-width="6" stroke-dasharray="14 4 22 5 9 4" opacity=".75"/><path d="M352 603H542" stroke="#6a6a6a" stroke-width="6" stroke-dasharray="14 4 22 5 9 4" opacity=".75"/><path d="M848 698H885" stroke="#6a6a6a" stroke-width="6" stroke-dasharray="14 4 22 5 9 4" opacity=".75"/><path d="M975 745H1085" stroke="#6a6a6a" stroke-width="6" stroke-dasharray="14 4 22 5 9 4" opacity=".75"/><path d="M975 765H1082" stroke="#6a6a6a" stroke-width="6" stroke-dasharray="14 4 22 5 9 4" opacity=".75"/><path d="M848 795H920" stroke="#6a6a6a" stroke-width="6" stroke-dasharray="14 4 22 5 9 4" opacity=".75"/><path d="M288 672H298" stroke="#6a6a6a" stroke-width="6" stroke-dasharray="14 4 22 5 9 4" opacity=".75"/><path d="M368 674H402" stroke="#6a6a6a" stroke-width="6" stroke-dasharray="14 4 22 5 9 4" opacity=".75"/><path d="M465 674H540" stroke="#6a6a6a" stroke-width="6" stroke-dasharray="14 4 22 5 9 4" opacity=".75"/><path d="M438 705H500" stroke="#6a6a6a" stroke-width="6" stroke-dasharray="14 4 22 5 9 4" opacity=".75"/><path d="M325 950H430" stroke="#6a6a6a" stroke-width="6" stroke-dasharray="14 4 22 5 9 4" opacity=".75"/><path d="M482 950H530" stroke="#6a6a6a" stroke-width="6" stroke-dasharray="14 4 22 5 9 4" opacity=".75"/><path d="M298 984H365" stroke="#6a6a6a" stroke-width="6" stroke-dasharray="14 4 22 5 9 4" opacity=".75"/><path d="M460 984H505" stroke="#6a6a6a" stroke-width="6" stroke-dasharray="14 4 22 5 9 4" opacity=".75"/><path d="M322 535H412" stroke="#222" stroke-width="7" stroke-dasharray="14 4 22 5 9 4" opacity=".75"/><path d="M332 553H412" stroke="#222" stroke-width="7" stroke-dasharray="14 4 22 5 9 4" opacity=".75"/><path d="M1062 527H1150" stroke="#222" stroke-width="7" stroke-dasharray="14 4 22 5 9 4" opacity=".75"/><path d="M1068 547H1172" stroke="#222" stroke-width="7" stroke-dasharray="14 4 22 5 9 4" opacity=".75"/><path d="M975 745H1085" stroke="#222" stroke-width="7" stroke-dasharray="14 4 22 5 9 4" opacity=".75"/><path d="M975 765H1082" stroke="#222" stroke-width="7" stroke-dasharray="14 4 22 5 9 4" opacity=".75"/><path d="M520 60L520 240" stroke="#999" stroke-width="2" fill="none" /><path d="M520 60L585 60" stroke="#999" stroke-width="2" fill="none" /><path d="M520 250L520 448" stroke="#999" stroke-width="2" fill="none" /><path d="M520 448L585 448" stroke="#999" stroke-width="2" fill="none" /><path d="M520 240L560 240" stroke="#999" stroke-width="2" fill="none" /><path d="M505 145L520 145" stroke="#999" stroke-width="2" fill="none" /><path d="M505 342L520 342" stroke="#999" stroke-width="2" fill="none" /><path d="M882 90L770 90" stroke="#999" stroke-width="2" fill="none" /><path d="M770 90L745 120" stroke="#999" stroke-width="2" fill="none" /><path d="M882 122L760 122" stroke="#999" stroke-width="2" fill="none" /><path d="M882 155L775 155" stroke="#999" stroke-width="2" fill="none" /><path d="M700 477L842 477" stroke="#999" stroke-width="2" fill="none" /><path d="M680 495L842 495" stroke="#999" stroke-width="2" fill="none" /><path d="M720 513L842 513" stroke="#999" stroke-width="2" fill="none" /><path d="M895 477L925 477" stroke="#999" stroke-width="2" fill="none" /><path d="M925 477L925 520" stroke="#999" stroke-width="2" fill="none" /><path d="M925 520L895 520" stroke="#999" stroke-width="2" fill="none" /><path d="M925 497L940 497" stroke="#999" stroke-width="2" fill="none" /><path d="M1020 497L1050 497" stroke="#999" stroke-width="2" fill="none" /><path d="M1050 497L1050 575" stroke="#999" stroke-width="2" fill="none" /><path d="M1050 575L900 575" stroke="#999" stroke-width="2" fill="none" /><path d="M1050 537L1058 537" stroke="#999" stroke-width="2" fill="none" /><path d="M420 545L475 545" stroke="#999" stroke-width="2" fill="none" /><path d="M545 546L600 546" stroke="#999" stroke-width="2" fill="none" /><path d="M780 575L845 575" stroke="#999" stroke-width="2" fill="none" /><path d="M545 603L590 603" stroke="#999" stroke-width="2" fill="none" /><path d="M590 603L600 585" stroke="#999" stroke-width="2" fill="none" /><path d="M760 698L842 698" stroke="#999" stroke-width="2" fill="none" /><path d="M890 698L955 698" stroke="#999" stroke-width="2" fill="none" /><path d="M955 698L955 795" stroke="#999" stroke-width="2" fill="none" /><path d="M955 795L925 795" stroke="#999" stroke-width="2" fill="none" /><path d="M955 755L970 755" stroke="#999" stroke-width="2" fill="none" /><path d="M760 795L842 795" stroke="#999" stroke-width="2" fill="none" /><path d="M402 685L402 735" stroke="#999" stroke-width="2" fill="none" /><path d="M500 715L500 770" stroke="#999" stroke-width="2" fill="none" /><path d="M540 685L540 790" stroke="#999" stroke-width="2" fill="none" /><path d="M380 885L380 940" stroke="#999" stroke-width="2" fill="none" /><path d="M490 895L490 940" stroke="#999" stroke-width="2" fill="none" /><path d="M302 920L302 975" stroke="#999" stroke-width="2" fill="none" /><path d="M462 890L462 975" stroke="#999" stroke-width="2" fill="none" /><text x="395" y="1012" font-size="22" textLength="645" lengthAdjust="spacingAndGlyphs" fill="#222" font-family="Liberation Sans" font-weight="bold" >© Elsevier. Drake et al: Gray's Anatomy for Students - www.studentconsult.com</text></g></svg></div>
<div class="a" style="left:0px;top:0px;width:1920px;height:81px;background:#B7472A"></div>
<svg class="a" style="left:26px;top:11px;" width="18" height="18"><rect x="1.7" y="1.8" width="14.6" height="14.6" fill="none" stroke="#fff" stroke-width="1.7"/><path d="M2.5 9.6h13" stroke="#fff" stroke-width="1.4"/><rect x="4.3" y="10.3" width="9.4" height="6" fill="#fff"/><rect x="6.3" y="12.2" width="5.4" height="4.3" fill="#B7472A"/><rect x="7.8" y="13.3" width="2.6" height="3.2" fill="#fff"/></svg>
<svg class="a" style="left:60px;top:11px;" width="20" height="19"><path d="M2 7.2 H12.5 a4.3 4.3 0 0 1 0 8.6 H11" fill="none" stroke="#DC9480" stroke-width="2.2"/><path d="M6.5 2.2 L1.5 7.2 L6.5 12.2" fill="none" stroke="#DC9480" stroke-width="2.2"/></svg>
<svg class="a" style="left:88.2px;top:17.1px" width="7.5" height="4.8"><path d="M1 1 L3.75 3.8 L6.5 1" fill="none" stroke="#DC8068" stroke-width="1.3"/></svg>
<svg class="a" style="left:108px;top:10px;" width="22" height="20"><path d="M13.5 3.6 A7 7 0 1 1 6.5 3.6" fill="none" stroke="#D08671" stroke-width="2.3"/><path d="M10.3 9.5V2.5 M10.3 2.5 L15.5 2" fill="none" stroke="#D08671" stroke-width="2.3"/></svg>
<svg class="a" style="left:142px;top:10px;" width="22" height="20"><path d="M.8 1.6h19" stroke="#fff" stroke-width="1.7"/><path d="M2.8 2v10.300h8 M18 2v3" stroke="#fff" stroke-width="1.5" fill="none"/><path d="M5 5.500h6 M5 8h4" stroke="#fff" stroke-width="1.2"/><path d="M8.500 12.500l-2.800 5.500h10l-2.800-5.500" fill="#fff"/><path d="M5 18.500h11" stroke="#fff" stroke-width="1.4"/><circle cx="16" cy="9.500" r="4.700" fill="#B7472A" stroke="#fff" stroke-width="1.200"/><path d="M14.500 7v5l4-2.500z" fill="#fff"/></svg>
<svg class="a" style="left:184px;top:18px;" width="8" height="8"><path d="M1 1.600h5.400" stroke="#fff" stroke-width="1.200"/><path d="M.8 3.800h5.800l-2.900 3.200z" fill="#fff"/></svg>
<span class="t" style="left:781.39px;top:11.96px;font-size:16px;color:#fff;transform:scaleX(0.9496);">general anatomy [Compatibility Mode]  -  PowerPoint</span>
<div class="a" style="left:1615px;top:8px;width:67px;height:23px;background:#fff;border-radius:2px"></div>
<span class="t" style="left:1625.63px;top:11.96px;font-size:16px;color:#B7472A;transform:scaleX(0.9364);">Sign in</span>
<svg class="a" style="left:1710px;top:11px;" width="20" height="16"><rect x="1.6" y="1.6" width="15.5" height="12" fill="none" stroke="#fff" stroke-width="1.3"/><path d="M1.6 4.2h15.5" stroke="#fff" stroke-width="1.3"/><path d="M9.3 12v-5.5 M6.8 8.8l2.5-2.5 2.5 2.5" fill="none" stroke="#fff" stroke-width="1.3"/></svg>
<div class="a" style="left:1770.5px;top:19px;width:13px;height:1.4px;background:#fff"></div>
<svg class="a" style="left:1826px;top:11px;" width="16" height="16"><rect x="1.7" y="4.3" width="9.6" height="9.6" fill="none" stroke="#fff" stroke-width="1.3" rx="1"/><path d="M4.5 4 v-1.6 a1 1 0 0 1 1-1 h7.7 a1 1 0 0 1 1 1 v7.7 a1 1 0 0 1 -1 1 h-1.7" fill="none" stroke="#fff" stroke-width="1.3"/></svg>
<svg class="a" style="left:1884px;top:12px;" width="15" height="15"><path d="M1.3 1.3 L13.3 13.3 M13.3 1.3 L1.3 13.3" stroke="#fff" stroke-width="1.4"/></svg>
<div class="a" style="left:76px;top:43px;width:66px;height:38px;background:#F3F3F3"></div>
<span class="t" style="left:23.79px;top:53.96px;font-size:16px;color:#fff;transform:scaleX(0.9454);">File</span>
<span class="t" style="left:86.72px;top:53.96px;font-size:16px;color:#B7472A;transform:scaleX(1.0007);">Home</span>
<span class="t" style="left:154.91px;top:53.96px;font-size:16px;color:#fff;transform:scaleX(0.9291);">Insert</span>
<span class="t" style="left:218.03px;top:53.96px;font-size:16px;color:#fff;transform:scaleX(0.9522);">Design</span>
<span class="t" style="left:291.71px;top:53.96px;font-size:16px;color:#fff;transform:scaleX(0.9087);">Transitions</span>
<span class="t" style="left:389.25px;top:53.96px;font-size:16px;color:#fff;transform:scaleX(0.9478);">Animations</span>
<span class="t" style="left:490.59px;top:53.96px;font-size:16px;color:#fff;transform:scaleX(0.9136);">Slide Show</span>
<span class="t" style="left:590.08px;top:53.96px;font-size:16px;color:#fff;transform:scaleX(0.9124);">Review</span>
<span class="t" style="left:664.96px;top:53.96px;font-size:16px;color:#fff;transform:scaleX(0.9157);">View</span>
<span class="t" style="left:723.04px;top:53.96px;font-size:16px;color:#fff;transform:scaleX(0.9485);">Recording</span>
<span class="t" style="left:817.96px;top:53.96px;font-size:16px;color:#fff;transform:scaleX(1.0094);">Help</span>
<span class="t" style="left:915.19px;top:53.96px;font-size:16px;color:#fff;transform:scaleX(0.9581);">Tell me what you want to do</span>
<svg class="a" style="left:882px;top:51px;" width="18" height="23"><path d="M9 1.8 a6.2 6.2 0 0 1 3.6 11.3 c-.7.6-1 1.4-1 2.4 h-5.2 c0-1-.3-1.8-1-2.4 A6.2 6.2 0 0 1 9 1.8z" fill="none" stroke="#fff" stroke-width="1.4"/><path d="M6.4 17.8h5.2 M7 20.3h4" stroke="#fff" stroke-width="1.4"/></svg>
<svg class="a" style="left:1832px;top:53px;" width="20" height="21"><circle cx="8.5" cy="6" r="4.3" fill="none" stroke="#fff" stroke-width="1.4"/><path d="M1 19 c.6-5 3.4-7.6 7.5-7.6 c1.6 0 3 .4 4.2 1.3" fill="none" stroke="#fff" stroke-width="1.4"/><path d="M14.5 12.5v7 M11 16h7" stroke="#fff" stroke-width="1.4"/></svg>
<span class="t" style="left:1854.87px;top:55.96px;font-size:16px;color:#fff;transform:scaleX(0.8721);">Share</span>
<div class="a" style="left:0px;top:81px;width:1920px;height:114px;background:#F3F3F3"></div>
<div class="a" style="left:0px;top:195px;width:1920px;height:1px;background:#C8C8C8"></div>
<div class="a" style="left:0px;top:196px;width:1920px;height:1px;background:#DCDCDC"></div>
<div class="a" style="left:204px;top:86px;width:1px;height:104px;background:#C8C8C8"></div>
<div class="a" style="left:376px;top:86px;width:1px;height:104px;background:#C8C8C8"></div>
<div class="a" style="left:745px;top:86px;width:1px;height:104px;background:#C8C8C8"></div>
<div class="a" style="left:1206px;top:86px;width:1px;height:104px;background:#C8C8C8"></div>
<div class="a" style="left:1652px;top:86px;width:1px;height:104px;background:#C8C8C8"></div>
<div class="a" style="left:1782px;top:86px;width:1px;height:104px;background:#C8C8C8"></div>
<svg class="a" style="left:21px;top:88px;" width="36" height="41"><rect x="1" y="6" width="26.8" height="31" rx="1.5" fill="#D6D2D6"/><rect x="6" y="4.6" width="16.8" height="4.8" fill="#B4B2B4"/><rect x="11.4" y="1.8" width="6.4" height="4" rx=".8" fill="#B4B2B4"/><rect x="13.4" y="3" width="2.4" height="2.400" fill="#F3F3F3"/><path d="M20.300 20.300h9.200l5.200 5.200v14.200h-14.400z" fill="#F6F1F6" stroke="#BDBDBD" stroke-width="1"/><path d="M29.500 20.300v5.200h5.200" fill="none" stroke="#BDBDBD" stroke-width="1"/></svg>
<span class="t" style="left:18.31px;top:132.70px;font-size:15px;color:#A8A8A8;transform:scaleX(0.9072);">Paste</span>
<svg class="a" style="left:32.5px;top:157.2px" width="7" height="4.5"><path d="M1 1 L3.5 3.5 L6 1" fill="none" stroke="#B0B0B0" stroke-width="1.1"/></svg>
<svg class="a" style="left:66px;top:88px;" width="18" height="20"><path d="M4 1 C5 5 7 9 11.500 13 L10 14 C7 10.500 5 6 4 1z M14 1 C13 5 11 9 6.500 13 L8 14 C11 10.500 13 6 14 1z" fill="#6a6a6a" stroke="#6a6a6a" stroke-width=".6"/><circle cx="4.3" cy="16" r="2.8" fill="none" stroke="#3A78C2" stroke-width="1.4"/><circle cx="13.7" cy="16" r="2.8" fill="none" stroke="#3A78C2" stroke-width="1.4"/></svg>
<span class="t" style="left:89.27px;top:90.48px;font-size:15.5px;color:#262626;transform:scaleX(0.9419);">Cut</span>
<svg class="a" style="left:66px;top:117px;" width="19" height="20"><path d="M1.5 1.5h6.5l3 3v9.5h-9.5z" fill="#fff" stroke="#666" stroke-width="1"/><path d="M3.5 6h5 M3.5 8.5h5 M3.5 11h3" stroke="#3A78C2" stroke-width="1"/><path d="M7.5 6.5h6.5l3.5 3.5v8.5h-10z" fill="#fff" stroke="#666" stroke-width="1"/><path d="M9.5 11.5h6 M9.5 14h6 M9.5 16.5h6" stroke="#3A78C2" stroke-width="1"/></svg>
<span class="t" style="left:89.26px;top:118.98px;font-size:15.5px;color:#262626;transform:scaleX(0.9529);">Copy</span>
<svg class="a" style="left:138.2px;top:125.1px" width="7.5" height="4.8"><path d="M1 1 L3.75 3.8 L6.5 1" fill="none" stroke="#444" stroke-width="1.1"/></svg>
<svg class="a" style="left:66px;top:147px;" width="19" height="18"><path d="M2 10.5 L9 6 L12.5 11 L6.5 16z" fill="#EDBE6E"/><path d="M9.5 5.5 l3.2-2 l3 4.6 l-3.2 2z" fill="#666"/><path d="M12.5 3.3 L16.5 1.2" stroke="#555" stroke-width="2"/></svg>
<span class="t" style="left:88.82px;top:148.48px;font-size:15.5px;color:#262626;transform:scaleX(0.9483);">Format Painter</span>
<span class="t" style="left:61.81px;top:178.45px;font-size:14px;color:#262626;transform:scaleX(0.9821);">Clipboard</span>
<svg class="a" style="left:190px;top:180px;" width="11" height="10"><path d="M.5 4.5V.5H4.5" fill="none" stroke="#ABABAB" stroke-width="1"/><path d="M3 3l5.5 5 M9 5v4h-4.5" fill="none" stroke="#9a9a9a" stroke-width="1"/></svg>
<svg class="a" style="left:220px;top:86px;" width="41" height="37"><rect x="4.5" y="8.500" width="34" height="26.500" rx="2" fill="#fff" stroke="#8a8a8a" stroke-width="1.100"/><rect x="9.500" y="13" width="24" height="6.500" fill="#CDCDCD"/><path d="M9.500 24.500h2 M14 24.500h19.500 M9.500 28.500h2 M14 28.500h19.500" stroke="#ABABAB" stroke-width="1"/><g stroke="#EDBE72" stroke-width="1.800"><path d="M8 1.800v14 M1 8.800h14 M3 3.800l10 10 M13 3.800l-10 10"/></g><circle cx="8" cy="8.800" r="2.700" fill="#fff" stroke="#EDBE72" stroke-width="1"/></svg>
<span class="t" style="left:225.49px;top:132.90px;font-size:15px;color:#262626;transform:scaleX(1.0091);">New</span>
<span class="t" style="left:216.62px;top:152.90px;font-size:15px;color:#262626;transform:scaleX(1.0023);">Slide</span>
<svg class="a" style="left:255.2px;top:158.6px" width="7.5" height="4.8"><path d="M1 1 L3.75 3.8 L6.5 1" fill="none" stroke="#444" stroke-width="1.1"/></svg>
<svg class="a" style="left:270px;top:89px;" width="22" height="18"><rect x="1.300" y="1.500" width="19.300" height="15" rx="1" fill="#fff" stroke="#6a6a6a" stroke-width="1.200"/><rect x="4" y="4" width="14" height="3.600" fill="#CDCDCD"/><rect x="4" y="9" width="5.800" height="4.800" fill="#CDCDCD"/><path d="M12 9.500h6 M12 11.500h6 M12 13.500h4" stroke="#ABABAB" stroke-width="1"/></svg>
<span class="t" style="left:294.22px;top:90.48px;font-size:15.5px;color:#262626;transform:scaleX(0.9531);">Layout</span>
<svg class="a" style="left:344.2px;top:96.1px" width="7.5" height="4.8"><path d="M1 1 L3.75 3.8 L6.5 1" fill="none" stroke="#444" stroke-width="1.1"/></svg>
<svg class="a" style="left:270px;top:117px;" width="22" height="19"><rect x="3.800" y="3.800" width="16.800" height="13.800" rx="1" fill="#fff" stroke="#6a6a6a" stroke-width="1.200"/><rect x="6" y="9.500" width="5.500" height="6" fill="#CDCDCD"/><rect x="11" y="5.500" width="7.500" height="2.500" fill="#CDCDCD"/><path d="M13 10.500h6 M13 12.500h6 M13 14.500h4" stroke="#ABABAB" stroke-width="1"/><path d="M3 8.200 C3.500 3.500 8.500 1.200 12.800 4.200" fill="none" stroke="#F3F3F3" stroke-width="4.500"/><path d="M3.200 7.500 C4 3.500 8.500 2 12.500 4.500" fill="none" stroke="#3A78C2" stroke-width="2.300"/><path d="M.6 5 L6.800 6.800 L2.200 9.800z" fill="#3A78C2"/></svg>
<span class="t" style="left:294.29px;top:118.98px;font-size:15.5px;color:#262626;transform:scaleX(0.8985);">Reset</span>
<svg class="a" style="left:270px;top:146px;" width="22" height="19"><g stroke="#D0D0D0" stroke-width="1.1"><path d="M4 .5v7 M.5 4h7 M1.5 1.5l5 5 M6.5 1.5l-5 5"/></g><rect x="8" y="3.5" width="12.5" height="3.5" fill="#F6F1F6" stroke="#C6C6C6"/><rect x="8" y="9.5" width="12.5" height="8.5" fill="#F6F1F6" stroke="#C6C6C6"/><rect x="10" y="11.5" width="8.5" height="2" fill="#D0D0D0"/></svg>
<span class="t" style="left:294.73px;top:148.48px;font-size:15.5px;color:#B4B4B4;transform:scaleX(0.9575);">Section</span>
<svg class="a" style="left:349.2px;top:154.1px" width="7.5" height="4.8"><path d="M1 1 L3.75 3.8 L6.5 1" fill="none" stroke="#B4B4B4" stroke-width="1.1"/></svg>
<span class="t" style="left:272.73px;top:178.45px;font-size:14px;color:#262626;transform:scaleX(0.9028);">Slides</span>
<div class="a" style="left:387px;top:94px;width:193px;height:29px;background:#E6E6E6;border:1px solid #C8C8C8;box-sizing:border-box"></div>
<div class="a" style="left:582px;top:94px;width:57px;height:29px;background:#E6E6E6;border:1px solid #C8C8C8;box-sizing:border-box"></div>
<svg class="a" style="left:567px;top:106px;" width="8" height="5"><path d="M.5 .5h6l-3 3z" fill="#BDBDBD"/></svg>
<svg class="a" style="left:626px;top:106px;" width="8" height="5"><path d="M.5 .5h6l-3 3z" fill="#BDBDBD"/></svg>
<span class="t" style="left:649.59px;top:100.70px;font-size:15px;color:#B4B4B4;font-weight:bold;transform:scaleX(1.0905);">A</span>
<svg class="a" style="left:658px;top:98px;" width="8" height="5"><path d="M.5 4l3-3 3 3z" fill="#B8B8B8"/></svg>
<span class="t" style="left:678.63px;top:101.55px;font-size:14px;color:#B4B4B4;font-weight:bold;transform:scaleX(1.0621);">A</span>
<svg class="a" style="left:687px;top:99px;" width="8" height="5"><path d="M.5 .8h6l-3 3z" fill="#B8B8B8"/></svg>
<div class="a" style="left:702.8px;top:95px;width:1px;height:27px;background:#D2D2D2"></div>
<span class="t" style="left:714.50px;top:98.37px;font-size:11.5px;color:#B2B2B2;transform:scaleX(1.0461);">A</span>
<svg class="a" style="left:716px;top:101px;" width="18" height="18"><path d="M3.5 11.5 L11 4 a1.6 1.6 0 0 1 2.2 0 L15.5 6.3 a1.6 1.6 0 0 1 0 2.2 L8.5 15.5z" fill="#C4C4C4"/><path d="M2.5 13 l5 4.2" stroke="#C4C4C4" stroke-width="1.6"/></svg>
<span class="t" style="left:394.42px;top:139.46px;font-size:16px;color:#B4B4B4;font-weight:bold;transform:scaleX(0.9388);">B</span>
<span class="t" style="left:428.78px;top:139.22px;font-size:16.5px;color:#B2B2B2;font-family:'Liberation Serif',serif;font-weight:bold;transform:scaleX(0.9697);font-style:italic;">I</span>
<span class="t" style="left:454.36px;top:138.88px;font-size:15.5px;color:#B4B4B4;font-weight:bold;transform:scaleX(1.1136);">U</span>
<div class="a" style="left:455.4px;top:154px;width:10.5px;height:1.2px;background:#B8B8B8"></div>
<span class="t" style="left:485.83px;top:139.03px;font-size:16.5px;color:#B0B0B0;font-weight:bold;transform:scaleX(1.0260);text-shadow:1.5px 1.5px 1.5px #c8c8c8;">S</span>
<span class="t" style="left:510.76px;top:141.57px;font-size:13.5px;color:#B2B2B2;transform:scaleX(0.9349);">abc</span>
<div class="a" style="left:511px;top:148.3px;width:20px;height:1px;background:#B8B8B8"></div>
<span class="t" style="left:542.50px;top:138.15px;font-size:14px;color:#B2B2B2;transform:scaleX(0.9960);">AV</span>
<svg class="a" style="left:542px;top:151px;" width="19" height="6"><path d="M1 3h17 M3.5 .7L1 3l2.5 2.3 M15.5 .7L18 3l-2.5 2.3" fill="none" stroke="#B8B8B8" stroke-width="1"/></svg>
<svg class="a" style="left:567.2px;top:145.1px" width="7.5" height="4.8"><path d="M1 1 L3.75 3.8 L6.5 1" fill="none" stroke="#B2B2B2" stroke-width="1.1"/></svg>
<span class="t" style="left:590.80px;top:139.80px;font-size:15px;color:#B2B2B2;transform:scaleX(0.9361);">Aa</span>
<svg class="a" style="left:615.2px;top:145.1px" width="7.5" height="4.8"><path d="M1 1 L3.75 3.8 L6.5 1" fill="none" stroke="#B2B2B2" stroke-width="1.1"/></svg>
<div class="a" style="left:635.3px;top:134px;width:1px;height:27px;background:#D2D2D2"></div>
<span class="t" style="left:644.02px;top:135.27px;font-size:11.5px;color:#B2B2B2;transform:scaleX(0.9732);">ab</span>
<svg class="a" style="left:648px;top:138px;" width="17" height="14"><path d="M3 12 L11 2.5 a1.5 1.5 0 0 1 2 0 l1.5 1.5 L6.5 13z" fill="#C0C0C0"/></svg>
<div class="a" style="left:644px;top:152px;width:20px;height:4.5px;background:#EADFE8"></div>
<svg class="a" style="left:673.0px;top:145.1px" width="7.5" height="4.8"><path d="M1 1 L3.75 3.8 L6.5 1" fill="none" stroke="#B2B2B2" stroke-width="1.1"/></svg>
<span class="t" style="left:696.24px;top:136.99px;font-size:17.5px;color:#B4B4B4;font-weight:bold;transform:scaleX(1.0451);">A</span>
<svg class="a" style="left:722.0px;top:145.1px" width="7.5" height="4.8"><path d="M1 1 L3.75 3.8 L6.5 1" fill="none" stroke="#B2B2B2" stroke-width="1.1"/></svg>
<span class="t" style="left:537.28px;top:178.45px;font-size:14px;color:#262626;transform:scaleX(0.9101);">Font</span>
<svg class="a" style="left:731px;top:180px;" width="11" height="10"><path d="M.5 4.5V.5H4.5" fill="none" stroke="#ABABAB" stroke-width="1"/><path d="M3 3l5.5 5 M9 5v4h-4.5" fill="none" stroke="#9a9a9a" stroke-width="1"/></svg>
<svg class="a" style="left:760px;top:98px;" width="20" height="19"><circle cx="2" cy="2.5" r="1.5" fill="#B8B8B8"/><circle cx="2" cy="9.5" r="1.5" fill="#B8B8B8"/><circle cx="2" cy="16.5" r="1.5" fill="#B8B8B8"/><path d="M6.5 2.5h12.5 M6.5 9.5h12.5 M6.5 16.5h12.5" stroke="#B8B8B8" stroke-width="1"/></svg>
<svg class="a" style="left:789.2px;top:106.1px" width="7.5" height="4.8"><path d="M1 1 L3.75 3.8 L6.5 1" fill="none" stroke="#B2B2B2" stroke-width="1.1"/></svg>
<svg class="a" style="left:809px;top:98px;" width="20" height="19"><path d="M6.5 2.5h12.5 M6.5 9.5h12.5 M6.5 16.5h12.5" stroke="#B8B8B8" stroke-width="1"/><path d="M1 1.2l1-.7v4 M.7 7.5c2-1 2.6 0 .2 3.2h2.3 M.8 14.3c2.2-.8 2.4 1.4.6 1.7 c2 .2 2 2.6-.8 1.9" fill="none" stroke="#B8B8B8" stroke-width=".8"/></svg>
<svg class="a" style="left:838.0px;top:106.1px" width="7.5" height="4.8"><path d="M1 1 L3.75 3.8 L6.5 1" fill="none" stroke="#B2B2B2" stroke-width="1.1"/></svg>
<div class="a" style="left:856.3px;top:95px;width:1px;height:27px;background:#D2D2D2"></div>
<svg class="a" style="left:865px;top:99px;" width="20" height="18"><path d="M0 .5h19 M10 4.5h9 M10 8.5h9 M10 12.5h9 M0 16.5h19" stroke="#B8B8B8" stroke-width="1"/><path d="M1 8.5h8 M4.5 5L1 8.5l3.5 3.5" fill="none" stroke="#B8B8B8" stroke-width="1.3"/></svg>
<svg class="a" style="left:895px;top:99px;" width="20" height="18"><path d="M0 .5h19 M10 4.5h9 M10 8.5h9 M10 12.5h9 M0 16.5h19" stroke="#B8B8B8" stroke-width="1"/><path d="M0 8.5h8 M4.5 5L8 8.5l-3.5 3.5" fill="none" stroke="#B8B8B8" stroke-width="1.3"/></svg>
<div class="a" style="left:923.5px;top:95px;width:1px;height:27px;background:#D2D2D2"></div>
<svg class="a" style="left:932px;top:98px;" width="19" height="20"><path d="M8 3.5h10 M8 7.5h10 M8 11.5h10 M8 15.5h10" stroke="#B8B8B8" stroke-width="1"/><path d="M3.5 1.5v16 M.8 4.5l2.7-3 2.7 3 M.8 14.5l2.7 3 2.7-3" fill="none" stroke="#B8B8B8" stroke-width="1.3"/></svg>
<svg class="a" style="left:958.2px;top:106.1px" width="7.5" height="4.8"><path d="M1 1 L3.75 3.8 L6.5 1" fill="none" stroke="#B2B2B2" stroke-width="1.1"/></svg>
<svg class="a" style="left:762.5px;top:142px;" width="24" height="14.6"><path d="M0 0.5h14.5" stroke="#B8B8B8" stroke-width="1"/><path d="M0 3.9h11" stroke="#B8B8B8" stroke-width="1"/><path d="M0 7.3h14.5" stroke="#B8B8B8" stroke-width="1"/><path d="M0 10.7h11" stroke="#B8B8B8" stroke-width="1"/></svg>
<svg class="a" style="left:791.7px;top:142px;" width="24" height="14.6"><path d="M0 0.5h16" stroke="#B8B8B8" stroke-width="1"/><path d="M3 3.9h10" stroke="#B8B8B8" stroke-width="1"/><path d="M0 7.3h16" stroke="#B8B8B8" stroke-width="1"/><path d="M3 10.7h10" stroke="#B8B8B8" stroke-width="1"/></svg>
<svg class="a" style="left:822.5px;top:142px;" width="24" height="14.6"><path d="M0 0.5h14.5" stroke="#B8B8B8" stroke-width="1"/><path d="M3.5 3.9h11" stroke="#B8B8B8" stroke-width="1"/><path d="M0 7.3h14.5" stroke="#B8B8B8" stroke-width="1"/><path d="M3.5 10.7h11" stroke="#B8B8B8" stroke-width="1"/></svg>
<svg class="a" style="left:851.7px;top:140px;" width="24" height="17.0"><path d="M0 0.5h16.5" stroke="#B8B8B8" stroke-width="1"/><path d="M0 3.7h16.5" stroke="#B8B8B8" stroke-width="1"/><path d="M0 6.9h16.5" stroke="#B8B8B8" stroke-width="1"/><path d="M0 10.100000000000001h16.5" stroke="#B8B8B8" stroke-width="1"/><path d="M0 13.3h16.5" stroke="#B8B8B8" stroke-width="1"/></svg>
<svg class="a" style="left:876.2px;top:145.1px" width="7.5" height="4.8"><path d="M1 1 L3.75 3.8 L6.5 1" fill="none" stroke="#B2B2B2" stroke-width="1.1"/></svg>
<div class="a" style="left:896.3px;top:134px;width:1px;height:27px;background:#D2D2D2"></div>
<svg class="a" style="left:906px;top:141px;" width="17" height="12"><path d="M.5 2.5v6l4-3z" fill="#B8B8B8"/><path d="M11 1v10 M14 1v10 M15.5 1h-6" stroke="#B8B8B8" stroke-width="1.2" fill="none"/><path d="M11 1a3 3 0 0 0 0 6z" fill="#B8B8B8"/></svg>
<svg class="a" style="left:937px;top:141px;" width="17" height="12"><path d="M16 2.5v6l-4-3z" fill="#B8B8B8"/><path d="M4 1v10 M7 1v10 M8.5 1h-6" stroke="#B8B8B8" stroke-width="1.2" fill="none"/><path d="M4 1a3 3 0 0 0 0 6z" fill="#B8B8B8"/></svg>
<div class="a" style="left:963px;top:134px;width:1px;height:27px;background:#D2D2D2"></div>
<svg class="a" style="left:973px;top:140px;" width="18" height="14"><path d="M0 .5h7.5 M0 3.7h7.5 M0 6.9h7.5 M0 10.1h7.5 M0 13.3h7.5 M9.5 .5h7.5 M9.5 3.7h7.5 M9.5 6.9h7.5 M9.5 10.1h7.5 M9.5 13.3h7.5" stroke="#B8B8B8" stroke-width="1"/></svg>
<svg class="a" style="left:998.0px;top:145.1px" width="7.5" height="4.8"><path d="M1 1 L3.75 3.8 L6.5 1" fill="none" stroke="#B2B2B2" stroke-width="1.1"/></svg>
<svg class="a" style="left:1018px;top:88px;" width="21" height="21"><path d="M2 2v16 M5.5 2v16 M9.5 12v6 M16.5 12v6 M.3 16l1.7 2.3 1.7-2.3 M3.8 16l1.7 2.3 1.7-2.3 M7.8 16l1.7 2.3 1.7-2.3 M14.8 16l1.7 2.3 1.7-2.3" fill="none" stroke="#ABABAB" stroke-width="1"/></svg>
<span class="t" style="left:1028.50px;top:88.94px;font-size:12px;color:#ABABAB;transform:scaleX(1.1278);">A</span>
<span class="t" style="left:1042.19px;top:90.68px;font-size:15.5px;color:#B4B4B4;transform:scaleX(0.9853);">Text Direction</span>
<svg class="a" style="left:1139.2px;top:96.1px" width="7.5" height="4.8"><path d="M1 1 L3.75 3.8 L6.5 1" fill="none" stroke="#B2B2B2" stroke-width="1.1"/></svg>
<svg class="a" style="left:1018px;top:117px;" width="21" height="20"><path d="M1 5.5v-4h4 M15 1.5h4v4 M1 13v4.5h4 M15 17.5h4v-4.5" fill="none" stroke="#ABABAB" stroke-width="1.1"/><path d="M5 9.5h10" stroke="#D8C8D8" stroke-width="1"/><path d="M10 1v6.5 M7.7 3.5L10 1l2.3 2.5 M10 11.5v7 M7.7 16l2.3 2.5 2.3-2.5" fill="none" stroke="#ABABAB" stroke-width="1.1"/></svg>
<span class="t" style="left:1042.50px;top:119.48px;font-size:15.5px;color:#B4B4B4;transform:scaleX(0.9724);">Align Text</span>
<svg class="a" style="left:1113.2px;top:125.1px" width="7.5" height="4.8"><path d="M1 1 L3.75 3.8 L6.5 1" fill="none" stroke="#B2B2B2" stroke-width="1.1"/></svg>
<svg class="a" style="left:1018px;top:148px;" width="21" height="17"><path d="M0 1h12l-4 4.5 4 4.5h-12z" fill="#C0C0C0" transform="scale(.85)"/><rect x="6.5" y="6.5" width="13" height="9.5" fill="#F6F1F6" stroke="#ABABAB" stroke-width="1"/><path d="M9 9.5h1.5 M12 9.5h5.5 M9 12.8h1.5 M12 12.8h5.5" stroke="#ABABAB" stroke-width="1"/></svg>
<span class="t" style="left:1041.75px;top:148.48px;font-size:15.5px;color:#B4B4B4;transform:scaleX(0.9644);">Convert to SmartArt</span>
<svg class="a" style="left:1179.2px;top:154.1px" width="7.5" height="4.8"><path d="M1 1 L3.75 3.8 L6.5 1" fill="none" stroke="#B2B2B2" stroke-width="1.1"/></svg>
<span class="t" style="left:934.44px;top:178.25px;font-size:14px;color:#262626;transform:scaleX(0.9466);">Paragraph</span>
<svg class="a" style="left:1192px;top:180px;" width="11" height="10"><path d="M.5 4.5V.5H4.5" fill="none" stroke="#ABABAB" stroke-width="1"/><path d="M3 3l5.5 5 M9 5v4h-4.5" fill="none" stroke="#9a9a9a" stroke-width="1"/></svg>
<div class="a" style="left:1218px;top:88px;width:165px;height:78px;background:#fff;border:1px solid #C8C8C8;box-sizing:border-box"></div>
<div class="a" style="left:1364px;top:89px;width:18px;height:76px;background:#E3E3E3;border-left:1px solid #D0D0D0;box-sizing:border-box"></div>
<div class="a" style="left:1364px;top:114px;width:18px;height:1px;background:#CFCFCF"></div>
<div class="a" style="left:1364px;top:139.5px;width:18px;height:1px;background:#CFCFCF"></div>
<svg class="a" style="left:1370px;top:99px;" width="7" height="5"><path d="M.5 4l2.5-3 2.5 3z" fill="#C4C4C4"/></svg>
<svg class="a" style="left:1370px;top:125px;" width="7" height="5"><path d="M.5 1h5l-2.5 3z" fill="#C4C4C4"/></svg>
<svg class="a" style="left:1370px;top:148px;" width="7" height="9"><path d="M.5 1h5" stroke="#C4C4C4"/><path d="M.5 4h5l-2.5 3z" fill="#C4C4C4"/></svg>
<svg class="a" style="left:1218px;top:91px;" width="146" height="74"><rect x="3.5" y="5" width="18" height="14" stroke="#A8A8A8" stroke-width="1" fill="#F6F1F6"/><path d="M6.5 13h12 M6.5 16h12 M6.5 9h4" stroke="#B0B0B0" stroke-width=".9"/><path d="M6.5 11l2-4.5 2 4.5" stroke="#A8A8A8" stroke-width="1" fill="none" stroke-width=".8"/><path d="M27.5 4L44.5 20" stroke="#A8A8A8" stroke-width="1" fill="none"/><path d="M51.5 4L68.5 20 M68.5 15.5v4.5h-4.5" stroke="#A8A8A8" stroke-width="1" fill="none"/><rect x="76.0" y="6" width="17" height="12.5" stroke="#A8A8A8" stroke-width="1" fill="#F6F1F6"/><ellipse cx="108.5" cy="12" rx="8.7" ry="6.7" stroke="#A8A8A8" stroke-width="1" fill="#F6F1F6"/><rect x="124.0" y="6" width="17" height="12.5" rx="3" stroke="#A8A8A8" stroke-width="1" fill="#F6F1F6"/><path d="M12.5 28L20.5 43.5H4.5z" stroke="#A8A8A8" stroke-width="1" fill="#F6F1F6"/><path d="M28.5 29.5h8v13h8.5" stroke="#A8A8A8" stroke-width="1" fill="none"/><path d="M52.5 29.5h8v13h8 M65.5 39.5l3 3-3 3" stroke="#A8A8A8" stroke-width="1" fill="none"/><path d="M76.5 33h8v-4.5l8 7.5-8 7.5v-4.5h-8z" stroke="#A8A8A8" stroke-width="1" fill="#F6F1F6"/><path d="M105.0 28h7v8h4.5l-8 8-8-8h4.5z" stroke="#A8A8A8" stroke-width="1" fill="#F6F1F6"/><path d="M124.5 33a4 4 0 0 1 4-4h8v5a2.5 2.5 0 0 0 2.5 2.5h2v7.500h-16.5z" stroke="#A8A8A8" stroke-width="1" fill="#F6F1F6"/><path d="M7.5 52c6 0 7 4 2 7s-3 8 1 8 4-4 1-5-4 3-1 6" stroke="#A8A8A8" stroke-width="1" fill="none"/><path d="M28.5 53c9 0 16 6 16 15" stroke="#A8A8A8" stroke-width="1" fill="none"/><path d="M52.0 64c3-6 5-12 8-11s3 14 9 14" stroke="#A8A8A8" stroke-width="1" fill="none"/><path d="M87.5 52c-3 0-3.500 1-3.500 3v3c0 1.500-1 2-2.500 2 1.500 0 2.500.5 2.500 2v3c0 2 .5 3 3.500 3" stroke="#A8A8A8" stroke-width="1" fill="none"/><path d="M105.5 52c3 0 3.500 1 3.500 3v3c0 1.500 1 2 2.500 2-1.500 0-2.500.5-2.500 2v3c0 2-.5 3-3.500 3" stroke="#A8A8A8" stroke-width="1" fill="none"/><path d="M132.5 52l2.300 5.500 5.900.5-4.500 3.900 1.400 5.800-5.100-3.100-5.100 3.100 1.400-5.800-4.500-3.900 5.900-.5z" stroke="#A8A8A8" stroke-width="1" fill="#F6F1F6"/></svg>
<svg class="a" style="left:1397px;top:89px;" width="38" height="37"><rect x="7.500" y="7.500" width="21" height="21" fill="#EDC06F"/><rect x="1" y="1" width="14.500" height="14.500" fill="#fff" stroke="#6a6a6a" stroke-width="1.1"/><rect x="20" y="20" width="15" height="15" fill="#fff" stroke="#6a6a6a" stroke-width="1.1"/></svg>
<span class="t" style="left:1389.00px;top:132.70px;font-size:15px;color:#262626;transform:scaleX(1.0005);">Arrange</span>
<svg class="a" style="left:1412.2px;top:157.1px" width="7.5" height="4.8"><path d="M1 1 L3.75 3.8 L6.5 1" fill="none" stroke="#444" stroke-width="1.1"/></svg>
<svg class="a" style="left:1455px;top:90px;" width="40" height="39"><rect x="1" y="1" width="32" height="32" rx="7" fill="#F6F1F6" stroke="#C4C4C4" stroke-width="1.1"/><path d="M37.500 11 L38 21 L28 29 L25 25z" fill="#B8B8B8"/><path d="M24 27l3.500 3.500c-2 4-7 6-15 6.500 4-2 5-5 7-8.500z" fill="#B8B8B8"/></svg>
<span class="t" style="left:1454.85px;top:132.70px;font-size:15px;color:#B4B4B4;transform:scaleX(0.9685);">Quick</span>
<span class="t" style="left:1446.86px;top:152.70px;font-size:15px;color:#B4B4B4;transform:scaleX(0.9461);">Styles</span>
<svg class="a" style="left:1490.2px;top:157.6px" width="7.5" height="4.8"><path d="M1 1 L3.75 3.8 L6.5 1" fill="none" stroke="#B8B8B8" stroke-width="1.1"/></svg>
<svg class="a" style="left:1507px;top:87px;" width="20" height="19"><path d="M6.500 4.500l8 3.500 3 5-7 4.500-7.500-6z" fill="#F6F1F6" stroke="#ABABAB" stroke-width="1.100"/><path d="M5.500 6V3a2 2 0 0 1 4 0v4" fill="none" stroke="#ABABAB" stroke-width="1.100"/><path d="M17.500 12c1 1.500 1.500 2.500 1.500 3.200a1.300 1.300 0 0 1-2.600 0c0-.7.400-1.700 1.100-3.200z" fill="#ABABAB"/></svg>
<span class="t" style="left:1529.84px;top:90.68px;font-size:15.5px;color:#B4B4B4;transform:scaleX(0.9408);">Shape Fill</span>
<svg class="a" style="left:1599.2px;top:96.1px" width="7.5" height="4.8"><path d="M1 1 L3.75 3.8 L6.5 1" fill="none" stroke="#B8B8B8" stroke-width="1.1"/></svg>
<svg class="a" style="left:1505px;top:116px;" width="22" height="18"><path d="M11 3.500H1.500v12.500H14V11" fill="none" stroke="#ABABAB" stroke-width="1.200"/><path d="M7 13.500l1-3.500L17 1.500a1.200 1.200 0 0 1 1.700 0l.8.800a1.200 1.200 0 0 1 0 1.700L10.500 12.500z" fill="#BDBDBD"/></svg>
<span class="t" style="left:1529.84px;top:119.48px;font-size:15.5px;color:#B4B4B4;transform:scaleX(0.9497);">Shape Outline</span>
<svg class="a" style="left:1628.2px;top:125.1px" width="7.5" height="4.8"><path d="M1 1 L3.75 3.8 L6.5 1" fill="none" stroke="#B8B8B8" stroke-width="1.1"/></svg>
<svg class="a" style="left:1506px;top:148px;" width="20" height="16"><path d="M5 1.500h11a2 2 0 0 1 2 2.300l-1.800 8.200H1.800L3.200 3a2 2 0 0 1 1.800-1.500z" fill="#F6F1F6" stroke="#ABABAB" stroke-width="1.100"/><path d="M1.800 12h14.400l-.6 1.500a2 2 0 0 1-1.800 1.300H3a1.500 1.500 0 0 1-1.400-2z" fill="#B0B0B0"/></svg>
<span class="t" style="left:1529.85px;top:148.48px;font-size:15.5px;color:#B4B4B4;transform:scaleX(0.9292);">Shape Effects</span>
<svg class="a" style="left:1624.2px;top:154.1px" width="7.5" height="4.8"><path d="M1 1 L3.75 3.8 L6.5 1" fill="none" stroke="#B8B8B8" stroke-width="1.1"/></svg>
<span class="t" style="left:1394.43px;top:178.25px;font-size:14px;color:#262626;transform:scaleX(0.9524);">Drawing</span>
<svg class="a" style="left:1638px;top:180px;" width="11" height="10"><path d="M.5 4.5V.5H4.5" fill="none" stroke="#ABABAB" stroke-width="1"/><path d="M3 3l5.5 5 M9 5v4h-4.5" fill="none" stroke="#9a9a9a" stroke-width="1"/></svg>
<svg class="a" style="left:1667px;top:88px;" width="21" height="21"><circle cx="12.700" cy="7.300" r="5.600" fill="none" stroke="#3A78C2" stroke-width="1.700"/><path d="M8.600 11.400L1.500 18.500" stroke="#3A78C2" stroke-width="2.400"/></svg>
<span class="t" style="left:1690.09px;top:90.18px;font-size:15.5px;color:#262626;transform:scaleX(0.9736);">Find</span>
<span class="t" style="left:1667.19px;top:116.17px;font-size:11.5px;color:#555;font-weight:bold;transform:scaleX(0.9752);">a</span>
<span class="t" style="left:1672.96px;top:116.17px;font-size:11.5px;color:#8E4EB5;font-weight:bold;transform:scaleX(1.1192);">b</span>
<span class="t" style="left:1675.19px;top:125.67px;font-size:11.5px;color:#555;font-weight:bold;transform:scaleX(0.9752);">a</span>
<span class="t" style="left:1681.38px;top:125.67px;font-size:11.5px;color:#3A78C2;font-weight:bold;transform:scaleX(0.9760);">c</span>
<svg class="a" style="left:1666px;top:127px;" width="10" height="9"><path d="M1.500 .5v2.500a2 2 0 0 0 2 2h4.500 M5.800 2.500l2.400 2.500-2.400 2.500" fill="none" stroke="#3A78C2" stroke-width="1.200"/></svg>
<span class="t" style="left:1690.12px;top:118.98px;font-size:15.5px;color:#262626;transform:scaleX(0.9555);">Replace</span>
<svg class="a" style="left:1758.0px;top:125.1px" width="7.5" height="4.8"><path d="M1 1 L3.75 3.8 L6.5 1" fill="none" stroke="#444" stroke-width="1.1"/></svg>
<svg class="a" style="left:1671px;top:146px;" width="14" height="20"><path d="M1.500 1.800v13.700l3.300-3 2.400 5.500 2.300-1-2.400-5.300h4.400z" fill="#fff" stroke="#555" stroke-width="1.100" stroke-linejoin="round"/></svg>
<span class="t" style="left:1690.65px;top:148.28px;font-size:15.5px;color:#262626;transform:scaleX(0.9382);">Select</span>
<svg class="a" style="left:1736.2px;top:154.1px" width="7.5" height="4.8"><path d="M1 1 L3.75 3.8 L6.5 1" fill="none" stroke="#444" stroke-width="1.1"/></svg>
<span class="t" style="left:1696.22px;top:178.35px;font-size:14px;color:#262626;transform:scaleX(0.9605);">Editing</span>
<svg class="a" style="left:1896px;top:183px;" width="15" height="9"><path d="M1 7.800L7.200 1.300 13.500 7.800" fill="none" stroke="#444" stroke-width="1.200"/></svg>
<div class="a" style="left:1900px;top:197px;width:20px;height:806px;background:#DCDCDC"></div>
<div class="a" style="left:1900px;top:198px;width:19px;height:19px;background:#fff;border:1px solid #C8C8C8;box-sizing:border-box"></div>
<svg class="a" style="left:1904px;top:203px;" width="11" height="8"><path d="M1 6.500l4.500-5 4.500 5z" fill="#777"/></svg>
<div class="a" style="left:1900px;top:276px;width:19px;height:55px;background:#fff;border:1px solid #ABABAB;box-sizing:border-box"></div>
<div class="a" style="left:1900px;top:982px;width:19px;height:19px;background:#fff;border:1px solid #C8C8C8;box-sizing:border-box"></div>
<svg class="a" style="left:1904px;top:988px;" width="11" height="8"><path d="M1 1.500h9l-4.500 5z" fill="#777"/></svg>
<div class="a" style="left:0px;top:1003px;width:1920px;height:1px;background:#C8C8C8"></div>
<div class="a" style="left:0px;top:1004px;width:1920px;height:26px;background:#F3F3F3"></div>
<span class="t" style="left:9.41px;top:1010.80px;font-size:13px;color:#444;transform:scaleX(1.0142);">Slide 1 of 358</span>
<svg class="a" style="left:113px;top:1008px;" width="20" height="17"><path d="M1.500 1.500h6.500l1.500 1.500v11l-1.500-1h-6.500z M9.500 3l1.500-1.500h4" fill="none" stroke="#777" stroke-width="1"/><path d="M9.500 14l1.500-1h6v-4" fill="none" stroke="#777" stroke-width="1"/><path d="M10.500 10.500l.7-2.500 5-5 1.800 1.800-5 5z" fill="#666"/></svg>
<span class="t" style="left:152.22px;top:1010.80px;font-size:13px;color:#444;transform:scaleX(0.9856);">English (United States)</span>
<div class="a" style="left:1525.5px;top:1004px;width:49.5px;height:26px;background:#C8C8C8"></div>
<svg class="a" style="left:1491px;top:1009px;" width="18" height="16"><rect x=".5" y="1" width="16.500" height="14" fill="none" stroke="#777" stroke-width="1.100"/><path d="M4.500 1v14 M4.500 10.500h12.500" stroke="#777" stroke-width="1.100"/><rect x="7" y="3.500" width="7.500" height="4.500" fill="none" stroke="#777" stroke-width="1.100"/></svg>
<svg class="a" style="left:1540px;top:1009px;" width="18" height="16"><rect x="1" y="1.500" width="6" height="4.500" fill="none" stroke="#777" stroke-width="1.100"/><rect x="10" y="1.500" width="6" height="4.500" fill="none" stroke="#777" stroke-width="1.100"/><rect x="1" y="9.500" width="6" height="4.500" fill="none" stroke="#777" stroke-width="1.100"/><rect x="10" y="9.500" width="6" height="4.500" fill="none" stroke="#777" stroke-width="1.100"/></svg>
<svg class="a" style="left:1591px;top:1009px;" width="18" height="16"><path d="M8.500 3c-2-1.500-5-1.500-7.500-1v11.500c2.500-.5 5.500-.5 7.500 1 2-1.500 5-1.500 7.500-1v-11.500c-2.500-.5-5.500-.5-7.500 1z M8.500 3v13" fill="none" stroke="#777" stroke-width="1.100"/><path d="M3 4.500h3.500 M3 6.800h3.500 M3 9.100h3.500 M3 11.400h3.500 M10.500 4.500h3.500 M10.500 6.800h3.500 M10.500 9.100h3.500 M10.500 11.400h3.500" stroke="#777" stroke-width=".8"/></svg>
<svg class="a" style="left:1641px;top:1009px;" width="18" height="16"><path d="M.5 1.500h16.500 M2 1.500v8h13.500v-8 M8.700 9.500v4.500 M6 14.500h5.500" fill="none" stroke="#777" stroke-width="1.100"/></svg>
<div class="a" style="left:1682px;top:1016px;width:9.5px;height:1.2px;background:#555"></div>
<div class="a" style="left:1697.5px;top:1016.3px;width:125px;height:1px;background:#B8B8B8"></div>
<div class="a" style="left:1760px;top:1013px;width:1px;height:7px;background:#B8B8B8"></div>
<div class="a" style="left:1733px;top:1010px;width:6px;height:14px;background:#666"></div>
<div class="a" style="left:1828.8px;top:1016px;width:9.5px;height:1.2px;background:#555"></div>
<div class="a" style="left:1833px;top:1011.8px;width:1.2px;height:9.5px;background:#555"></div>
<span class="t" style="left:1854.89px;top:1010.80px;font-size:13px;color:#444;transform:scaleX(0.9327);">66%</span>
<svg class="a" style="left:1897px;top:1009px;" width="15" height="15"><rect x="1" y="1" width="12.500" height="12.500" fill="none" stroke="#777" stroke-width="1" stroke-dasharray="3 2.200 3 0"/><path d="M7.200 3v8.500 M3 7.200h8.500 M5.700 4.500l1.500-1.500 1.500 1.500 M5.700 10l1.500 1.500 1.500-1.500 M4.500 5.700L3 7.200l1.500 1.500 M10 5.700l1.500 1.500-1.500 1.500" fill="none" stroke="#777" stroke-width=".9"/></svg>
<div class="a" style="left:0px;top:1030px;width:1920px;height:50px;background:linear-gradient(90deg,#213740 0%,#22363F 50%,#1D2F40 70%,#17253C 100%)"></div>
<div class="a" style="left:60px;top:1030px;width:430px;height:49px;background:#F3F3F3;border-top:1px solid #BFBFBF;box-sizing:border-box"></div>
<svg class="a" style="left:20px;top:1045px;" width="21" height="21"><path d="M0 3l8.500-1.200v8.200H0z M10 1.600L20.500 0v10H10z M0 11.500h8.500v8.200L0 18.500z M10 11.500h10.500v10L10 19.900z" fill="#fff"/></svg>
<svg class="a" style="left:74px;top:1044px;" width="22" height="22"><circle cx="13.500" cy="8" r="6.300" fill="none" stroke="#222" stroke-width="1.500"/><path d="M9 12.500L1.500 20.500" stroke="#222" stroke-width="1.600"/></svg>
<span class="t" style="left:110.38px;top:1046.49px;font-size:19.5px;color:#2a2a2a;transform:scaleX(0.9518);">Type here to search</span>
<svg class="a" style="left:509px;top:1044px;" width="22" height="21"><path d="M1 1.500h13 M1 19.500h13" stroke="#fff" stroke-width="1.300"/><rect x="1.600" y="5.500" width="11.800" height="10" fill="none" stroke="#fff" stroke-width="1.300"/><path d="M19 1v19" stroke="#fff" stroke-width="1.300"/><rect x="17" y="7" width="4" height="3" fill="#fff"/></svg>
<svg class="a" style="left:568px;top:1039px;" width="32" height="32"><defs><linearGradient id="eg1" x1="0" y1="0" x2="1" y2="1"><stop offset="0" stop-color="#35C1F1"/><stop offset=".6" stop-color="#3FD07A"/><stop offset="1" stop-color="#6AD84A"/></linearGradient><linearGradient id="eg2" x1="0" y1="0" x2="0" y2="1"><stop offset="0" stop-color="#1B9DE2"/><stop offset="1" stop-color="#1459A8"/></linearGradient></defs><circle cx="16" cy="16" r="15" fill="url(#eg2)"/><path d="M1.200 14C2 6 8 1 16 1c8.500 0 15 5.500 15 12.500 0 5-3.500 7.500-7.500 7.500-3 0-5-1-5-2.500 0-1 1.500-1.500 1.500-4 0-3-2.500-5.500-6.500-5.500C8 9 3 11 1.200 14z" fill="url(#eg1)"/><path d="M11 17c0 6 5 11 11.500 11 2.500 0 5-.8 6.500-2-2.500 3.500-7 5.500-12 5-6-.6-11-5-12-11 1-4 4-6 6-7z" fill="#0E4C96" opacity=".85"/></svg>
<svg class="a" style="left:631px;top:1041px;" width="31" height="26"><path d="M1 3.500a1.500 1.500 0 0 1 1.500-1.500h8l3 3h14a1.500 1.500 0 0 1 1.500 1.500v3H1z" fill="#E9A923"/><rect x="1" y="6.500" width="28" height="17.500" rx="1" fill="#FFD86A"/><path d="M1 13h28v11H1z" fill="#F8CE55"/><path d="M6 24v-7.500a1 1 0 0 1 1-1h16a1 1 0 0 1 1 1v7.500h-4.500v-5h-9v5z" fill="#3D8FD8"/></svg>
<div class="a" style="left:620.7px;top:1077px;width:40.8px;height:3px;background:#76B9ED"></div>
<div class="a" style="left:662px;top:1077px;width:10px;height:3px;background:#5E95C2"></div>
<svg class="a" style="left:692px;top:1039px;" width="31" height="31"><path d="M10 8V6.500a5.500 5.500 0 0 1 11 0V8" fill="none" stroke="#E8E8E8" stroke-width="1.600"/><path d="M12 8V7a3.500 3.500 0 0 1 7 0V8" fill="none" stroke="#cfcfcf" stroke-width="1"/><path d="M1 8h29v20a2 2 0 0 1-2 2H3a2 2 0 0 1-2-2z" fill="#fff"/><rect x="9" y="12.500" width="6" height="6" fill="#F25022"/><rect x="16" y="12.500" width="6" height="6" fill="#7FBA00"/><rect x="9" y="19.500" width="6" height="6" fill="#00A4EF"/><rect x="16" y="19.500" width="6" height="6" fill="#FFB900"/></svg>
<svg class="a" style="left:754px;top:1041px;" width="32" height="26"><path d="M.5 9L16 1l15.500 8v16H.5z" fill="#fff"/><path d="M.5 9l19 8.500L31.500 9 17 21z" fill="#22363F"/><path d="M.5 9l16.500 12 L31.500 9" fill="none"/></svg>
<svg class="a" style="left:816px;top:1039px;" width="32" height="32"><circle cx="16" cy="16" r="15" fill="#DB4437"/><path d="M16 16L3 8.500A15 15 0 0 0 11.500 30.300z" fill="#0F9D58"/><path d="M16 16l-4.500 14.300A15 15 0 0 0 29 8.500z" fill="#FFCD40"/><path d="M3 8.500A15 15 0 0 1 29 8.500H16z" fill="#DB4437"/><circle cx="16" cy="16" r="6.800" fill="#fff"/><circle cx="16" cy="16" r="5.400" fill="#4285F4"/></svg>
<svg class="a" style="left:878px;top:1040px;" width="31" height="30"><circle cx="17" cy="14.500" r="13.500" fill="#ED6C47"/><path d="M17 1a13.500 13.500 0 0 1 13.500 13.500H17z" fill="#FF8F6B"/><path d="M17 14.500h13.500A13.500 13.500 0 0 1 17 28z" fill="#D35230"/><rect x="1" y="7" width="15" height="15" rx="1.500" fill="#C43E1C"/><path d="M6 18.500v-8h3.300a2.600 2.600 0 0 1 0 5.200H6" fill="none" stroke="#fff" stroke-width="1.800"/></svg>
<div class="a" style="left:868.7px;top:1077px;width:51.3px;height:3px;background:#76B9ED"></div>
<svg class="a" style="left:1425px;top:1044px;" width="31" height="22"><rect x="1.500" y="1.500" width="24" height="18.500" rx="2" fill="none" stroke="#fff" stroke-width="1.500"/><path d="M25.500 5.500h2.500a1.500 1.500 0 0 1 1.500 1.500v11a2 2 0 0 1-2 2h-3" fill="none" stroke="#fff" stroke-width="1.500"/><rect x="5.500" y="9" width="8" height="6.500" fill="none" stroke="#fff" stroke-width="1.400"/><path d="M5 5.500h17 M16 9.500h6 M16 12.500h6 M16 15.500h6" stroke="#fff" stroke-width="1.400"/></svg>
<span class="t" style="left:1464.62px;top:1047.26px;font-size:18px;color:#fff;transform:scaleX(0.9388);">44°F  Clear</span>
<svg class="a" style="left:1581px;top:1049px;" width="18" height="12"><path d="M1.500 10.500L9 2l7.500 8.500" fill="none" stroke="#fff" stroke-width="1.400"/></svg>
<svg class="a" style="left:1613px;top:1045px;" width="16" height="21"><rect x="1" y="5.500" width="9" height="9" rx="1.800" fill="none" stroke="#fff" stroke-width="1.200"/><path d="M10 9l4.500-2.500v7L10 11z" fill="none" stroke="#fff" stroke-width="1.100"/><path d="M2.500 2.500c2.500-1.500 6-1.500 8.500 0 M2.500 17.500c2.500 1.500 6 1.500 8.500 0" fill="none" stroke="#fff" stroke-width="1"/></svg>
<svg class="a" style="left:1639px;top:1046px;" width="23" height="17"><rect x="5" y="4.500" width="14.500" height="9.500" fill="#fff"/><rect x="19.500" y="7" width="1.600" height="4.500" fill="#fff"/><path d="M2 1.500v2.500 M4.300 1.500v2.500" stroke="#fff" stroke-width="1"/><path d="M.8 4h4.800v1.800a2.400 2.400 0 0 1-4.800 0z" fill="none" stroke="#fff" stroke-width="1"/><path d="M3.200 8v6.500h2" fill="none" stroke="#fff" stroke-width="1.200"/></svg>
<svg class="a" style="left:1672px;top:1047px;" width="18" height="17"><path d="M1 16C2 8 8 2 16.500 1.500" fill="none" stroke="#fff" stroke-width="1.300"/><path d="M5 16c.5-5.500 5-10 11-10.500" fill="none" stroke="#fff" stroke-width="1.300"/><path d="M9 16c.3-3.500 3-6 7-6.500" fill="none" stroke="#fff" stroke-width="1.300"/><circle cx="14.500" cy="14.500" r="1.600" fill="#fff"/></svg>
<svg class="a" style="left:1699px;top:1046px;" width="23" height="19"><path d="M1 6.500h3.500l4.500-4.500v15l-4.500-4.500H1z" fill="none" stroke="#fff" stroke-width="1.200"/><path d="M12 6.500c1.500 1.500 1.500 4.500 0 6 M15 4c3 3 3 8 0 11 M18 1.500c4.500 4.500 4.500 11.500 0 16" fill="none" stroke="#fff" stroke-width="1.200"/></svg>
<svg class="a" style="left:1741px;top:1049px;" width="14" height="13"><path d="M1.800 2V9.500Q1.800 11.400 3.800 11.400H9Q11.300 11.400 11.300 9V7.500" fill="none" stroke="#fff" stroke-width="1.300"/><circle cx="9.400" cy="6.300" r="1.900" fill="none" stroke="#fff" stroke-width="1.200"/><circle cx="9.200" cy="1.700" r=".95" fill="#fff"/></svg>
<span class="t" style="left:1785.36px;top:1036.60px;font-size:15px;color:#fff;transform:scaleX(0.9544);">9:08 PM</span>
<span class="t" style="left:1777.85px;top:1059.80px;font-size:15px;color:#fff;transform:scaleX(1.0239);">12/5/2023</span>
<svg class="a" style="left:1869px;top:1045px;" width="30" height="31"><path d="M1 1h18.500v14.500H8.500L4.500 19.500v-4H1z" fill="#fff"/><path d="M4.500 5h11.500 M4.500 8h11.500 M4.500 11h8" stroke="#1B2B40" stroke-width="1"/><circle cx="19.800" cy="20" r="9.500" fill="#2B2B2B" stroke="#3a4656" stroke-width="1"/></svg>
<span class="t" style="left:1883.89px;top:1058.80px;font-size:15px;color:#fff;font-weight:bold;transform:scaleX(1.1624);">6</span>
<div class="a" style="left:1914px;top:1030px;width:1px;height:50px;background:#4a5562"></div>
</body></html>
